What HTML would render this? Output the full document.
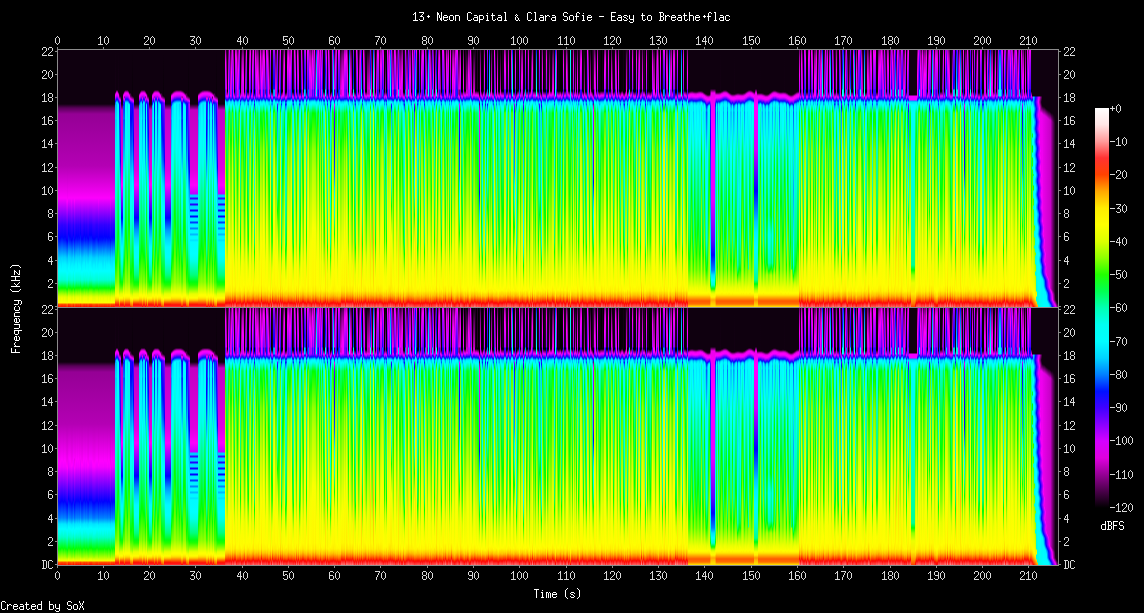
<!DOCTYPE html><html><head><meta charset="utf-8"><style>
html,body{margin:0;padding:0;background:#000;width:1144px;height:613px;overflow:hidden;position:relative}
.t{position:absolute;font-family:"Liberation Mono",monospace;font-size:13px;line-height:13px;white-space:pre;transform:scaleX(.77);transform-origin:0 0;height:13px}
</style></head><body>
<style>.sp{position:absolute;left:58px;width:1000px;height:257px;display:flex}.sp i{width:1px;height:257px;flex:none}.g0{background:linear-gradient(#0f000f,#0f000f 54px,#590059 58px,#950095 64px,#b400b4 116px,#fd00fd 148px,#3000ff 175px,#0100ff 187px,#0012ff 190px,#008cff 200px,#00d5ff 208px,#00ffff 221px,#00ffd1 230px,#00ff79 234px,#00ff04 238px,#d4ff00 246px,#f1ff00 248px,#ffff00 253px,#ff5700 254px,#ff1300 257px)}.g1{background:linear-gradient(#0f000f,#0f000f 54px,#590059 58px,#950095 64px,#b400b4 116px,#fd00fd 148px,#3700ff 175px,#0001ff 189px,#00cfff 208px,#00f7ff 216px,#00ffff 222px,#00ffd7 230px,#00ff9b 233px,#00ff0f 238px,#10ff00 239px,#a1ff00 244px,#dfff00 247px,#feff00 253px,#ff6100 254px,#ff1d00 257px)}.g2{background:linear-gradient(#0f000f,#0f000f 54px,#590059 58px,#950095 64px,#b400b4 116px,#fd00fd 148px,#3300ff 175px,#0001ff 188px,#00cbff 207px,#00f5ff 215px,#00ffff 221px,#00ffd4 230px,#00ff7d 234px,#00ff09 238px,#a5ff00 244px,#e2ff00 247px,#feff00 253px,#ff5b00 254px,#ff1700 257px)}.g3{background:linear-gradient(#0f000f,#0f000f 54px,#590059 58px,#950095 64px,#b400b4 116px,#fd00fd 148px,#2e00ff 175px,#0003ff 187px,#00d7ff 208px,#00ffff 221px,#00ffcf 230px,#00ff8f 233px,#00ff01 238px,#92ff00 243px,#d6ff00 246px,#f2ff00 248px,#ffff00 253px,#ff5400 254px,#ff0f00 257px)}.g4{background:linear-gradient(#0f000f,#0f000f 54px,#590059 58px,#950095 64px,#b400b4 116px,#fd00fd 148px,#2d00ff 175px,#0003ff 187px,#00d0ff 207px,#00f4ff 214px,#00ffff 221px,#00ffcf 230px,#00ff8f 233px,#00ff00 238px,#78ff00 242px,#d6ff00 246px,#f2ff00 248px,#ffff00 253px,#ff5300 254px,#ff0f00 257px)}.g5{background:linear-gradient(#0f000f,#0f000f 54px,#590059 58px,#950095 64px,#b400b4 116px,#fd00fd 148px,#3200ff 175px,#0003ff 188px,#00ccff 207px,#00f2ff 214px,#00ffff 221px,#00ffd3 230px,#00ff7b 234px,#00ff07 238px,#a7ff00 244px,#e3ff00 247px,#feff00 253px,#ff5a00 254px,#ff1500 257px)}.g6{background:linear-gradient(#0f000f,#0f000f 54px,#590059 58px,#950095 64px,#b400b4 116px,#fd00fd 148px,#2f00ff 175px,#0002ff 187px,#0014ff 190px,#00cfff 207px,#00f4ff 214px,#00ffff 221px,#00ffd0 230px,#00ff90 233px,#00ff02 238px,#d5ff00 246px,#f2ff00 248px,#ffff00 253px,#ff5500 254px,#ff1000 257px)}.g7{background:linear-gradient(#0f000f,#0f000f 54px,#590059 58px,#950095 64px,#b400b4 116px,#fd00fd 148px,#3100ff 175px,#0100ff 187px,#0011ff 190px,#00cdff 207px,#00f3ff 214px,#00ffff 221px,#00ffd2 230px,#00ff93 233px,#00ff05 238px,#a8ff00 244px,#e4ff00 247px,#feff00 253px,#ff5800 254px,#ff1300 257px)}.g8{background:linear-gradient(#0f000f,#0f000f 54px,#590059 58px,#950095 64px,#b400b4 116px,#fd00fd 148px,#ef00ff 152px,#3c00ff 175px,#0100ff 190px,#00caff 208px,#00f1ff 215px,#00ffff 222px,#00ffdc 230px,#00ff89 234px,#08ff00 239px,#9aff00 244px,#dbff00 247px,#fdff00 253px,#ff6900 254px,#ff2500 257px)}.g9{background:linear-gradient(#0f000f,#0f000f 54px,#590059 58px,#950095 64px,#b400b4 116px,#fe00ff 151px,#4400ff 175px,#0100ff 191px,#00c2ff 208px,#00ecff 215px,#00ffff 223px,#00ffe2 230px,#00ff94 234px,#00ff05 239px,#d4ff00 247px,#fbff00 253px,#ff7400 254px,#ff3200 257px)}.ga{background:linear-gradient(#0f000f,#0f000f 54px,#590059 58px,#950095 64px,#b400b4 116px,#fd00fd 148px,#2300ff 175px,#0001ff 184px,#0026ff 190px,#00d2ff 206px,#00ffff 218px,#00fff8 223px,#00ffc5 230px,#00ff0f 237px,#10ff00 238px,#86ff00 242px,#deff00 246px,#f7ff00 248px,#ffff00 253px,#ff4400 254px,#ff0202 257px)}.gb{background:linear-gradient(#0f000f,#0f000f 54px,#590059 58px,#950095 64px,#b400b4 116px,#fd00fd 148px,#2c00ff 175px,#0000ff 186px,#0018ff 190px,#009cff 201px,#00d1ff 207px,#00f5ff 214px,#00ffff 221px,#00ffce 230px,#00ff8d 233px,#02ff00 238px,#7aff00 242px,#d7ff00 246px,#f3ff00 248px,#ffff00 253px,#ff5100 254px,#ff0c00 257px)}.gc{background:linear-gradient(#0f000f,#0f000f 54px,#590059 58px,#950095 64px,#b400b4 116px,#fd00fd 148px,#3100ff 175px,#0200ff 187px,#0010ff 190px,#0095ff 201px,#00d4ff 208px,#00ffff 221px,#00ffd2 230px,#00ff94 233px,#00ff06 238px,#d3ff00 246px,#f0ff00 248px,#feff00 253px,#ff5900 254px,#ff1500 257px)}.gd{background:linear-gradient(#0f000f,#0f000f 54px,#590059 58px,#950095 64px,#b400b4 116px,#fd00fd 148px,#ee00ff 152px,#3b00ff 175px,#0000ff 190px,#007dff 200px,#00cbff 208px,#00f5ff 216px,#00ffff 222px,#00ffdb 230px,#00ff88 234px,#00ff16 238px,#09ff00 239px,#9bff00 244px,#dcff00 247px,#fdff00 253px,#ff6700 254px,#ff2400 257px)}.ge{background:linear-gradient(#0f000f,#0f000f 54px,#590059 58px,#950095 64px,#b400b4 116px,#fd00fd 148px,#3800ff 175px,#0100ff 189px,#00cdff 208px,#00efff 214px,#00ffff 222px,#00ffd9 230px,#00ff9d 233px,#00ff11 238px,#0eff00 239px,#84ff00 243px,#deff00 247px,#fdff00 253px,#ff6300 254px,#ff2000 257px)}.gf{background:linear-gradient(#0f000f,#0f000f 54px,#590059 58px,#950095 64px,#b400b4 116px,#fd00fd 148px,#2900ff 175px,#0100ff 185px,#001dff 190px,#0095ff 200px,#00d4ff 207px,#00ffff 220px,#00ffcb 230px,#07ff00 238px,#7eff00 242px,#daff00 246px,#f4ff00 248px,#ffff00 253px,#ff4c00 254px,#ff0700 257px)}.g10{background:linear-gradient(#0f000f,#0f000f 54px,#590059 58px,#950095 64px,#b400b4 116px,#fd00fd 148px,#fb00ff 151px,#4100ff 175px,#0600ff 190px,#00ccff 209px,#00f2ff 216px,#00ffff 223px,#00ffe0 230px,#00ff90 234px,#00ff00 239px,#93ff00 244px,#d7ff00 247px,#fbff00 253px,#ff7000 254px,#ff2e00 257px)}.g11{background:linear-gradient(#0f000f,#0f000f 54px,#590059 58px,#950095 64px,#b400b4 116px,#fd00fd 148px,#3300ff 175px,#0001ff 188px,#00cbff 207px,#00f2ff 214px,#00ffff 221px,#00ffd4 230px,#00ff96 233px,#00ff09 238px,#a5ff00 244px,#e2ff00 247px,#feff00 253px,#ff5b00 254px,#ff1700 257px)}.g12{background:linear-gradient(#0f000f,#0f000f 54px,#590059 58px,#950095 64px,#b400b4 116px,#fd00fd 148px,#2c00ff 175px,#0000ff 186px,#0019ff 190px,#00caff 206px,#00f5ff 214px,#00ffff 221px,#00ffcd 230px,#03ff00 238px,#7aff00 242px,#d7ff00 246px,#f3ff00 248px,#ffff00 253px,#ff5100 254px,#ff0c00 257px)}.g13{background:linear-gradient(#0f000f,#0f000f 54px,#590059 58px,#950095 64px,#b400b4 116px,#fd00fd 148px,#3000ff 175px,#0000ff 187px,#0012ff 190px,#008cff 200px,#00d5ff 208px,#00ffff 221px,#00ffd1 230px,#00ff92 233px,#00ff04 238px,#d4ff00 246px,#f1ff00 248px,#ffff00 253px,#ff5700 254px,#ff1300 257px)}.g14{background:linear-gradient(#0f000f,#0f000f 54px,#590059 58px,#950095 64px,#b400b4 116px,#fd00fd 148px,#2c00ff 175px,#0100ff 186px,#0018ff 190px,#0086ff 199px,#00d1ff 207px,#00f5ff 214px,#00ffff 221px,#00ffce 230px,#00ff8d 233px,#01ff00 238px,#79ff00 242px,#d7ff00 246px,#f3ff00 248px,#ffff00 253px,#ff5200 254px,#ff0d00 257px)}.g15{background:linear-gradient(#0f000f,#0f000f 54px,#590059 58px,#950095 64px,#b400b4 116px,#fd00fd 148px,#3200ff 175px,#0003ff 188px,#00ccff 207px,#00f6ff 215px,#00ffff 221px,#00ffd3 230px,#00ff7b 234px,#00ff07 238px,#a7ff00 244px,#e3ff00 247px,#feff00 253px,#ff5900 254px,#ff1500 257px)}.g16{background:linear-gradient(#0f000f,#0f000f 54px,#590059 58px,#950095 64px,#b400b4 116px,#fd00fd 148px,#2300ff 175px,#0002ff 184px,#0027ff 190px,#00d2ff 206px,#00ffff 218px,#00fff8 223px,#00ffc5 230px,#00ff0e 237px,#11ff00 238px,#a0ff00 243px,#dfff00 246px,#f7ff00 248px,#ffff00 253px,#ff4300 254px,#ff0202 257px)}.g17{background:linear-gradient(#0f000f,#0f000f 54px,#590059 58px,#950095 64px,#b400b4 116px,#fd00fd 148px,#3700ff 175px,#0001ff 189px,#00cfff 208px,#00ffff 222px,#00ffd7 230px,#00ff9b 233px,#00ff0f 238px,#10ff00 239px,#a0ff00 244px,#dfff00 247px,#feff00 253px,#ff6100 254px,#ff1e00 257px)}.g18{background:linear-gradient(#0f000f,#0f000f 54px,#590059 58px,#950095 64px,#b400b4 116px,#fd00fd 148px,#3900ff 175px,#0100ff 189px,#00cdff 208px,#00f6ff 216px,#00ffff 222px,#00ffd9 230px,#00ff85 234px,#00ff12 238px,#0dff00 239px,#9eff00 244px,#ddff00 247px,#fdff00 253px,#ff6400 254px,#ff2100 257px)}.g19{background:linear-gradient(#0f000f,#0f000f 54px,#590059 58px,#950095 64px,#b400b4 116px,#fd00fd 148px,#2f00ff 175px,#0001ff 187px,#0013ff 190px,#00ceff 207px,#00f0ff 213px,#00ffff 221px,#00ffd1 230px,#00ff91 233px,#00ff03 238px,#d4ff00 246px,#f1ff00 248px,#ffff00 253px,#ff5600 254px,#ff1100 257px)}.g1a{background:linear-gradient(#0f000f,#0f000f 54px,#590059 58px,#950095 64px,#b400b4 116px,#fd00fd 148px,#2800ff 175px,#0100ff 185px,#001eff 190px,#00cdff 206px,#00f3ff 213px,#00ffff 220px,#00fff1 225px,#00ffca 230px,#00ff17 237px,#08ff00 238px,#7fff00 242px,#daff00 246px,#f5ff00 248px,#ffff00 253px,#ff4c00 254px,#ff0700 257px)}.g1b{background:linear-gradient(#0f000f,#0f000f 54px,#590059 58px,#950095 64px,#b400b4 116px,#fd00fd 148px,#2b00ff 175px,#0002ff 186px,#001aff 190px,#00cbff 206px,#00f2ff 213px,#00ffff 220px,#00fff2 225px,#00ffcc 230px,#04ff00 238px,#96ff00 243px,#d8ff00 246px,#f3ff00 248px,#ffff00 253px,#ff4f00 254px,#ff0a00 257px)}.g1c{background:linear-gradient(#0f000f,#0f000f 54px,#590059 58px,#950095 64px,#b400b4 116px,#fd00fd 148px,#3400ff 175px,#0000ff 188px,#00caff 207px,#00f5ff 215px,#00ffff 221px,#00ffd5 230px,#00ff7e 234px,#00ff0b 238px,#a4ff00 244px,#e1ff00 247px,#feff00 253px,#ff5d00 254px,#ff1900 257px)}.g1d{background:linear-gradient(#0f000f,#0f000f 54px,#590059 58px,#950095 64px,#b400b4 116px,#fd00fd 148px,#3800ff 175px,#0000ff 189px,#00ceff 208px,#00f3ff 215px,#00ffff 222px,#00ffd8 230px,#00ff9c 233px,#00ff11 238px,#0fff00 239px,#9fff00 244px,#deff00 247px,#fdff00 253px,#ff6300 254px,#ff1f00 257px)}.g1e{background:linear-gradient(#0f000f,#0f000f 54px,#590059 58px,#950095 64px,#b400b4 116px,#fd00fd 148px,#2900ff 175px,#0100ff 185px,#001eff 190px,#00cdff 206px,#00f3ff 213px,#00ffff 220px,#00fff1 225px,#00ffca 230px,#00ff18 237px,#08ff00 238px,#7eff00 242px,#daff00 246px,#f4ff00 248px,#ffff00 253px,#ff4c00 254px,#ff0700 257px)}.g1f{background:linear-gradient(#0f000f,#0f000f 54px,#590059 58px,#950095 64px,#b400b4 116px,#fd00fd 148px,#2800ff 175px,#0000ff 185px,#001fff 190px,#00ceff 206px,#00f0ff 212px,#00ffff 220px,#00ffca 230px,#00ff16 237px,#09ff00 238px,#80ff00 242px,#dbff00 246px,#f5ff00 248px,#ffff00 253px,#ff4a00 254px,#ff0500 257px)}.g20{background:linear-gradient(#0f000f,#0f000f 54px,#590059 58px,#950095 64px,#b400b4 116px,#fd00fd 148px,#2800ff 175px,#0000ff 185px,#001fff 190px,#008cff 199px,#00d5ff 207px,#00ffff 220px,#00fff1 225px,#00ffca 230px,#00ff16 237px,#09ff00 238px,#7fff00 242px,#dbff00 246px,#f5ff00 248px,#ffff00 253px,#ff4b00 254px,#ff0600 257px)}.g21{background:linear-gradient(#0f000f,#0f000f 54px,#590059 58px,#950095 64px,#b400b4 116px,#fd00fd 148px,#3300ff 175px,#0000ff 188px,#00d2ff 208px,#00ffff 221px,#00ffd4 230px,#00ff7d 234px,#00ff0a 238px,#a5ff00 244px,#e2ff00 247px,#feff00 253px,#ff5c00 254px,#ff1800 257px)}.g22{background:linear-gradient(#0f000f,#0f000f 54px,#590059 58px,#950095 64px,#b400b4 116px,#fd00fd 148px,#3800ff 175px,#0000ff 189px,#00ceff 208px,#00f3ff 215px,#00ffff 222px,#00ffd8 230px,#00ff9c 233px,#00ff10 238px,#0fff00 239px,#9fff00 244px,#deff00 247px,#feff00 253px,#ff6200 254px,#ff1f00 257px)}.g23{background:linear-gradient(#0f000f,#0f000f 54px,#590059 58px,#950095 64px,#b400b4 116px,#fd00fd 148px,#3200ff 175px,#0002ff 188px,#00d3ff 208px,#00ffff 221px,#00ffd3 230px,#00ff7c 234px,#00ff08 238px,#a6ff00 244px,#e3ff00 247px,#feff00 253px,#ff5a00 254px,#ff1600 257px)}.g24{background:linear-gradient(#0f000f,#0f000f 54px,#590059 58px,#950095 64px,#b400b4 116px,#fd00fd 148px,#2d00ff 175px,#0003ff 187px,#00d0ff 207px,#00f1ff 213px,#00ffff 221px,#00ffcf 230px,#00ff8f 233px,#00ff00 238px,#78ff00 242px,#d6ff00 246px,#f2ff00 248px,#ffff00 253px,#ff5300 254px,#ff0f00 257px)}.g25{background:linear-gradient(#0f000f,#0f000f 54px,#590059 58px,#950095 64px,#b400b4 116px,#fd00fd 148px,#2e00ff 175px,#0003ff 187px,#0015ff 190px,#008fff 200px,#00d7ff 208px,#00ffff 221px,#00ffcf 230px,#00ff8f 233px,#00ff01 238px,#92ff00 243px,#d6ff00 246px,#f2ff00 248px,#ffff00 253px,#ff5400 254px,#ff0f00 257px)}.g26{background:linear-gradient(#0f000f,#0f000f 54px,#590059 58px,#950095 64px,#b400b4 116px,#fd00fd 148px,#ec00ff 152px,#3900ff 175px,#0003ff 190px,#0074ff 199px,#00ccff 208px,#00f2ff 215px,#00ffff 222px,#00ffd9 230px,#00ff9e 233px,#00ff13 238px,#0cff00 239px,#9dff00 244px,#ddff00 247px,#fdff00 253px,#ff6500 254px,#ff2100 257px)}.g27{background:linear-gradient(#0f000f,#0f000f 54px,#590059 58px,#950095 64px,#b400b4 116px,#fd00fd 148px,#3000ff 175px,#0000ff 187px,#0012ff 190px,#00ceff 207px,#00f3ff 214px,#00ffff 221px,#00ffd1 230px,#00ff92 233px,#00ff04 238px,#d4ff00 246px,#f1ff00 248px,#ffff00 253px,#ff5700 254px,#ff1200 257px)}.g28{background:linear-gradient(#0f000f,#0f000f 54px,#590059 58px,#950095 64px,#b400b4 116px,#fd00fd 148px,#3100ff 175px,#0100ff 187px,#0011ff 190px,#00cdff 207px,#00f3ff 214px,#00ffff 221px,#00ffd2 230px,#00ff7a 234px,#00ff05 238px,#a8ff00 244px,#e4ff00 247px,#feff00 253px,#ff5800 254px,#ff1400 257px)}.g29{background:linear-gradient(#0f000f,#0f000f 54px,#590059 58px,#950095 64px,#b400b4 116px,#fd00fd 148px,#3000ff 175px,#0100ff 187px,#0012ff 190px,#00cdff 207px,#00f3ff 214px,#00ffff 221px,#00ffd2 230px,#00ff79 234px,#00ff05 238px,#d3ff00 246px,#f1ff00 248px,#ffff00 253px,#ff5700 254px,#ff1300 257px)}.g2a{background:linear-gradient(#0f000f,#0f000f 54px,#590059 58px,#950095 64px,#b400b4 116px,#fd00fd 148px,#3100ff 175px,#0100ff 187px,#0010ff 190px,#0095ff 201px,#00d4ff 208px,#00ffff 221px,#00ffd2 230px,#00ff7a 234px,#00ff06 238px,#d3ff00 246px,#f0ff00 248px,#feff00 253px,#ff5800 254px,#ff1400 257px)}.g2b{background:linear-gradient(#0f000f,#0f000f 54px,#590059 58px,#950095 64px,#b400b4 116px,#fd00fd 148px,#3200ff 175px,#0002ff 188px,#00d3ff 208px,#00ffff 221px,#00ffd3 230px,#00ff95 233px,#00ff07 238px,#a6ff00 244px,#e3ff00 247px,#feff00 253px,#ff5a00 254px,#ff1600 257px)}.g2c{background:linear-gradient(#0f000f,#0f000f 54px,#590059 58px,#950095 64px,#b400b4 116px,#fd00fd 148px,#2d00ff 175px,#0200ff 186px,#0016ff 190px,#00d0ff 207px,#00f1ff 213px,#00ffff 221px,#00ffcf 230px,#00ff8f 233px,#00ff00 238px,#78ff00 242px,#d6ff00 246px,#f2ff00 248px,#ffff00 253px,#ff5300 254px,#ff0e00 257px)}.g2d{background:linear-gradient(#0f000f,#0f000f 54px,#590059 58px,#950095 64px,#b400b4 116px,#fd00fd 148px,#3000ff 175px,#0000ff 187px,#00ceff 207px,#00f3ff 214px,#00ffff 221px,#00ffd1 230px,#00ff78 234px,#00ff03 238px,#d4ff00 246px,#f1ff00 248px,#ffff00 253px,#ff5600 254px,#ff1200 257px)}.g2e{background:linear-gradient(#0f000f,#0f000f 54px,#590059 58px,#950095 64px,#b400b4 116px,#fd00fd 148px,#3500ff 175px,#0100ff 188px,#00c9ff 207px,#00f4ff 215px,#00ffff 221px,#00ffd6 230px,#00ff7f 234px,#00ff0c 238px,#a3ff00 244px,#e1ff00 247px,#feff00 253px,#ff5e00 254px,#ff1a00 257px)}.g2f{background:linear-gradient(#0f000f,#0f000f 54px,#590059 58px,#950095 64px,#b400b4 116px,#fd00fd 148px,#e900ff 153px,#3d00ff 175px,#0200ff 190px,#00c8ff 208px,#00f4ff 216px,#00ffff 222px,#00ffdd 230px,#00ff8b 234px,#06ff00 239px,#98ff00 244px,#daff00 247px,#fcff00 253px,#ff6b00 254px,#ff2800 257px)}.g30{background:linear-gradient(#0f000f,#0f000f 54px,#590059 58px,#950095 64px,#b400b4 116px,#fd00fd 148px,#2e00ff 175px,#0003ff 187px,#0015ff 190px,#0099ff 201px,#00d7ff 208px,#00ffff 221px,#00ffd0 230px,#00ff76 234px,#00ff01 238px,#77ff00 242px,#d5ff00 246px,#f2ff00 248px,#ffff00 253px,#ff5400 254px,#ff0f00 257px)}.g31{background:linear-gradient(#0f000f,#0f000f 54px,#590059 58px,#950095 64px,#b400b4 116px,#fd00fd 148px,#3200ff 175px,#0002ff 188px,#00d3ff 208px,#00ffff 221px,#00ffd4 230px,#00ff7c 234px,#00ff08 238px,#d2ff00 246px,#f0ff00 248px,#feff00 253px,#ff5b00 254px,#ff1600 257px)}.g32{background:linear-gradient(#0f000f,#0f000f 54px,#590059 58px,#950095 64px,#b400b4 116px,#fd00fd 148px,#2b00ff 175px,#0000ff 186px,#0019ff 190px,#0092ff 200px,#00d2ff 207px,#00f2ff 213px,#00ffff 221px,#00ffcd 230px,#03ff00 238px,#95ff00 243px,#d8ff00 246px,#f3ff00 248px,#ffff00 253px,#ff5000 254px,#ff0b00 257px)}.g33{background:linear-gradient(#0f000f,#0f000f 54px,#590059 58px,#950095 64px,#b400b4 116px,#fd00fd 148px,#3200ff 175px,#0003ff 188px,#00ccff 207px,#00f2ff 214px,#00ffff 221px,#00ffd3 230px,#00ff7b 234px,#00ff07 238px,#a6ff00 244px,#e3ff00 247px,#feff00 253px,#ff5a00 254px,#ff1600 257px)}.g34{background:linear-gradient(#0f000f,#140014 42px,#c700c7 44px,#f600f6 45px,#f900ff 46px,#c400ff 48px,#1e00ff 51px,#002dff 52px,#0084ff 53px,#006fff 54px,#00b6ff 55px,#00ddff 69px,#00cdff 70px,#00f0ff 91px,#00fffd 120px,#00ffc2 159px,#00ff7c 192px,#00ff02 213px,#79ff00 232px,#cfff00 239px,#fffd00 246px,#ffd600 249px,#ff0909 255px,#ff3232 257px)}.g35{background:linear-gradient(#0f000f,#0f000f 40px,#ba00ba 42px,#f400f4 43px,#fb00ff 44px,#cc00ff 46px,#2700ff 49px,#0020ff 50px,#00c1ff 52px,#00f0ff 53px,#00beff 54px,#00e2ff 69px,#00d2ff 70px,#00fdff 103px,#00fff1 129px,#00ff75 192px,#00ff03 212px,#7bff00 232px,#cfff00 239px,#fffd00 246px,#ffd600 249px,#ff0909 255px,#ff3232 257px)}.g36{background:linear-gradient(#0f000f,#0f000f 40px,#ba00ba 42px,#f400f4 43px,#fb00ff 44px,#cc00ff 46px,#2700ff 49px,#0020ff 50px,#00c1ff 52px,#00f0ff 53px,#00feff 69px,#00ffee 110px,#00ff00 200px,#8cff00 232px,#ffff00 245px,#fff700 247px,#ffd600 249px,#ff0909 255px,#ff3232 257px)}.g37{background:linear-gradient(#0f000f,#140014 42px,#c700c7 44px,#f600f6 45px,#f900ff 46px,#c400ff 48px,#1e00ff 51px,#002dff 52px,#00deff 54px,#00fbff 55px,#00ffff 61px,#00fffc 84px,#00ffe1 106px,#00ff70 140px,#01ff00 183px,#94ff00 232px,#ffff00 245px,#fff700 247px,#ffd600 249px,#ff0909 255px,#ff3232 257px)}.g38{background:linear-gradient(#0f000f,#0f000f 44px,#370037 45px,#400040 46px,#e400e4 49px,#db00ff 50px,#1d00ff 53px,#0400ff 54px,#00ebff 124px,#00ffff 141px,#00fff0 156px,#00ffbc 176px,#00ff5e 200px,#00ff00 217px,#36ff00 232px,#abff00 242px,#e9ff00 245px,#ffff00 248px,#ffdb00 251px,#ff3400 257px)}.g39{background:linear-gradient(#0f000f,#0f000f 46px,#320032 47px,#de00de 50px,#e100ff 51px,#6200ff 53px,#8c00ff 54px,#0300ff 111px,#00c8ff 142px,#00f9ff 162px,#00fffa 181px,#00ffc7 200px,#00ff05 231px,#01ff00 232px,#4fff00 237px,#e8ff00 244px,#fffd00 248px,#ffcf00 250px,#ff2000 254px,#ff0909 255px,#ff3232 257px)}.g3a{background:linear-gradient(#0f000f,#0f000f 54px,#c100c1 60px,#df00df 120px,#fd00fd 135px,#0000ff 168px,#0093ff 180px,#00d2ff 188px,#00faff 197px,#00fff8 207px,#00ffd9 214px,#00ff9a 222px,#00ff7d 225px,#00ff10 232px,#21ff00 235px,#e8ff00 244px,#fffd00 248px,#ffcf00 250px,#ff2000 254px,#ff0909 255px,#ff3232 257px)}.g3b{background:linear-gradient(#0f000f,#0f000f 42px,#260026 43px,#d800d8 45px,#f900f9 46px,#f600ff 47px,#e700ff 48px,#ba00ff 49px,#1300ff 52px,#003fff 53px,#4300ff 54px,#0800ff 55px,#003aff 56px,#0076ff 69px,#005bff 70px,#00f5ff 128px,#00fffd 159px,#00ffe1 192px,#00ffa0 204px,#00ff09 221px,#5fff00 232px,#b0ff00 237px,#f4ff00 243px,#fffd00 246px,#ffd600 249px,#ff0909 255px,#ff3232 257px)}.g3c{background:linear-gradient(#0f000f,#0f000f 40px,#160016 41px,#c800c8 43px,#f700f7 44px,#f900ff 45px,#ea00ff 46px,#880088 47px,#f600f6 49px,#d000ff 50px,#1d00ff 53px,#002cff 54px,#006bff 69px,#004fff 70px,#00eaff 117px,#00ffff 131px,#00ffea 153px,#00ffba 172px,#00ff4f 200px,#00ff00 213px,#5dff00 232px,#f8ff00 245px,#ffff00 247px,#ffdb00 250px,#ff0600 257px)}.g3d{background:linear-gradient(#0f000f,#0f000f 40px,#b600b6 42px,#f400f4 43px,#fc00ff 44px,#cf00ff 46px,#2900ff 49px,#001cff 50px,#00bfff 52px,#00efff 53px,#00ffff 58px,#00ffe4 103px,#00ff69 140px,#01ff00 180px,#95ff00 232px,#ffff00 245px,#fff700 247px,#ffd600 249px,#ff0909 255px,#ff3232 257px)}.g3e{background:linear-gradient(#0f000f,#0f000f 40px,#c100c1 42px,#f500f5 43px,#fa00ff 44px,#c800ff 46px,#2200ff 49px,#0028ff 50px,#00c6ff 52px,#00f3ff 53px,#00ffff 65px,#00fff9 94px,#00ffdd 112px,#00ff81 140px,#01ff00 190px,#91ff00 232px,#ffff00 245px,#fff700 247px,#ffd600 249px,#ff0909 255px,#ff3232 257px)}.g3f{background:linear-gradient(#0f000f,#0f000f 40px,#b600b6 42px,#f400f4 43px,#fc00ff 44px,#cf00ff 46px,#2900ff 49px,#001cff 50px,#00bfff 52px,#00efff 53px,#00d6ff 54px,#00f1ff 69px,#00ffff 99px,#00ffed 123px,#00ff8e 167px,#00ff51 192px,#00ff03 208px,#82ff00 232px,#ffff00 245px,#fff700 247px,#ffd600 249px,#ff0909 255px,#ff3232 257px)}.g40{background:linear-gradient(#0f000f,#0f000f 40px,#160016 41px,#c800c8 43px,#f700f7 44px,#f900ff 45px,#c400ff 47px,#1d00ff 50px,#002fff 51px,#0086ff 52px,#00ffff 54px,#00ffde 100px,#00ff50 140px,#00ff00 170px,#99ff00 232px,#ffff00 245px,#fff700 247px,#ffd600 249px,#ff0909 255px,#ff3232 257px)}.g41{background:linear-gradient(#0f000f,#0f000f 42px,#260026 43px,#d800d8 45px,#f900f9 46px,#e700ff 48px,#1300ff 52px,#003fff 53px,#00c1ff 54px,#00f0ff 55px,#00ffff 57px,#00ffe1 101px,#00ff5a 140px,#00ff00 174px,#98ff00 232px,#ffff00 245px,#fff700 247px,#ffd600 249px,#ff0909 255px,#ff3232 257px)}.g42{background:linear-gradient(#0f000f,#0f000f 43px,#480048 44px,#5c005c 46px,#fe00ff 49px,#0100ff 53px,#1f00ff 54px,#0000ff 68px,#006bff 100px,#00dfff 127px,#00ffff 152px,#00fff0 168px,#00ffb3 192px,#02ff00 223px,#32ff00 232px,#b5ff00 242px,#eeff00 245px,#ffff00 248px,#ffd400 251px,#ff2700 257px)}.g43{background:linear-gradient(#0f000f,#0f000f 44px,#330033 46px,#d600d6 49px,#e900ff 50px,#2b00ff 53px,#2100ff 54px,#0000ff 69px,#0065ff 99px,#00e1ff 127px,#00ffff 149px,#00fff1 163px,#00ffc0 182px,#00ff79 200px,#02ff00 222px,#2bff00 232px,#a6ff00 242px,#e6ff00 245px,#ffff00 248px,#ffde00 251px,#ff3b00 257px)}.g44{background:linear-gradient(#0f000f,#090009 46px,#ec00ec 50px,#d300ff 51px,#1100ff 54px,#0e00ff 55px,#0005ff 63px,#0080ff 100px,#00efff 127px,#00ffff 141px,#00ffcd 168px,#03ff00 215px,#27ff00 231px,#97ff00 242px,#ecff00 246px,#fffe00 249px,#ffd000 252px,#ff4e00 257px)}.g45{background:linear-gradient(#0f000f,#0f000f 46px,#160016 47px,#fd00ff 51px,#7e00ff 53px,#5200ff 54px,#0000ff 91px,#0048ff 109px,#00c3ff 128px,#00f2ff 140px,#00fffe 158px,#00ffe3 174px,#00ff7f 200px,#00ff25 215px,#00ff01 227px,#1bff00 233px,#43ff00 236px,#e8ff00 244px,#fffd00 248px,#ffcf00 250px,#ff2000 254px,#ff0909 255px,#ff3232 257px)}.g46{background:linear-gradient(#0f000f,#0f000f 42px,#190019 43px,#cb00cb 45px,#f700f7 46px,#f800ff 47px,#c200ff 49px,#1b00ff 52px,#0032ff 53px,#003cff 54px,#0091ff 55px,#00ccff 56px,#00ecff 69px,#00e0ff 70px,#00ffff 102px,#00ffeb 127px,#00ff79 181px,#00ff49 197px,#00ff00 210px,#7fff00 232px,#c7ff00 238px,#ffff00 245px,#fff700 247px,#ffd600 249px,#ff0909 255px,#ff3232 257px)}.g47{background:linear-gradient(#0f000f,#0f000f 41px,#f300f3 44px,#fc00ff 45px,#d200ff 47px,#2c00ff 50px,#0017ff 51px,#00bbff 53px,#00d7ff 55px,#00f1ff 69px,#00ffff 98px,#00fff0 121px,#00ff8d 167px,#00ff4c 193px,#00ff02 208px,#82ff00 232px,#ffff00 245px,#fff700 247px,#ffd600 249px,#ff0909 255px,#ff3232 257px)}.g48{background:linear-gradient(#0f000f,#0f000f 40px,#f100f1 43px,#fe00ff 44px,#d700ff 46px,#000eff 50px,#00b5ff 52px,#00e9ff 53px,#00fdff 69px,#00ffed 112px,#00ff01 201px,#8bff00 232px,#ffff00 245px,#fff700 247px,#ffd600 249px,#ff0909 255px,#ff3232 257px)}.g49{background:linear-gradient(#0f000f,#0f000f 40px,#c000c0 42px,#f500f5 43px,#fa00ff 44px,#c800ff 46px,#ba00ba 47px,#f200f2 48px,#d500ff 49px,#2300ff 52px,#0027ff 53px,#0081ff 54px,#00a0ff 63px,#00b2ff 69px,#009bff 70px,#00ffff 118px,#00fff0 133px,#00ffb7 154px,#00ff02 201px,#50ff00 220px,#6dff00 232px,#cbff00 242px,#f8ff00 245px,#ffff00 247px,#ffdb00 250px,#ff0600 257px)}.g4a{background:linear-gradient(#0f000f,#0f000f 40px,#c000c0 42px,#f500f5 43px,#fa00ff 44px,#c800ff 46px,#2300ff 49px,#0027ff 50px,#00c6ff 52px,#00f2ff 53px,#00e4ff 54px,#00ffff 91px,#00ffdf 124px,#00ff36 192px,#01ff00 205px,#87ff00 232px,#ffff00 245px,#fff700 247px,#ffd600 249px,#ff0909 255px,#ff3232 257px)}.g4b{background:linear-gradient(#0f000f,#0f000f 40px,#f100f1 43px,#fe00ff 44px,#d700ff 46px,#000eff 50px,#00b5ff 52px,#00e9ff 53px,#00daff 54px,#00f4ff 69px,#00ffff 96px,#00ffef 120px,#00ff92 162px,#00ff48 192px,#00ff02 207px,#83ff00 232px,#ffff00 245px,#fff700 247px,#ffd600 249px,#ff0909 255px,#ff3232 257px)}.g4c{background:linear-gradient(#0f000f,#0f000f 41px,#f300f3 44px,#fc00ff 45px,#ee00ff 46px,#7a007a 47px,#e800e8 49px,#df00ff 50px,#2d00ff 53px,#0500ff 56px,#0031ff 69px,#0013ff 70px,#0077ff 100px,#00daff 121px,#00ffff 140px,#00fff1 162px,#00ffb1 188px,#00ff7d 200px,#02ff00 218px,#51ff00 232px,#edff00 244px,#ffff00 247px,#ffdb00 250px,#ff0600 257px)}.g4d{background:linear-gradient(#0f000f,#0f000f 42px,#190019 43px,#cb00cb 45px,#f700f7 46px,#f800ff 47px,#c200ff 49px,#1b00ff 52px,#0032ff 53px,#00b7ff 54px,#00eaff 55px,#00ffff 57px,#00fff9 82px,#00ffdd 103px,#00ff5c 140px,#01ff00 175px,#97ff00 232px,#ffff00 245px,#fff700 247px,#ffd600 249px,#ff0909 255px,#ff3232 257px)}.g4e{background:linear-gradient(#0f000f,#0f000f 44px,#370037 45px,#400040 46px,#e400e4 49px,#db00ff 50px,#1d00ff 53px,#0100ff 54px,#00edff 124px,#00ffff 140px,#00ffc6 172px,#00ff5a 200px,#02ff00 217px,#37ff00 232px,#abff00 242px,#e9ff00 245px,#ffff00 248px,#ffdb00 251px,#ff3400 257px)}.g4f{background:linear-gradient(#0f000f,#0f000f 46px,#320032 47px,#de00de 50px,#e100ff 51px,#6200ff 53px,#4300ff 54px,#0000ff 84px,#005fff 109px,#00d3ff 129px,#00f8ff 141px,#00fffa 161px,#00ffd1 179px,#00ff7e 200px,#00ff22 215px,#00ff00 225px,#18ff00 232px,#5aff00 237px,#e8ff00 244px,#fffd00 248px,#ffcf00 250px,#ff2000 254px,#ff0909 255px,#ff3232 257px)}.g50{background:linear-gradient(#0f000f,#0f000f 43px,#c100c1 45px,#f500f5 46px,#fa00ff 47px,#c800ff 49px,#2200ff 52px,#0027ff 53px,#0012ff 54px,#00b8ff 56px,#00bcff 57px,#00dfff 69px,#00cfff 70px,#00ffff 109px,#00fff1 130px,#00ff7c 191px,#01ff00 213px,#7aff00 232px,#c5ff00 238px,#ffff00 245px,#fff700 247px,#ffd600 249px,#ff0909 255px,#ff3232 257px)}.g51{background:linear-gradient(#0f000f,#0f000f 41px,#430043 42px,#ef00ef 44px,#fe00fe 45px,#df00ff 47px,#0001ff 51px,#00f9ff 54px,#00ffff 55px,#00ffdf 101px,#00ff57 140px,#01ff00 173px,#98ff00 232px,#ffff00 245px,#fff700 247px,#ffd600 249px,#ff0909 255px,#ff3232 257px)}.g52{background:linear-gradient(#0f000f,#0f000f 40px,#400040 41px,#ef00ef 43px,#fe00fe 44px,#e100ff 46px,#a200a2 47px,#d900d9 48px,#ee00ff 49px,#0100ff 53px,#0100ff 58px,#002dff 69px,#0010ff 70px,#0070ff 99px,#00dfff 123px,#00ffff 141px,#00ffef 164px,#00ffb7 187px,#00ff80 200px,#00ff00 218px,#51ff00 232px,#edff00 244px,#ffff00 247px,#ffdb00 250px,#ff0600 257px)}.g53{background:linear-gradient(#0f000f,#0f000f 40px,#bc00bc 42px,#f500f5 43px,#fb00ff 44px,#cb00ff 46px,#2500ff 49px,#0022ff 50px,#00c3ff 52px,#00f1ff 53px,#00fdff 69px,#00ffec 113px,#00ff02 201px,#8aff00 232px,#ffff00 245px,#fff700 247px,#ffd600 249px,#ff0909 255px,#ff3232 257px)}.g54{background:linear-gradient(#0f000f,#0f000f 40px,#c100c1 42px,#f500f5 43px,#fa00ff 44px,#c800ff 46px,#2200ff 49px,#0028ff 50px,#00c6ff 52px,#00f3ff 53px,#00ffff 58px,#00fffc 82px,#00ffe0 105px,#00ff67 141px,#00ff00 180px,#95ff00 232px,#ffff00 245px,#fff700 247px,#ffd600 249px,#ff0909 255px,#ff3232 257px)}.g55{background:linear-gradient(#0f000f,#0f000f 40px,#bc00bc 42px,#f500f5 43px,#fb00ff 44px,#cb00ff 46px,#b800b8 47px,#ef00ef 48px,#d800ff 49px,#2600ff 52px,#0022ff 53px,#0069ff 69px,#004dff 70px,#00ecff 118px,#00ffff 131px,#00ffee 151px,#00ffb8 173px,#00ff50 200px,#00ff01 213px,#5cff00 232px,#f8ff00 245px,#ffff00 247px,#ffdb00 250px,#ff0600 257px)}.g56{background:linear-gradient(#0f000f,#0f000f 40px,#400040 41px,#ef00ef 43px,#fe00fe 44px,#e100ff 46px,#0100ff 50px,#00a9ff 52px,#00e2ff 53px,#00cfff 54px,#00ecff 68px,#00e1ff 70px,#00ffff 102px,#00ffec 126px,#00ff7e 178px,#00ff5b 192px,#00ff04 209px,#80ff00 232px,#c7ff00 238px,#ffff00 245px,#fff700 247px,#ffd600 249px,#ff0909 255px,#ff3232 257px)}.g57{background:linear-gradient(#0f000f,#0f000f 41px,#430043 42px,#ef00ef 44px,#fe00fe 45px,#df00ff 47px,#0001ff 51px,#005dff 52px,#00f0ff 54px,#00ffff 63px,#00fffa 89px,#00ffde 109px,#00ff74 141px,#00ff01 185px,#93ff00 232px,#ffff00 245px,#fff700 247px,#ffd600 249px,#ff0909 255px,#ff3232 257px)}.g58{background:linear-gradient(#0f000f,#0f000f 43px,#c100c1 45px,#f500f5 46px,#fa00ff 47px,#c800ff 49px,#2200ff 52px,#0027ff 53px,#00adff 54px,#00e5ff 55px,#00feff 56px,#00ffff 58px,#00ffe3 101px,#00ff5e 140px,#01ff00 176px,#97ff00 232px,#ffff00 245px,#fff700 247px,#ffd600 249px,#ff0909 255px,#ff3232 257px)}.g59{background:linear-gradient(#0f000f,#0f000f 43px,#480048 44px,#5c005c 46px,#fe00ff 49px,#0100ff 53px,#1800ff 54px,#0004ff 66px,#00eaff 129px,#00ffff 149px,#00ffef 166px,#00ffae 191px,#01ff00 222px,#34ff00 232px,#b5ff00 242px,#eeff00 245px,#ffff00 248px,#ffd400 251px,#ff2700 257px)}.g5a{background:linear-gradient(#0f000f,#0f000f 44px,#330033 46px,#d600d6 49px,#e900ff 50px,#2b00ff 53px,#4000ff 54px,#0001ff 83px,#0063ff 109px,#00e2ff 134px,#00ffff 158px,#00ffee 174px,#00ffc1 191px,#00ff9b 200px,#00ff02 225px,#22ff00 232px,#a6ff00 242px,#e6ff00 245px,#ffff00 248px,#ffde00 251px,#ff3b00 257px)}.g5b{background:linear-gradient(#0f000f,#090009 46px,#ec00ec 50px,#d300ff 51px,#5500ff 53px,#0600ff 90px,#0042ff 109px,#00a9ff 125px,#00e1ff 137px,#00ffff 161px,#00ffe8 178px,#00ffc1 191px,#02ff00 228px,#14ff00 232px,#97ff00 242px,#ecff00 246px,#fffe00 249px,#ffd000 252px,#ff4e00 257px)}.g5c{background:linear-gradient(#0f000f,#0f000f 46px,#160016 47px,#fd00ff 51px,#7e00ff 53px,#0003ff 111px,#0084ff 128px,#00d2ff 142px,#00faff 159px,#00fff9 177px,#00ffbf 198px,#00ff51 215px,#00ff02 232px,#39ff00 236px,#e8ff00 244px,#fffd00 248px,#ffcf00 250px,#ff2000 254px,#ff0909 255px,#ff3232 257px)}.g5d{background:linear-gradient(#0f000f,#0f000f 43px,#450045 44px,#f000f0 46px,#ff00ff 47px,#dd00ff 49px,#0004ff 53px,#3b00ff 54px,#0001ff 55px,#005cff 56px,#0080ff 57px,#0084ff 58px,#00b1ff 69px,#009bff 70px,#00f6ff 113px,#00fffb 138px,#00ffd0 177px,#00ffb5 192px,#00ff98 198px,#00ff02 218px,#6dff00 232px,#ccff00 239px,#fffd00 246px,#ffd600 249px,#ff0909 255px,#ff3232 257px)}.g5e{background:linear-gradient(#0f000f,#0f000f 42px,#4e004e 43px,#f100f1 45px,#fe00ff 46px,#d800ff 48px,#000cff 52px,#0067ff 53px,#007fff 54px,#00c6ff 55px,#00d8ff 56px,#00f2ff 69px,#00ffff 98px,#00ffef 121px,#00ff8b 167px,#00ff4d 192px,#00ff00 208px,#82ff00 232px,#ffff00 245px,#fff700 247px,#ffd600 249px,#ff0909 255px,#ff3232 257px)}.g5f{background:linear-gradient(#0f000f,#0f000f 41px,#430043 42px,#ef00ef 44px,#fe00fe 45px,#df00ff 47px,#0001ff 51px,#00acff 53px,#00e8ff 55px,#00ffff 88px,#00ffe3 120px,#00ff2c 192px,#00ff02 203px,#88ff00 232px,#ffff00 245px,#fff700 247px,#ffd600 249px,#ff0909 255px,#ff3232 257px)}.g60{background:linear-gradient(#0f000f,#0f000f 40px,#240024 41px,#d700d7 43px,#f900f9 44px,#e700ff 46px,#1400ff 50px,#003eff 51px,#00d3ff 53px,#00ffff 54px,#00fff8 75px,#00ffd5 100px,#00ff40 140px,#00ff00 164px,#9cff00 232px,#ffff00 245px,#fff700 247px,#ffd600 249px,#ff0909 255px,#ff3232 257px)}.g61{background:linear-gradient(#0f000f,#0f000f 40px,#4a004a 41px,#f000f0 43px,#ff00ff 44px,#da00ff 46px,#0009ff 50px,#00b1ff 52px,#00e7ff 53px,#00ffff 54px,#00ffe0 101px,#00ff59 140px,#00ff01 173px,#98ff00 232px,#ffff00 245px,#fff700 247px,#ffd600 249px,#ff0909 255px,#ff3232 257px)}.g62{background:linear-gradient(#0f000f,#0f000f 40px,#b800b8 42px,#f400f4 43px,#fb00ff 44px,#cd00ff 46px,#2800ff 49px,#001eff 50px,#00c0ff 52px,#00efff 53px,#00e3ff 54px,#00ffff 92px,#00ffde 125px,#00ff3e 190px,#00ff01 205px,#86ff00 232px,#ffff00 245px,#fff700 247px,#ffd600 249px,#ff0909 255px,#ff3232 257px)}.g63{background:linear-gradient(#0f000f,#0f000f 40px,#c000c0 42px,#f500f5 43px,#fa00ff 44px,#c800ff 46px,#2300ff 49px,#0027ff 50px,#00c5ff 52px,#00f2ff 53px,#00ffff 63px,#00fffa 91px,#00ffdf 110px,#00ff7a 141px,#01ff00 188px,#92ff00 232px,#ffff00 245px,#fff700 247px,#ffd600 249px,#ff0909 255px,#ff3232 257px)}.g64{background:linear-gradient(#0f000f,#0f000f 40px,#c100c1 42px,#f500f5 43px,#fa00ff 44px,#c800ff 46px,#2200ff 49px,#0028ff 50px,#00c6ff 52px,#00f3ff 53px,#00ffff 67px,#00ffe7 109px,#01ff00 193px,#8fff00 232px,#ffff00 245px,#fff700 247px,#ffd600 249px,#ff0909 255px,#ff3232 257px)}.g65{background:linear-gradient(#0f000f,#0f000f 40px,#c000c0 42px,#f500f5 43px,#fa00ff 44px,#c800ff 46px,#2300ff 49px,#0027ff 50px,#00c5ff 52px,#00f2ff 53px,#00d2ff 54px,#00efff 69px,#00e2ff 70px,#00ffff 101px,#00ffee 124px,#00ff74 181px,#00ff44 197px,#00ff02 209px,#80ff00 232px,#c7ff00 238px,#ffff00 245px,#fff700 247px,#ffd600 249px,#ff0909 255px,#ff3232 257px)}.g66{background:linear-gradient(#0f000f,#0f000f 40px,#b800b8 42px,#f400f4 43px,#fb00ff 44px,#cd00ff 46px,#2800ff 49px,#001eff 50px,#00c0ff 52px,#00efff 53px,#00ffff 63px,#00fff9 92px,#00ffde 110px,#00ff7b 140px,#00ff01 187px,#92ff00 232px,#ffff00 245px,#fff700 247px,#ffd600 249px,#ff0909 255px,#ff3232 257px)}.g67{background:linear-gradient(#0f000f,#0f000f 40px,#4a004a 41px,#f000f0 43px,#ff00ff 44px,#da00ff 46px,#a900a9 47px,#e000e0 48px,#e700ff 49px,#0009ff 53px,#0035ff 54px,#006dff 68px,#0070ff 69px,#0055ff 70px,#00eaff 116px,#00ffff 130px,#00ffeb 151px,#00ffbc 170px,#00ff4a 200px,#00ff02 212px,#5eff00 232px,#f8ff00 245px,#ffff00 247px,#ffdb00 250px,#ff0600 257px)}.g68{background:linear-gradient(#0f000f,#0f000f 40px,#240024 41px,#d700d7 43px,#f900f9 44px,#e700ff 46px,#910091 47px,#ff00ff 49px,#1400ff 53px,#0001ff 54px,#0041ff 69px,#0023ff 70px,#0085ff 100px,#00dfff 120px,#00ffff 138px,#00ffed 161px,#00ffb6 183px,#00ff71 200px,#00ff05 216px,#54ff00 232px,#edff00 244px,#ffff00 247px,#ffdb00 250px,#ff0600 257px)}.g69{background:linear-gradient(#0f000f,#0f000f 41px,#430043 42px,#ef00ef 44px,#fe00fe 45px,#df00ff 47px,#0001ff 51px,#00f4ff 54px,#00ffff 59px,#00ffe4 103px,#00ff69 140px,#01ff00 180px,#95ff00 232px,#ffff00 245px,#fff700 247px,#ffd600 249px,#ff0909 255px,#ff3232 257px)}.g6a{background:linear-gradient(#0f000f,#0f000f 42px,#4e004e 43px,#f100f1 45px,#fe00ff 46px,#d800ff 48px,#000cff 52px,#00d3ff 54px,#00f8ff 55px,#00ffff 59px,#00ffe4 102px,#00ff65 140px,#00ff00 178px,#96ff00 232px,#ffff00 245px,#fff700 247px,#ffd600 249px,#ff0909 255px,#ff3232 257px)}.g6b{background:linear-gradient(#0f000f,#0f000f 43px,#450045 44px,#f000f0 46px,#ff00ff 47px,#dd00ff 49px,#0004ff 53px,#006dff 54px,#00ebff 56px,#00ffff 66px,#00ffe5 109px,#01ff00 191px,#90ff00 232px,#ffff00 245px,#fff700 247px,#ffd600 249px,#ff0909 255px,#ff3232 257px)}.g6c{background:linear-gradient(#0f000f,#0f000f 43px,#480048 44px,#5c005c 46px,#fe00ff 49px,#0100ff 53px,#2200ff 54px,#0002ff 70px,#0064ff 99px,#00ddff 127px,#00fbff 140px,#00ffff 153px,#00ffee 170px,#00ffb6 192px,#00ff00 223px,#31ff00 232px,#b5ff00 242px,#eeff00 245px,#ffff00 248px,#ffd400 251px,#ff2700 257px)}.g6d{background:linear-gradient(#0f000f,#0f000f 44px,#330033 46px,#d600d6 49px,#e900ff 50px,#2b00ff 53px,#0500ff 54px,#00ebff 124px,#00ffff 140px,#00fff0 155px,#00ffbe 174px,#00ff57 200px,#00ff00 216px,#34ff00 232px,#a6ff00 242px,#f3ff00 246px,#ffff00 248px,#ffde00 251px,#ff3b00 257px)}.g6e{background:linear-gradient(#0f000f,#090009 46px,#ec00ec 50px,#d300ff 51px,#5500ff 53px,#8100ff 54px,#0100ff 109px,#00c8ff 140px,#00f4ff 157px,#00ffff 173px,#00ffed 188px,#00ffc9 199px,#01ff00 231px,#97ff00 242px,#ecff00 246px,#fff700 250px,#ffb500 253px,#ff4e00 257px)}.g6f{background:linear-gradient(#0f000f,#0f000f 46px,#160016 47px,#fd00ff 51px,#7e00ff 53px,#c300ff 54px,#5d00ff 100px,#0200ff 122px,#0085ff 140px,#00b9ff 151px,#00efff 168px,#00ffff 185px,#00ffd5 203px,#00ff04 233px,#2eff00 236px,#d7ff00 243px,#f4ff00 245px,#fffd00 248px,#ffcf00 250px,#ff2000 254px,#ff0909 255px,#ff3232 257px)}.g70{background:linear-gradient(#0f000f,#0f000f 54px,#c100c1 60px,#df00df 120px,#fd00fd 135px,#be00ff 144px,#00c6ff 145px,#00c9ff 147px,#3700ff 148px,#3400ff 149px,#00ceff 150px,#00d3ff 153px,#2500ff 154px,#2200ff 155px,#00d7ff 156px,#00dbff 159px,#1300ff 160px,#1000ff 161px,#00dfff 162px,#00e3ff 165px,#0100ff 166px,#0003ff 167px,#00e7ff 168px,#00eaff 171px,#0034ff 172px,#0041ff 173px,#00edff 174px,#00f0ff 177px,#007dff 178px,#0088ff 179px,#00f3ff 180px,#00f5ff 183px,#00b5ff 184px,#00bdff 185px,#00f7ff 186px,#00f9ff 189px,#00deff 190px,#00faff 192px,#00fffe 204px,#00ffe9 211px,#00ff7d 225px,#00ff10 232px,#21ff00 235px,#e8ff00 244px,#fffd00 248px,#ffcf00 250px,#ff2000 254px,#ff0909 255px,#ff3232 257px)}.g71{background:linear-gradient(#0f000f,#0f000f 43px,#420042 44px,#ef00ef 46px,#fe00fe 47px,#f100ff 48px,#df00ff 49px,#0000ff 53px,#3400ff 54px,#000bff 55px,#0066ff 56px,#008bff 57px,#00bbff 69px,#00a6ff 70px,#00feff 119px,#00ffc6 178px,#00ffa7 193px,#00ff04 217px,#6fff00 232px,#cdff00 239px,#fffd00 246px,#ffd600 249px,#ff0909 255px,#ff3232 257px)}.g72{background:linear-gradient(#0f000f,#0f000f 42px,#450045 43px,#f000f0 45px,#fe00fe 46px,#dd00ff 48px,#0003ff 52px,#005fff 53px,#0074ff 54px,#00bdff 55px,#00d5ff 56px,#00f1ff 69px,#00ffff 99px,#00ffed 123px,#00ff85 171px,#00ff51 192px,#00ff03 208px,#82ff00 232px,#ffff00 245px,#fff700 247px,#ffd600 249px,#ff0909 255px,#ff3232 257px)}.g73{background:linear-gradient(#0f000f,#0f000f 41px,#380038 42px,#eb00eb 44px,#fc00fc 45px,#e400ff 47px,#0600ff 51px,#0052ff 52px,#00a3ff 53px,#00e4ff 55px,#00ffff 90px,#00ffdc 125px,#00ff3a 190px,#00ff03 204px,#87ff00 232px,#ffff00 245px,#fff700 247px,#ffd600 249px,#ff0909 255px,#ff3232 257px)}.g74{background:linear-gradient(#0f000f,#0f000f 40px,#190019 41px,#cc00cc 43px,#f700f7 44px,#f800ff 45px,#e900ff 46px,#c100ff 47px,#1b00ff 50px,#0033ff 51px,#00cdff 53px,#00f3ff 54px,#00ffff 69px,#00fffa 97px,#00ffe0 114px,#01ff00 196px,#8eff00 232px,#ffff00 245px,#fff700 247px,#ffd600 249px,#ff0909 255px,#ff3232 257px)}.g75{background:linear-gradient(#0f000f,#0f000f 40px,#420042 41px,#ef00ef 43px,#fe00fe 44px,#e000ff 46px,#0000ff 50px,#00aaff 52px,#00e3ff 53px,#00fcff 69px,#00ffed 114px,#01ff00 203px,#89ff00 232px,#ffff00 245px,#fff700 247px,#ffd600 249px,#ff0909 255px,#ff3232 257px)}.g76{background:linear-gradient(#0f000f,#0f000f 40px,#f300f3 43px,#fc00ff 44px,#d100ff 46px,#2b00ff 49px,#0019ff 50px,#00bcff 52px,#00edff 53px,#00e0ff 54px,#00ffff 93px,#00ffe1 125px,#00ff44 190px,#00ff01 206px,#85ff00 232px,#ffff00 245px,#fff700 247px,#ffd600 249px,#ff0909 255px,#ff3232 257px)}.g77{background:linear-gradient(#0f000f,#0f000f 40px,#be00be 42px,#f500f5 43px,#fa00ff 44px,#ca00ff 46px,#2400ff 49px,#0025ff 50px,#00c4ff 52px,#00f1ff 53px,#00ffff 59px,#00fffb 85px,#00ffe0 106px,#00ff6e 140px,#00ff00 182px,#94ff00 232px,#ffff00 245px,#fff700 247px,#ffd600 249px,#ff0909 255px,#ff3232 257px)}.g78{background:linear-gradient(#0f000f,#0f000f 40px,#c100c1 42px,#f500f5 43px,#fa00ff 44px,#c800ff 46px,#2200ff 49px,#0028ff 50px,#00c6ff 52px,#00f2ff 53px,#00ffff 65px,#00fff9 94px,#00ffdf 111px,#00ff81 140px,#01ff00 190px,#91ff00 232px,#ffff00 245px,#fff700 247px,#ffd600 249px,#ff0909 255px,#ff3232 257px)}.g79{background:linear-gradient(#0f000f,#0f000f 40px,#c100c1 42px,#f500f5 43px,#fa00ff 44px,#c800ff 46px,#bb00bb 47px,#f200f2 48px,#d500ff 49px,#2200ff 52px,#0028ff 53px,#3400ff 54px,#0d00ff 69px,#2000ff 70px,#0002ff 85px,#0035ff 100px,#00d4ff 130px,#00f1ff 140px,#00ffff 156px,#00fff9 171px,#00ffd2 192px,#00ffad 200px,#00ff00 222px,#44ff00 232px,#edff00 244px,#ffff00 247px,#ffdb00 250px,#ff0600 257px)}.g7a{background:linear-gradient(#0f000f,#0f000f 40px,#be00be 42px,#f500f5 43px,#fa00ff 44px,#ca00ff 46px,#b900b9 47px,#f000f0 48px,#d600ff 49px,#2400ff 52px,#0025ff 53px,#005bff 69px,#003fff 70px,#00e3ff 117px,#00ffff 134px,#00ffed 155px,#00ffb9 176px,#00ff5c 200px,#00ff03 214px,#5aff00 232px,#edff00 244px,#ffff00 247px,#ffdb00 250px,#ff0600 257px)}.g7b{background:linear-gradient(#0f000f,#0f000f 40px,#f300f3 43px,#fc00ff 44px,#d100ff 46px,#2b00ff 49px,#0019ff 50px,#00bcff 52px,#00edff 53px,#00ffff 55px,#00fff9 82px,#00ffdd 103px,#00ff5c 140px,#00ff01 174px,#97ff00 232px,#ffff00 245px,#fff700 247px,#ffd600 249px,#ff0909 255px,#ff3232 257px)}.g7c{background:linear-gradient(#0f000f,#0f000f 40px,#420042 41px,#ef00ef 43px,#fe00fe 44px,#e000ff 46px,#a300a3 47px,#da00da 48px,#ec00ff 49px,#0000ff 53px,#0047ff 54px,#007eff 68px,#0081ff 69px,#0066ff 70px,#00e7ff 112px,#00ffff 127px,#00ffe9 148px,#00ffb5 168px,#00ff3a 200px,#00ff02 210px,#62ff00 232px,#f8ff00 245px,#ffff00 247px,#ffdb00 250px,#ff0600 257px)}.g7d{background:linear-gradient(#0f000f,#0f000f 40px,#190019 41px,#cc00cc 43px,#f700f7 44px,#f800ff 45px,#e900ff 46px,#c100ff 47px,#1b00ff 50px,#0033ff 51px,#00cdff 53px,#00edff 54px,#00fdff 69px,#00ffeb 113px,#00ff00 201px,#8bff00 232px,#ffff00 245px,#fff700 247px,#ffd600 249px,#ff0909 255px,#ff3232 257px)}.g7e{background:linear-gradient(#0f000f,#0f000f 41px,#380038 42px,#eb00eb 44px,#fc00fc 45px,#e400ff 47px,#0600ff 51px,#00e3ff 54px,#00f6ff 55px,#00ffff 67px,#00ffe5 110px,#01ff00 193px,#8fff00 232px,#ffff00 245px,#fff700 247px,#ffd600 249px,#ff0909 255px,#ff3232 257px)}.g7f{background:linear-gradient(#0f000f,#0f000f 42px,#450045 43px,#f000f0 45px,#fe00fe 46px,#5b005b 47px,#6e006e 48px,#dd00dd 50px,#ea00ff 51px,#0200ff 55px,#0024ff 56px,#0060ff 69px,#0044ff 70px,#00e8ff 118px,#00ffff 133px,#00fff0 152px,#00ffb2 177px,#00ff58 200px,#00ff00 214px,#5bff00 232px,#f8ff00 245px,#ffff00 247px,#ffdb00 250px,#ff0600 257px)}.g80{background:linear-gradient(#0f000f,#0f000f 43px,#420042 44px,#ef00ef 46px,#fe00fe 47px,#df00ff 49px,#0000ff 53px,#007cff 54px,#00c3ff 55px,#00f1ff 56px,#00ffff 63px,#00ffe2 106px,#00ff72 140px,#00ff01 183px,#93ff00 232px,#ffff00 245px,#fff700 247px,#ffd600 249px,#ff0909 255px,#ff3232 257px)}.g81{background:linear-gradient(#0f000f,#0f000f 43px,#480048 44px,#5c005c 46px,#fe00ff 49px,#0100ff 53px,#0023ff 54px,#0073ff 78px,#00efff 120px,#00ffff 136px,#00ffeb 153px,#00ffba 172px,#00ff50 200px,#00ff01 214px,#42ff00 232px,#b5ff00 242px,#eeff00 245px,#ffff00 248px,#ffd400 251px,#ff2700 257px)}.g82{background:linear-gradient(#0f000f,#0f000f 44px,#330033 46px,#d600d6 49px,#e900ff 50px,#2b00ff 53px,#003dff 54px,#00edff 115px,#00ffff 130px,#00ffc0 160px,#00ff00 207px,#22ff00 215px,#41ff00 232px,#a6ff00 242px,#e6ff00 245px,#ffff00 248px,#ffde00 251px,#ff3b00 257px)}.g83{background:linear-gradient(#0f000f,#090009 46px,#ec00ec 50px,#d300ff 51px,#5500ff 53px,#2a00ff 54px,#0000ff 73px,#0064ff 102px,#00e5ff 129px,#00ffff 148px,#00fff0 162px,#00ffc7 177px,#00ff00 221px,#22ff00 232px,#97ff00 242px,#ecff00 246px,#fffe00 249px,#ffd000 252px,#ff4e00 257px)}.g84{background:linear-gradient(#0f000f,#0f000f 46px,#160016 47px,#fd00ff 51px,#7e00ff 53px,#a800ff 54px,#4200ff 100px,#0100ff 117px,#008eff 136px,#00c1ff 146px,#00f8ff 166px,#00fffa 185px,#00ffd2 200px,#00ff0c 232px,#33ff00 236px,#e8ff00 244px,#fffd00 248px,#ffcf00 250px,#ff2000 254px,#ff0909 255px,#ff3232 257px)}.g85{background:linear-gradient(#a400a4,#d300d3 5px,#fe00ff 13px,#9800ff 39px,#6100ff 40px,#6200ff 47px,#2600ff 48px,#0021ff 49px,#00d5ff 51px,#00fcff 52px,#00fffe 53px,#00ffe7 55px,#00ff13 63px,#02ff00 68px,#81ff00 100px,#a7ff00 119px,#f6ff00 179px,#fffd00 235px,#fff400 241px,#ffce00 245px,#ff8000 249px,#ff0c00 253px,#ff1313 254px,#ff5050 257px)}.g86{background:linear-gradient(#2a002a,#7c007c 11px,#ec00ec 38px,#ec00ec 39px,#c300c3 40px,#c300c3 44px,#cf00cf 45px,#fe00ff 46px,#0600ff 50px,#00baff 52px,#00ddff 53px,#00ffff 57px,#00ffec 60px,#00ffbb 63px,#00ff36 100px,#00ff00 123px,#a6ff00 192px,#e6ff00 211px,#fffe00 236px,#fff200 241px,#ffb900 246px,#ff5c00 250px,#ff0100 253px,#ff5b5b 257px)}.g87{background:linear-gradient(#190019,#190019 39px,#000000 40px,#000000 41px,#180018 42px,#5b005b 43px,#f000f0 46px,#d300ff 47px,#1600ff 50px,#0049ff 51px,#00a8ff 52px,#00cfff 53px,#00c1ff 54px,#00f7ff 56px,#00ffff 58px,#00ffd6 63px,#00ff61 100px,#01ff00 144px,#82ff00 192px,#e6ff00 215px,#fffe00 236px,#fff100 241px,#ffc400 245px,#ff8a00 248px,#ff0404 253px,#ff5f5f 257px)}.g88{background:linear-gradient(#500050,#9c009c 10px,#ff00ff 33px,#e600ff 45px,#ce00ff 46px,#1b00ff 49px,#0041ff 50px,#00a2ff 51px,#00e5ff 52px,#00ffff 54px,#00ffc3 58px,#00ff45 63px,#01ff00 80px,#56ff00 101px,#ccff00 163px,#f7ff00 197px,#fffc00 235px,#ffef00 241px,#ffc300 245px,#ff0606 253px,#ff6161 257px)}.g89{background:linear-gradient(#e700ff,#b800ff 5px,#8200ff 15px,#2600ff 39px,#0046ff 40px,#0046ff 46px,#4600ff 47px,#0b00ff 48px,#00aaff 50px,#00e9ff 51px,#00ffff 52px,#00ffea 54px,#00ff1e 61px,#01ff00 62px,#1fff00 63px,#90ff00 92px,#caff00 119px,#fcff00 171px,#fffa00 235px,#fff000 241px,#ffc700 245px,#ff7500 249px,#ff0000 253px,#ff5b5b 257px)}.g8a{background:linear-gradient(#1d001d,#4c004c 5px,#900090 18px,#de00de 38px,#d300d3 44px,#ec00ec 45px,#e000ff 46px,#2e00ff 49px,#0025ff 50px,#008bff 51px,#00d7ff 52px,#00fffe 55px,#00ffc9 59px,#00ff6b 63px,#03ff00 90px,#5aff00 119px,#d6ff00 183px,#faff00 210px,#fffd00 234px,#ffee00 241px,#ffce00 244px,#ffb100 246px,#ff1500 252px,#ff0a0a 253px,#ff6565 257px)}.g8b{background:linear-gradient(#7c007c,#bd00bd 8px,#fe00ff 22px,#c100ff 38px,#c200ff 46px,#9b00ff 47px,#2400ff 49px,#0035ff 50px,#0097ff 51px,#00dfff 52px,#00fffe 55px,#00ffca 59px,#00ff6c 63px,#02ff00 90px,#2cff00 100px,#5bff00 120px,#d7ff00 184px,#f6ff00 208px,#fffb00 239px,#fff100 242px,#ffc600 246px,#ff6f00 250px,#ff1500 253px,#ff0a0a 254px,#ff4848 257px)}.g8c{background:linear-gradient(#f700f7,#9900ff 17px,#4600ff 39px,#0017ff 40px,#0017ff 46px,#4400ff 47px,#0900ff 48px,#00acff 50px,#00eaff 51px,#00fff7 53px,#00ff1e 60px,#01ff00 61px,#3dff00 63px,#65ff00 73px,#bdff00 99px,#daff00 118px,#feff00 165px,#fff300 235px,#ffe600 241px,#ffc300 244px,#ff8d00 247px,#ff0400 252px,#ff7474 257px)}.g8d{background:linear-gradient(#5d005d,#a900a9 10px,#fd00ff 30px,#e000ff 38px,#ea00ff 45px,#df00ff 46px,#2c00ff 49px,#0027ff 50px,#008cff 51px,#00d8ff 52px,#00ffff 55px,#00ffce 59px,#00ff72 63px,#03ff00 92px,#50ff00 118px,#d5ff00 185px,#f8ff00 210px,#fffe00 235px,#fff200 241px,#ffc800 245px,#ff7700 249px,#ff0200 253px,#ff5959 257px)}.g8e{background:linear-gradient(#140014,#140014 39px,#000000 40px,#000000 42px,#d500d5 46px,#ed00ff 47px,#3100ff 50px,#0021ff 51px,#0087ff 52px,#00b4ff 53px,#009eff 54px,#00e6ff 56px,#00ffff 60px,#00ff8b 100px,#01ff00 162px,#57ff00 192px,#b6ff00 206px,#ebff00 218px,#fffb00 236px,#ffe600 241px,#ffb000 245px,#ff0202 252px,#ff7a7a 257px)}.g8f{background:linear-gradient(#ce00ce,#fd00fd 5px,#6f00ff 39px,#4a00ff 40px,#4a00ff 46px,#7500ff 47px,#0004ff 49px,#00c3ff 51px,#00f6ff 52px,#00ffff 53px,#00ffdd 55px,#03ff00 63px,#94ff00 100px,#bcff00 122px,#fbff00 179px,#fff300 235px,#ffe200 241px,#ffbd00 244px,#ff9d00 246px,#ff0505 252px,#ff7d7d 257px)}.g90{background:linear-gradient(#b700b7,#fe00fe 9px,#7d00ff 40px,#7d00ff 46px,#9100ff 47px,#1a00ff 49px,#0044ff 50px,#00a3ff 51px,#00e6ff 52px,#00fffe 55px,#00ffc5 59px,#00ff64 63px,#02ff00 88px,#34ff00 100px,#5aff00 116px,#daff00 183px,#faff00 213px,#fffb00 240px,#ffcb00 246px,#ff7600 250px,#ff0202 254px,#ff4040 257px)}.g91{background:linear-gradient(#460046,#820082 7px,#d300d3 24px,#fd00ff 36px,#f600ff 39px,#de00de 40px,#de00de 45px,#ff00ff 46px,#0700ff 50px,#00b9ff 52px,#00dcff 53px,#00d5ff 54px,#00ffff 57px,#00fff0 60px,#00ffc2 63px,#00ff40 100px,#00ff00 128px,#9cff00 191px,#e7ff00 213px,#fffc00 238px,#fff500 241px,#ffbe00 246px,#ff6400 250px,#ff0900 253px,#ff5353 257px)}.g92{background:linear-gradient(#830083,#b800b8 6px,#fe00fe 20px,#ba00ff 38px,#bc00ff 46px,#9b00ff 47px,#2400ff 49px,#0034ff 50px,#0097ff 51px,#00deff 52px,#00fffd 55px,#00ffc3 59px,#00ff61 63px,#01ff00 87px,#41ff00 104px,#c4ff00 169px,#f6ff00 204px,#fffd00 236px,#fff300 241px,#ffbd00 246px,#ff7c00 249px,#ff0800 253px,#ff5454 257px)}.g93{background:linear-gradient(#e700ff,#8b00ff 13px,#2500ff 39px,#005dff 40px,#005dff 46px,#3700ff 47px,#0007ff 48px,#00bbff 50px,#00f2ff 51px,#00ffdd 54px,#00ff8d 56px,#00ff1e 60px,#01ff00 61px,#3dff00 63px,#69ff00 74px,#c0ff00 100px,#d9ff00 117px,#feff00 165px,#fff800 235px,#ffed00 241px,#ffcf00 244px,#ff9d00 247px,#ff0909 253px,#ff6363 257px)}.g94{background:linear-gradient(#090009,#000000 42px,#fd00fd 47px,#0001ff 51px,#006aff 52px,#009cff 53px,#005aff 54px,#00baff 56px,#00ebff 59px,#00ffff 62px,#00ffe9 84px,#00ff7d 142px,#00ff01 188px,#0bff00 192px,#87ff00 206px,#d0ff00 217px,#f7ff00 227px,#fffd00 237px,#ffee00 241px,#ffbc00 245px,#ff7f00 248px,#ff0f00 252px,#ff1010 253px,#ff6a6a 257px)}.g95{background:linear-gradient(#160016,#6d006d 12px,#d800d8 38px,#d700d7 44px,#f700f7 45px,#d500ff 46px,#2200ff 49px,#0037ff 50px,#0099ff 51px,#00e0ff 52px,#00ffff 55px,#00ffd1 59px,#00ff76 63px,#03ff00 93px,#51ff00 120px,#d3ff00 185px,#f6ff00 212px,#fffc00 240px,#ffcf00 246px,#ff7c00 250px,#ff0500 254px,#ff3939 257px)}.g96{background:linear-gradient(#6f006f,#b600b6 9px,#ff00ff 25px,#c000ff 40px,#c000ff 46px,#1500ff 49px,#00aaff 51px,#00e9ff 52px,#00ffff 54px,#00ffc9 58px,#00ff4f 63px,#00ff00 82px,#4dff00 101px,#caff00 165px,#f6ff00 199px,#fffb00 238px,#ffee00 242px,#ffc100 246px,#ff6800 250px,#ff0e00 253px,#ff1111 254px,#ff4f4f 257px)}.g97{background:linear-gradient(#600060,#9c009c 7px,#fd00fd 28px,#dc00ff 38px,#f000ff 40px,#f000ff 45px,#e800ff 46px,#3600ff 49px,#0019ff 50px,#00d0ff 52px,#00ecff 53px,#00ffff 55px,#00ffdc 59px,#00ff88 63px,#00ff00 97px,#e7ff00 201px,#fffe00 235px,#fff100 241px,#ffc600 245px,#ff7400 249px,#ff0101 253px,#ff5c5c 257px)}.g98{background:linear-gradient(#100010,#040004 42px,#470047 43px,#dc00dc 46px,#e700ff 47px,#2a00ff 50px,#002aff 51px,#008fff 52px,#00bbff 53px,#00b1ff 54px,#00f0ff 56px,#00ffff 59px,#00ffe2 63px,#00ff75 100px,#01ff00 152px,#6fff00 192px,#e5ff00 214px,#fffc00 235px,#ffe300 241px,#ffbb00 244px,#ff0909 252px,#ff7f7f 257px)}.g99{background:linear-gradient(#190019,#550055 7px,#ba00ba 29px,#db00db 38px,#c800c8 40px,#c800c8 44px,#e500e5 45px,#e700ff 46px,#3500ff 49px,#001aff 50px,#00d1ff 52px,#00ecff 53px,#00ffff 56px,#00ffdc 60px,#00ffa0 63px,#00ff00 107px,#e8ff00 209px,#fffc00 240px,#ffe400 244px,#ffbb00 247px,#ff7800 250px,#ff0100 254px,#ff3d3d 257px)}.g9a{background:linear-gradient(#e200e2,#fc00ff 3px,#a500ff 19px,#5b00ff 39px,#0f00ff 40px,#0f00ff 46px,#4c00ff 47px,#1100ff 48px,#00e5ff 51px,#00ffff 52px,#00fff3 54px,#06ff00 63px,#91ff00 98px,#beff00 121px,#fcff00 179px,#fffd00 235px,#fff500 241px,#ffc300 246px,#ff6b00 250px,#ff1100 253px,#ff0f0f 254px,#ff4c4c 257px)}.g9b{background:linear-gradient(#120012,#120012 39px,#000000 41px,#060006 42px,#490049 43px,#de00de 46px,#e400ff 47px,#2800ff 50px,#002eff 51px,#0092ff 52px,#00bdff 53px,#00a7ff 54px,#00ebff 56px,#00ffff 59px,#00ff80 100px,#01ff00 157px,#64ff00 192px,#b0ff00 204px,#e8ff00 217px,#fffe00 235px,#ffeb00 241px,#ffb900 245px,#ff7c00 248px,#ff0b00 252px,#ff1414 253px,#ff6e6e 257px)}.g9c{background:linear-gradient(#000000,#000000 42px,#fb00ff 47px,#000bff 51px,#0074ff 52px,#00a4ff 53px,#005fff 54px,#00beff 56px,#00edff 59px,#00ffff 62px,#00ffea 82px,#00ff7c 140px,#00ff02 186px,#11ff00 192px,#96ff00 208px,#dcff00 220px,#fbff00 230px,#fffa00 239px,#ffb700 246px,#ff0202 253px,#ff5d5d 257px)}.g9d{background:linear-gradient(#780078,#bf00bf 9px,#fe00ff 23px,#b500ff 40px,#b500ff 46px,#1200ff 49px,#00acff 51px,#00ebff 52px,#00ffff 54px,#00ffaa 59px,#00ff40 63px,#03ff00 79px,#5fff00 102px,#ccff00 160px,#f6ff00 193px,#fffd00 234px,#fff100 241px,#ffc700 245px,#ff7600 249px,#ff0100 253px,#ff5a5a 257px)}.g9e{background:linear-gradient(#d800d8,#fe00ff 4px,#af00ff 19px,#6500ff 39px,#1600ff 40px,#1600ff 46px,#4a00ff 47px,#0e00ff 48px,#00e7ff 51px,#00ffff 52px,#00fff2 54px,#09ff00 63px,#94ff00 98px,#bfff00 120px,#fbff00 176px,#fffd00 235px,#fff500 241px,#ffd100 245px,#ff8400 249px,#ff1100 253px,#ff0e0e 254px,#ff4b4b 257px)}.g9f{background:linear-gradient(#280028,#280028 39px,#000000 40px,#000000 41px,#120012 42px,#550055 43px,#ea00ea 46px,#d900ff 47px,#1c00ff 50px,#0040ff 51px,#00a1ff 52px,#00c9ff 53px,#00acff 54px,#00edff 56px,#00ffff 59px,#00ffe5 63px,#00ff78 101px,#00ff00 154px,#6aff00 192px,#e0ff00 216px,#fffd00 238px,#fff500 241px,#ffbe00 246px,#ff6400 250px,#ff0900 253px,#ff5353 257px)}.ga0{background:linear-gradient(#7f007f,#b500b5 6px,#ff00ff 21px,#bd00ff 38px,#bd00ff 39px,#e300ff 40px,#e300ff 46px,#bf00ff 47px,#0200ff 50px,#00beff 52px,#00e0ff 53px,#00ffff 56px,#00ffe1 60px,#00ffa8 63px,#00ff00 111px,#e3ff00 205px,#fffd00 235px,#ffed00 241px,#ffcb00 244px,#ff8100 248px,#ff1100 252px,#ff0e0e 253px,#ff6868 257px)}.ga1{background:linear-gradient(#ef00ef,#fe00fe 1px,#9c00ff 18px,#4e00ff 39px,#1900ff 40px,#1900ff 46px,#6500ff 47px,#2900ff 48px,#001dff 49px,#00d2ff 51px,#00fbff 52px,#00ffff 53px,#00ff06 62px,#19ff00 63px,#9dff00 97px,#c9ff00 120px,#fdff00 175px,#fff200 235px,#ffe200 241px,#ffcb00 243px,#ff9d00 246px,#ff0505 252px,#ff7c7c 257px)}.ga2{background:linear-gradient(#290029,#290029 39px,#000000 40px,#000000 42px,#080008 43px,#d800d8 47px,#ea00ff 48px,#2400ff 51px,#0034ff 52px,#006bff 53px,#1800ff 54px,#0015ff 55px,#004eff 56px,#0084ff 58px,#00e8ff 63px,#00feff 83px,#00ffda 141px,#00ffa0 174px,#00ff71 192px,#00ff02 202px,#81ff00 214px,#d3ff00 224px,#f8ff00 232px,#fff900 240px,#ffbb00 246px,#ff6000 250px,#ff0500 253px,#ff5757 257px)}.ga3{background:linear-gradient(#bc00bc,#fb00ff 9px,#8000ff 39px,#3500ff 40px,#3500ff 46px,#4e00ff 47px,#1200ff 48px,#0040ff 49px,#00a1ff 50px,#00e4ff 51px,#00ffff 52px,#00fff0 54px,#00ff0f 62px,#0fff00 63px,#99ff00 98px,#c3ff00 120px,#faff00 172px,#fffb00 235px,#fff200 241px,#ffca00 245px,#ff7a00 249px,#ff0600 253px,#ff5656 257px)}.ga4{background:linear-gradient(#6d006d,#b400b4 9px,#fd00ff 26px,#d000ff 38px,#e200ff 40px,#e200ff 46px,#3500ff 49px,#001aff 50px,#00d1ff 52px,#00edff 53px,#00ffff 55px,#00ffd7 59px,#00ff81 63px,#01ff00 95px,#47ff00 120px,#e9ff00 200px,#fffd00 235px,#ffef00 241px,#ffd000 244px,#ff8800 248px,#ff0606 253px,#ff6161 257px)}.ga5{background:linear-gradient(#7c007c,#b800b8 7px,#fe00ff 22px,#c000ff 39px,#af00ff 40px,#af00ff 46px,#8800ff 47px,#1100ff 49px,#00aeff 51px,#00ecff 52px,#00ffff 54px,#00ffaa 59px,#00ff3f 63px,#04ff00 79px,#5bff00 100px,#cbff00 159px,#f7ff00 194px,#fffd00 235px,#fff200 241px,#ffc800 245px,#ff7800 249px,#ff0300 253px,#ff5858 257px)}.ga6{background:linear-gradient(#450045,#810081 7px,#e200e2 28px,#fe00ff 36px,#f700ff 39px,#e700e7 40px,#e700e7 45px,#f400ff 46px,#0006ff 50px,#00c4ff 52px,#00e4ff 53px,#00fffd 56px,#00ffe3 59px,#00ff95 63px,#00ff00 101px,#eaff00 204px,#fffd00 233px,#ffea00 241px,#ffd400 243px,#ff9300 247px,#ff0b00 252px,#ff1414 253px,#ff6e6e 257px)}.ga7{background:linear-gradient(#0f000f,#120012 5px,#a400a4 38px,#a400a4 39px,#7c007c 40px,#7c007c 43px,#fd00ff 46px,#0500ff 50px,#00bbff 52px,#00deff 53px,#00d7ff 54px,#00ffff 57px,#00ffef 60px,#00ffc0 63px,#00ff3c 100px,#00ff00 125px,#a3ff00 192px,#e6ff00 212px,#fffc00 238px,#fff500 241px,#ffbf00 246px,#ff6600 250px,#ff0b00 253px,#ff1414 254px,#ff5151 257px)}.ga8{background:linear-gradient(#c400c4,#ff00ff 7px,#7800ff 39px,#3e00ff 40px,#3e00ff 46px,#5f00ff 47px,#2400ff 48px,#0025ff 49px,#008bff 50px,#00d7ff 51px,#00fcff 52px,#00fffe 53px,#00ffea 55px,#00ff1b 63px,#02ff00 70px,#79ff00 99px,#a7ff00 121px,#f8ff00 183px,#fffe00 235px,#fff700 241px,#ffc700 246px,#ff0707 254px,#ff4545 257px)}.ga9{background:linear-gradient(#580058,#a400a4 10px,#ff00ff 31px,#e500ff 38px,#eb00ff 45px,#da00ff 46px,#2800ff 49px,#002eff 50px,#0092ff 51px,#00dcff 52px,#00fffd 54px,#00ff99 59px,#00ff2a 63px,#00ff00 73px,#6fff00 100px,#caff00 150px,#fcff00 194px,#ffee00 235px,#ffd600 241px,#ffbb00 243px,#ff8900 246px,#ff0200 251px,#ff9191 257px)}.gaa{background:linear-gradient(#770077,#b800b8 8px,#ff00ff 23px,#b600ff 40px,#b600ff 46px,#1200ff 49px,#00adff 51px,#00ebff 52px,#00ffff 54px,#00ffb0 59px,#00ff47 63px,#00ff00 80px,#56ff00 101px,#c8ff00 160px,#f5ff00 194px,#fffe00 234px,#fff400 241px,#ffcc00 245px,#ff7d00 249px,#ff0a00 253px,#ff1515 254px,#ff5252 257px)}.gab{background:linear-gradient(#cf00cf,#fa00ff 6px,#6e00ff 39px,#1d00ff 40px,#1d00ff 46px,#4800ff 47px,#0c00ff 48px,#00a8ff 50px,#00e8ff 51px,#00ffff 52px,#00ffec 54px,#00ff04 62px,#1aff00 63px,#a2ff00 98px,#ccff00 121px,#fdff00 174px,#fffa00 235px,#fff100 241px,#ffc800 245px,#ff7700 249px,#ff0300 253px,#ff5959 257px)}.gac{background:linear-gradient(#af00af,#fe00ff 11px,#8e00ff 39px,#7100ff 40px,#7c00ff 47px,#0500ff 49px,#00bbff 51px,#00f2ff 52px,#00fffd 54px,#00ff98 59px,#00ff29 63px,#02ff00 73px,#73ff00 101px,#cbff00 150px,#faff00 190px,#fffb00 235px,#ffef00 241px,#ffc400 245px,#ff7200 249px,#ff0303 253px,#ff5e5e 257px)}.gad{background:linear-gradient(#0f000f,#0f000f 4px,#a600a6 38px,#a600a6 39px,#780078 40px,#780078 43px,#fc00fc 46px,#0a00ff 50px,#00b6ff 52px,#00daff 53px,#00ffff 57px,#00ffec 60px,#00ffbb 63px,#00ff34 100px,#00ff00 121px,#a9ff00 192px,#ecff00 212px,#fffc00 236px,#ffee00 241px,#ffbf00 245px,#ff8300 248px,#ff1400 252px,#ff0c0c 253px,#ff6666 257px)}.gae{background:linear-gradient(#fe00ff,#cf00ff 5px,#9400ff 16px,#3d00ff 39px,#000fff 40px,#000fff 46px,#5300ff 47px,#1700ff 48px,#0038ff 49px,#009aff 50px,#00e1ff 51px,#00feff 52px,#00fffc 53px,#00ffde 55px,#00ff00 63px,#94ff00 100px,#baff00 120px,#faff00 177px,#fffc00 235px,#fff400 241px,#ffce00 245px,#ff6800 250px,#ff0d00 253px,#ff1212 254px,#ff4f4f 257px)}.gaf{background:linear-gradient(#ba00ba,#fd00ff 9px,#8200ff 39px,#6d00ff 40px,#6d00ff 46px,#8300ff 47px,#0c00ff 49px,#00b3ff 51px,#00eeff 52px,#00fffd 54px,#00ff9a 59px,#00ff2b 63px,#03ff00 74px,#6eff00 100px,#d0ff00 154px,#faff00 191px,#fffa00 235px,#ffec00 241px,#ffbf00 245px,#ff6b00 249px,#ff1400 252px,#ff0b0b 253px,#ff6666 257px)}.gb0{background:linear-gradient(#550055,#a100a1 10px,#f900f9 30px,#e800ff 38px,#f800f8 45px,#f300ff 46px,#0008ff 50px,#00c5ff 52px,#00e5ff 53px,#00dcff 54px,#00f4ff 55px,#00ffff 57px,#00ffeb 60px,#00ffb9 63px,#00ff31 100px,#01ff00 120px,#ddff00 208px,#fffd00 239px,#ffcb00 246px,#ff7700 250px,#ff0000 254px,#ff3e3e 257px)}.gb1{background:linear-gradient(#0f000f,#120012 6px,#9e009e 38px,#9e009e 39px,#6e006e 40px,#6e006e 43px,#fa00fa 46px,#0d00ff 50px,#00b3ff 52px,#00d8ff 53px,#00c2ff 54px,#00f7ff 56px,#00ffff 58px,#00ffd5 63px,#00ff5c 100px,#00ff00 141px,#88ff00 192px,#e3ff00 215px,#fffe00 238px,#fff800 241px,#ffc700 246px,#ff0808 254px,#ff4646 257px)}.gb2{background:linear-gradient(#f800ff,#c900ff 5px,#8e00ff 16px,#3600ff 39px,#0052ff 40px,#0052ff 46px,#2d00ff 47px,#0016ff 48px,#00c5ff 50px,#00f6ff 51px,#00fffc 52px,#00ffcd 54px,#00ff75 56px,#00ff02 60px,#58ff00 63px,#d7ff00 103px,#feff00 153px,#fff200 235px,#ffe700 241px,#ffd300 243px,#ff9100 247px,#ff0800 252px,#ff7070 257px)}.gb3{background:linear-gradient(#0c000c,#000000 41px,#110011 42px,#540054 43px,#e900e9 46px,#da00ff 47px,#1d00ff 50px,#003eff 51px,#009fff 52px,#00c8ff 53px,#0089ff 54px,#00daff 56px,#00ffff 61px,#01ff00 170px,#43ff00 192px,#d6ff00 219px,#fffd00 241px,#ffc600 247px,#ff8800 250px,#ff1200 254px,#ff0d0d 255px,#ff2c2c 257px)}.gb4{background:linear-gradient(#1a001a,#1a001a 39px,#000000 40px,#000000 42px,#fb00fb 47px,#8c00ff 49px,#0100ff 51px,#0068ff 52px,#009aff 53px,#0076ff 54px,#00ceff 56px,#00ffff 61px,#00ff60 141px,#02ff00 178px,#2dff00 192px,#a4ff00 206px,#e3ff00 217px,#fbff00 225px,#fff500 237px,#ffde00 241px,#ffa200 245px,#ff0b00 251px,#ff1414 252px,#ff8989 257px)}.gb5{background:linear-gradient(#b200ff,#6600ff 10px,#0001ff 34px,#0018ff 39px,#008dff 40px,#008dff 46px,#4900ff 47px,#0e00ff 48px,#00e7ff 51px,#00ffff 52px,#00ffea 54px,#02ff00 62px,#20ff00 63px,#9dff00 95px,#d0ff00 121px,#fcff00 169px,#fff900 235px,#ffee00 241px,#ffc300 245px,#ff8900 248px,#ff0505 253px,#ff6060 257px)}.gb6{background:linear-gradient(#b600ff,#8000ff 6px,#4700ff 17px,#0300ff 34px,#0012ff 39px,#00aeff 40px,#00aeff 46px,#2b00ff 47px,#0019ff 48px,#00c7ff 50px,#00f7ff 51px,#00fffb 52px,#00ffd6 54px,#00ff83 56px,#0dff00 61px,#49ff00 63px,#6dff00 72px,#c4ff00 98px,#e1ff00 117px,#feff00 159px,#fff500 237px,#ffe700 242px,#ffb500 246px,#ff0404 253px,#ff5f5f 257px)}.gb7{background:linear-gradient(#230023,#590059 6px,#920092 17px,#e500e5 38px,#d800d8 44px,#eb00eb 45px,#e200ff 46px,#2f00ff 49px,#0023ff 50px,#00d5ff 52px,#00f0ff 53px,#00fffe 55px,#00ffc7 59px,#00ff68 63px,#04ff00 89px,#50ff00 112px,#c0ff00 168px,#f9ff00 206px,#fffb00 234px,#ffea00 241px,#ffc900 244px,#ff7e00 248px,#ff0e00 252px,#ff1111 253px,#ff6b6b 257px)}.gb8{background:linear-gradient(#1e001e,#4d004d 5px,#910091 18px,#df00df 38px,#d500d5 44px,#ed00ed 45px,#df00ff 46px,#2c00ff 49px,#0027ff 50px,#008cff 51px,#00d8ff 52px,#00fffe 55px,#00ffc7 59px,#00ff68 63px,#00ff00 88px,#55ff00 114px,#c2ff00 169px,#faff00 208px,#fffc00 235px,#ffed00 241px,#ffc000 245px,#ff0909 253px,#ff6464 257px)}.gb9{background:linear-gradient(#e400ff,#9d00ff 9px,#1b00ff 40px,#1b00ff 46px,#9200ff 47px,#1b00ff 49px,#0043ff 50px,#00a3ff 51px,#00e5ff 52px,#00f9ff 53px,#7b00ff 54px,#3100ff 56px,#0b00ff 58px,#000dff 59px,#0080ff 63px,#0088ff 65px,#00e9ff 100px,#00fffc 129px,#00ffc1 142px,#00ff02 161px,#b0ff00 178px,#faff00 191px,#fff500 241px,#ffc300 246px,#ff6b00 250px,#ff1100 253px,#ff0e0e 254px,#ff4b4b 257px)}.gba{background:linear-gradient(#170017,#170017 39px,#000000 41px,#090009 42px,#4c004c 43px,#e100e1 46px,#e200ff 47px,#2500ff 50px,#0032ff 51px,#0095ff 52px,#00c0ff 53px,#00afff 54px,#00efff 56px,#00ffff 59px,#00ffe3 63px,#00ff75 100px,#02ff00 152px,#70ff00 192px,#dfff00 213px,#f9ff00 223px,#fffc00 236px,#ffea00 241px,#ffa800 246px,#ff0900 252px,#ff1616 253px,#ff6f6f 257px)}.gbb{background:linear-gradient(#3a003a,#8c008c 11px,#fc00fc 38px,#fc00fc 39px,#d300d3 40px,#d300d3 45px,#fd00ff 46px,#0600ff 50px,#00bbff 52px,#00ddff 53px,#00ccff 54px,#00fbff 56px,#00ffff 58px,#00ffcc 63px,#00ff4d 100px,#01ff00 134px,#93ff00 191px,#e6ff00 215px,#fffd00 239px,#ffca00 246px,#ff7500 250px,#ff0303 254px,#ff4040 257px)}.gbc{background:linear-gradient(#fa00ff,#9e00ff 13px,#3800ff 39px,#0014ff 40px,#0014ff 46px,#5400ff 47px,#1800ff 48px,#0037ff 49px,#0099ff 50px,#00e0ff 51px,#00feff 52px,#00fffc 53px,#00ff8d 56px,#00ff1e 60px,#01ff00 61px,#3dff00 63px,#6eff00 75px,#c2ff00 100px,#deff00 119px,#feff00 163px,#ffec00 235px,#ffd000 242px,#ff9200 246px,#ff0d00 251px,#ff1212 252px,#ff8787 257px)}.gbd{background:linear-gradient(#0e000e,#0e000e 39px,#000000 42px,#150015 43px,#e600e6 47px,#dd00ff 48px,#1600ff 51px,#0049ff 52px,#007eff 53px,#0009ff 54px,#0079ff 56px,#00d2ff 60px,#00f7ff 63px,#00ffff 74px,#00ffe2 111px,#00ff98 159px,#00ff42 192px,#00ff02 198px,#9cff00 214px,#e9ff00 226px,#fff200 241px,#ffb600 246px,#ff0202 253px,#ff5d5d 257px)}.gbe{background:linear-gradient(#240024,#240024 39px,#000000 40px,#000000 41px,#1b001b 42px,#5e005e 43px,#f300f3 46px,#d000ff 47px,#1300ff 50px,#00abff 52px,#00d2ff 53px,#00ffff 57px,#00ffed 60px,#00ffbc 63px,#00ff35 100px,#00ff00 121px,#a9ff00 192px,#f0ff00 212px,#fffa00 235px,#ffe300 241px,#ffbc00 244px,#ff9c00 246px,#ff0606 252px,#ff7d7d 257px)}.gbf{background:linear-gradient(#4b004b,#920092 9px,#f300f3 31px,#f200ff 39px,#f200f2 45px,#ef00ff 46px,#000eff 50px,#00c9ff 52px,#00e7ff 53px,#00ffff 56px,#00ffec 59px,#00ffa5 63px,#02ff00 109px,#ecff00 210px,#fffc00 238px,#ffee00 242px,#ffc100 246px,#ff6900 250px,#ff0f00 253px,#ff1010 254px,#ff4d4d 257px)}.gc0{background:linear-gradient(#9a009a,#c900c9 5px,#ff00ff 15px,#9800ff 40px,#9800ff 46px,#8e00ff 47px,#1700ff 49px,#0048ff 50px,#00a7ff 51px,#00e8ff 52px,#00ffff 54px,#00ffc3 58px,#00ff45 63px,#03ff00 80px,#5cff00 102px,#ceff00 162px,#f7ff00 195px,#fffc00 235px,#fff000 241px,#ffc600 245px,#ff7500 249px,#ff0000 253px,#ff5b5b 257px)}.gc1{background:linear-gradient(#0d000d,#0d000d 39px,#000000 42px,#0b000b 43px,#db00db 47px,#e700ff 48px,#2100ff 51px,#0039ff 52px,#0070ff 53px,#1400ff 54px,#001aff 55px,#0053ff 56px,#006fff 57px,#00dcff 62px,#00f6ff 71px,#00fff2 111px,#00ffb5 160px,#00ff68 192px,#00ff06 201px,#c8ff00 222px,#f3ff00 230px,#fff900 240px,#ffbd00 246px,#ff6300 250px,#ff0800 253px,#ff5454 257px)}.gc2{background:linear-gradient(#000000,#000000 42px,#fa00fa 47px,#c800ff 48px,#0200ff 51px,#0067ff 52px,#0099ff 53px,#0034ff 54px,#009dff 56px,#00b3ff 57px,#00f2ff 61px,#00ffff 64px,#00fff2 87px,#00ff9e 140px,#00ff4e 174px,#00ff05 194px,#83ff00 209px,#ceff00 220px,#f7ff00 230px,#fffd00 239px,#ffc200 246px,#ff6a00 250px,#ff1000 253px,#ff0f0f 254px,#ff4c4c 257px)}.gc3{background:linear-gradient(#940094,#c300c3 5px,#fc00ff 17px,#9a00ff 40px,#9a00ff 46px,#8b00ff 47px,#1400ff 49px,#00abff 51px,#00eaff 52px,#00ffff 54px,#00ffc4 58px,#00ff47 63px,#01ff00 80px,#56ff00 100px,#caff00 160px,#f6ff00 194px,#fffd00 235px,#fff200 241px,#ffc900 245px,#ff7a00 249px,#ff0600 253px,#ff5656 257px)}.gc4{background:linear-gradient(#be00be,#ff00ff 8px,#7e00ff 39px,#5b00ff 40px,#5b00ff 46px,#7600ff 47px,#0002ff 49px,#00c2ff 51px,#00f5ff 52px,#00ffff 53px,#00ffe4 55px,#00ff0d 63px,#00ff00 66px,#87ff00 99px,#b4ff00 121px,#fbff00 182px,#fff600 235px,#ffe700 241px,#ffc500 244px,#ff9100 247px,#ff0800 252px,#ff7070 257px)}.gc5{background:linear-gradient(#810081,#c200c2 8px,#fd00ff 21px,#bc00ff 39px,#9c00ff 40px,#9c00ff 46px,#7900ff 47px,#0200ff 49px,#00beff 51px,#00f3ff 52px,#00fffe 54px,#00ff9b 59px,#00ff2d 63px,#02ff00 74px,#6eff00 100px,#cdff00 152px,#faff00 191px,#fffc00 235px,#fff200 241px,#ffc900 245px,#ff7900 249px,#ff0500 253px,#ff5757 257px)}.gc6{background:linear-gradient(#8c008c,#c200c2 6px,#ff00ff 18px,#b000ff 39px,#8800ff 40px,#8800ff 46px,#7100ff 47px,#3600ff 48px,#0009ff 49px,#00c6ff 51px,#00f7ff 52px,#00ffff 53px,#00ffeb 55px,#00ff1c 63px,#02ff00 70px,#7dff00 100px,#a7ff00 120px,#f7ff00 181px,#fffb00 235px,#fff000 241px,#ffc500 245px,#ff7400 249px,#ff0101 253px,#ff5c5c 257px)}.gc7{background:linear-gradient(#fc00fc,#9800ff 16px,#4100ff 39px,#003aff 40px,#003aff 46px,#3300ff 47px,#000dff 48px,#00bfff 50px,#00f4ff 51px,#00fffd 52px,#00ffde 54px,#00ff90 56px,#00ff02 61px,#3bff00 63px,#7bff00 79px,#c1ff00 100px,#ddff00 119px,#feff00 164px,#fff600 237px,#ffef00 241px,#ffb700 246px,#ff0101 253px,#ff5c5c 257px)}.gc8{background:linear-gradient(#0b000b,#000000 41px,#060006 42px,#490049 43px,#dd00dd 46px,#e500ff 47px,#2900ff 50px,#002dff 51px,#0091ff 52px,#00bdff 53px,#0090ff 54px,#00deff 56px,#00ffff 60px,#02ff00 166px,#4dff00 192px,#aaff00 206px,#e1ff00 218px,#fffe00 237px,#fff400 241px,#ffbb00 246px,#ff6100 250px,#ff0600 253px,#ff5555 257px)}.gc9{background:linear-gradient(#2b002b,#2b002b 39px,#000000 40px,#000000 42px,#200020 43px,#f000f0 47px,#d300ff 48px,#0c00ff 51px,#0058ff 52px,#008cff 53px,#0013ff 54px,#0081ff 56px,#00e6ff 61px,#00f9ff 63px,#00ffff 72px,#00ffb6 140px,#00ff37 192px,#00ff05 197px,#cbff00 221px,#f7ff00 231px,#fff800 241px,#ffb100 247px,#ff1300 253px,#ff0c0c 254px,#ff4949 257px)}.gca{background:linear-gradient(#ec00ec,#fa00ff 2px,#ad00ff 15px,#5100ff 39px,#0600ff 40px,#0600ff 46px,#4e00ff 47px,#1200ff 48px,#0040ff 49px,#00a0ff 50px,#00e4ff 51px,#00ffff 52px,#00ffee 54px,#00ff0a 62px,#15ff00 63px,#9cff00 97px,#c9ff00 120px,#fdff00 175px,#fff900 235px,#ffef00 241px,#ffd300 244px,#ff7500 249px,#ff0000 253px,#ff5b5b 257px)}.gcb{background:linear-gradient(#6e006e,#aa00aa 7px,#ff00ff 25px,#ce00ff 38px,#cc00ff 46px,#2000ff 49px,#003bff 50px,#009cff 51px,#00e2ff 52px,#00fffe 55px,#00ffca 59px,#00ff6d 63px,#00ff00 89px,#2fff00 100px,#5eff00 119px,#d5ff00 181px,#f6ff00 207px,#fffc00 239px,#ffcb00 246px,#ff7700 250px,#ff0101 254px,#ff3f3f 257px)}.gcc{background:linear-gradient(#0e000e,#020002 42px,#450045 43px,#da00da 46px,#e800ff 47px,#2c00ff 50px,#0028ff 51px,#008dff 52px,#00b9ff 53px,#00aeff 54px,#00eeff 56px,#00ffff 59px,#00ffe4 63px,#00ff75 100px,#02ff00 152px,#71ff00 192px,#eaff00 215px,#fffb00 235px,#ffe200 241px,#ffb900 244px,#ff0a0a 252px,#ff8080 257px)}.gcd{background:linear-gradient(#cd00cd,#fc00ff 6px,#6f00ff 39px,#2d00ff 40px,#2d00ff 46px,#5600ff 47px,#1b00ff 48px,#0033ff 49px,#0096ff 50px,#00deff 51px,#00feff 52px,#00fffc 53px,#00ffe3 55px,#00ff09 63px,#00ff00 65px,#8bff00 99px,#b6ff00 120px,#f9ff00 177px,#fffd00 235px,#fff500 241px,#ffc300 246px,#ff6c00 250px,#ff1200 253px,#ff0d0d 254px,#ff4b4b 257px)}.gce{background:linear-gradient(#680068,#af00af 9px,#fe00ff 27px,#d500ff 39px,#9600ff 40px,#9600ff 46px,#1f00ff 48px,#002dff 49px,#0091ff 50px,#00dbff 51px,#00fdff 52px,#00fffd 53px,#03ff00 62px,#22ff00 63px,#87ff00 88px,#b0ff00 100px,#d0ff00 119px,#fbff00 165px,#fff200 235px,#ffe300 241px,#ffc000 244px,#ff8a00 247px,#ff0100 252px,#ff7777 257px)}.gcf{background:linear-gradient(#080008,#000000 42px,#230023 43px,#f400f4 47px,#cf00ff 48px,#0800ff 51px,#005dff 52px,#0091ff 53px,#0009ff 54px,#0079ff 56px,#00eeff 62px,#00ffff 74px,#00ffdf 113px,#00ff99 158px,#00ff40 192px,#00ff06 198px,#c1ff00 221px,#ebff00 229px,#fffe00 240px,#ffd100 246px,#ff8000 250px,#ff0900 254px,#ff3535 257px)}.gd0{background:linear-gradient(#130013,#130013 39px,#000000 40px,#010001 42px,#440044 43px,#d800d8 46px,#ea00ff 47px,#2e00ff 50px,#0025ff 51px,#008aff 52px,#00b7ff 53px,#008dff 54px,#00ddff 56px,#00ffff 60px,#01ff00 167px,#4bff00 192px,#abff00 206px,#e7ff00 219px,#fffd00 237px,#fff000 241px,#ffb400 246px,#ff0505 253px,#ff6060 257px)}.gd1{background:linear-gradient(#f700f7,#9900ff 17px,#4600ff 39px,#1200ff 40px,#1200ff 46px,#6500ff 47px,#2900ff 48px,#001dff 49px,#00d2ff 51px,#00fbff 52px,#00ffff 53px,#00ffe5 55px,#00ff0f 63px,#00ff02 66px,#86ff00 99px,#b2ff00 120px,#f9ff00 179px,#fffb00 235px,#fff100 241px,#ffc700 245px,#ff7800 249px,#ff0300 253px,#ff5858 257px)}.gd2{background:linear-gradient(#2d002d,#840084 12px,#ef00ef 38px,#ef00ef 39px,#c200c2 40px,#c200c2 44px,#cb00cb 45px,#fd00fd 46px,#0900ff 50px,#00b7ff 52px,#00daff 53px,#00ffff 56px,#00fff0 59px,#00ffad 63px,#00ff1e 100px,#01ff00 112px,#eaff00 207px,#fffa00 235px,#ffe600 241px,#ffc100 244px,#ff8b00 247px,#ff0200 252px,#ff7676 257px)}.gd3{background:linear-gradient(#110011,#110011 39px,#000000 41px,#0e000e 42px,#510051 43px,#e500e5 46px,#dd00ff 47px,#2100ff 50px,#0039ff 51px,#009bff 52px,#00c5ff 53px,#00bdff 54px,#00f5ff 56px,#00ffff 58px,#00ffd9 63px,#00ff62 100px,#00ff00 143px,#84ff00 192px,#e7ff00 213px,#fffa00 236px,#ffe700 241px,#ffb200 245px,#ff7400 248px,#ff0300 252px,#ff7575 257px)}.gd4{background:linear-gradient(#9a00ff,#4800ff 11px,#0004ff 28px,#003eff 39px,#00cdff 40px,#00cdff 46px,#2900ff 47px,#001dff 48px,#00c9ff 50px,#00f8ff 51px,#00fffa 52px,#00ffd7 54px,#00ff85 56px,#0bff00 61px,#47ff00 63px,#50ff00 65px,#b9ff00 94px,#daff00 111px,#feff00 159px,#fff700 236px,#ffef00 241px,#ffc600 245px,#ff7500 249px,#ff0100 253px,#ff5b5b 257px)}.gd5{background:linear-gradient(#e700ff,#8b00ff 13px,#2500ff 39px,#0078ff 40px,#0078ff 46px,#2400ff 47px,#0025ff 48px,#00ceff 50px,#00faff 51px,#00ffd3 54px,#00ff7e 56px,#00ff0c 60px,#4fff00 63px,#c4ff00 96px,#deff00 111px,#feff00 156px,#fff400 238px,#ffe800 242px,#ffb700 246px,#ff5c00 250px,#ff0000 253px,#ff5b5b 257px)}.gd6{background:linear-gradient(#110011,#110011 39px,#000000 42px,#cf00cf 46px,#f300ff 47px,#3700ff 50px,#0017ff 51px,#007eff 52px,#00adff 53px,#005eff 54px,#00bdff 56px,#00edff 59px,#00ffff 62px,#00ffeb 81px,#00ff77 140px,#01ff00 185px,#17ff00 192px,#78ff00 204px,#cfff00 218px,#f7ff00 229px,#ffff00 237px,#fff800 241px,#ffc600 246px,#ff0909 254px,#ff4646 257px)}.gd7{background:linear-gradient(#e700e7,#fe00ff 2px,#ad00ff 16px,#5500ff 39px,#2200ff 40px,#2200ff 46px,#6600ff 47px,#2b00ff 48px,#001bff 49px,#00d1ff 51px,#00fbff 52px,#00ffff 53px,#00ffde 55px,#00ff00 63px,#93ff00 99px,#bdff00 120px,#fbff00 177px,#fff700 235px,#ffea00 241px,#ffca00 244px,#ff9800 247px,#ff1200 252px,#ff0e0e 253px,#ff6868 257px)}.gd8{background:linear-gradient(#e800ff,#c000ff 4px,#8300ff 15px,#2700ff 39px,#0071ff 40px,#0071ff 46px,#2800ff 47px,#001fff 48px,#00caff 50px,#00f8ff 51px,#00ffe8 53px,#00ff70 56px,#00ff19 59px,#05ff00 60px,#5eff00 63px,#c6ff00 93px,#e1ff00 107px,#feff00 149px,#fff200 235px,#ffe700 241px,#ffc600 244px,#ff9200 247px,#ff0a00 252px,#ff1515 253px,#ff6f6f 257px)}.gd9{background:linear-gradient(#840084,#b900b9 6px,#ff00ff 20px,#b900ff 38px,#bb00ff 46px,#9b00ff 47px,#2400ff 49px,#0034ff 50px,#0097ff 51px,#00dfff 52px,#00fffd 55px,#00ffc2 59px,#00ff60 63px,#02ff00 86px,#57ff00 110px,#c5ff00 166px,#f5ff00 200px,#fffd00 235px,#fff200 241px,#ffca00 245px,#ff7b00 249px,#ff0700 253px,#ff5555 257px)}.gda{background:linear-gradient(#800080,#b500b5 6px,#ff00ff 21px,#bd00ff 39px,#ab00ff 40px,#ab00ff 46px,#8700ff 47px,#1000ff 49px,#00afff 51px,#00ecff 52px,#00ffff 54px,#00ffc2 58px,#00ff44 63px,#01ff00 79px,#5aff00 100px,#caff00 158px,#f6ff00 192px,#fffd00 235px,#fff300 241px,#ffcb00 245px,#ff6400 250px,#ff0900 253px,#ff5353 257px)}.gdb{background:linear-gradient(#5a005a,#a600a6 10px,#fe00fe 30px,#e300ff 39px,#bb00ff 40px,#bb00ff 45px,#ad00ff 46px,#3600ff 48px,#0009ff 49px,#00c6ff 51px,#00f7ff 52px,#00ffff 53px,#00fff6 55px,#00ffbd 58px,#00ff3c 63px,#00ff00 77px,#64ff00 101px,#caff00 155px,#f8ff00 192px,#fff900 241px,#ffba00 247px,#ff7800 250px,#ff0100 254px,#ff3d3d 257px)}.gdc{background:linear-gradient(#ba00ba,#fd00ff 9px,#8200ff 39px,#4f00ff 40px,#4f00ff 46px,#6500ff 47px,#2a00ff 48px,#001cff 49px,#00d2ff 51px,#00fbff 52px,#00ffff 53px,#00ffe0 55px,#00ff03 63px,#02ff00 64px,#94ff00 100px,#beff00 122px,#fbff00 178px,#fff800 235px,#ffec00 241px,#ffcd00 244px,#ff9b00 247px,#ff0909 253px,#ff6464 257px)}.gdd{background:linear-gradient(#770077,#be00be 9px,#ff00ff 23px,#c600ff 39px,#9700ff 40px,#9700ff 46px,#2f00ff 48px,#0013ff 49px,#00cdff 51px,#00f9ff 52px,#00ffff 53px,#00ffdf 55px,#00ff01 63px,#03ff00 64px,#95ff00 100px,#bfff00 122px,#faff00 176px,#fff600 235px,#ffe800 241px,#ffc700 244px,#ff7d00 248px,#ff0d00 252px,#ff1212 253px,#ff6c6c 257px)}.gde{background:linear-gradient(#f800ff,#9c00ff 13px,#3600ff 39px,#0014ff 40px,#0014ff 46px,#5600ff 47px,#1b00ff 48px,#0033ff 49px,#0096ff 50px,#00deff 51px,#00feff 52px,#00fffc 53px,#00ffe2 55px,#00ff06 63px,#00ff02 64px,#91ff00 100px,#bdff00 123px,#fbff00 179px,#fffc00 235px,#fff400 241px,#ffcf00 245px,#ff8200 249px,#ff1000 253px,#ff1010 254px,#ff4d4d 257px)}.gdf{background:linear-gradient(#0f000f,#6c006c 15px,#c800c8 39px,#de00de 40px,#de00de 44px,#f100ff 45px,#0d00ff 49px,#00b3ff 51px,#00eeff 52px,#00fffa 54px,#00ff88 59px,#00ff15 63px,#01ff00 68px,#85ff00 100px,#b0ff00 121px,#f8ff00 179px,#fff300 235px,#ffe200 241px,#ffbd00 244px,#ff8700 247px,#ff0303 252px,#ff7a7a 257px)}.ge0{background:linear-gradient(#0011ff,#0062ff 6px,#00a2ff 15px,#00d4ff 26px,#00f3ff 39px,#00eaff 46px,#a800ff 47px,#3100ff 49px,#0020ff 50px,#00d4ff 52px,#00ffff 55px,#00ffd5 59px,#00ff7c 63px,#01ff00 93px,#52ff00 120px,#d0ff00 183px,#fbff00 213px,#fffd00 235px,#fff000 241px,#ffb600 246px,#ff0101 253px,#ff5c5c 257px)}.ge1{background:linear-gradient(#be00be,#ff00ff 8px,#7f00ff 39px,#5900ff 40px,#5900ff 46px,#7300ff 47px,#3700ff 48px,#0007ff 49px,#00c5ff 51px,#00f6ff 52px,#00ffff 53px,#00fff0 55px,#00ffb1 58px,#00ff2b 63px,#00ff00 73px,#71ff00 100px,#a1ff00 122px,#f7ff00 185px,#fffd00 235px,#fff300 241px,#ffcd00 245px,#ff6700 250px,#ff0c00 253px,#ff1313 254px,#ff5050 257px)}.ge2{background:linear-gradient(#e900e9,#fc00ff 2px,#a600ff 17px,#5300ff 39px,#0003ff 40px,#0003ff 46px,#4400ff 47px,#0800ff 48px,#00adff 50px,#00ebff 51px,#00ffff 52px,#00ffed 54px,#00ff07 62px,#17ff00 63px,#a6ff00 99px,#cbff00 119px,#fdff00 173px,#fffb00 235px,#fff300 241px,#ffbf00 246px,#ff6600 250px,#ff0c00 253px,#ff1313 254px,#ff5050 257px)}.ge3{background:linear-gradient(#7b007b,#aa00aa 5px,#ff00ff 22px,#c100ff 38px,#c100ff 39px,#e000ff 40px,#e000ff 46px,#b800ff 47px,#4100ff 49px,#0008ff 50px,#00c5ff 52px,#00e5ff 53px,#00d9ff 54px,#00f2ff 55px,#00ffff 57px,#00ffed 60px,#00ffbd 63px,#00ff33 100px,#01ff00 120px,#e6ff00 212px,#fffc00 240px,#ffce00 246px,#ff7c00 250px,#ff0500 254px,#ff3939 257px)}.ge4{background:linear-gradient(#f500f5,#9600ff 18px,#4800ff 39px,#3300ff 40px,#3300ff 46px,#8400ff 47px,#0d00ff 49px,#00b2ff 51px,#00eeff 52px,#00fffd 54px,#00ffad 58px,#00ff26 63px,#00ff03 71px,#77ff00 100px,#a4ff00 121px,#f7ff00 183px,#fff800 234px,#ffe900 241px,#ffc700 244px,#ff7d00 248px,#ff0d00 252px,#ff1212 253px,#ff6c6c 257px)}.ge5{background:linear-gradient(#730073,#b400b4 8px,#ff00ff 24px,#ca00ff 38px,#ca00ff 39px,#f100ff 40px,#f100ff 46px,#0400ff 50px,#00bdff 52px,#00dfff 53px,#00d1ff 54px,#00edff 55px,#00ffff 57px,#00fff2 60px,#00ffc6 63px,#00ff41 100px,#01ff00 127px,#9eff00 191px,#e4ff00 212px,#fffc00 239px,#ffc700 246px,#ff7300 250px,#ff0606 254px,#ff4343 257px)}.ge6{background:linear-gradient(#d600ff,#a700ff 5px,#6c00ff 16px,#1500ff 39px,#0059ff 40px,#0059ff 46px,#4b00ff 47px,#0f00ff 48px,#00e6ff 51px,#00ffff 52px,#00ffde 55px,#00ff00 63px,#97ff00 100px,#beff00 120px,#faff00 175px,#fffd00 235px,#fff700 241px,#ffc700 246px,#ff7300 250px,#ff0606 254px,#ff4343 257px)}.ge7{background:linear-gradient(#000000,#000000 41px,#1a001a 42px,#5d005d 43px,#f200f2 46px,#d100ff 47px,#1500ff 50px,#004cff 51px,#00aaff 52px,#00d1ff 53px,#00beff 54px,#00f6ff 56px,#00ffff 58px,#00ffd8 63px,#00ff5e 100px,#02ff00 142px,#88ff00 192px,#e5ff00 214px,#fffd00 237px,#fff300 241px,#ffbb00 246px,#ff6100 250px,#ff0600 253px,#ff5656 257px)}.ge8{background:linear-gradient(#1d001d,#1d001d 39px,#000000 40px,#000000 42px,#cf00cf 46px,#f300ff 47px,#3700ff 50px,#0017ff 51px,#007eff 52px,#00adff 53px,#006fff 54px,#00c9ff 56px,#00f3ff 59px,#00ffff 62px,#00ff62 141px,#00ff00 178px,#2bff00 192px,#91ff00 205px,#d6ff00 217px,#fbff00 229px,#fffc00 238px,#fff300 241px,#ffb900 246px,#ff5f00 250px,#ff0300 253px,#ff5858 257px)}.ge9{background:linear-gradient(#8200ff,#5300ff 5px,#0200ff 21px,#0061ff 39px,#00efff 40px,#00efff 46px,#1200ff 47px,#0040ff 48px,#00ddff 50px,#00feff 51px,#00fff1 52px,#00ffd8 53px,#00ff49 56px,#10ff00 59px,#83ff00 63px,#eaff00 99px,#fffd00 156px,#ffda00 192px,#ffea00 236px,#ffe100 241px,#ffbe00 244px,#ff8800 247px,#ff0202 252px,#ff7979 257px)}.gea{background:linear-gradient(#c000c0,#fd00ff 8px,#7100ff 40px,#7100ff 46px,#8e00ff 47px,#1700ff 49px,#0048ff 50px,#00a7ff 51px,#00e8ff 52px,#00fffe 55px,#00ffc5 59px,#00ff65 63px,#01ff00 87px,#39ff00 100px,#6bff00 120px,#d8ff00 179px,#f8ff00 207px,#fffb00 240px,#ffcd00 246px,#ff7a00 250px,#ff0300 254px,#ff3b3b 257px)}.geb{background:linear-gradient(#210021,#210021 39px,#000000 40px,#000000 42px,#150015 43px,#e600e6 47px,#dd00ff 48px,#1700ff 51px,#0048ff 52px,#007eff 53px,#0012ff 54px,#0080ff 56px,#00c5ff 59px,#00f1ff 62px,#00ffff 72px,#00fff5 92px,#00ff9a 153px,#00ff35 192px,#01ff00 197px,#96ff00 212px,#e6ff00 224px,#ffee00 241px,#ffaf00 246px,#ff1400 252px,#ff0b0b 253px,#ff6666 257px)}.gec{background:linear-gradient(#e900e9,#fc00ff 2px,#a200ff 18px,#5400ff 39px,#0c00ff 40px,#0c00ff 46px,#5100ff 47px,#1500ff 48px,#003bff 49px,#009dff 50px,#00e2ff 51px,#00ffff 52px,#00ffe6 55px,#00ff11 63px,#01ff00 67px,#89ff00 100px,#b7ff00 123px,#fbff00 182px,#fff900 241px,#ffbb00 247px,#ff7a00 250px,#ff0300 254px,#ff3b3b 257px)}.ged{background:linear-gradient(#5e005e,#9a009a 7px,#fe00fe 29px,#de00ff 39px,#ca00ff 40px,#c100ff 46px,#0e00ff 49px,#00b1ff 51px,#00edff 52px,#00ffff 54px,#00ffca 58px,#00ff50 63px,#02ff00 82px,#52ff00 101px,#caff00 162px,#f5ff00 195px,#fffa00 239px,#fff000 242px,#ffc600 246px,#ff0707 254px,#ff4444 257px)}.gee{background:linear-gradient(#030003,#000000 43px,#840084 46px,#fb00fb 48px,#c800ff 49px,#000dff 52px,#0047ff 53px,#4c00ff 54px,#0100ff 56px,#00bbff 63px,#00eeff 85px,#00fff5 143px,#00ffb8 187px,#00ffa3 193px,#00ff07 206px,#b3ff00 222px,#edff00 230px,#fffd00 239px,#ffe300 243px,#ffab00 247px,#ff0b00 253px,#ff1414 254px,#ff5151 257px)}.gef{background:linear-gradient(#190019,#190019 39px,#000000 40px,#000000 41px,#1c001c 42px,#5f005f 43px,#f400f4 46px,#ce00ff 47px,#1200ff 50px,#00adff 52px,#00d3ff 53px,#00c4ff 54px,#00f8ff 56px,#00ffff 58px,#00ffd3 63px,#00ff55 100px,#01ff00 137px,#90ff00 192px,#e8ff00 214px,#fffe00 236px,#fff200 241px,#ffb900 246px,#ff5f00 250px,#ff0400 253px,#ff5858 257px)}.gf0{background:linear-gradient(#f900f9,#9b00ff 16px,#4400ff 39px,#0016ff 40px,#0016ff 46px,#4700ff 47px,#0c00ff 48px,#00a8ff 50px,#00e9ff 51px,#00ffff 52px,#00ffec 54px,#00ff04 62px,#1aff00 63px,#89ff00 90px,#cdff00 119px,#fcff00 169px,#fffa00 235px,#fff000 241px,#ffc800 245px,#ff7800 249px,#ff0400 253px,#ff5757 257px)}.gf1{background:linear-gradient(#0011ff,#0062ff 6px,#00adff 17px,#00e6ff 32px,#00faff 46px,#8700ff 47px,#1000ff 49px,#00afff 51px,#00ecff 52px,#00fffe 54px,#00ff9e 59px,#00ff30 63px,#00ff00 74px,#6eff00 100px,#ccff00 151px,#fbff00 192px,#fff900 235px,#ffeb00 241px,#ffcc00 244px,#ff9a00 247px,#ff1400 252px,#ff0b0b 253px,#ff6666 257px)}.gf2{background:linear-gradient(#190019,#600060 9px,#da00da 38px,#da00da 39px,#500050 40px,#500050 44px,#6d006d 45px,#da00da 47px,#e800ff 48px,#2200ff 51px,#0037ff 52px,#006fff 53px,#d400d4 54px,#f900f9 55px,#5900ff 63px,#0000ff 95px,#0049ff 120px,#00d8ff 137px,#00f7ff 144px,#00fffe 152px,#00ffbe 166px,#00ff04 184px,#bbff00 200px,#c7ff00 203px,#f8ff00 222px,#fff300 241px,#ffbc00 246px,#ff6200 250px,#ff0800 253px,#ff5454 257px)}.gf3{background:linear-gradient(#950095,#c400c4 5px,#fe00fe 16px,#a800ff 39px,#7800ff 40px,#7800ff 46px,#6900ff 47px,#2e00ff 48px,#0016ff 49px,#00ceff 51px,#00faff 52px,#00ffff 53px,#00ffea 55px,#00ff19 63px,#01ff00 69px,#82ff00 100px,#acff00 120px,#f8ff00 180px,#fffc00 234px,#fff200 241px,#ffca00 245px,#ff7b00 249px,#ff0800 253px,#ff5454 257px)}.gf4{background:linear-gradient(#f200ff,#c300ff 5px,#8800ff 16px,#3100ff 39px,#0017ff 40px,#0017ff 46px,#5a00ff 47px,#1e00ff 48px,#002dff 49px,#0091ff 50px,#00dbff 51px,#00fdff 52px,#00fffa 54px,#00ff87 59px,#00ff15 63px,#00ff03 67px,#82ff00 99px,#afff00 120px,#f8ff00 179px,#fffd00 236px,#fff700 241px,#ffc700 246px,#ff0606 254px,#ff4444 257px)}.gf5{background:linear-gradient(#180018,#180018 39px,#000000 41px,#070007 42px,#4a004a 43px,#df00df 46px,#e400ff 47px,#2700ff 50px,#002fff 51px,#0093ff 52px,#00beff 53px,#0092ff 54px,#00e0ff 56px,#00ffff 60px,#02ff00 164px,#52ff00 192px,#adff00 206px,#e6ff00 219px,#fffe00 237px,#fff400 241px,#ffbc00 246px,#ff6300 250px,#ff0800 253px,#ff5454 257px)}.gf6{background:linear-gradient(#ec00ec,#fa00ff 2px,#ad00ff 15px,#5100ff 39px,#1600ff 40px,#1600ff 46px,#5e00ff 47px,#2200ff 48px,#0027ff 49px,#008cff 50px,#00d8ff 51px,#00fdff 52px,#00fffe 53px,#00ffed 55px,#00ff20 63px,#02ff00 71px,#7bff00 100px,#d9ff00 154px,#fcff00 189px,#fffa00 240px,#ffcb00 246px,#ff7800 250px,#ff0000 254px,#ff3e3e 257px)}.gf7{background:linear-gradient(#de00ff,#af00ff 5px,#7400ff 16px,#1d00ff 39px,#0047ff 40px,#0047ff 46px,#4e00ff 47px,#1300ff 48px,#003fff 49px,#00a0ff 50px,#00e4ff 51px,#00ffff 52px,#00ffe1 55px,#00ff05 63px,#04ff00 65px,#8fff00 99px,#baff00 120px,#faff00 177px,#fffd00 236px,#fff700 241px,#ffc700 246px,#ff7300 250px,#ff0606 254px,#ff4343 257px)}.gf8{background:linear-gradient(#0f000f,#4f004f 9px,#880088 21px,#c900c9 38px,#c000c0 44px,#ef00ef 45px,#dd00ff 46px,#2b00ff 49px,#0029ff 50px,#008eff 51px,#00d9ff 52px,#00f2ff 53px,#00ffff 55px,#00ffd8 59px,#00ff82 63px,#03ff00 95px,#49ff00 119px,#d5ff00 188px,#f8ff00 213px,#fffb00 239px,#fff100 242px,#ffc700 246px,#ff0707 254px,#ff4444 257px)}.gf9{background:linear-gradient(#310031,#600060 5px,#920092 14px,#f300f3 39px,#db00db 40px,#db00db 44px,#e000e0 45px,#ec00ff 46px,#3a00ff 49px,#0012ff 50px,#00ccff 52px,#00fbff 54px,#00ffff 55px,#00ffce 59px,#00ff72 63px,#03ff00 91px,#5cff00 120px,#d6ff00 183px,#fbff00 208px,#fff600 235px,#ffe100 241px,#ffc900 243px,#ff9b00 246px,#ff1900 251px,#ff0707 252px,#ff7d7d 257px)}.gfa{background:linear-gradient(#4f004f,#9b009b 10px,#f700f7 31px,#f500ff 45px,#dc00ff 46px,#2a00ff 49px,#002bff 50px,#0090ff 51px,#00daff 52px,#00ffff 54px,#00ffc8 58px,#00ff4c 63px,#01ff00 81px,#52ff00 100px,#c8ff00 160px,#f9ff00 198px,#fff600 235px,#ffe400 241px,#ffbf00 244px,#ff8a00 247px,#ff0100 252px,#ff7777 257px)}.gfb{background:linear-gradient(#470047,#760076 5px,#c700c7 21px,#fd00fd 35px,#fe00fe 45px,#df00ff 46px,#2c00ff 49px,#0028ff 50px,#00d8ff 52px,#00fffc 55px,#00ffbe 59px,#00ff5a 63px,#03ff00 85px,#5aff00 109px,#c7ff00 165px,#faff00 203px,#fff900 234px,#ffe700 241px,#ffc400 244px,#ff9000 247px,#ff0800 252px,#ff7171 257px)}.gfc{background:linear-gradient(#ac00ac,#d400d4 4px,#fc00ff 12px,#9100ff 39px,#7d00ff 40px,#8500ff 47px,#0e00ff 49px,#00b1ff 51px,#00edff 52px,#00fffa 54px,#00ff87 59px,#00ff14 63px,#01ff00 68px,#85ff00 100px,#b0ff00 121px,#faff00 182px,#fff300 235px,#ffe100 241px,#ffc900 243px,#ff9b00 246px,#ff0606 252px,#ff7d7d 257px)}.gfd{background:linear-gradient(#b500b5,#fd00ff 10px,#8800ff 39px,#7300ff 40px,#7300ff 46px,#8400ff 47px,#0d00ff 49px,#00b2ff 51px,#00eeff 52px,#00ffff 54px,#00ffc7 58px,#00ff4c 63px,#01ff00 81px,#52ff00 100px,#c8ff00 160px,#f5ff00 194px,#fffa00 239px,#fff000 242px,#ffc500 246px,#ff6f00 250px,#ff1500 253px,#ff0a0a 254px,#ff4747 257px)}.gfe{background:linear-gradient(#cd00cd,#fc00ff 6px,#7000ff 39px,#3f00ff 40px,#3f00ff 46px,#6800ff 47px,#2d00ff 48px,#0017ff 49px,#00cfff 51px,#00faff 52px,#00ffff 53px,#00ff03 62px,#1cff00 63px,#a5ff00 98px,#ceff00 120px,#fdff00 172px,#ffee00 235px,#ffdd00 241px,#ffc500 243px,#ff9500 246px,#ff1200 251px,#ff0d0d 252px,#ff8383 257px)}.gff{background:linear-gradient(#6d006d,#b400b4 9px,#fd00ff 26px,#d000ff 38px,#de00ff 46px,#3000ff 49px,#0022ff 50px,#00d5ff 52px,#00feff 54px,#00fffc 55px,#00ffbd 59px,#00ff59 63px,#00ff00 84px,#58ff00 108px,#c2ff00 162px,#f9ff00 201px,#fff600 235px,#ffe200 241px,#ffbc00 244px,#ff8600 247px,#ff0404 252px,#ff7c7c 257px)}.g100{background:linear-gradient(#010001,#000000 41px,#060006 42px,#490049 43px,#de00de 46px,#e500ff 47px,#2800ff 50px,#002eff 51px,#0092ff 52px,#00bdff 53px,#00a8ff 54px,#00ecff 56px,#00ffff 59px,#00ff79 101px,#01ff00 154px,#6aff00 192px,#b0ff00 203px,#e8ff00 216px,#fffc00 236px,#ffea00 241px,#ffb700 245px,#ff7a00 248px,#ff0900 252px,#ff1616 253px,#ff6f6f 257px)}.g101{background:linear-gradient(#0011ff,#0062ff 6px,#00a2ff 15px,#00fffd 40px,#00fffd 46px,#5100ff 47px,#1600ff 48px,#003bff 49px,#009cff 50px,#00e2ff 51px,#00ffff 52px,#00ffe9 54px,#04ff00 62px,#23ff00 63px,#8fff00 90px,#d2ff00 120px,#fcff00 167px,#fff500 235px,#ffe800 241px,#ffc800 244px,#ff7d00 248px,#ff0d00 252px,#ff1212 253px,#ff6c6c 257px)}.g102{background:linear-gradient(#5a005a,#a600a6 10px,#fe00fe 30px,#e300ff 38px,#f200ff 45px,#e400ff 46px,#3200ff 49px,#001fff 50px,#00d3ff 52px,#00feff 54px,#00fffd 55px,#00ffc0 59px,#00ff5d 63px,#00ff00 85px,#4fff00 106px,#c6ff00 166px,#faff00 203px,#fff600 235px,#ffe200 241px,#ffbc00 244px,#ff9c00 246px,#ff0505 252px,#ff7c7c 257px)}.g103{background:linear-gradient(#230023,#6f006f 10px,#e400e4 38px,#e400e4 39px,#b100b1 40px,#b100b1 44px,#c500c5 45px,#f600f6 46px,#cc00ff 47px,#1000ff 50px,#00afff 52px,#00d5ff 53px,#00ffff 57px,#00ffef 60px,#00ffc0 63px,#00ff3a 100px,#01ff00 124px,#a5ff00 192px,#eaff00 211px,#fffc00 235px,#ffea00 241px,#ffb800 245px,#ff7b00 248px,#ff0b00 252px,#ff1414 253px,#ff6e6e 257px)}.g104{background:linear-gradient(#070007,#040004 42px,#470047 43px,#dc00dc 46px,#e700ff 47px,#2a00ff 50px,#002bff 51px,#008fff 52px,#00bbff 53px,#00b6ff 54px,#00f2ff 56px,#00ffff 59px,#00ffde 63px,#00ff6a 100px,#01ff00 147px,#7bff00 192px,#c8ff00 205px,#f0ff00 216px,#fff900 235px,#ffde00 241px,#ffc300 243px,#ff9300 246px,#ff0f00 251px,#ff1111 252px,#ff8686 257px)}.g105{background:linear-gradient(#9200ff,#4b00ff 9px,#0200ff 25px,#0049ff 39px,#00e7ff 40px,#00e7ff 46px,#1100ff 47px,#00deff 50px,#00feff 51px,#00fff0 52px,#00ffbb 54px,#00ff5b 56px,#00ff03 59px,#1bff00 60px,#73ff00 63px,#e6ff00 103px,#fffe00 161px,#ffe500 192px,#fff300 235px,#ffea00 241px,#ffcc00 244px,#ff8200 248px,#ff1300 252px,#ff0c0c 253px,#ff6666 257px)}.g106{background:linear-gradient(#020002,#000000 41px,#0d000d 42px,#500050 43px,#e500e5 46px,#de00ff 47px,#2100ff 50px,#0038ff 51px,#009aff 52px,#00c5ff 53px,#0095ff 54px,#00e1ff 56px,#00ffff 60px,#00ff01 163px,#52ff00 192px,#deff00 218px,#ffff00 237px,#fff800 241px,#ffc700 246px,#ff0707 254px,#ff4545 257px)}.g107{background:linear-gradient(#120012,#120012 39px,#000000 40px,#000000 42px,#120012 43px,#e200e2 47px,#e000ff 48px,#1a00ff 51px,#0044ff 52px,#007aff 53px,#0009ff 54px,#0079ff 56px,#00d2ff 60px,#00f7ff 63px,#00ffff 74px,#00fff8 92px,#00ffa0 155px,#00ff41 192px,#00ff00 198px,#a0ff00 214px,#e8ff00 225px,#ffef00 241px,#ffae00 246px,#ff1300 252px,#ff0c0c 253px,#ff6666 257px)}.g108{background:linear-gradient(#fe00ff,#d600ff 4px,#9900ff 15px,#3d00ff 39px,#0d00ff 40px,#0d00ff 46px,#6900ff 47px,#2e00ff 48px,#0016ff 49px,#00ceff 51px,#00faff 52px,#00fffd 54px,#00ffae 58px,#00ff27 63px,#00ff01 72px,#70ff00 99px,#a5ff00 124px,#f4ff00 181px,#fffe00 235px,#fff600 241px,#ffd300 245px,#ff9e00 248px,#ff0909 254px,#ff4747 257px)}.g109{background:linear-gradient(#780078,#bf00bf 9px,#fe00ff 23px,#c500ff 38px,#cc00ff 46px,#2900ff 49px,#002cff 50px,#0090ff 51px,#00daff 52px,#00ffff 54px,#00ffc9 58px,#00ff4e 63px,#02ff00 82px,#58ff00 104px,#caff00 163px,#fbff00 202px,#fff800 235px,#ffe600 241px,#ffc200 244px,#ff8d00 247px,#ff0400 252px,#ff7474 257px)}.g10a{background:linear-gradient(#140014,#140014 39px,#000000 41px,#170017 42px,#5a005a 43px,#ef00ef 46px,#d300ff 47px,#1700ff 50px,#0048ff 51px,#00a7ff 52px,#00ceff 53px,#00acff 54px,#00edff 56px,#00ffff 59px,#00ffe5 63px,#00ff76 101px,#01ff00 153px,#6dff00 192px,#dbff00 215px,#ffff00 237px,#fff800 241px,#ffc700 246px,#ff0606 254px,#ff4444 257px)}.g10b{background:linear-gradient(#500050,#9c009c 10px,#f400f4 30px,#ff00ff 33px,#ed00ff 39px,#e400e4 40px,#e400e4 45px,#fc00fc 46px,#0a00ff 50px,#00b6ff 52px,#00daff 53px,#00ffff 56px,#00fff4 59px,#00ffb6 63px,#00ff2c 100px,#01ff00 118px,#adff00 191px,#edff00 211px,#fffd00 235px,#ffeb00 241px,#ffc900 244px,#ff7e00 248px,#ff0e00 252px,#ff1111 253px,#ff6b6b 257px)}.g10c{background:linear-gradient(#b700b7,#ed00ed 6px,#fb00ff 10px,#8500ff 39px,#3500ff 40px,#3500ff 46px,#4900ff 47px,#0d00ff 48px,#0047ff 49px,#00a7ff 50px,#00e8ff 51px,#00ffff 52px,#00fff1 54px,#0dff00 63px,#9cff00 99px,#c5ff00 121px,#f9ff00 170px,#fffc00 235px,#fff400 241px,#ffcf00 245px,#ff8100 249px,#ff0f00 253px,#ff1111 254px,#ff4e4e 257px)}.g10d{background:linear-gradient(#4800ff,#0006ff 10px,#006eff 25px,#00adff 39px,#00fffd 40px,#00fffd 46px,#0004ff 47px,#00aeff 49px,#00ebff 50px,#00ffff 51px,#00ffc5 53px,#00ff2e 56px,#0eff00 58px,#9aff00 63px,#f4ff00 100px,#fffa00 154px,#ffcd00 192px,#ffe600 239px,#ffda00 242px,#ffa000 246px,#ff0000 252px,#ff7878 257px)}.g10e{background:linear-gradient(#000000,#000000 42px,#fa00fa 47px,#c800ff 48px,#0200ff 51px,#0067ff 52px,#0099ff 53px,#0031ff 54px,#009bff 56px,#00c6ff 58px,#00f2ff 61px,#00ffff 65px,#00fff4 86px,#00ffa2 139px,#00ff51 174px,#00ff08 194px,#ccff00 220px,#f6ff00 230px,#fffb00 240px,#ffc300 246px,#ff6c00 250px,#ff1200 253px,#ff0d0d 254px,#ff4a4a 257px)}.g10f{background:linear-gradient(#db00db,#fb00ff 4px,#b000ff 18px,#6200ff 39px,#0f00ff 40px,#0f00ff 46px,#4700ff 47px,#0b00ff 48px,#00a9ff 50px,#00e9ff 51px,#00ffff 52px,#00ffe6 54px,#00ff9d 56px,#0cff00 62px,#2bff00 63px,#83ff00 85px,#b5ff00 100px,#d1ff00 117px,#fcff00 165px,#fff700 235px,#ffeb00 241px,#ffcc00 244px,#ff8300 248px,#ff1300 252px,#ff0c0c 253px,#ff6666 257px)}.g110{background:linear-gradient(#5e005e,#a500a5 9px,#fe00fe 29px,#de00ff 38px,#eb00ff 40px,#e100ff 46px,#2e00ff 49px,#0024ff 50px,#008aff 51px,#00d6ff 52px,#00f0ff 53px,#00fffe 55px,#00ffc6 59px,#00ff66 63px,#02ff00 88px,#44ff00 106px,#c0ff00 167px,#faff00 207px,#fffb00 234px,#ffea00 241px,#ffc900 244px,#ff7e00 248px,#ff0e00 252px,#ff1111 253px,#ff6b6b 257px)}.g111{background:linear-gradient(#190019,#190019 39px,#000000 40px,#000000 41px,#1b001b 42px,#5e005e 43px,#f200f2 46px,#d000ff 47px,#1400ff 50px,#00abff 52px,#00d1ff 53px,#00ffff 57px,#00ffeb 60px,#00ffb9 63px,#00ff31 100px,#01ff00 120px,#acff00 192px,#edff00 210px,#fff900 235px,#ffe000 241px,#ffb800 244px,#ff8000 247px,#ff1300 251px,#ff0c0c 252px,#ff8282 257px)}.g112{background:linear-gradient(#0e000e,#0e000e 39px,#000000 41px,#080008 42px,#4a004a 43px,#df00df 46px,#e300ff 47px,#2700ff 50px,#0030ff 51px,#0093ff 52px,#00bfff 53px,#00a1ff 54px,#00e8ff 56px,#00ffff 60px,#00ff86 100px,#01ff00 159px,#5fff00 192px,#b1ff00 205px,#e5ff00 217px,#fffe00 236px,#ffef00 241px,#ffc000 245px,#ff0808 253px,#ff6363 257px)}.g113{background:linear-gradient(#0f000f,#580058 11px,#a300a3 28px,#c800c8 38px,#bd00bd 44px,#ed00ed 45px,#e000ff 46px,#2d00ff 49px,#0026ff 50px,#008bff 51px,#00d7ff 52px,#00f1ff 53px,#00ffff 55px,#00ffd5 59px,#00ff7d 63px,#01ff00 94px,#4cff00 120px,#d0ff00 185px,#f7ff00 211px,#fffb00 238px,#fff500 241px,#ffc000 246px,#ff6700 250px,#ff0d00 253px,#ff1313 254px,#ff5050 257px)}.g114{background:linear-gradient(#0f000f,#720072 16px,#ca00ca 38px,#ca00ca 39px,#af00af 40px,#af00af 44px,#dd00dd 45px,#ef00ff 46px,#000eff 50px,#00c9ff 52px,#00ffff 55px,#00ffd9 59px,#00ff83 63px,#03ff00 96px,#46ff00 120px,#ecff00 201px,#fffa00 235px,#ffe700 241px,#ffc200 244px,#ff8d00 247px,#ff0300 252px,#ff7575 257px)}.g115{background:linear-gradient(#240024,#700070 10px,#d300d3 33px,#e500e5 39px,#c700c7 40px,#c700c7 44px,#f300ff 46px,#0008ff 50px,#00c6ff 52px,#00e5ff 53px,#00ffff 56px,#00ffe1 60px,#00ffa8 63px,#00ff1a 100px,#02ff00 111px,#dfff00 204px,#fffd00 237px,#fff400 241px,#ffbd00 246px,#ff6300 250px,#ff0800 253px,#ff5353 257px)}.g116{background:linear-gradient(#7100ff,#3b00ff 6px,#0200ff 17px,#007aff 39px,#00feff 40px,#00feff 46px,#0006ff 47px,#00afff 49px,#00ecff 50px,#00ffff 51px,#00ffa4 54px,#00ff3d 56px,#00ff02 58px,#1cff00 59px,#8eff00 63px,#edff00 99px,#fffd00 154px,#ffd700 192px,#fff200 235px,#ffea00 241px,#ffcb00 244px,#ff8100 248px,#ff1200 252px,#ff0d0d 253px,#ff6868 257px)}.g117{background:linear-gradient(#2d002d,#790079 10px,#ee00ee 38px,#ee00ee 39px,#c300c3 40px,#c300c3 44px,#cd00cd 45px,#fe00fe 46px,#0800ff 50px,#00b8ff 52px,#00dbff 53px,#00ffff 56px,#00fff1 59px,#00ffaf 63px,#00ff24 100px,#02ff00 115px,#ebff00 209px,#fffc00 235px,#ffea00 241px,#ffb800 245px,#ff7b00 248px,#ff0a00 252px,#ff1515 253px,#ff6f6f 257px)}.g118{background:linear-gradient(#0f000f,#0f000f 39px,#000000 41px,#1c001c 42px,#5f005f 43px,#f300f3 46px,#cf00ff 47px,#1300ff 50px,#00acff 52px,#00d2ff 53px,#00c9ff 54px,#00faff 56px,#00ffff 58px,#00ffce 63px,#00ff52 100px,#00ff00 136px,#8eff00 191px,#e6ff00 213px,#fffd00 236px,#ffef00 241px,#ffc200 245px,#ff0707 253px,#ff6262 257px)}.g119{background:linear-gradient(#0032ff,#006eff 4px,#00b0ff 13px,#00e5ff 26px,#00fbff 39px,#00ff82 40px,#00ff82 46px,#0045ff 47px,#00d7ff 49px,#00fdff 50px,#00fff4 51px,#04ff00 56px,#bfff00 63px,#f2ff00 87px,#fff400 145px,#ffae00 192px,#ffe900 239px,#ffdf00 242px,#ffa800 246px,#ff0900 252px,#ff1616 253px,#ff7070 257px)}.g11a{background:linear-gradient(#770077,#be00be 9px,#ff00ff 23px,#c600ff 38px,#c100ff 46px,#1e00ff 49px,#003eff 50px,#009fff 51px,#00e3ff 52px,#00ffff 54px,#00ffcd 58px,#00ff55 63px,#03ff00 84px,#46ff00 100px,#c2ff00 162px,#f7ff00 201px,#fffe00 234px,#fff300 241px,#ffcb00 245px,#ff7b00 249px,#ff0700 253px,#ff5454 257px)}.g11b{background:linear-gradient(#030003,#000000 42px,#f900f9 47px,#c900ff 48px,#0300ff 51px,#0065ff 52px,#0098ff 53px,#0044ff 54px,#00aaff 56px,#00bfff 57px,#00eeff 60px,#00ffff 63px,#00fff1 84px,#00ff93 140px,#00ff41 174px,#00ff00 193px,#6fff00 205px,#ccff00 218px,#f6ff00 228px,#fffc00 238px,#fff200 241px,#ffb500 246px,#ff0404 253px,#ff5f5f 257px)}.g11c{background:linear-gradient(#2b002b,#820082 12px,#ed00ed 38px,#d700d7 40px,#d700d7 44px,#ea00ff 46px,#3700ff 49px,#0016ff 50px,#00ceff 52px,#00ebff 53px,#00ffff 55px,#00ffcd 59px,#00ff71 63px,#01ff00 91px,#58ff00 120px,#d0ff00 181px,#fcff00 211px,#fff800 235px,#ffe500 241px,#ffc000 244px,#ff8a00 247px,#ff0101 252px,#ff7878 257px)}.g11d{background:linear-gradient(#da00da,#fc00ff 4px,#b500ff 17px,#6200ff 39px,#2200ff 40px,#2200ff 46px,#5900ff 47px,#1d00ff 48px,#002fff 49px,#0093ff 50px,#00dcff 51px,#00feff 52px,#00fffd 53px,#00ffd7 55px,#00ff0f 62px,#0fff00 63px,#9cff00 99px,#c3ff00 120px,#faff00 172px,#fff900 235px,#ffed00 241px,#ffce00 244px,#ff9c00 247px,#ff1600 252px,#ff0a0a 253px,#ff6464 257px)}.g11e{background:linear-gradient(#d000d0,#ff00ff 5px,#b200ff 20px,#6c00ff 39px,#4a00ff 40px,#4a00ff 46px,#7700ff 47px,#0000ff 49px,#00c0ff 51px,#00f5ff 52px,#00ffff 53px,#00ffec 55px,#00ff1f 63px,#03ff00 71px,#79ff00 100px,#a4ff00 121px,#f7ff00 183px,#fffb00 234px,#ffdc00 243px,#ff9e00 247px,#ff0707 253px,#ff6262 257px)}.g11f{background:linear-gradient(#360036,#360036 39px,#000000 40px,#000000 41px,#1d001d 42px,#5f005f 43px,#f400f4 46px,#ce00ff 47px,#1200ff 50px,#00adff 52px,#00d3ff 53px,#00ffff 57px,#00fff0 60px,#00ffc3 63px,#00ff41 100px,#00ff00 128px,#9cff00 191px,#eaff00 212px,#fffd00 235px,#ffea00 241px,#ffc600 244px,#ff9100 247px,#ff0900 252px,#ff7070 257px)}.g120{background:linear-gradient(#9a009a,#c200c2 4px,#fe00fe 15px,#a300ff 38px,#a300ff 46px,#9900ff 47px,#2200ff 49px,#0037ff 50px,#009aff 51px,#00e0ff 52px,#00ffff 54px,#00ffa8 59px,#00ff3d 63px,#01ff00 78px,#5fff00 101px,#c7ff00 156px,#f9ff00 196px,#fff900 234px,#ffe800 241px,#ffd300 243px,#ff9100 247px,#ff0800 252px,#ff7171 257px)}.g121{background:linear-gradient(#960096,#be00be 4px,#ff00ff 16px,#a700ff 39px,#7300ff 40px,#7300ff 46px,#6500ff 47px,#2a00ff 48px,#001cff 49px,#00d2ff 51px,#00fbff 52px,#00ffff 53px,#00ffde 55px,#01ff00 63px,#90ff00 99px,#bcff00 122px,#fbff00 179px,#fff900 234px,#ffec00 241px,#ffcc00 244px,#ff8200 248px,#ff1200 252px,#ff0d0d 253px,#ff6868 257px)}.g122{background:linear-gradient(#d300ff,#ab00ff 4px,#6e00ff 15px,#1200ff 39px,#0067ff 40px,#0067ff 46px,#4400ff 47px,#0800ff 48px,#00adff 50px,#00ebff 51px,#00ffff 52px,#00ffe9 54px,#04ff00 62px,#22ff00 63px,#9aff00 94px,#ceff00 120px,#fdff00 172px,#fffa00 235px,#fff100 241px,#ffc700 245px,#ff7600 249px,#ff0100 253px,#ff5a5a 257px)}.g123{background:linear-gradient(#ca00ca,#ff00ff 6px,#7300ff 39px,#3600ff 40px,#3600ff 46px,#5c00ff 47px,#2000ff 48px,#002aff 49px,#008fff 50px,#00daff 51px,#00fdff 52px,#00fffe 53px,#00ffe9 55px,#00ff18 63px,#01ff00 69px,#7eff00 100px,#a8ff00 121px,#f6ff00 180px,#fffd00 237px,#fff800 241px,#ffc800 246px,#ff0606 254px,#ff4444 257px)}.g124{background:linear-gradient(#000000,#000000 42px,#d100d1 46px,#f200ff 47px,#3500ff 50px,#001aff 51px,#0080ff 52px,#00afff 53px,#0077ff 54px,#00cfff 56px,#00ffff 61px,#00ff64 140px,#00ff00 178px,#2cff00 192px,#97ff00 206px,#d5ff00 217px,#f7ff00 227px,#fffc00 238px,#fff200 241px,#ffb700 246px,#ff0101 253px,#ff5d5d 257px)}.g125{background:linear-gradient(#0f000f,#100010 4px,#a900a9 38px,#a900a9 39px,#8b008b 40px,#8b008b 43px,#f300ff 46px,#0008ff 50px,#00c6ff 52px,#00e5ff 53px,#00ffff 56px,#00ffef 59px,#00ffac 63px,#00ff21 100px,#02ff00 114px,#e0ff00 206px,#fffc00 238px,#ffee00 242px,#ffc000 246px,#ff6700 250px,#ff0c00 253px,#ff1313 254px,#ff5050 257px)}.g126{background:linear-gradient(#000000,#000000 42px,#fd00fd 47px,#c600ff 48px,#0001ff 51px,#006aff 52px,#009cff 53px,#0052ff 54px,#00b5ff 56px,#00c9ff 57px,#00f3ff 60px,#00ffff 63px,#00ffec 84px,#00ff88 140px,#00ff00 191px,#88ff00 207px,#d6ff00 219px,#f5ff00 227px,#fff900 239px,#ffb200 246px,#ff0909 253px,#ff6363 257px)}.g127{background:linear-gradient(#f000f0,#ff00ff 1px,#a900ff 15px,#4d00ff 39px,#000cff 40px,#000cff 46px,#4500ff 47px,#0900ff 48px,#00abff 50px,#00eaff 51px,#00ffff 52px,#00fff1 54px,#00ff11 62px,#0dff00 63px,#96ff00 98px,#c2ff00 121px,#f8ff00 170px,#fffc00 237px,#fff100 242px,#ffc600 246px,#ff6e00 250px,#ff1500 253px,#ff0a0a 254px,#ff4848 257px)}.g128{background:linear-gradient(#720072,#b300b3 8px,#fc00ff 25px,#cb00ff 39px,#b500ff 40px,#b500ff 46px,#0c00ff 49px,#00b3ff 51px,#00eeff 52px,#00fffd 54px,#00ffad 58px,#00ff26 63px,#00ff00 72px,#71ff00 100px,#ceff00 152px,#fbff00 192px,#fffa00 234px,#ffeb00 241px,#ffca00 244px,#ff7f00 248px,#ff0f00 252px,#ff1111 253px,#ff6b6b 257px)}.g129{background:linear-gradient(#c900c9,#fe00fe 6px,#7400ff 39px,#4900ff 40px,#4900ff 46px,#6e00ff 47px,#3300ff 48px,#000eff 49px,#00c9ff 51px,#00f8ff 52px,#00ffff 53px,#00ffe5 55px,#00ff0e 63px,#03ff00 67px,#83ff00 99px,#acff00 119px,#f9ff00 181px,#fffa00 234px,#ffda00 243px,#ffb000 246px,#ff1400 252px,#ff0b0b 253px,#ff6666 257px)}.g12a{background:linear-gradient(#0011ff,#0062ff 6px,#00adff 17px,#00ffff 40px,#00ffff 46px,#6500ff 47px,#2900ff 48px,#001dff 49px,#00d2ff 51px,#00fbff 52px,#00ffff 53px,#00ff02 62px,#1cff00 63px,#a2ff00 98px,#caff00 120px,#fcff00 172px,#fff100 235px,#ffe100 241px,#ffc900 243px,#ff9a00 246px,#ff1600 251px,#ff0909 252px,#ff7f7f 257px)}.g12b{background:linear-gradient(#d600ff,#8a00ff 10px,#1500ff 39px,#0007ff 40px,#0007ff 46px,#8000ff 47px,#0900ff 49px,#00b7ff 51px,#00f0ff 52px,#00fdff 53px,#5900ff 54px,#0e00ff 56px,#0008ff 57px,#00acff 63px,#00f1ff 93px,#00fffd 124px,#00ffbe 138px,#00ff09 156px,#b2ff00 174px,#f8ff00 186px,#ffec00 241px,#ffaf00 246px,#ff1300 252px,#ff0d0d 253px,#ff6767 257px)}.g12c{background:linear-gradient(#3a003a,#690069 5px,#a400a4 16px,#fb00fb 39px,#e600e6 40px,#e600e6 45px,#ea00ff 46px,#3800ff 49px,#0016ff 50px,#00ceff 52px,#00ebff 53px,#00ffff 55px,#00ffd5 59px,#00ff7d 63px,#03ff00 95px,#48ff00 120px,#eaff00 200px,#fffd00 233px,#ffef00 240px,#ffd600 243px,#ff9500 247px,#ff0c00 252px,#ff1313 253px,#ff6d6d 257px)}.g12d{background:linear-gradient(#1a001a,#710071 12px,#dc00dc 38px,#dc00dc 39px,#a800a8 40px,#a800a8 44px,#f600f6 46px,#cc00ff 47px,#1000ff 50px,#00afff 52px,#00d5ff 53px,#00ccff 54px,#00fbff 56px,#00ffff 58px,#00ffcc 63px,#00ff50 100px,#00ff00 136px,#8cff00 190px,#eaff00 215px,#fffe00 236px,#fff100 241px,#ffc500 245px,#ff7200 249px,#ff0303 253px,#ff5e5e 257px)}.g12e{background:linear-gradient(#f300f3,#fc00ff 1px,#a100ff 16px,#4a00ff 39px,#0002ff 40px,#0002ff 46px,#4e00ff 47px,#1200ff 48px,#0040ff 49px,#00a0ff 50px,#00e4ff 51px,#00ffff 52px,#00ffeb 54px,#00ff01 62px,#1eff00 63px,#7dff00 87px,#a9ff00 100px,#c9ff00 119px,#fdff00 174px,#fff900 235px,#ffed00 241px,#ffc100 245px,#ff0909 253px,#ff6464 257px)}.g12f{background:linear-gradient(#c400c4,#ff00ff 7px,#7900ff 39px,#1b00ff 40px,#1b00ff 46px,#3b00ff 47px,#0001ff 48px,#00b6ff 50px,#00f0ff 51px,#00fffe 52px,#00fff0 54px,#00ff10 62px,#0fff00 63px,#9aff00 99px,#c2ff00 121px,#fcff00 177px,#fffc00 239px,#fff400 242px,#ffcd00 246px,#ff7900 250px,#ff0100 254px,#ff3c3c 257px)}.g130{background:linear-gradient(#190019,#650065 10px,#d300d3 36px,#da00da 39px,#b500b5 40px,#b500b5 44px,#f900ff 46px,#0100ff 50px,#00bfff 52px,#00e0ff 53px,#00ffff 56px,#00fff3 59px,#00ffb4 63px,#00ff2d 100px,#01ff00 119px,#e6ff00 210px,#fffd00 237px,#fff300 241px,#ffbb00 246px,#ff5f00 250px,#ff0400 253px,#ff5858 257px)}.g131{background:linear-gradient(#460046,#750075 5px,#ca00ca 22px,#fe00ff 36px,#ff00ff 45px,#dd00ff 46px,#2b00ff 49px,#002aff 50px,#008fff 51px,#00d9ff 52px,#00f2ff 53px,#00ffff 55px,#00ffcc 59px,#00ff6f 63px,#02ff00 91px,#4bff00 115px,#d6ff00 185px,#f8ff00 210px,#fffd00 236px,#fff300 241px,#ffbb00 246px,#ff5f00 250px,#ff0400 253px,#ff5858 257px)}.g132{background:linear-gradient(#b700ff,#8f00ff 4px,#5700ff 14px,#0100ff 35px,#0010ff 39px,#00c4ff 40px,#00c4ff 46px,#1500ff 47px,#003dff 48px,#00dbff 50px,#00fdff 51px,#00fff2 52px,#00ffda 53px,#00ff47 56px,#12ff00 59px,#84ff00 63px,#e9ff00 100px,#fffd00 160px,#ffdf00 192px,#ffed00 235px,#ffe100 241px,#ffcb00 243px,#ff9c00 246px,#ff0606 252px,#ff7d7d 257px)}.g133{background:linear-gradient(#510051,#980098 9px,#fd00fd 32px,#ec00ff 38px,#f300ff 46px,#0008ff 50px,#00c5ff 52px,#00e5ff 53px,#00dfff 54px,#00ffff 56px,#00ffe9 60px,#00ffb6 63px,#00ff30 100px,#00ff00 120px,#dfff00 209px,#fffd00 239px,#fff300 242px,#ffc900 246px,#ff0505 254px,#ff4343 257px)}.g134{background:linear-gradient(#340034,#8b008b 12px,#f600f6 38px,#f600f6 39px,#c800c8 40px,#cb00cb 45px,#fc00fc 46px,#0a00ff 50px,#00b6ff 52px,#00daff 53px,#00ffff 57px,#00ffeb 60px,#00ffb9 63px,#00ff35 100px,#01ff00 123px,#a7ff00 192px,#e6ff00 210px,#fffe00 235px,#ffee00 241px,#ffcc00 244px,#ff8200 248px,#ff1200 252px,#ff0d0d 253px,#ff6868 257px)}.g135{background:linear-gradient(#570057,#a900a9 11px,#ff00ff 31px,#e500ff 39px,#d400ff 40px,#d400ff 45px,#c300ff 46px,#1100ff 49px,#00aeff 51px,#00ecff 52px,#00fffd 55px,#00ffc2 59px,#00ff60 63px,#01ff00 87px,#37ff00 100px,#5aff00 115px,#dbff00 183px,#fffb00 241px,#ffbe00 247px,#ff7d00 250px,#ff0600 254px,#ff3838 257px)}.g136{background:linear-gradient(#7b007b,#aa00aa 5px,#ff00ff 22px,#c200ff 38px,#d600ff 40px,#d600ff 46px,#ae00ff 47px,#3700ff 49px,#0017ff 50px,#00cfff 52px,#00ebff 53px,#00e5ff 54px,#00ffff 56px,#00ffef 59px,#00ffab 63px,#00ff22 100px,#00ff00 114px,#d9ff00 205px,#fffd00 240px,#fff000 243px,#ffc000 247px,#ff7f00 250px,#ff0800 254px,#ff3636 257px)}.g137{background:linear-gradient(#0a000a,#000000 42px,#ff00ff 47px,#0004ff 51px,#006eff 52px,#009fff 53px,#0072ff 54px,#00cbff 56px,#00ffff 61px,#00ff6d 140px,#00ff00 181px,#22ff00 192px,#91ff00 205px,#dfff00 218px,#fbff00 227px,#fff600 238px,#ffe600 241px,#ff9e00 246px,#ff0505 252px,#ff7c7c 257px)}.g138{background:linear-gradient(#1f001f,#1f001f 39px,#000000 40px,#000000 42px,#0f000f 43px,#df00df 47px,#e300ff 48px,#1d00ff 51px,#003fff 52px,#0076ff 53px,#1f00ff 54px,#000aff 55px,#0044ff 56px,#0060ff 57px,#00e3ff 63px,#00ffff 89px,#00ffdf 143px,#00ffa7 176px,#00ff7e 192px,#01ff00 204px,#baff00 223px,#ebff00 231px,#fffe00 240px,#ffd000 246px,#ff7d00 250px,#ff0600 254px,#ff3838 257px)}.g139{background:linear-gradient(#e100ff,#b200ff 5px,#7700ff 16px,#2000ff 39px,#007aff 40px,#007aff 46px,#2900ff 47px,#001eff 48px,#00c9ff 50px,#00f8ff 51px,#00fffa 52px,#00ffe2 54px,#00ff96 56px,#00ff0a 61px,#15ff00 62px,#33ff00 63px,#92ff00 88px,#d3ff00 118px,#fdff00 167px,#fffb00 238px,#fff100 242px,#ffc700 246px,#ff0909 254px,#ff4646 257px)}.g13a{background:linear-gradient(#2c002c,#7e007e 11px,#ee00ee 38px,#dc00dc 44px,#e700ff 46px,#3400ff 49px,#001bff 50px,#00d1ff 52px,#00edff 53px,#00ffff 55px,#00ffd7 59px,#00ff81 63px,#02ff00 96px,#e3ff00 198px,#fffe00 234px,#fff000 241px,#ffc400 245px,#ff8900 248px,#ff0505 253px,#ff6060 257px)}.g13b{background:linear-gradient(#120012,#640064 11px,#d400d4 38px,#d400d4 39px,#a900a9 40px,#a900a9 44px,#ff00ff 46px,#0800ff 50px,#00b8ff 52px,#00dcff 53px,#00ffff 56px,#00fff2 59px,#00ffb2 63px,#00ff2b 100px,#00ff00 118px,#aeff00 192px,#e9ff00 210px,#fffc00 236px,#ffec00 241px,#ffbc00 245px,#ff7e00 248px,#ff0e00 252px,#ff1111 253px,#ff6b6b 257px)}.g13c{background:linear-gradient(#9700ff,#5600ff 8px,#0300ff 26px,#0042ff 39px,#00d9ff 40px,#00d9ff 46px,#1e00ff 47px,#002fff 48px,#00d4ff 50px,#00fcff 51px,#00fff6 52px,#00ffe1 53px,#00ff55 56px,#04ff00 59px,#78ff00 63px,#e2ff00 100px,#ffff00 147px,#ffe600 192px,#ffef00 235px,#ffe200 241px,#ffcc00 243px,#ff9e00 246px,#ff0505 252px,#ff7c7c 257px)}.g13d{background:linear-gradient(#630063,#aa00aa 9px,#ff00ff 28px,#da00ff 39px,#c200ff 40px,#bd00ff 46px,#0b00ff 49px,#00b5ff 51px,#00efff 52px,#00fffd 54px,#00ff97 59px,#00ff28 63px,#01ff00 73px,#6dff00 100px,#ccff00 153px,#faff00 192px,#fffb00 235px,#ffed00 241px,#ffcd00 244px,#ff8300 248px,#ff1300 252px,#ff0c0c 253px,#ff6767 257px)}.g13e{background:linear-gradient(#670067,#ae00ae 9px,#ff00ff 27px,#d500ff 38px,#d500ff 39px,#fd00fd 40px,#fe00fe 46px,#0800ff 50px,#00b8ff 52px,#00dbff 53px,#00ffff 57px,#00ffeb 60px,#00ffba 63px,#00ff37 100px,#01ff00 124px,#a3ff00 191px,#e9ff00 212px,#fffd00 236px,#fff000 241px,#ffc200 245px,#ff0909 253px,#ff6363 257px)}.g13f{background:linear-gradient(#210021,#210021 39px,#000000 40px,#000000 42px,#fc00fc 47px,#8b00ff 49px,#0000ff 51px,#006aff 52px,#009cff 53px,#0059ff 54px,#00baff 56px,#00ebff 59px,#00ffff 62px,#00ffea 84px,#00ff8b 137px,#00ff00 190px,#a8ff00 211px,#e9ff00 223px,#ffee00 241px,#ffad00 246px,#ff0f00 252px,#ff1010 253px,#ff6a6a 257px)}.g140{background:linear-gradient(#db00db,#fb00ff 4px,#a300ff 21px,#6200ff 39px,#3f00ff 40px,#3f00ff 46px,#7600ff 47px,#0001ff 49px,#00c1ff 51px,#00f5ff 52px,#00ffff 53px,#00ffeb 55px,#00ff1c 63px,#00ff00 70px,#74ff00 99px,#a9ff00 126px,#f6ff00 183px,#fffb00 235px,#ffef00 241px,#ffd000 244px,#ff9e00 247px,#ff0808 253px,#ff6363 257px)}.g141{background:linear-gradient(#540054,#a600a6 11px,#fc00fc 31px,#e800ff 38px,#fa00fa 40px,#fa00fa 45px,#f000ff 46px,#000cff 50px,#00c8ff 52px,#00e7ff 53px,#00fffe 56px,#00ffe7 59px,#00ff9b 63px,#00ff00 106px,#ecff00 209px,#fffc00 237px,#fff200 241px,#ffb800 246px,#ff0101 253px,#ff5c5c 257px)}.g142{background:linear-gradient(#ce00ff,#8200ff 10px,#0d00ff 38px,#2000ff 40px,#2000ff 46px,#ac00ff 47px,#3500ff 49px,#001aff 50px,#00d0ff 52px,#00ecff 53px,#9500ff 54px,#4b00ff 56px,#1100ff 59px,#0003ff 60px,#005cff 63px,#008cff 76px,#00d0ff 99px,#00fffd 133px,#00ffbc 147px,#00ff05 165px,#afff00 182px,#f6ff00 194px,#fff700 241px,#ffc600 246px,#ff6d00 250px,#ff1400 253px,#ff0b0b 254px,#ff4949 257px)}.g143{background:linear-gradient(#2300ff,#0008ff 4px,#007fff 19px,#00d3ff 39px,#00ffe6 40px,#00ffe6 46px,#001aff 47px,#00bdff 49px,#00f3ff 50px,#00fffd 51px,#00ffb6 53px,#00ffab 54px,#00ff46 56px,#00ff0b 58px,#13ff00 59px,#86ff00 63px,#e9ff00 100px,#fffc00 163px,#ffe000 192px,#fff700 239px,#ffef00 242px,#ffc100 246px,#ff6800 250px,#ff0d00 253px,#ff1212 254px,#ff4f4f 257px)}.g144{background:linear-gradient(#f100f1,#fe00ff 1px,#ad00ff 14px,#4c00ff 39px,#0a00ff 40px,#0a00ff 46px,#5700ff 47px,#1c00ff 48px,#0031ff 49px,#0095ff 50px,#00ddff 51px,#00feff 52px,#00fffd 53px,#00ffe0 55px,#00ff04 63px,#00ff00 64px,#8cff00 100px,#b7ff00 124px,#faff00 181px,#fffd00 235px,#fff500 241px,#ffce00 245px,#ff7f00 249px,#ff0b00 253px,#ff1414 254px,#ff5151 257px)}.g145{background:linear-gradient(#190019,#190019 39px,#000000 40px,#000000 42px,#180018 43px,#e800e8 47px,#da00ff 48px,#1400ff 51px,#004dff 52px,#0082ff 53px,#000eff 54px,#007dff 56px,#00e4ff 61px,#00f8ff 63px,#00feff 71px,#00fffa 90px,#00ffba 144px,#00ff47 192px,#00ff09 198px,#c9ff00 221px,#f1ff00 229px,#fffc00 239px,#ffb900 246px,#ff5c00 250px,#ff0100 253px,#ff5a5a 257px)}.g146{background:linear-gradient(#0c000c,#030003 42px,#460046 43px,#db00db 46px,#e800ff 47px,#2b00ff 50px,#0029ff 51px,#008eff 52px,#00baff 53px,#0090ff 54px,#00deff 56px,#00ffff 60px,#00ff00 170px,#41ff00 192px,#96ff00 204px,#ddff00 218px,#fffe00 237px,#fff300 241px,#ffb800 246px,#ff5b00 250px,#ff0000 253px,#ff5c5c 257px)}.g147{background:linear-gradient(#e500ff,#b600ff 5px,#8000ff 15px,#2400ff 39px,#0035ff 40px,#0035ff 46px,#5300ff 47px,#1800ff 48px,#0038ff 49px,#009aff 50px,#00e0ff 51px,#00feff 52px,#00fffc 53px,#00ffdb 55px,#06ff00 63px,#91ff00 99px,#bbff00 122px,#fcff00 181px,#fffc00 235px,#fff300 241px,#ffcc00 245px,#ff7b00 249px,#ff0700 253px,#ff5555 257px)}.g148{background:linear-gradient(#180018,#180018 39px,#000000 41px,#140014 42px,#570057 43px,#ec00ec 46px,#d600ff 47px,#1a00ff 50px,#0043ff 51px,#00a3ff 52px,#00ccff 53px,#00a3ff 54px,#00e9ff 56px,#00ffff 60px,#00ffea 63px,#00ff88 100px,#00ff00 161px,#59ff00 192px,#dcff00 218px,#ffff00 238px,#fffa00 241px,#ffca00 246px,#ff7400 250px,#ff0505 254px,#ff4242 257px)}.g149{background:linear-gradient(#780078,#bf00bf 9px,#fe00ff 23px,#c400ff 39px,#9500ff 40px,#9500ff 46px,#2e00ff 48px,#0015ff 49px,#00cdff 51px,#00faff 52px,#00ffff 53px,#00ffe6 55px,#00ff11 63px,#03ff00 68px,#7dff00 99px,#a7ff00 120px,#f7ff00 181px,#fffc00 235px,#fff100 241px,#ffd400 244px,#ff8c00 248px,#ff0202 253px,#ff5d5d 257px)}.g14a{background:linear-gradient(#ce00ce,#fb00ff 6px,#6f00ff 39px,#3400ff 40px,#3400ff 46px,#5e00ff 47px,#2200ff 48px,#0027ff 49px,#008cff 50px,#00d8ff 51px,#00fdff 52px,#00fffe 53px,#00ffe9 55px,#00ff17 63px,#01ff00 69px,#7bff00 100px,#a4ff00 121px,#f7ff00 183px,#fffe00 236px,#fff700 241px,#ffd400 245px,#ff9e00 248px,#ff1500 253px,#ff0a0a 254px,#ff4848 257px)}.g14b{background:linear-gradient(#d200d2,#fe00ff 5px,#6b00ff 38px,#7900ff 46px,#a700ff 47px,#3000ff 49px,#0021ff 50px,#0087ff 51px,#00d4ff 52px,#00efff 53px,#00ffff 55px,#00ffd8 59px,#00ff83 63px,#02ff00 97px,#e7ff00 202px,#fffd00 237px,#fff500 241px,#ffbe00 246px,#ff6300 250px,#ff0800 253px,#ff5454 257px)}.g14c{background:linear-gradient(#000000,#000000 42px,#0c000c 43px,#dd00dd 47px,#e600ff 48px,#2000ff 51px,#003bff 52px,#0072ff 53px,#1200ff 54px,#001fff 55px,#0057ff 56px,#00ceff 61px,#00ecff 63px,#00f3ff 68px,#00fff3 112px,#00ffbc 159px,#00ff6f 192px,#00ff02 202px,#87ff00 215px,#cfff00 224px,#f9ff00 233px,#fff700 241px,#ffbe00 246px,#ff6300 250px,#ff0800 253px,#ff5454 257px)}.g14d{background:linear-gradient(#c300ff,#9b00ff 4px,#5e00ff 15px,#0200ff 39px,#0073ff 40px,#0073ff 46px,#4b00ff 47px,#0f00ff 48px,#00e6ff 51px,#00ffff 52px,#00ffe6 54px,#00ff9e 56px,#0aff00 62px,#28ff00 63px,#76ff00 83px,#aeff00 100px,#c8ff00 116px,#fdff00 172px,#fff800 235px,#ffec00 241px,#ffcc00 244px,#ff9800 247px,#ff0f00 252px,#ff1010 253px,#ff6a6a 257px)}.g14e{background:linear-gradient(#560056,#9d009d 9px,#fe00fe 31px,#e500ff 45px,#d300ff 46px,#2100ff 49px,#0039ff 50px,#009bff 51px,#00e1ff 52px,#00ffff 54px,#00ffc8 58px,#00ff4d 63px,#03ff00 83px,#48ff00 100px,#cdff00 169px,#f6ff00 200px,#fffd00 235px,#fff000 241px,#ffd200 244px,#ffa000 247px,#ff0606 253px,#ff6161 257px)}.g14f{background:linear-gradient(#0f000f,#0f000f 5px,#9f009f 38px,#9f009f 39px,#710071 40px,#710071 43px,#fb00fb 46px,#0b00ff 50px,#00b4ff 52px,#00d9ff 53px,#00cfff 54px,#00ffff 57px,#00fff3 60px,#00ffc9 63px,#00ff50 100px,#00ff00 137px,#8dff00 191px,#e4ff00 214px,#fffe00 237px,#fff500 241px,#ffbd00 246px,#ff6200 250px,#ff0700 253px,#ff5555 257px)}.g150{background:linear-gradient(#0011ff,#0062ff 6px,#00a2ff 15px,#00fdff 40px,#00fdff 46px,#7800ff 47px,#0100ff 49px,#00c0ff 51px,#00f4ff 52px,#00fffc 54px,#00ff8f 59px,#00ff1f 63px,#02ff00 71px,#76ff00 101px,#cbff00 150px,#faff00 190px,#fffc00 234px,#ffef00 241px,#ffd000 244px,#ff9e00 247px,#ff0808 253px,#ff6363 257px)}.g151{background:linear-gradient(#d500d5,#fb00ff 5px,#b200ff 19px,#6800ff 39px,#3000ff 40px,#3000ff 46px,#6100ff 47px,#2600ff 48px,#0022ff 49px,#0088ff 50px,#00d5ff 51px,#00fcff 52px,#00fffe 53px,#00ffef 55px,#00ff28 63px,#01ff00 73px,#6bff00 100px,#ccff00 154px,#f9ff00 192px,#fffc00 240px,#ffce00 246px,#ff7a00 250px,#ff0200 254px,#ff3c3c 257px)}.g152{background:linear-gradient(#6f006f,#b000b0 8px,#ff00ff 25px,#ce00ff 38px,#e300ff 40px,#e300ff 46px,#3700ff 49px,#0016ff 50px,#00ceff 52px,#00ebff 53px,#00ffff 55px,#00ffda 59px,#00ff86 63px,#02ff00 98px,#ecff00 205px,#fffe00 235px,#fff000 241px,#ffd000 244px,#ff9e00 247px,#ff0909 253px,#ff6363 257px)}.g153{background:linear-gradient(#0f000f,#6c006c 15px,#c800c8 38px,#c800c8 39px,#9c009c 40px,#9c009c 44px,#fe00fe 46px,#0800ff 50px,#00b8ff 52px,#00dbff 53px,#00c8ff 54px,#00f9ff 56px,#00ffff 58px,#00ffd0 63px,#00ff5b 100px,#02ff00 143px,#86ff00 192px,#e4ff00 217px,#fffe00 239px,#ffcb00 246px,#ff7500 250px,#ff0303 254px,#ff4141 257px)}.g154{background:linear-gradient(#9d00ff,#6100ff 7px,#0100ff 28px,#0039ff 39px,#00c1ff 40px,#00c1ff 46px,#3200ff 47px,#000fff 48px,#00c0ff 50px,#00f4ff 51px,#00fffd 52px,#00ffe1 54px,#00ff95 56px,#00ff08 61px,#16ff00 62px,#34ff00 63px,#8eff00 87px,#d0ff00 117px,#fdff00 168px,#fffc00 235px,#fff400 241px,#ffcc00 245px,#ff7c00 249px,#ff0700 253px,#ff5555 257px)}.g155{background:linear-gradient(#700070,#ac00ac 7px,#fd00ff 25px,#cc00ff 39px,#a400ff 40px,#a400ff 46px,#3500ff 48px,#000aff 49px,#00c7ff 51px,#00f7ff 52px,#00ffff 53px,#00ffee 55px,#00ff24 63px,#00ff00 72px,#6fff00 100px,#d1ff00 156px,#faff00 192px,#fffe00 234px,#fff400 241px,#ffcc00 245px,#ff7b00 249px,#ff0700 253px,#ff5555 257px)}.g156{background:linear-gradient(#0b000b,#000000 42px,#fa00ff 47px,#000cff 51px,#0074ff 52px,#00a5ff 53px,#005fff 54px,#00beff 56px,#00edff 59px,#00ffff 62px,#00ff86 139px,#01ff00 190px,#d2ff00 219px,#f7ff00 229px,#fffb00 239px,#ffb900 246px,#ff0000 253px,#ff5b5b 257px)}.g157{background:linear-gradient(#390039,#6f006f 6px,#9a009a 14px,#fb00fb 39px,#f000f0 45px,#e000ff 46px,#2d00ff 49px,#0026ff 50px,#008bff 51px,#00d7ff 52px,#00f1ff 53px,#00ffff 55px,#00ffcd 59px,#00ff72 63px,#00ff00 92px,#45ff00 116px,#d1ff00 185px,#f9ff00 213px,#fffe00 235px,#fff200 241px,#ffc700 245px,#ff7400 249px,#ff0101 253px,#ff5d5d 257px)}.g158{background:linear-gradient(#7200ff,#3d00ff 6px,#0000ff 18px,#0077ff 39px,#00fcff 40px,#00fcff 46px,#0000ff 47px,#00abff 49px,#00eaff 50px,#00ffff 51px,#00ffc7 53px,#00ff26 56px,#16ff00 58px,#a0ff00 63px,#f1ff00 98px,#fffc00 152px,#ffd100 192px,#ffec00 235px,#ffd700 242px,#ff9900 246px,#ff1400 251px,#ff0b0b 252px,#ff8282 257px)}.g159{background:linear-gradient(#110011,#110011 39px,#000000 41px,#1a001a 42px,#5d005d 43px,#f200f2 46px,#d100ff 47px,#1400ff 50px,#00aaff 52px,#00d1ff 53px,#00c6ff 54px,#00f9ff 56px,#00ffff 58px,#00ffd2 63px,#00ff5e 100px,#01ff00 144px,#83ff00 192px,#e2ff00 214px,#fffd00 237px,#fff200 241px,#ffb500 246px,#ff0606 253px,#ff6161 257px)}.g15a{background:linear-gradient(#790079,#c000c0 9px,#fd00ff 23px,#c400ff 39px,#ab00ff 40px,#ab00ff 46px,#0900ff 49px,#00b7ff 51px,#00f0ff 52px,#00ffff 54px,#00ffb0 59px,#00ff48 63px,#00ff00 81px,#4cff00 100px,#ccff00 167px,#f2ff00 195px,#fffd00 238px,#fff200 242px,#ffc800 246px,#ff0909 254px,#ff4646 257px)}.g15b{background:linear-gradient(#be00be,#ff00ff 8px,#7e00ff 39px,#2700ff 40px,#2700ff 46px,#4200ff 47px,#0600ff 48px,#00afff 50px,#00ecff 51px,#00ffff 52px,#00ffe0 54px,#00ff94 56px,#00ff07 61px,#17ff00 62px,#35ff00 63px,#8bff00 86px,#b4ff00 99px,#d0ff00 117px,#fdff00 168px,#fff800 235px,#ffec00 241px,#ffcc00 244px,#ff9800 247px,#ff0f00 252px,#ff1010 253px,#ff6a6a 257px)}.g15c{background:linear-gradient(#0f000f,#b700b7 37px,#ba00ba 39px,#980098 40px,#980098 43px,#a400a4 44px,#f700ff 46px,#0002ff 50px,#00c2ff 52px,#00e2ff 53px,#00ffff 56px,#00ffee 59px,#00ffab 63px,#00ff25 100px,#00ff00 116px,#e7ff00 210px,#fffd00 237px,#fff300 241px,#ffb800 246px,#ff0101 253px,#ff5c5c 257px)}.g15d{background:linear-gradient(#000000,#000000 42px,#fb00fb 47px,#c700ff 48px,#0100ff 51px,#0068ff 52px,#009aff 53px,#0043ff 54px,#00a9ff 56px,#00beff 57px,#00edff 60px,#00ffff 63px,#00fff3 84px,#00ff9f 139px,#00ff4b 175px,#00ff04 194px,#c8ff00 219px,#f4ff00 229px,#fffc00 239px,#ffbc00 246px,#ff5f00 250px,#ff0400 253px,#ff5858 257px)}.g15e{background:linear-gradient(#fa00ff,#c400ff 6px,#9900ff 14px,#3800ff 39px,#0e00ff 40px,#0e00ff 46px,#6f00ff 47px,#3400ff 48px,#000cff 49px,#00c8ff 51px,#00f8ff 52px,#00fffe 54px,#00ffa3 59px,#00ff37 63px,#00ff03 76px,#5cff00 100px,#ceff00 162px,#f6ff00 194px,#fffa00 241px,#ffba00 247px,#ff0202 254px,#ff4040 257px)}.g15f{background:linear-gradient(#ed00ed,#f800ff 2px,#a700ff 16px,#5000ff 39px,#1300ff 40px,#1300ff 46px,#5d00ff 47px,#2100ff 48px,#0029ff 49px,#008eff 50px,#00d9ff 51px,#00fdff 52px,#00fffe 53px,#00ff06 62px,#19ff00 63px,#9bff00 98px,#c6ff00 123px,#f9ff00 171px,#fff700 235px,#ffe900 241px,#ffc600 244px,#ff9000 247px,#ff0600 252px,#ff7373 257px)}.g160{background:linear-gradient(#2f002f,#5e005e 5px,#af00af 21px,#f000f0 38px,#d800d8 40px,#d800d8 44px,#ed00ff 46px,#3a00ff 49px,#0011ff 50px,#00cbff 52px,#00e9ff 53px,#00fffc 56px,#00ffdf 59px,#00ff8d 63px,#00ff00 100px,#ecff00 207px,#fffe00 235px,#fff000 241px,#ffd000 244px,#ff9d00 247px,#ff0909 253px,#ff6464 257px)}.g161{background:linear-gradient(#1f001f,#1f001f 39px,#000000 40px,#000000 42px,#d300d3 46px,#f000ff 47px,#3300ff 50px,#001cff 51px,#0083ff 52px,#00b1ff 53px,#00a5ff 54px,#00eaff 56px,#00ffff 59px,#00ff89 100px,#01ff00 162px,#57ff00 192px,#b2ff00 205px,#e6ff00 216px,#fffc00 235px,#ffe000 241px,#ffb500 244px,#ff7a00 247px,#ff0a00 251px,#ff1515 252px,#ff8a8a 257px)}.g162{background:linear-gradient(#a100a1,#d000d0 5px,#fd00ff 14px,#9b00ff 39px,#7a00ff 40px,#7700ff 47px,#0000ff 49px,#00c0ff 51px,#00f4ff 52px,#00ffff 53px,#00fff0 55px,#00ffb1 58px,#00ff2c 63px,#00ff00 74px,#6aff00 102px,#d1ff00 160px,#f8ff00 193px,#fffe00 235px,#fff400 241px,#ffcc00 245px,#ff7b00 249px,#ff0600 253px,#ff5555 257px)}.g163{background:linear-gradient(#5a005a,#a100a1 9px,#fe00fe 30px,#e300ff 38px,#fa00ff 40px,#fa00ff 45px,#ec00ff 46px,#3900ff 49px,#0013ff 50px,#00cdff 52px,#00eaff 53px,#00fffe 56px,#00ffe8 59px,#00ff9f 63px,#00ff00 110px,#e8ff00 210px,#fffc00 239px,#fff100 242px,#ffc400 246px,#ff6a00 250px,#ff1000 253px,#ff0f0f 254px,#ff4c4c 257px)}.g164{background:linear-gradient(#b500b5,#fe00ff 10px,#8800ff 39px,#6900ff 40px,#6900ff 46px,#7a00ff 47px,#0300ff 49px,#00beff 51px,#00f3ff 52px,#00fff9 54px,#00ff13 63px,#01ff00 68px,#7cff00 100px,#d0ff00 150px,#fbff00 189px,#fffa00 234px,#ffeb00 241px,#ffd600 243px,#ff9300 247px,#ff0900 252px,#ff1616 253px,#ff7070 257px)}.g165{background:linear-gradient(#060006,#000000 42px,#d500d5 46px,#ed00ff 47px,#3100ff 50px,#0020ff 51px,#0086ff 52px,#00b4ff 53px,#0084ff 54px,#00d7ff 56px,#00ffff 61px,#00ff61 140px,#00ff00 177px,#2fff00 192px,#d3ff00 217px,#f3ff00 226px,#fffa00 239px,#fff300 241px,#ffb700 246px,#ff0303 253px,#ff5f5f 257px)}.g166{background:linear-gradient(#ce00ce,#fa00ff 6px,#6e00ff 39px,#3400ff 40px,#3400ff 46px,#5f00ff 47px,#2300ff 48px,#0026ff 49px,#008bff 50px,#00d7ff 51px,#00fdff 52px,#00fffe 53px,#00ffde 55px,#01ff00 63px,#8dff00 100px,#b8ff00 125px,#faff00 181px,#fffc00 235px,#fff100 241px,#ffd300 244px,#ffa100 247px,#ff0505 253px,#ff6060 257px)}.g167{background:linear-gradient(#1e001e,#1e001e 39px,#000000 40px,#000000 42px,#f800ff 47px,#0010ff 51px,#0078ff 52px,#00a8ff 53px,#00a5ff 54px,#00eaff 56px,#00ffff 59px,#00ff8a 100px,#02ff00 163px,#55ff00 192px,#b5ff00 205px,#e6ff00 215px,#fff800 235px,#ffd500 241px,#ff7f00 246px,#ff1300 250px,#ff0c0c 251px,#ff9c9c 257px)}.g168{background:linear-gradient(#5e005e,#a500a5 9px,#fe00fe 29px,#de00ff 39px,#c700ff 40px,#bd00ff 46px,#0b00ff 49px,#00b5ff 51px,#00efff 52px,#00fffe 54px,#00ffa3 59px,#00ff37 63px,#00ff00 77px,#5bff00 100px,#cdff00 162px,#f5ff00 193px,#fffe00 235px,#fff300 241px,#ffca00 245px,#ff7800 249px,#ff0200 253px,#ff5959 257px)}.g169{background:linear-gradient(#840084,#b300b3 5px,#ff00ff 20px,#b900ff 39px,#9300ff 40px,#9300ff 46px,#7400ff 47px,#3800ff 48px,#0005ff 49px,#00c4ff 51px,#00f6ff 52px,#00ffff 53px,#00fff3 55px,#00ffa0 59px,#00ff34 63px,#00ff00 76px,#5eff00 100px,#ccff00 160px,#f7ff00 195px,#fffb00 239px,#fff200 242px,#ffc600 246px,#ff6d00 250px,#ff1300 253px,#ff0c0c 254px,#ff4a4a 257px)}.g16a{background:linear-gradient(#500050,#970097 9px,#fc00fc 32px,#ec00ff 38px,#f800ff 45px,#e100ff 46px,#2e00ff 49px,#0025ff 50px,#008aff 51px,#00d6ff 52px,#00f0ff 53px,#00fffe 56px,#00ffe7 59px,#00ff9c 63px,#00ff01 108px,#ddff00 206px,#fffd00 241px,#ffc500 247px,#ff8400 250px,#ff0e00 254px,#ff1111 255px,#ff3030 257px)}.g16b{background:linear-gradient(#ba00ba,#fd00ff 9px,#8200ff 39px,#5b00ff 40px,#5b00ff 46px,#7200ff 47px,#3700ff 48px,#0008ff 49px,#00c5ff 51px,#00f7ff 52px,#00ffff 53px,#00fff3 55px,#00ffa0 59px,#00ff34 63px,#00ff00 76px,#5eff00 100px,#cfff00 162px,#f5ff00 192px,#fffd00 238px,#fff200 242px,#ffc700 246px,#ff6e00 250px,#ff1500 253px,#ff0a0a 254px,#ff4848 257px)}.g16c{background:linear-gradient(#f300ff,#c400ff 5px,#8900ff 16px,#3200ff 39px,#002bff 40px,#002bff 46px,#4c00ff 47px,#1100ff 48px,#00e5ff 51px,#00ffff 52px,#00fff0 54px,#00ff0e 62px,#10ff00 63px,#96ff00 99px,#bcff00 121px,#fcff00 180px,#fffd00 235px,#fff400 241px,#ffcc00 245px,#ff7b00 249px,#ff0600 253px,#ff5555 257px)}.g16d{background:linear-gradient(#ee00ee,#fd00fd 1px,#ab00ff 15px,#4f00ff 39px,#2400ff 40px,#2400ff 46px,#6e00ff 47px,#3200ff 48px,#000fff 49px,#00caff 51px,#00f8ff 52px,#00ffff 53px,#00ffe2 55px,#00ff08 63px,#00ff00 65px,#85ff00 100px,#a9ff00 120px,#f7ff00 180px,#fffb00 234px,#ffed00 241px,#ffcc00 244px,#ff9800 247px,#ff0e00 252px,#ff1111 253px,#ff6b6b 257px)}.g16e{background:linear-gradient(#0f000f,#530053 9px,#ca00ca 37px,#cd00cd 39px,#9f009f 40px,#9f009f 44px,#fb00fb 46px,#0b00ff 50px,#00b5ff 52px,#00d9ff 53px,#00d2ff 54px,#00eeff 55px,#00ffff 57px,#00fff1 60px,#00ffc6 63px,#00ff4d 100px,#01ff00 137px,#90ff00 192px,#e1ff00 213px,#fffe00 237px,#fff400 241px,#ffbb00 246px,#ff5e00 250px,#ff0200 253px,#ff5959 257px)}.g16f{background:linear-gradient(#290029,#7b007b 11px,#eb00eb 38px,#eb00eb 39px,#770077 40px,#770077 44px,#840084 45px,#f100f1 47px,#d200ff 48px,#0b00ff 51px,#0059ff 52px,#008dff 53px,#ee00ee 54px,#eb00ff 55px,#c600ff 56px,#3f00ff 63px,#0000ff 88px,#0030ff 100px,#005bff 120px,#00caff 133px,#00ffff 147px,#00fff3 155px,#00ffc8 163px,#03ff00 183px,#c0ff00 200px,#efff00 220px,#fffb00 241px,#ffbd00 247px,#ff7a00 250px,#ff0200 254px,#ff3c3c 257px)}.g170{background:linear-gradient(#830083,#c400c4 8px,#fc00ff 21px,#ba00ff 39px,#6000ff 40px,#6000ff 46px,#3f00ff 47px,#0400ff 48px,#00b1ff 50px,#00edff 51px,#00ffff 52px,#00fff5 53px,#00ff7e 56px,#00ff0c 60px,#12ff00 61px,#4eff00 63px,#b9ff00 95px,#d6ff00 112px,#fdff00 160px,#fff300 235px,#ffe300 241px,#ffcd00 243px,#ff9d00 246px,#ff0707 252px,#ff7e7e 257px)}.g171{background:linear-gradient(#000000,#000000 41px,#190019 42px,#5c005c 43px,#f100f1 46px,#d200ff 47px,#1500ff 50px,#00a9ff 52px,#00d0ff 53px,#00ffff 57px,#00fff2 60px,#00ffc8 63px,#00ff53 100px,#00ff00 140px,#8bff00 192px,#e7ff00 214px,#fff800 238px,#ffec00 241px,#ffa700 246px,#ff0500 252px,#ff7373 257px)}.g172{background:linear-gradient(#000000,#000000 42px,#430043 43px,#d800d8 46px,#ea00ff 47px,#2e00ff 50px,#0025ff 51px,#008aff 52px,#00b7ff 53px,#0091ff 54px,#00dfff 56px,#00ffff 60px,#00ff59 141px,#00ff00 175px,#35ff00 192px,#d4ff00 217px,#fffe00 237px,#fff200 241px,#ffc400 245px,#ff8700 248px,#ff1500 252px,#ff0a0a 253px,#ff6464 257px)}.g173{background:linear-gradient(#530053,#9f009f 10px,#fe00fe 32px,#ea00ff 39px,#ac00ff 40px,#ac00ff 45px,#9700ff 46px,#2000ff 48px,#002bff 49px,#008fff 50px,#00daff 51px,#00fdff 52px,#00fffd 53px,#00ffe5 55px,#00ff0f 63px,#01ff00 67px,#79ff00 100px,#d2ff00 154px,#faff00 190px,#ffff00 235px,#fff800 241px,#ffd300 245px,#ff8300 249px,#ff0f00 253px,#ff1010 254px,#ff4d4d 257px)}.g174{background:linear-gradient(#000000,#060006 41px,#8c008c 43px,#ef00ef 45px,#de00ff 46px,#2b00ff 49px,#0029ff 50px,#008eff 51px,#00d9ff 52px,#00f2ff 53px,#00fffc 56px,#00ffde 59px,#00ff8c 63px,#00ff00 105px,#deff00 206px,#fffe00 240px,#ffd100 246px,#ff7b00 250px,#ff0300 254px,#ff3a3a 257px)}.g175{background:linear-gradient(#210021,#210021 39px,#000000 40px,#000000 41px,#7d007d 43px,#e000e0 45px,#ec00ff 46px,#3a00ff 49px,#0013ff 50px,#00ccff 52px,#00eaff 53px,#00fffc 56px,#00ffdf 59px,#00ff8e 63px,#01ff00 108px,#e7ff00 209px,#fffc00 238px,#fff400 241px,#ffb800 246px,#ff0606 253px,#ff6161 257px)}.g176{background:linear-gradient(#0f000f,#750075 21px,#b600b6 39px,#d200d2 40px,#d200d2 43px,#eb00ff 45px,#0600ff 49px,#00baff 51px,#00f1ff 52px,#00ffff 54px,#00ffbe 58px,#00ff40 63px,#01ff00 81px,#45ff00 100px,#daff00 181px,#fffd00 239px,#fff300 242px,#ffc700 246px,#ff1000 253px,#ff0f0f 254px,#ff4c4c 257px)}.g177{background:linear-gradient(#0f000f,#0f000f 3px,#580058 16px,#af00af 39px,#c400c4 40px,#c400c4 43px,#f100ff 45px,#0d00ff 49px,#00b2ff 51px,#00eeff 52px,#00fffb 54px,#00ff8d 59px,#00ff1d 63px,#03ff00 72px,#64ff00 100px,#ceff00 162px,#f4ff00 191px,#fffc00 235px,#ffed00 241px,#ffc900 244px,#ff9100 247px,#ff0200 252px,#ff7676 257px)}.g178{background:linear-gradient(#6f006f,#b600b6 9px,#fe00ff 25px,#cd00ff 39px,#b400ff 40px,#b400ff 46px,#0800ff 49px,#00b8ff 51px,#00f0ff 52px,#00fffd 54px,#00ff98 59px,#00ff2b 63px,#02ff00 76px,#55ff00 100px,#d2ff00 171px,#f4ff00 198px,#ffff00 235px,#fff400 241px,#ffd600 244px,#ffa200 247px,#ff0808 253px,#ff6363 257px)}.g179{background:linear-gradient(#510051,#980098 9px,#fe00ff 33px,#eb00ff 39px,#ca00ff 40px,#ca00ff 45px,#b300ff 46px,#0100ff 49px,#00c0ff 51px,#00f4ff 52px,#00fffc 55px,#00ffbe 59px,#00ff5d 63px,#01ff00 91px,#d3ff00 190px,#ffff00 241px,#ffcd00 247px,#ff0808 255px,#ff2727 257px)}.g17a{background:linear-gradient(#e700e7,#fe00ff 2px,#a800ff 17px,#5500ff 39px,#0051ff 40px,#0051ff 46px,#0f00ff 47px,#00dfff 50px,#00feff 51px,#00fff0 52px,#00ffd5 53px,#00ffd5 54px,#00ff82 56px,#0eff00 61px,#48ff00 63px,#b5ff00 101px,#faff00 168px,#fffe00 240px,#ffd300 246px,#ff7a00 250px,#ff0200 254px,#ff3c3c 257px)}.g17b{background:linear-gradient(#220022,#7e007e 13px,#e400e4 39px,#f900f9 40px,#f900f9 44px,#f100ff 45px,#0c00ff 49px,#00b3ff 51px,#00eeff 52px,#00fffd 54px,#00ffac 58px,#00ff27 63px,#01ff00 75px,#53ff00 100px,#dbff00 179px,#ffff00 234px,#fff300 241px,#ffd200 244px,#ff9b00 247px,#ff0d00 252px,#ff1212 253px,#ff6c6c 257px)}.g17c{background:linear-gradient(#050005,#000000 41px,#0f000f 42px,#520052 43px,#e700e7 46px,#dc00ff 47px,#1f00ff 50px,#003cff 51px,#009dff 52px,#00c7ff 53px,#00b4ff 54px,#00f1ff 56px,#00ffff 59px,#00ffe1 63px,#00ff52 140px,#00ff00 171px,#3fff00 192px,#d9ff00 220px,#fffe00 238px,#fff600 241px,#ffb800 246px,#ff1400 252px,#ff0b0b 253px,#ff6565 257px)}.g17d{background:linear-gradient(#0f000f,#b300b3 39px,#c700c7 40px,#c700c7 43px,#f200ff 45px,#0e00ff 49px,#00b1ff 51px,#00edff 52px,#00fffe 54px,#00ffa1 59px,#00ff37 63px,#02ff00 81px,#3fff00 100px,#d9ff00 185px,#ffff00 236px,#fff700 241px,#ffcc00 245px,#ff8e00 248px,#ff0505 253px,#ff6060 257px)}.g17e{background:linear-gradient(#0f000f,#620062 14px,#c300c3 39px,#da00da 40px,#dd00dd 44px,#ef00ff 45px,#0b00ff 49px,#00b4ff 51px,#00efff 52px,#00fff8 54px,#00ff11 63px,#02ff00 69px,#62ff00 100px,#ceff00 166px,#f6ff00 198px,#fffc00 236px,#ffed00 241px,#ffc700 244px,#ff8b00 247px,#ff1700 251px,#ff0808 252px,#ff7f7f 257px)}.g17f{background:linear-gradient(#1e001e,#1e001e 39px,#050005 40px,#050005 41px,#8b008b 43px,#ee00ee 45px,#de00ff 46px,#2c00ff 49px,#0028ff 50px,#008dff 51px,#00d8ff 52px,#00fffc 55px,#00ffbe 59px,#00ff5f 63px,#03ff00 95px,#e2ff00 204px,#ffff00 236px,#fff400 241px,#ffc300 245px,#ff8000 248px,#ff0900 252px,#ff1616 253px,#ff6f6f 257px)}.g180{background:linear-gradient(#040004,#040004 39px,#0f000f 41px,#950095 43px,#f800f8 45px,#d500ff 46px,#2200ff 49px,#0037ff 50px,#0099ff 51px,#00e0ff 52px,#00fffc 55px,#00ffbe 59px,#00ff5e 63px,#01ff00 95px,#d0ff00 196px,#fffd00 240px,#ffc600 246px,#ff0700 253px,#ff5555 257px)}.g181{background:linear-gradient(#260026,#260026 39px,#000000 40px,#000000 41px,#840084 43px,#e700e7 45px,#e500ff 46px,#3300ff 49px,#001dff 50px,#0084ff 51px,#00d2ff 52px,#00eeff 53px,#00ffff 55px,#00ffcd 59px,#00ff74 63px,#00ff00 108px,#3aff00 141px,#e5ff00 212px,#ffff00 236px,#fff600 241px,#ffc600 245px,#ff8300 248px,#ff0d00 252px,#ff1212 253px,#ff6c6c 257px)}.g182{background:linear-gradient(#010001,#000000 41px,#da00da 45px,#f200ff 46px,#0009ff 50px,#00c6ff 52px,#00e6ff 53px,#00fffe 56px,#00ffe9 59px,#00ffa2 63px,#00ff42 100px,#00ff00 141px,#88ff00 192px,#d4ff00 214px,#fffe00 239px,#fff300 242px,#ffc100 246px,#ff0202 253px,#ff5d5d 257px)}.g183{background:linear-gradient(#100010,#100010 39px,#000000 40px,#000000 44px,#4d004d 46px,#fe00ff 49px,#2e00ff 52px,#0900ff 53px,#3b003b 54px,#850085 56px,#f700f7 62px,#b100ff 100px,#a200ff 120px,#0300ff 143px,#007fff 155px,#00d2ff 165px,#00faff 174px,#00fffd 181px,#00ffcd 192px,#00ff4f 200px,#00ff04 207px,#c4ff00 228px,#f7ff00 236px,#fffc00 241px,#ffc500 246px,#ff0400 253px,#ff5858 257px)}.g184{background:linear-gradient(#310031,#600060 5px,#960096 15px,#f200f2 39px,#cc00ff 40px,#c700ff 45px,#1e00ff 48px,#002eff 49px,#0092ff 50px,#00dbff 51px,#00feff 52px,#00fffd 53px,#00ffef 54px,#00ff0e 62px,#0fff00 63px,#73ff00 100px,#ddff00 172px,#f5ff00 192px,#ffff00 236px,#fff700 241px,#ffd900 244px,#ffa200 247px,#ff1000 252px,#ff0f0f 253px,#ff6969 257px)}.g185{background:linear-gradient(#0b000b,#000000 41px,#ff00ff 46px,#0700ff 50px,#00b9ff 52px,#00dcff 53px,#00c5ff 54px,#00f8ff 56px,#00ffff 58px,#00ffd5 63px,#00ff8c 100px,#00ff66 131px,#00ff01 172px,#3cff00 192px,#b8ff00 218px,#ffff00 241px,#ffef00 244px,#ffc500 247px,#ff0400 254px,#ff3939 257px)}.g186{background:linear-gradient(#050005,#000000 42px,#0c000c 43px,#dc00dc 47px,#e600ff 48px,#2000ff 51px,#003aff 52px,#0071ff 53px,#0d00ff 54px,#005eff 56px,#0079ff 57px,#00edff 63px,#00fff9 134px,#00ffcd 175px,#00ffa9 192px,#00ff04 208px,#c9ff00 229px,#f7ff00 236px,#fffc00 241px,#ffc200 246px,#ff0101 253px,#ff5c5c 257px)}.g187{background:linear-gradient(#1a001a,#1f001f 41px,#a500a5 43px,#f600ff 45px,#1200ff 49px,#00adff 51px,#00ebff 52px,#00ffff 54px,#00ffc3 58px,#00ff49 63px,#02ff00 90px,#cfff00 193px,#ffff00 239px,#fff600 242px,#ffc800 246px,#ff0700 253px,#ff5454 257px)}.g188{background:linear-gradient(#820082,#b100b1 5px,#fe00fe 20px,#ba00ff 39px,#8100ff 40px,#8100ff 46px,#6000ff 47px,#2400ff 48px,#0025ff 49px,#008aff 50px,#00d6ff 51px,#00fcff 52px,#00fffe 53px,#00ffe8 55px,#00ff19 63px,#01ff00 72px,#4eff00 100px,#62ff00 120px,#ddff00 185px,#ffff00 239px,#fff900 242px,#ffcd00 246px,#ff1000 253px,#ff0f0f 254px,#ff4c4c 257px)}.g189{background:linear-gradient(#000000,#000000 42px,#0f000f 43px,#e000e0 47px,#e300ff 48px,#1d00ff 51px,#003fff 52px,#0076ff 53px,#1800ff 54px,#0015ff 55px,#004eff 56px,#0085ff 58px,#00e6ff 63px,#00feff 94px,#00fffa 140px,#00ffd8 174px,#00ffb5 192px,#00ff03 210px,#daff00 233px,#fffb00 242px,#ffbf00 247px,#ff0505 254px,#ff4343 257px)}.g18a{background:linear-gradient(#000000,#000000 39px,#100010 41px,#960096 43px,#f900f9 45px,#d400ff 46px,#2100ff 49px,#0038ff 50px,#009aff 51px,#00e1ff 52px,#00ffff 54px,#00ffcd 58px,#00ff59 63px,#02ff00 96px,#4dff00 141px,#cfff00 198px,#fffd00 240px,#ffed00 243px,#ffc400 246px,#ff0200 253px,#ff5959 257px)}.g18b{background:linear-gradient(#bd00ff,#8e00ff 5px,#5800ff 15px,#0007ff 39px,#0090ff 40px,#0090ff 46px,#3c00ff 47px,#0000ff 48px,#00b5ff 50px,#00efff 51px,#00fffe 52px,#00fff3 53px,#2300ff 54px,#0004ff 55px,#003dff 56px,#005aff 57px,#00deff 63px,#00fdff 97px,#00fffe 123px,#00ffeb 130px,#00ffad 140px,#04ff00 157px,#abff00 173px,#fbff00 187px,#fff900 241px,#ffc200 246px,#ff0101 253px,#ff5c5c 257px)}.g18c{background:linear-gradient(#000000,#000000 41px,#090009 42px,#4c004c 43px,#e000e0 46px,#e200ff 47px,#2600ff 50px,#0032ff 51px,#0095ff 52px,#00c0ff 53px,#00c5ff 54px,#00f8ff 56px,#00ffff 58px,#00ffd5 63px,#00ff8b 100px,#00ff61 133px,#01ff00 172px,#3dff00 192px,#9bff00 206px,#daff00 219px,#fff700 239px,#ffdf00 242px,#ff9a00 246px,#ff0600 251px,#ff8d8d 257px)}.g18d{background:linear-gradient(#0011ff,#0062ff 6px,#00a2ff 15px,#00feff 40px,#00feff 46px,#7600ff 47px,#0002ff 49px,#00c1ff 51px,#00f5ff 52px,#00ffff 53px,#00ffef 55px,#00ff2d 63px,#00ff00 79px,#3bff00 100px,#4fff00 120px,#d9ff00 189px,#ffff00 238px,#fff600 242px,#ffc600 246px,#ff0500 253px,#ff5757 257px)}.g18e{background:linear-gradient(#000000,#010001 41px,#870087 43px,#ea00ea 45px,#e300ff 46px,#3000ff 49px,#0021ff 50px,#00d5ff 52px,#00fffe 55px,#00ffca 59px,#00ff70 63px,#00ff0b 100px,#00ff00 111px,#35ff00 141px,#cfff00 203px,#fffe00 238px,#ffef00 242px,#ffb800 246px,#ff0f00 252px,#ff1010 253px,#ff6b6b 257px)}.g18f{background:linear-gradient(#2b002b,#5a005a 5px,#900090 15px,#ec00ec 39px,#f700ff 40px,#f700ff 44px,#eb00ff 45px,#0700ff 49px,#00b9ff 51px,#00f1ff 52px,#00fffa 54px,#00ff19 63px,#01ff00 72px,#4eff00 100px,#62ff00 120px,#ddff00 185px,#ffff00 236px,#fff400 241px,#ffd200 244px,#ff9800 247px,#ff0400 252px,#ff7474 257px)}.g190{background:linear-gradient(#1b001b,#1b001b 39px,#000000 40px,#000000 41px,#140014 42px,#570057 43px,#ec00ec 46px,#d700ff 47px,#1a00ff 50px,#0043ff 51px,#00a3ff 52px,#00cbff 53px,#00cbff 54px,#00faff 56px,#00ffff 58px,#00ffd0 63px,#00ff84 100px,#00ff5d 131px,#01ff00 169px,#45ff00 192px,#d1ff00 218px,#fffc00 239px,#ffea00 242px,#ffae00 246px,#ff0000 252px,#ff7878 257px)}.g191{background:linear-gradient(#0a000a,#000000 42px,#f800f8 47px,#8f00ff 49px,#0400ff 51px,#0064ff 52px,#0097ff 53px,#0036ff 54px,#009fff 56px,#00daff 59px,#00faff 62px,#00ffff 66px,#00ffe9 122px,#00ffba 158px,#00ff6a 192px,#00ff04 203px,#b0ff00 224px,#f7ff00 236px,#fffd00 241px,#ffc800 246px,#ff0900 253px,#ff5353 257px)}.g192{background:linear-gradient(#e100e1,#fc00ff 3px,#a100ff 20px,#5b00ff 39px,#0049ff 40px,#0049ff 46px,#0f00ff 47px,#00e0ff 50px,#00feff 51px,#00ffef 52px,#00ffc2 54px,#00ff64 56px,#00ff0d 59px,#11ff00 60px,#65ff00 63px,#baff00 100px,#f9ff00 167px,#ffff00 237px,#fff500 242px,#ffd400 245px,#ff9500 248px,#ff0200 253px,#ff5a5a 257px)}.g193{background:linear-gradient(#0f000f,#720072 17px,#c500c5 39px,#db00db 40px,#dc00dc 44px,#f000ff 45px,#0c00ff 49px,#00b4ff 51px,#00efff 52px,#00fffe 54px,#00ffb7 58px,#00ff39 63px,#02ff00 84px,#2fff00 100px,#44ff00 120px,#d4ff00 190px,#ffff00 238px,#fff400 242px,#ffc200 246px,#ff0202 253px,#ff5d5d 257px)}.g194{background:linear-gradient(#000000,#000000 42px,#fc00fc 47px,#c700ff 48px,#0000ff 51px,#0069ff 52px,#009bff 53px,#004bff 54px,#00afff 56px,#00c4ff 57px,#00f0ff 60px,#00ffff 63px,#00ffe1 120px,#00ffb8 151px,#00ff56 192px,#00ff03 201px,#b4ff00 223px,#f2ff00 234px,#fffe00 240px,#ffc100 246px,#ff0303 253px,#ff5e5e 257px)}.g195{background:linear-gradient(#510051,#a300a3 11px,#fd00ff 33px,#eb00ff 39px,#d500ff 40px,#d500ff 45px,#bf00ff 46px,#0c00ff 49px,#00b4ff 51px,#00eeff 52px,#00ffff 54px,#00ffc3 58px,#00ff49 63px,#02ff00 90px,#cfff00 193px,#fffd00 241px,#ffcd00 246px,#ff1000 253px,#ff0f0f 254px,#ff4c4c 257px)}.g196{background:linear-gradient(#0e000e,#0e000e 39px,#000000 41px,#fd00ff 46px,#0500ff 50px,#00bbff 52px,#00deff 53px,#00cdff 54px,#00fbff 56px,#00ffff 57px,#00fff4 60px,#00ffce 63px,#00ff81 100px,#00ff4a 139px,#00ff00 167px,#49ff00 192px,#c9ff00 221px,#ffff00 241px,#ffed00 244px,#ffc100 247px,#ff0202 254px,#ff4040 257px)}.g197{background:linear-gradient(#060006,#030003 42px,#460046 43px,#da00da 46px,#e800ff 47px,#2c00ff 50px,#0028ff 51px,#008dff 52px,#00baff 53px,#0091ff 54px,#00dfff 56px,#00ffff 60px,#00ff93 140px,#00ff02 193px,#b4ff00 219px,#f6ff00 234px,#fffb00 241px,#ffc100 246px,#ff0303 253px,#ff5f5f 257px)}.g198{background:linear-gradient(#0f000f,#b600b6 39px,#dc00dc 40px,#ec00ec 44px,#e000ff 45px,#0007ff 49px,#00c5ff 51px,#00f6ff 52px,#00ffff 53px,#00ffe7 55px,#00ff18 63px,#01ff00 72px,#4fff00 100px,#68ff00 123px,#daff00 183px,#ffff00 237px,#fff800 241px,#ffcc00 245px,#ff8a00 248px,#ff1300 252px,#ff0c0c 253px,#ff6666 257px)}.g199{background:linear-gradient(#000000,#000000 41px,#db00db 45px,#f100ff 46px,#000aff 50px,#00c7ff 52px,#00e6ff 53px,#00fffe 56px,#00ffe7 59px,#00ffa0 63px,#00ff44 100px,#02ff00 143px,#d1ff00 214px,#fffd00 240px,#ffc100 246px,#ff0303 253px,#ff5e5e 257px)}.g19a{background:linear-gradient(#1e001e,#1e001e 39px,#000000 40px,#000000 41px,#260026 42px,#690069 43px,#fe00fe 46px,#0900ff 50px,#00b7ff 52px,#00dbff 53px,#00d6ff 54px,#00f0ff 55px,#00ffff 57px,#00ffef 60px,#00ffc4 63px,#00ff73 100px,#00ff54 126px,#00ff00 161px,#58ff00 192px,#d3ff00 220px,#fffe00 240px,#ffc400 246px,#ff0200 253px,#ff5a5a 257px)}.g19b{background:linear-gradient(#150015,#150015 39px,#000000 41px,#210021 42px,#640064 43px,#f900f9 46px,#0d00ff 50px,#00b2ff 52px,#00d7ff 53px,#00ffff 57px,#00ffed 60px,#00ffc0 63px,#02ff00 160px,#5dff00 192px,#d7ff00 219px,#ffff00 238px,#fff800 241px,#ffc900 245px,#ffa000 247px,#ff0e00 252px,#ff1111 253px,#ff6b6b 257px)}.g19c{background:linear-gradient(#a100a1,#d000d0 5px,#fd00ff 14px,#9b00ff 39px,#3100ff 40px,#2e00ff 47px,#0015ff 48px,#00c4ff 50px,#00f6ff 51px,#00fffc 52px,#00ffd5 54px,#00ff81 56px,#0eff00 61px,#48ff00 63px,#a3ff00 100px,#f8ff00 177px,#ffff00 236px,#fff800 241px,#ffdb00 244px,#ffbc00 246px,#ff1400 252px,#ff0b0b 253px,#ff6666 257px)}.g19d{background:linear-gradient(#810081,#bd00bd 7px,#fd00ff 21px,#bb00ff 39px,#4f00ff 40px,#4f00ff 46px,#2d00ff 47px,#0017ff 48px,#00c5ff 50px,#00f6ff 51px,#00fffb 52px,#00ffcd 54px,#00ff75 56px,#00ff02 60px,#1bff00 61px,#54ff00 63px,#adff00 100px,#f7ff00 171px,#ffff00 235px,#fff500 241px,#ffd500 244px,#ff9c00 247px,#ff0900 252px,#ff7070 257px)}.g19e{background:linear-gradient(#1a001a,#1a001a 39px,#000000 40px,#000000 42px,#cf00cf 46px,#f300ff 47px,#3700ff 50px,#0017ff 51px,#007eff 52px,#00adff 53px,#0066ff 54px,#00c3ff 56px,#00f0ff 59px,#00ffff 62px,#00ffb8 140px,#00ff3a 192px,#01ff00 199px,#a3ff00 220px,#ebff00 233px,#fffd00 241px,#ffcb00 246px,#ff0d00 253px,#ff1313 254px,#ff4f4f 257px)}.g19f{background:linear-gradient(#150015,#150015 39px,#000000 41px,#fe00ff 46px,#0600ff 50px,#00baff 52px,#00ddff 53px,#00ffff 56px,#00ffea 59px,#00ffa4 63px,#00ff49 100px,#00ff35 120px,#01ff00 145px,#80ff00 192px,#daff00 215px,#fffd00 238px,#fff300 241px,#ffbe00 245px,#ff0303 252px,#ff7b7b 257px)}.g1a0{background:linear-gradient(#980098,#c700c7 5px,#fc00ff 16px,#a500ff 39px,#4b00ff 40px,#4b00ff 46px,#3f00ff 47px,#0400ff 48px,#00b2ff 50px,#00eeff 51px,#00ffff 52px,#00fff5 53px,#00ff82 56px,#0cff00 61px,#45ff00 63px,#a1ff00 100px,#f8ff00 178px,#fffc00 237px,#fff200 241px,#ffbf00 245px,#ff0202 252px,#ff7979 257px)}.g1a1{background:linear-gradient(#0e000e,#0e000e 39px,#000000 41px,#1d001d 42px,#600060 43px,#f500f5 46px,#ce00ff 47px,#1100ff 50px,#00aeff 52px,#00d3ff 53px,#00ffff 57px,#00fff1 60px,#00ffc7 63px,#00ff78 100px,#00ff52 130px,#02ff00 164px,#52ff00 192px,#d1ff00 218px,#ffff00 238px,#ffef00 242px,#ffb700 246px,#ff0d00 252px,#ff1212 253px,#ff6c6c 257px)}.g1a2{background:linear-gradient(#0a000a,#000000 41px,#100010 42px,#530053 43px,#e800e8 46px,#db00ff 47px,#1e00ff 50px,#003dff 51px,#009eff 52px,#00c7ff 53px,#00c1ff 54px,#00f7ff 56px,#00ffff 58px,#00ffd8 63px,#00ff64 135px,#01ff00 175px,#36ff00 192px,#90ff00 206px,#d7ff00 221px,#fff900 240px,#ffb000 246px,#ff0400 252px,#ff7575 257px)}.g1a3{background:linear-gradient(#bb00bb,#fd00ff 9px,#8200ff 39px,#0d00ff 40px,#0d00ff 46px,#2400ff 47px,#0025ff 48px,#00ceff 50px,#00faff 51px,#00fff9 52px,#00ffd2 54px,#00ff7c 56px,#00ff09 60px,#14ff00 61px,#4dff00 63px,#a7ff00 100px,#fbff00 180px,#ffff00 237px,#fffa00 241px,#ffd200 245px,#ff9200 248px,#ff0202 253px,#ff5d5d 257px)}.g1a4{background:linear-gradient(#0011ff,#0062ff 6px,#00a2ff 15px,#00d4ff 26px,#00f3ff 39px,#00ffec 40px,#00ffec 46px,#2700ff 47px,#0021ff 48px,#00cbff 50px,#00f9ff 51px,#00fffa 52px,#00ffcd 54px,#00ff75 56px,#00ff02 60px,#1bff00 61px,#54ff00 63px,#adff00 100px,#f9ff00 174px,#fffe00 237px,#fff700 241px,#ffcb00 245px,#ff8900 248px,#ff1200 252px,#ff0e0e 253px,#ff6868 257px)}.g1a5{background:linear-gradient(#000000,#000000 41px,#1e001e 42px,#610061 43px,#f500f5 46px,#cd00ff 47px,#1100ff 50px,#00aeff 52px,#00d4ff 53px,#00c1ff 54px,#00f7ff 56px,#00ffff 58px,#00ffd8 63px,#00ff63 135px,#00ff00 174px,#37ff00 192px,#caff00 221px,#ffff00 240px,#ffcb00 246px,#ff0c00 253px,#ff1313 254px,#ff5050 257px)}.g1a6{background:linear-gradient(#140014,#140014 39px,#000000 40px,#000000 42px,#d300d3 46px,#f000ff 47px,#3300ff 50px,#001cff 51px,#0083ff 52px,#00b1ff 53px,#bc00ff 54px,#7200ff 56px,#0100ff 62px,#001cff 63px,#0075ff 96px,#0091ff 120px,#00f1ff 135px,#00fff8 148px,#00ffae 161px,#00ff07 177px,#95ff00 191px,#dcff00 200px,#fff800 241px,#ffba00 246px,#ff1100 252px,#ff0e0e 253px,#ff6868 257px)}.g1a7{background:linear-gradient(#960096,#c500c5 5px,#fe00ff 16px,#a700ff 39px,#4b00ff 40px,#4b00ff 46px,#3d00ff 47px,#0100ff 48px,#00b4ff 50px,#00efff 51px,#00fffe 52px,#00fff4 53px,#00ff83 56px,#0bff00 61px,#45ff00 63px,#a1ff00 100px,#f8ff00 178px,#ffff00 234px,#fff300 241px,#ffd100 244px,#ff9600 247px,#ff0200 252px,#ff7676 257px)}.g1a8{background:linear-gradient(#0d000d,#000000 43px,#d000d0 47px,#f200ff 48px,#2c00ff 51px,#0028ff 52px,#0060ff 53px,#1700ff 54px,#0016ff 55px,#004fff 56px,#009eff 59px,#00d9ff 62px,#00e8ff 64px,#00feff 94px,#00fffb 137px,#00ffd6 175px,#00ffb4 192px,#00ff09 208px,#cfff00 229px,#faff00 236px,#fff800 241px,#ffb600 246px,#ff0b00 252px,#ff1414 253px,#ff6e6e 257px)}.g1a9{background:linear-gradient(#230023,#230023 39px,#000000 40px,#000000 41px,#fc00ff 46px,#0400ff 50px,#00bcff 52px,#00deff 53px,#00ffff 56px,#00fff0 59px,#00ffb2 63px,#00ff5a 100px,#00ff46 120px,#02ff00 152px,#70ff00 192px,#d2ff00 216px,#fffe00 239px,#fff100 242px,#ffbb00 246px,#ff1400 252px,#ff0c0c 253px,#ff6666 257px)}.g1aa{background:linear-gradient(#000000,#000000 39px,#120012 41px,#980098 43px,#fb00fb 45px,#d100ff 46px,#1f00ff 49px,#003cff 50px,#009eff 51px,#00e3ff 52px,#00ffff 54px,#00ffc6 58px,#00ff4e 63px,#02ff00 92px,#53ff00 139px,#d0ff00 195px,#ffff00 238px,#fffa00 241px,#ffd000 245px,#ff0505 253px,#ff6060 257px)}.g1ab{background:linear-gradient(#ed00ed,#f900ff 2px,#a300ff 17px,#5000ff 39px,#005dff 40px,#005dff 46px,#0c00ff 47px,#00e2ff 50px,#00ffff 51px,#00ffd3 53px,#00ffd6 54px,#00ff83 56px,#0bff00 61px,#45ff00 63px,#a1ff00 100px,#f8ff00 178px,#ffff00 241px,#fff100 244px,#ffc800 247px,#ff0900 254px,#ff3535 257px)}.g1ac{background:linear-gradient(#260026,#260026 39px,#000000 40px,#000000 41px,#de00de 45px,#ef00ff 46px,#000fff 50px,#00caff 52px,#00e8ff 53px,#00fffe 56px,#00ffe5 59px,#00ff9c 63px,#00ff3f 100px,#01ff00 141px,#d2ff00 214px,#fffd00 240px,#ffc300 246px,#ff0000 253px,#ff5b5b 257px)}.g1ad{background:linear-gradient(#530053,#9f009f 10px,#fe00fe 32px,#ea00ff 39px,#c800ff 40px,#c800ff 45px,#b300ff 46px,#0100ff 49px,#00c0ff 51px,#00f4ff 52px,#00fffc 54px,#00ff23 63px,#02ff00 76px,#44ff00 100px,#5cff00 122px,#deff00 189px,#ffff00 237px,#fff900 241px,#ffcf00 245px,#ff0707 253px,#ff6262 257px)}.g1ae{background:linear-gradient(#6d006d,#b400b4 9px,#fd00ff 26px,#d000ff 39px,#a500ff 40px,#a500ff 46px,#3300ff 48px,#000eff 49px,#00c9ff 51px,#00f8ff 52px,#00ffff 53px,#00ffdd 55px,#00ff01 63px,#02ff00 64px,#64ff00 100px,#e5ff00 183px,#ffff00 235px,#fff400 241px,#ffd200 244px,#ff9700 247px,#ff0300 252px,#ff7575 257px)}.g1af{background:linear-gradient(#0e000e,#0e000e 39px,#000000 43px,#060006 44px,#e000e0 48px,#e200ff 49px,#1200ff 52px,#001eff 53px,#7b00ff 54px,#3100ff 56px,#000eff 59px,#007dff 63px,#00c1ff 94px,#00f9ff 157px,#00fffb 192px,#00ffb2 203px,#00ff09 216px,#beff00 231px,#f6ff00 237px,#fffd00 241px,#ffc700 246px,#ff0600 253px,#ff5656 257px)}.g1b0{background:linear-gradient(#0c000c,#0c000c 39px,#1b001b 41px,#a100a1 43px,#fa00ff 45px,#1600ff 49px,#0049ff 50px,#00a8ff 51px,#00e8ff 52px,#00ffff 54px,#00ffc7 58px,#00ff50 63px,#01ff00 92px,#2cff00 120px,#cdff00 194px,#fffe00 240px,#ffc800 246px,#ff0800 253px,#ff5454 257px)}.g1b1{background:linear-gradient(#fb00ff,#d300ff 4px,#9b00ff 14px,#3a00ff 39px,#0092ff 40px,#0092ff 46px,#0006ff 47px,#00afff 49px,#00ecff 50px,#00ffff 51px,#00ffc3 53px,#00ffbf 54px,#00ff61 56px,#00ff09 59px,#69ff00 63px,#bdff00 100px,#fdff00 174px,#ffff00 239px,#fff400 243px,#ffd100 246px,#ff0707 254px,#ff4545 257px)}.g1b2{background:linear-gradient(#000000,#000000 41px,#240024 42px,#670067 43px,#fc00fc 46px,#c600ff 47px,#0a00ff 50px,#00b6ff 52px,#00daff 53px,#00d6ff 54px,#00f0ff 55px,#00ffff 57px,#00ffef 60px,#00ffc3 63px,#00ff72 100px,#00ff59 123px,#00ff00 161px,#59ff00 192px,#cbff00 217px,#fffd00 240px,#ffc100 246px,#ff0303 253px,#ff5e5e 257px)}.g1b3{background:linear-gradient(#280028,#280028 39px,#000000 40px,#000000 41px,#df00df 45px,#ee00ff 46px,#0010ff 50px,#00caff 52px,#00e8ff 53px,#00ffff 55px,#00ffd6 59px,#00ff83 63px,#00ff21 100px,#00ff00 126px,#ddff00 212px,#fffd00 238px,#fff400 241px,#ffc200 245px,#ff0300 252px,#ff7575 257px)}.g1b4{background:linear-gradient(#b300b3,#ff00ff 10px,#8a00ff 39px,#3e00ff 40px,#3e00ff 46px,#4d00ff 47px,#1100ff 48px,#00e5ff 51px,#00ffff 52px,#00fff2 54px,#05ff00 63px,#6aff00 100px,#e5ff00 181px,#ffff00 239px,#fff100 243px,#ffcb00 246px,#ff0d00 253px,#ff1212 254px,#ff4f4f 257px)}.g1b5{background:linear-gradient(#110011,#110011 39px,#000000 41px,#fd00ff 46px,#0500ff 50px,#00bbff 52px,#00ddff 53px,#00b9ff 54px,#00f4ff 56px,#00ffff 59px,#00ffde 63px,#00ff6e 135px,#00ff00 178px,#2bff00 192px,#99ff00 214px,#ffff00 242px,#ffd300 247px,#ff0404 255px,#ff2323 257px)}.g1b6{background:linear-gradient(#060006,#080008 41px,#8e008e 43px,#f100f1 45px,#db00ff 46px,#2800ff 49px,#002dff 50px,#0091ff 51px,#00dbff 52px,#00ffff 54px,#00ffcd 58px,#00ff59 63px,#02ff00 96px,#4aff00 140px,#d8ff00 202px,#ffff00 237px,#fff700 241px,#ffc800 245px,#ff8500 248px,#ff0d00 252px,#ff1212 253px,#ff6c6c 257px)}.g1b7{background:linear-gradient(#130013,#690069 12px,#d400d4 39px,#ef00ff 40px,#ef00ff 44px,#9a00ff 46px,#2300ff 48px,#0027ff 49px,#008cff 50px,#00d8ff 51px,#00fdff 52px,#00fffe 53px,#00ffeb 55px,#00ff21 63px,#01ff00 75px,#46ff00 100px,#5aff00 120px,#dfff00 189px,#fffe00 241px,#ffd300 246px,#ff0505 254px,#ff4242 257px)}.g1b8{background:linear-gradient(#880088,#bd00bd 6px,#ff00ff 19px,#b500ff 39px,#6500ff 40px,#6500ff 46px,#4900ff 47px,#0e00ff 48px,#00e7ff 51px,#00ffff 52px,#00fff9 53px,#00ff74 56px,#00ff00 60px,#56ff00 63px,#aeff00 100px,#f8ff00 172px,#fffa00 235px,#ffe600 241px,#ffcc00 243px,#ff9400 246px,#ff0202 251px,#ff9494 257px)}.g1b9{background:linear-gradient(#250025,#250025 39px,#000000 40px,#000000 41px,#810081 43px,#e400e4 45px,#e800ff 46px,#3600ff 49px,#0019ff 50px,#00d0ff 52px,#00ecff 53px,#00ffff 56px,#00ffea 59px,#00ffa5 63px,#00ff4d 99px,#00ff36 120px,#00ff00 145px,#c3ff00 213px,#ffff00 241px,#ffee00 244px,#ffc300 247px,#ff0000 254px,#ff3d3d 257px)}.g1ba{background:linear-gradient(#000000,#000000 41px,#860086 43px,#e900e9 45px,#e400ff 46px,#3100ff 49px,#0020ff 50px,#00d4ff 52px,#00efff 53px,#00ffff 55px,#00ffd1 59px,#00ff7a 63px,#00ff17 100px,#01ff00 121px,#d4ff00 208px,#fffe00 239px,#ffe900 243px,#ffbe00 246px,#ff0808 253px,#ff6262 257px)}.g1bb{background:linear-gradient(#1f001f,#1f001f 39px,#000000 40px,#000000 41px,#fd00ff 46px,#0500ff 50px,#00bbff 52px,#00ddff 53px,#00c9ff 54px,#00faff 56px,#00ffff 58px,#00ffd1 63px,#00ff86 100px,#00ff63 129px,#01ff00 170px,#43ff00 192px,#bbff00 218px,#ffff00 241px,#ffee00 244px,#ffc400 247px,#ff0200 254px,#ff3b3b 257px)}.g1bc{background:linear-gradient(#0011ff,#0062ff 6px,#00a2ff 15px,#00ffff 40px,#00ffff 46px,#6f00ff 47px,#000dff 49px,#00c9ff 51px,#00f8ff 52px,#00ffff 53px,#00ffe8 55px,#00ff19 63px,#00ff00 72px,#4eff00 100px,#62ff00 120px,#dbff00 184px,#ffff00 237px,#fff900 241px,#ffd000 245px,#ff9000 248px,#ff0505 253px,#ff6060 257px)}.g1bd{background:linear-gradient(#0d000d,#0a000a 41px,#900090 43px,#f400f4 45px,#d900ff 46px,#2600ff 49px,#0030ff 50px,#0094ff 51px,#00ddff 52px,#00ffff 54px,#00ffca 58px,#00ff55 63px,#01ff00 94px,#51ff00 141px,#d8ff00 201px,#ffff00 237px,#fff700 241px,#ffc900 245px,#ff8600 248px,#ff0f00 252px,#ff1010 253px,#ff6b6b 257px)}.g1be{background:linear-gradient(#1f001f,#1f001f 39px,#000000 40px,#000000 41px,#070007 42px,#4a004a 43px,#de00de 46px,#e400ff 47px,#2800ff 50px,#002eff 51px,#0092ff 52px,#00beff 53px,#009dff 54px,#00e6ff 56px,#00ffff 60px,#00ffee 63px,#00ff8c 137px,#00ff01 190px,#afff00 217px,#f4ff00 233px,#fffd00 240px,#ffbf00 246px,#ff0606 253px,#ff6161 257px)}.g1bf{background:linear-gradient(#ec00ec,#f900ff 2px,#9f00ff 18px,#5100ff 39px,#3100ff 40px,#3100ff 46px,#7900ff 47px,#0200ff 49px,#00bfff 51px,#00f4ff 52px,#00feff 53px,#6700ff 54px,#1c00ff 56px,#0900ff 57px,#0098ff 63px,#00d9ff 97px,#00fffc 134px,#00ffb8 148px,#00ff0b 165px,#abff00 182px,#eeff00 192px,#feff00 200px,#fffd00 241px,#ffcf00 246px,#ff1300 253px,#ff0c0c 254px,#ff4949 257px)}.g1c0{background:linear-gradient(#000000,#000000 41px,#200020 42px,#630063 43px,#f800f8 46px,#cb00ff 47px,#0e00ff 50px,#00b1ff 52px,#00d6ff 53px,#00ffff 57px,#00ffef 60px,#00ffc3 63px,#00ff71 100px,#00ff45 133px,#01ff00 161px,#59ff00 192px,#d9ff00 220px,#ffff00 238px,#fff800 241px,#ffb800 246px,#ff0f00 252px,#ff1111 253px,#ff6b6b 257px)}.g1c1{background:linear-gradient(#2b002b,#2b002b 39px,#000000 40px,#000000 43px,#1d001d 44px,#f700f7 48px,#cb00ff 49px,#0008ff 52px,#0042ff 53px,#4600ff 54px,#0008ff 56px,#00beff 63px,#00f2ff 100px,#00ffff 153px,#00ffe0 192px,#00ff9c 200px,#00ff0a 212px,#a0ff00 226px,#f6ff00 236px,#fffb00 241px,#ffce00 245px,#ff0909 253px,#ff6363 257px)}.g1c2{background:linear-gradient(#750075,#b600b6 8px,#fd00ff 24px,#c800ff 39px,#9900ff 40px,#9900ff 46px,#2f00ff 48px,#0014ff 49px,#00cdff 51px,#00f9ff 52px,#00ffff 53px,#00ffdb 55px,#02ff00 63px,#67ff00 100px,#e1ff00 179px,#ffff00 235px,#fff400 241px,#ffd300 244px,#ff9900 247px,#ff0500 252px,#ff7373 257px)}.g1c3{background:linear-gradient(#070007,#000000 41px,#dd00dd 45px,#ef00ff 46px,#000eff 50px,#00c9ff 52px,#00e8ff 53px,#00ffff 55px,#00ffdc 59px,#00ff8c 63px,#00ff2c 100px,#00ff00 131px,#d8ff00 212px,#fffe00 238px,#ffee00 242px,#ffb500 246px,#ff0a00 252px,#ff1515 253px,#ff6e6e 257px)}.g1c4{background:linear-gradient(#160016,#160016 39px,#000000 41px,#220022 42px,#650065 43px,#f900f9 46px,#0d00ff 50px,#00b3ff 52px,#00d7ff 53px,#00ffff 57px,#00ffee 60px,#00ffc1 63px,#00ff6f 100px,#00ff52 125px,#01ff00 160px,#5cff00 192px,#d9ff00 220px,#fffe00 239px,#fff000 242px,#ffb900 246px,#ff1100 252px,#ff0e0e 253px,#ff6969 257px)}.g1c5{background:linear-gradient(#250025,#250025 39px,#000000 40px,#000000 41px,#150015 42px,#580058 43px,#ed00ed 46px,#d600ff 47px,#1a00ff 50px,#0044ff 51px,#00a4ff 52px,#00ccff 53px,#00cbff 54px,#00faff 56px,#00ffff 58px,#00ffcf 63px,#00ff83 100px,#00ff54 135px,#00ff00 168px,#47ff00 192px,#d1ff00 218px,#fff900 240px,#ffae00 246px,#ff0100 252px,#ff7777 257px)}.g1c6{background:linear-gradient(#b200b2,#fe00fe 10px,#8a00ff 39px,#1000ff 40px,#1000ff 46px,#1f00ff 47px,#002dff 48px,#00d3ff 50px,#00fbff 51px,#00fff7 52px,#00ffe1 54px,#00ff95 56px,#00ff09 61px,#14ff00 62px,#31ff00 63px,#90ff00 100px,#f9ff00 186px,#fffe00 241px,#ffef00 244px,#ffc400 247px,#ff0300 254px,#ff3b3b 257px)}.g1c7{background:linear-gradient(#1f001f,#1f001f 39px,#000000 40px,#000000 41px,#050005 42px,#480048 43px,#dd00dd 46px,#e600ff 47px,#2900ff 50px,#002cff 51px,#0090ff 52px,#00bcff 53px,#00f9ff 56px,#00ffff 58px,#00ffd3 63px,#00ff89 100px,#00ff5b 135px,#00ff00 171px,#3fff00 192px,#a5ff00 207px,#deff00 219px,#fff800 238px,#ffe700 241px,#ffb700 244px,#ff0707 251px,#ff9898 257px)}.g1c8{background:linear-gradient(#180018,#180018 39px,#000000 41px,#dd00dd 45px,#ef00ff 46px,#000eff 50px,#00c9ff 52px,#00e8ff 53px,#00fffc 56px,#00ffde 59px,#00ff8f 63px,#00ff2f 100px,#01ff00 133px,#d4ff00 211px,#fffd00 239px,#ffef00 242px,#ffb700 246px,#ff0e00 252px,#ff1111 253px,#ff6b6b 257px)}.g1c9{background:linear-gradient(#210021,#570057 6px,#820082 14px,#e300e3 39px,#fc00fc 40px,#fc00fc 44px,#ed00ff 45px,#0900ff 49px,#00b7ff 51px,#00f0ff 52px,#00fffe 54px,#00ffb9 58px,#00ff3b 63px,#00ff00 84px,#2dff00 100px,#47ff00 123px,#d6ff00 192px,#ffff00 238px,#fff600 242px,#ffc600 246px,#ff0500 253px,#ff5757 257px)}.g1ca{background:linear-gradient(#1a001a,#0f000f 41px,#950095 43px,#f800f8 45px,#d400ff 46px,#2200ff 49px,#0038ff 50px,#009aff 51px,#00e0ff 52px,#00ffff 54px,#00ffcc 58px,#00ff58 63px,#00ff00 95px,#4eff00 141px,#d3ff00 200px,#fffd00 240px,#ffc300 246px,#ff0000 253px,#ff5b5b 257px)}.g1cb{background:linear-gradient(#0a000a,#0e000e 41px,#940094 43px,#f700f7 45px,#d500ff 46px,#2200ff 49px,#0037ff 50px,#0099ff 51px,#00e0ff 52px,#00ffff 54px,#00ffc8 58px,#00ff51 63px,#00ff00 92px,#2bff00 120px,#d4ff00 198px,#ffff00 237px,#fff900 241px,#ffce00 245px,#ff0909 253px,#ff6464 257px)}.g1cc{background:linear-gradient(#1f001f,#660066 9px,#e000e0 39px,#fb00fb 40px,#fb00fb 44px,#ec00ff 45px,#0800ff 49px,#00b8ff 51px,#00f1ff 52px,#00fff3 54px,#02ff00 63px,#67ff00 100px,#e5ff00 182px,#fffd00 235px,#ffeb00 241px,#ffd200 243px,#ff9c00 246px,#ff0800 251px,#ff8c8c 257px)}.g1cd{background:linear-gradient(#3e003e,#660066 4px,#9e009e 14px,#ff00ff 39px,#d900ff 40px,#d900ff 45px,#0006ff 49px,#00c5ff 51px,#00f6ff 52px,#00ffff 53px,#00ffde 55px,#00ff05 63px,#01ff00 65px,#61ff00 100px,#e5ff00 184px,#fffd00 237px,#fff300 241px,#ffc000 245px,#ff0000 252px,#ff7878 257px)}.g1ce{background:linear-gradient(#100010,#100010 39px,#000000 42px,#240024 43px,#f400f4 47px,#cf00ff 48px,#0800ff 51px,#005eff 52px,#0091ff 53px,#003cff 54px,#00a4ff 56px,#00baff 57px,#00ebff 60px,#00ffff 63px,#00ffe8 120px,#00ffbd 154px,#00ff64 192px,#00ff05 202px,#c1ff00 225px,#efff00 233px,#fffd00 240px,#ffbc00 246px,#ff1400 252px,#ff0b0b 253px,#ff6666 257px)}.g1cf{background:linear-gradient(#0011ff,#0062ff 6px,#00adff 17px,#00fcff 40px,#00fcff 46px,#7f00ff 47px,#0800ff 49px,#00b8ff 51px,#00f0ff 52px,#00fffe 55px,#00ffca 59px,#00ff70 63px,#00ff0c 100px,#08ff00 119px,#b0ff00 191px,#ffff00 242px,#ffe500 246px,#ffc200 248px,#ff0000 255px,#ff1f1f 257px)}.g1d0{background:linear-gradient(#a800a8,#fe00fe 12px,#9500ff 39px,#2e00ff 40px,#3200ff 47px,#000fff 48px,#00c0ff 50px,#00f4ff 51px,#00fffd 52px,#00ffee 53px,#00ff75 56px,#00ff02 60px,#1bff00 61px,#54ff00 63px,#adff00 100px,#f9ff00 174px,#fffe00 235px,#fff300 241px,#ffd100 244px,#ff9600 247px,#ff0100 252px,#ff7676 257px)}.g1d1{background:linear-gradient(#050005,#060006 41px,#8c008c 43px,#ef00ef 45px,#de00ff 46px,#2b00ff 49px,#0029ff 50px,#008eff 51px,#00d9ff 52px,#00f2ff 53px,#00fffe 55px,#00ffcb 59px,#00ff71 63px,#00ff0d 100px,#00ff00 112px,#31ff00 140px,#daff00 210px,#fffd00 240px,#ffc300 246px,#ff0000 253px,#ff5b5b 257px)}.g1d2{background:linear-gradient(#170017,#170017 39px,#000000 41px,#1d001d 42px,#600060 43px,#f500f5 46px,#ce00ff 47px,#1200ff 50px,#00adff 52px,#00d3ff 53px,#00c7ff 54px,#00f9ff 56px,#00ffff 58px,#00ffd3 63px,#00ff89 100px,#00ff5d 134px,#00ff00 171px,#3fff00 192px,#c9ff00 219px,#fffe00 240px,#ffc400 246px,#ff0100 253px,#ff5a5a 257px)}.g1d3{background:linear-gradient(#0d000d,#0d000d 39px,#000000 41px,#d600d6 45px,#f700ff 46px,#0002ff 50px,#00c2ff 52px,#00e2ff 53px,#00ffff 56px,#00ffea 59px,#00ffa3 64px,#00ff4b 100px,#00ff36 120px,#00ff00 145px,#7fff00 192px,#d4ff00 215px,#ffff00 238px,#fff900 241px,#ffcc00 245px,#ff8a00 248px,#ff1300 252px,#ff0c0c 253px,#ff6767 257px)}.g1d4{background:linear-gradient(#020002,#020002 39px,#0e000e 41px,#940094 43px,#f700f7 45px,#d600ff 46px,#2300ff 49px,#0035ff 50px,#0098ff 51px,#00dfff 52px,#00fffe 54px,#00ffb2 58px,#00ff32 63px,#01ff00 81px,#36ff00 100px,#4cff00 121px,#d8ff00 190px,#fffe00 236px,#ffef00 241px,#ffc900 244px,#ff8b00 247px,#ff1300 251px,#ff0c0c 252px,#ff8282 257px)}.g1d5{background:linear-gradient(#030003,#000000 42px,#f900ff 47px,#000eff 51px,#0076ff 52px,#00a7ff 53px,#0069ff 54px,#00c5ff 56px,#00feff 61px,#00ffb4 140px,#00ff35 192px,#00ff00 198px,#a8ff00 219px,#e9ff00 231px,#fffd00 240px,#ffbe00 246px,#ff0707 253px,#ff6262 257px)}.g1d6{background:linear-gradient(#0c000c,#030003 41px,#890089 43px,#ec00ec 45px,#e000ff 46px,#2e00ff 49px,#0025ff 50px,#00d7ff 52px,#00ffff 55px,#00ffd5 59px,#00ff80 63px,#00ff1b 100px,#01ff00 122px,#d1ff00 208px,#fffe00 240px,#ffc900 246px,#ff0a00 253px,#ff1515 254px,#ff5252 257px)}.g1d7{background:linear-gradient(#9d009d,#d300d3 6px,#fc00ff 15px,#9f00ff 39px,#4e00ff 40px,#4800ff 47px,#0c00ff 48px,#00a8ff 50px,#00e8ff 51px,#00ffff 52px,#00fff8 53px,#00ff87 56px,#08ff00 61px,#41ff00 63px,#a2ff00 100px,#f9ff00 178px,#fffd00 235px,#ffee00 241px,#ffd800 243px,#ffa500 246px,#ff1600 251px,#ff0909 252px,#ff8080 257px)}.g1d8{background:linear-gradient(#190019,#190019 39px,#000000 40px,#000000 41px,#fe00ff 46px,#0600ff 50px,#00baff 52px,#00ddff 53px,#00d9ff 54px,#00f2ff 55px,#00ffff 57px,#00ffed 60px,#00ffc0 63px,#01ff00 155px,#68ff00 192px,#daff00 220px,#fffd00 240px,#ffc400 246px,#ff0400 253px,#ff5757 257px)}.g1d9{background:linear-gradient(#1e001e,#1e001e 39px,#000000 40px,#000000 41px,#7d007d 43px,#e000e0 45px,#ec00ff 46px,#3a00ff 49px,#0012ff 50px,#00ccff 52px,#00e9ff 53px,#00ffff 56px,#00ffee 59px,#00ffab 63px,#00ff49 100px,#01ff00 143px,#caff00 213px,#ffff00 240px,#ffd200 246px,#ff0404 254px,#ff4141 257px)}.g1da{background:linear-gradient(#7c007c,#bd00bd 8px,#fe00ff 22px,#c100ff 39px,#7600ff 40px,#7600ff 46px,#1300ff 48px,#0040ff 49px,#00a0ff 50px,#00e4ff 51px,#00ffff 52px,#00ffe7 54px,#00ff9f 56px,#07ff00 62px,#24ff00 63px,#8fff00 100px,#f7ff00 182px,#ffff00 234px,#fff400 241px,#ffd400 244px,#ff9c00 247px,#ff0c00 252px,#ff1313 253px,#ff6d6d 257px)}.g1db{background:linear-gradient(#2b002b,#530053 4px,#900090 15px,#ec00ec 39px,#d600ff 40px,#ca00ff 45px,#2200ff 48px,#0028ff 49px,#008dff 50px,#00d8ff 51px,#00fdff 52px,#00fffe 53px,#00ff9c 56px,#0bff00 62px,#28ff00 63px,#94ff00 100px,#f8ff00 181px,#fffb00 235px,#ffeb00 241px,#ffd300 243px,#ffa000 246px,#ff1100 251px,#ff0e0e 252px,#ff8484 257px)}.g1dc{background:linear-gradient(#090009,#120012 41px,#970097 43px,#fb00fb 45px,#d200ff 46px,#1f00ff 49px,#003bff 50px,#009dff 51px,#00e2ff 52px,#00fffe 55px,#00ffcc 59px,#00ff71 63px,#01ff00 100px,#49ff00 141px,#ceff00 199px,#fffe00 241px,#ffc100 247px,#ff0100 254px,#ff3c3c 257px)}.g1dd{background:linear-gradient(#000000,#000000 41px,#fc00ff 46px,#0400ff 50px,#0064ff 51px,#00bcff 52px,#00deff 53px,#00ffff 56px,#00fff2 59px,#00ffb4 63px,#00ff4e 100px,#00ff01 143px,#83ff00 192px,#ddff00 216px,#fffd00 239px,#ffef00 242px,#ffbb00 246px,#ff0606 253px,#ff6161 257px)}.g1de{background:linear-gradient(#00f3ff,#00f3ff 39px,#00d4ff 40px,#00d4ff 53px,#00ffff 56px,#00ffdd 60px,#00ffa3 63px,#00ff25 100px,#00ff00 118px,#b5ff00 195px,#ffff00 242px,#fff400 245px,#ffcf00 248px,#ff9000 251px,#ff0303 257px)}.g1df{background:linear-gradient(#220022,#210021 41px,#a700a7 43px,#f400ff 45px,#1000ff 49px,#00afff 51px,#00ecff 52px,#00fffe 54px,#00ffb8 58px,#00ff39 63px,#00ff00 80px,#42ff00 100px,#dcff00 185px,#ffff00 236px,#fff600 241px,#ffcb00 245px,#ff0606 253px,#ff6161 257px)}.g1e0{background:linear-gradient(#220022,#220022 39px,#000000 40px,#000000 41px,#110011 42px,#540054 43px,#e900e9 46px,#d900ff 47px,#1d00ff 50px,#003fff 51px,#00a0ff 52px,#00c9ff 53px,#00b8ff 54px,#00f3ff 56px,#00ffff 59px,#00ffde 63px,#00ff42 141px,#00ff00 166px,#4cff00 192px,#d7ff00 218px,#fffe00 238px,#fff500 241px,#ffb700 246px,#ff1400 252px,#ff0b0b 253px,#ff6666 257px)}.g1e1{background:linear-gradient(#9c009c,#cb00cb 5px,#fd00ff 15px,#a100ff 39px,#4e00ff 40px,#4600ff 47px,#0b00ff 48px,#00aaff 50px,#00e9ff 51px,#00ffff 52px,#00ffeb 54px,#00ff04 62px,#1aff00 63px,#8eff00 99px,#deff00 155px,#fdff00 189px,#ffff00 235px,#fff700 241px,#ffcf00 245px,#ff7a00 249px,#ff0300 253px,#ff5858 257px)}.g1e2{background:linear-gradient(#150015,#150015 39px,#000000 41px,#de00de 45px,#ee00ff 46px,#000fff 50px,#00caff 52px,#00e8ff 53px,#00fffe 56px,#00ffe7 59px,#00ff9d 63px,#00ff27 100px,#00ff00 122px,#dfff00 211px,#fffe00 238px,#fff100 242px,#ffc000 246px,#ff0400 253px,#ff5858 257px)}.g1e3{background:linear-gradient(#0f000f,#6c006c 18px,#ba00ba 39px,#ce00ce 40px,#ce00ce 43px,#da00da 44px,#f200ff 45px,#0e00ff 49px,#00b1ff 51px,#00edff 52px,#00ffff 54px,#00ffaf 59px,#00ff48 63px,#01ff00 84px,#3aff00 100px,#dbff00 186px,#fffd00 239px,#fff300 242px,#ffc600 246px,#ff0e00 253px,#ff1111 254px,#ff4e4e 257px)}.g1e4{background:linear-gradient(#110011,#110011 39px,#000000 41px,#170017 42px,#5a005a 43px,#ef00ef 46px,#d400ff 47px,#1800ff 50px,#0047ff 51px,#00a6ff 52px,#00ceff 53px,#00b3ff 54px,#00f1ff 56px,#00ffff 59px,#00ffe1 63px,#01ff00 165px,#50ff00 192px,#d8ff00 219px,#fffe00 239px,#fff300 242px,#ffc500 246px,#ff6800 250px,#ff0d00 253px,#ff1212 254px,#ff4f4f 257px)}.g1e5{background:linear-gradient(#550055,#9c009c 9px,#fd00ff 32px,#e700ff 39px,#ae00ff 40px,#ae00ff 45px,#9b00ff 46px,#2400ff 48px,#0025ff 49px,#00d7ff 51px,#00fcff 52px,#00fffe 53px,#00ff05 62px,#19ff00 63px,#96ff00 100px,#d7ff00 146px,#fdff00 186px,#fffa00 235px,#ffeb00 241px,#ffc700 244px,#ff8f00 247px,#ff0000 252px,#ff7777 257px)}.g1e6{background:linear-gradient(#110011,#110011 39px,#000000 42px,#f700ff 47px,#3a00ff 50px,#0012ff 51px,#0079ff 52px,#00a9ff 53px,#006fff 54px,#00c9ff 56px,#00f3ff 59px,#00ffff 62px,#00ff88 140px,#00ff00 191px,#c1ff00 217px,#f6ff00 230px,#fffc00 239px,#fff500 241px,#ffb700 246px,#ff0707 253px,#ff6262 257px)}.g1e7{background:linear-gradient(#290029,#290029 39px,#000000 40px,#000000 41px,#df00df 45px,#ee00ff 46px,#0010ff 50px,#00caff 52px,#00e8ff 53px,#00d3ff 54px,#00fdff 56px,#00ffff 57px,#00fff1 60px,#00ffc5 63px,#00ff55 100px,#00ff01 142px,#ccff00 213px,#ffff00 241px,#ffd100 247px,#ff9300 250px,#ff0000 255px,#ff1f1f 257px)}.g1e8{background:linear-gradient(#900090,#c500c5 6px,#fc00ff 18px,#ad00ff 39px,#3900ff 40px,#3900ff 46px,#2500ff 47px,#0023ff 48px,#00cdff 50px,#00f9ff 51px,#00fff9 52px,#00ffd1 54px,#00ff7b 56px,#00ff08 60px,#16ff00 61px,#51ff00 63px,#c6ff00 102px,#fdff00 163px,#fffb00 235px,#fff200 241px,#ffd500 244px,#ffa300 247px,#ff0505 253px,#ff6060 257px)}.g1e9{background:linear-gradient(#b200b2,#fe00fe 10px,#8a00ff 39px,#2900ff 40px,#2900ff 46px,#3800ff 47px,#0006ff 48px,#00baff 50px,#00f1ff 51px,#00fffe 52px,#00ffdc 54px,#00ff8d 56px,#01ff00 61px,#3dff00 63px,#b7ff00 101px,#fbff00 166px,#fffb00 235px,#fff000 241px,#ffd200 244px,#ff9e00 247px,#ff1400 252px,#ff0b0b 253px,#ff6565 257px)}.g1ea{background:linear-gradient(#030003,#000000 41px,#840084 43px,#e700e7 45px,#e500ff 46px,#3200ff 49px,#001eff 50px,#00d3ff 52px,#00feff 54px,#00fffc 55px,#00ffbb 59px,#00ff59 63px,#01ff00 87px,#34ff00 101px,#d6ff00 184px,#f9ff00 208px,#fff900 235px,#ffe400 241px,#ffcb00 243px,#ff9a00 246px,#ff1100 251px,#ff0e0e 252px,#ff8484 257px)}.g1eb{background:linear-gradient(#140014,#140014 39px,#000000 40px,#000000 42px,#f700ff 47px,#3b00ff 50px,#0011ff 51px,#0079ff 52px,#00a9ff 53px,#0066ff 54px,#00c3ff 56px,#00f0ff 59px,#00ffff 62px,#00ff8d 139px,#00ff00 192px,#84ff00 208px,#caff00 219px,#f5ff00 230px,#fffd00 239px,#ffe400 243px,#ffbc00 246px,#ff0200 253px,#ff5a5a 257px)}.g1ec{background:linear-gradient(#0f000f,#0f000f 4px,#620062 20px,#a800a8 39px,#be00be 40px,#be00be 43px,#ef00ff 45px,#0b00ff 49px,#00b4ff 51px,#00efff 52px,#00ffff 54px,#00ffa7 59px,#00ff3d 63px,#03ff00 80px,#4dff00 100px,#cdff00 169px,#f4ff00 199px,#ffff00 235px,#fff600 241px,#ffcf00 245px,#ff9500 248px,#ff0700 253px,#ff5555 257px)}.g1ed{background:linear-gradient(#090009,#000000 41px,#1f001f 42px,#620062 43px,#f700f7 46px,#cc00ff 47px,#0f00ff 50px,#00b0ff 52px,#00d5ff 53px,#00d1ff 54px,#00edff 55px,#00ffff 57px,#00fff2 60px,#00ffc7 63px,#00ff57 100px,#01ff00 143px,#85ff00 192px,#e3ff00 215px,#ffff00 236px,#fff300 241px,#ffc500 245px,#ff0909 253px,#ff6464 257px)}.g1ee{background:linear-gradient(#130013,#130013 39px,#000000 40px,#000000 42px,#fa00fa 47px,#8d00ff 49px,#0200ff 51px,#0067ff 52px,#009aff 53px,#0036ff 54px,#009eff 56px,#00b5ff 57px,#00f3ff 61px,#00ffff 64px,#00fff7 85px,#00ffb3 140px,#00ff33 192px,#00ff04 197px,#c8ff00 222px,#f7ff00 233px,#fffa00 241px,#ffc500 246px,#ff0f00 253px,#ff1010 254px,#ff4d4d 257px)}.g1ef{background:linear-gradient(#f300f3,#fc00ff 1px,#a100ff 16px,#4900ff 39px,#003eff 40px,#003eff 46px,#2700ff 47px,#001fff 48px,#00caff 50px,#00f9ff 51px,#00ffe1 54px,#00ff95 56px,#00ff08 61px,#33ff00 63px,#b6ff00 105px,#f9ff00 166px,#fffd00 238px,#fff400 242px,#ffc900 246px,#ff0909 254px,#ff4646 257px)}.g1f0{background:linear-gradient(#450045,#8c008c 9px,#ff00ff 36px,#f800ff 39px,#cf00ff 40px,#cf00ff 45px,#ac00ff 46px,#000aff 49px,#00c7ff 51px,#00f7ff 52px,#00ffff 53px,#00ffe9 55px,#00ff18 63px,#02ff00 70px,#70ff00 100px,#caff00 153px,#f9ff00 192px,#fffe00 234px,#fff200 241px,#ffd500 244px,#ffa200 247px,#ff0606 253px,#ff6161 257px)}.g1f1{background:linear-gradient(#090009,#000000 41px,#0f000f 42px,#520052 43px,#e700e7 46px,#dc00ff 47px,#1f00ff 50px,#003bff 51px,#009dff 52px,#00c6ff 53px,#00afff 54px,#00efff 56px,#00ffff 59px,#00ffe3 63px,#00ff86 100px,#00ff00 162px,#56ff00 192px,#dbff00 217px,#fffd00 238px,#fff400 241px,#ffb800 246px,#ff0505 253px,#ff6060 257px)}.g1f2{background:linear-gradient(#0f000f,#6e006e 15px,#ca00ca 39px,#e700e7 40px,#e700e7 44px,#ea00ff 45px,#0500ff 49px,#00bbff 51px,#00f2ff 52px,#00fffa 54px,#00ff8a 59px,#00ff19 63px,#01ff00 70px,#6fff00 100px,#cbff00 154px,#f9ff00 192px,#fffc00 235px,#ffed00 241px,#ffcc00 244px,#ff9600 247px,#ff0a00 252px,#ff1515 253px,#ff6f6f 257px)}.g1f3{background:linear-gradient(#000000,#000000 39px,#1a001a 40px,#1a001a 41px,#a000a0 43px,#fb00ff 45px,#1600ff 49px,#0049ff 50px,#00a8ff 51px,#00e8ff 52px,#00faff 53px,#00fff8 55px,#00ffc3 58px,#00ff47 63px,#00ff00 82px,#43ff00 100px,#c0ff00 165px,#f4ff00 202px,#ffff00 235px,#fff500 241px,#ffcb00 245px,#ff7700 249px,#ff0200 253px,#ff5a5a 257px)}.g1f4{background:linear-gradient(#1a001a,#1a001a 39px,#000000 40px,#000000 42px,#420042 43px,#d600d6 46px,#ec00ff 47px,#3000ff 50px,#0022ff 51px,#0088ff 52px,#00b5ff 53px,#0088ff 54px,#00d9ff 56px,#00ffff 61px,#00ff67 141px,#01ff00 180px,#26ff00 192px,#88ff00 205px,#d6ff00 219px,#f9ff00 230px,#fffb00 239px,#fff500 241px,#ffb800 246px,#ff0404 253px,#ff5f5f 257px)}.g1f5{background:linear-gradient(#380038,#380038 39px,#000000 40px,#000000 43px,#0b000b 44px,#e500e5 48px,#dd00ff 49px,#0d00ff 52px,#0025ff 53px,#690069 54px,#b400b4 56px,#fe00ff 60px,#c500ff 63px,#6b00ff 100px,#5100ff 120px,#0002ff 132px,#00beff 151px,#00eeff 159px,#00ffff 166px,#00fff4 174px,#00ffc8 182px,#00ff6b 192px,#0eff00 199px,#5cff00 207px,#c0ff00 221px,#f2ff00 232px,#fffc00 241px,#ffbb00 247px,#ff0202 254px,#ff4040 257px)}.g1f6{background:linear-gradient(#640064,#a500a5 8px,#fe00ff 28px,#d900ff 39px,#8500ff 40px,#8100ff 46px,#0a00ff 48px,#00abff 50px,#00eaff 51px,#00ffff 52px,#00fff7 53px,#00ff88 56px,#07ff00 61px,#42ff00 63px,#4aff00 65px,#acff00 95px,#c7ff00 110px,#fcff00 166px,#fff600 235px,#ffe700 241px,#ffc300 244px,#ff8a00 247px,#ff0404 252px,#ff7b7b 257px)}.g1f7{background:linear-gradient(#2d002d,#840084 12px,#ef00ef 38px,#dd00ff 45px,#3400ff 48px,#000bff 49px,#00c8ff 51px,#00f7ff 52px,#00ffff 53px,#00ffdd 55px,#02ff00 63px,#87ff00 100px,#d6ff00 151px,#fdff00 191px,#fff900 235px,#ffea00 241px,#ffc600 244px,#ff8e00 247px,#ff0100 252px,#ff7777 257px)}.g1f8{background:linear-gradient(#010001,#000000 41px,#d600d6 45px,#f700ff 46px,#0002ff 50px,#00c2ff 52px,#00e2ff 53px,#00ffff 56px,#00ffef 59px,#00ffad 63px,#00ff32 100px,#01ff00 125px,#e1ff00 211px,#fffd00 238px,#ffed00 242px,#ffbc00 246px,#ff0100 253px,#ff5a5a 257px)}.g1f9{background:linear-gradient(#940094,#c900c9 6px,#fc00ff 17px,#a900ff 39px,#6300ff 40px,#6300ff 46px,#5300ff 47px,#1700ff 48px,#0038ff 49px,#009aff 50px,#00e1ff 51px,#00feff 52px,#00fffc 53px,#00ffdb 55px,#05ff00 63px,#8aff00 100px,#d8ff00 151px,#feff00 192px,#fffe00 235px,#fff600 241px,#ffce00 245px,#ff9500 248px,#ff0700 253px,#ff5555 257px)}.g1fa{background:linear-gradient(#160016,#160016 39px,#010001 41px,#870087 43px,#ea00ea 45px,#e200ff 46px,#3000ff 49px,#0022ff 50px,#0088ff 51px,#00d5ff 52px,#00ffff 55px,#00ffd4 59px,#00ff7c 63px,#00ff00 97px,#e1ff00 201px,#fffc00 238px,#fff500 241px,#ffbc00 246px,#ff0100 253px,#ff5a5a 257px)}.g1fb{background:linear-gradient(#130013,#130013 39px,#000000 41px,#0b000b 42px,#4e004e 43px,#e300e3 46px,#e000ff 47px,#2400ff 50px,#0035ff 51px,#0097ff 52px,#00c2ff 53px,#0093ff 54px,#00e0ff 56px,#00ffff 60px,#00ff5d 140px,#01ff00 176px,#33ff00 192px,#caff00 217px,#ffff00 238px,#fffa00 241px,#ffc700 246px,#ff8600 249px,#ff1300 253px,#ff0d0d 254px,#ff4a4a 257px)}.g1fc{background:linear-gradient(#0d000d,#0d000d 39px,#000000 41px,#a400a4 44px,#f700ff 46px,#0001ff 50px,#00c1ff 52px,#00e2ff 53px,#00daff 54px,#00f3ff 55px,#00ffff 57px,#00ffec 60px,#00ffbc 63px,#00ff47 100px,#00ff00 135px,#90ff00 191px,#deff00 214px,#fffe00 239px,#fff400 242px,#ffc900 246px,#ff0909 254px,#ff4747 257px)}.g1fd{background:linear-gradient(#000000,#000000 41px,#860086 43px,#e900e9 45px,#e300ff 46px,#3100ff 49px,#0020ff 50px,#00d4ff 52px,#00ffff 54px,#00ffcc 58px,#00ff55 63px,#00ff00 86px,#35ff00 100px,#d1ff00 180px,#fbff00 210px,#fff900 235px,#ffe500 241px,#ffcc00 243px,#ff9a00 246px,#ff1200 251px,#ff0d0d 252px,#ff8383 257px)}.g1fe{background:linear-gradient(#160016,#160016 39px,#000000 41px,#850085 43px,#e800e8 45px,#e500ff 46px,#3200ff 49px,#001eff 50px,#0085ff 51px,#00d3ff 52px,#00eeff 53px,#00fffe 55px,#00ffc8 59px,#00ff6a 63px,#00ff00 92px,#27ff00 104px,#e3ff00 197px,#fffd00 235px,#ffed00 241px,#ffc900 244px,#ff9300 247px,#ff0600 252px,#ff7272 257px)}.g1ff{background:linear-gradient(#010001,#050005 41px,#8a008a 43px,#ee00ee 45px,#df00ff 46px,#2c00ff 49px,#0027ff 50px,#008cff 51px,#00d8ff 52px,#00fffe 55px,#00ffcb 59px,#00ff6f 63px,#03ff00 94px,#deff00 196px,#ffff00 235px,#fff400 241px,#ffc900 245px,#ff8d00 248px,#ff0303 253px,#ff5e5e 257px)}.g200{background:linear-gradient(#750075,#b600b6 8px,#fd00ff 24px,#c800ff 39px,#7800ff 40px,#7800ff 46px,#0d00ff 48px,#0047ff 49px,#00a7ff 50px,#00e8ff 51px,#00ffff 52px,#00ffe5 54px,#00ff9c 56px,#0dff00 62px,#2bff00 63px,#8dff00 91px,#c2ff00 118px,#fbff00 173px,#fffb00 235px,#ffef00 241px,#ffcf00 244px,#ff9a00 247px,#ff0f00 252px,#ff1010 253px,#ff6a6a 257px)}.g201{background:linear-gradient(#a200a2,#d700d7 6px,#fc00ff 14px,#9b00ff 39px,#2500ff 40px,#2300ff 47px,#0026ff 48px,#00cfff 50px,#00faff 51px,#00fff8 52px,#00ffe3 54px,#00ff98 56px,#00ff0c 61px,#12ff00 62px,#30ff00 63px,#74ff00 82px,#acff00 100px,#c0ff00 114px,#fbff00 171px,#fffe00 238px,#fff700 242px,#ffcf00 246px,#ff7800 250px,#ff0100 254px,#ff3d3d 257px)}.g202{background:linear-gradient(#1e001e,#1e001e 39px,#000000 40px,#000000 41px,#260026 42px,#690069 43px,#fd00fd 46px,#0900ff 50px,#00b7ff 52px,#00dbff 53px,#00ffff 56px,#00fff2 59px,#00ffb2 63px,#00ff39 100px,#00ff00 128px,#9eff00 192px,#e3ff00 211px,#fffd00 236px,#ffef00 241px,#ffbd00 245px,#ff7d00 248px,#ff0a00 252px,#ff1515 253px,#ff6f6f 257px)}.g203{background:linear-gradient(#150015,#150015 39px,#000000 41px,#230023 42px,#660066 43px,#fa00fa 46px,#0c00ff 50px,#00b4ff 52px,#00d8ff 53px,#00c7ff 54px,#00f9ff 56px,#00ffff 58px,#00ffd1 63px,#00ff66 100px,#01ff00 149px,#76ff00 192px,#e1ff00 218px,#fffc00 240px,#ffc700 246px,#ff6c00 250px,#ff1200 253px,#ff0d0d 254px,#ff4b4b 257px)}.g204{background:linear-gradient(#b500b5,#fd00ff 10px,#8800ff 39px,#0c00ff 40px,#0c00ff 46px,#1d00ff 47px,#002fff 48px,#00d4ff 50px,#00fcff 51px,#00fff6 52px,#00ffcf 54px,#00ff78 56px,#00ff05 60px,#19ff00 61px,#54ff00 63px,#c7ff00 101px,#fbff00 157px,#fffc00 235px,#fff400 241px,#ffcc00 245px,#ff7900 249px,#ff0300 253px,#ff5959 257px)}.g205{background:linear-gradient(#130013,#130013 39px,#000000 41px,#850085 43px,#e800e8 45px,#e500ff 46px,#3200ff 49px,#001eff 50px,#00d3ff 52px,#00eeff 53px,#00ffff 55px,#00ffd3 59px,#00ff7b 63px,#00ff00 97px,#e0ff00 200px,#ffff00 235px,#fff300 241px,#ffd400 244px,#ffa100 247px,#ff0707 253px,#ff6262 257px)}.g206{background:linear-gradient(#000000,#000000 41px,#230023 42px,#660066 43px,#fa00fa 46px,#c800ff 47px,#0c00ff 50px,#00b4ff 52px,#00d8ff 53px,#00ffff 56px,#00ffee 59px,#00ffac 63px,#00ff30 100px,#01ff00 124px,#a3ff00 191px,#edff00 213px,#fffd00 235px,#ffe800 241px,#ffcf00 243px,#ff9f00 246px,#ff0808 252px,#ff7f7f 257px)}.g207{background:linear-gradient(#4b004b,#9d009d 11px,#fe00fe 34px,#f100ff 39px,#8c00ff 40px,#8c00ff 45px,#6f00ff 46px,#3400ff 47px,#000cff 48px,#00beff 50px,#00f4ff 51px,#00fffd 52px,#00ffde 54px,#00ff90 56px,#00ff02 61px,#1cff00 62px,#39ff00 63px,#80ff00 83px,#c5ff00 113px,#fdff00 172px,#fffc00 235px,#fff300 241px,#ffd700 244px,#ff8e00 248px,#ff0101 253px,#ff5d5d 257px)}.g208{background:linear-gradient(#0f000f,#0f000f 5px,#a100a1 39px,#c100c1 40px,#c100c1 43px,#e600e6 44px,#e600ff 45px,#0200ff 49px,#00bfff 51px,#00f4ff 52px,#00fffb 54px,#00ff8a 59px,#00ff1a 63px,#01ff00 70px,#6fff00 100px,#d1ff00 158px,#f8ff00 191px,#fffd00 234px,#ffef00 241px,#ffcf00 244px,#ff9a00 247px,#ff1000 252px,#ff1010 253px,#ff6a6a 257px)}.g209{background:linear-gradient(#100010,#100010 39px,#000000 42px,#d300d3 46px,#f000ff 47px,#3400ff 50px,#001cff 51px,#0083ff 52px,#00b1ff 53px,#006cff 54px,#00c7ff 56px,#00f2ff 59px,#00ffff 62px,#00ff89 138px,#00ff00 190px,#c7ff00 219px,#f5ff00 231px,#fffa00 241px,#ffc600 246px,#ff1000 253px,#ff0f0f 254px,#ff4c4c 257px)}.g20a{background:linear-gradient(#160016,#160016 39px,#000000 41px,#dc00dc 45px,#f000ff 46px,#000cff 50px,#00c8ff 52px,#00e7ff 53px,#00ffff 55px,#00ffd9 59px,#00ff85 63px,#01ff00 100px,#eaff00 206px,#fffd00 235px,#ffeb00 241px,#ffc700 244px,#ff8f00 247px,#ff0200 252px,#ff7676 257px)}.g20b{background:linear-gradient(#aa00aa,#d900d9 5px,#fd00ff 12px,#9200ff 39px,#2f00ff 40px,#3600ff 47px,#0009ff 48px,#00bcff 50px,#00f3ff 51px,#00fffd 52px,#00ffd4 54px,#00ff7f 56px,#00ff0d 60px,#11ff00 61px,#4cff00 63px,#50ff00 64px,#aeff00 93px,#ccff00 109px,#fdff00 165px,#fff900 234px,#ffec00 241px,#ffd800 243px,#ff9400 247px,#ff0800 252px,#ff7171 257px)}.g20c{background:linear-gradient(#370037,#660066 5px,#a100a1 16px,#f900f9 39px,#f000ff 45px,#0c00ff 49px,#00b3ff 51px,#00eeff 52px,#00ffff 54px,#00ffc1 58px,#00ff43 63px,#00ff00 81px,#47ff00 100px,#cbff00 170px,#f3ff00 200px,#fffe00 237px,#fff100 242px,#ffc300 246px,#ff8100 249px,#ff0c00 253px,#ff1313 254px,#ff5050 257px)}.g20d{background:linear-gradient(#070007,#000000 41px,#1b001b 42px,#5e005e 43px,#f300f3 46px,#d000ff 47px,#1300ff 50px,#00abff 52px,#00d2ff 53px,#00ceff 54px,#00fbff 56px,#00ffff 57px,#00fff4 60px,#00ffcb 63px,#00ff5c 100px,#00ff00 145px,#80ff00 192px,#e8ff00 217px,#fffd00 237px,#fff100 241px,#ffc100 245px,#ff8200 248px,#ff1000 252px,#ff0f0f 253px,#ff6a6a 257px)}.g20e{background:linear-gradient(#7d007d,#b900b9 7px,#fd00ff 22px,#bf00ff 39px,#7c00ff 40px,#7c00ff 46px,#1a00ff 48px,#0034ff 49px,#0096ff 50px,#00deff 51px,#00feff 52px,#00fffc 53px,#08ff00 62px,#26ff00 63px,#72ff00 84px,#b8ff00 113px,#f9ff00 171px,#fff800 235px,#ffe900 241px,#ffc600 244px,#ff8e00 247px,#ff0100 252px,#ff7777 257px)}.g20f{background:linear-gradient(#120012,#120012 39px,#000000 41px,#fe00fe 46px,#0800ff 50px,#00b8ff 52px,#00dbff 53px,#00ffff 57px,#00ffea 60px,#00ffb9 63px,#00ff42 100px,#00ff00 133px,#91ff00 190px,#e3ff00 213px,#fffd00 237px,#fff300 241px,#ffc500 245px,#ff0909 253px,#ff6363 257px)}.g210{background:linear-gradient(#0b000b,#000000 42px,#fb00fb 47px,#8c00ff 49px,#0200ff 51px,#0068ff 52px,#009aff 53px,#0040ff 54px,#00a7ff 56px,#00ecff 60px,#00ffff 63px,#00fff1 88px,#00ffab 140px,#00ff59 176px,#00ff29 192px,#00ff03 196px,#c3ff00 220px,#eeff00 229px,#fffb00 240px,#ffbf00 246px,#ff0500 253px,#ff5757 257px)}.g211{background:linear-gradient(#080008,#070007 41px,#8c008c 43px,#f000f0 45px,#dd00ff 46px,#2a00ff 49px,#002aff 50px,#008fff 51px,#00daff 52px,#00ffff 54px,#00ffcc 58px,#00ff55 63px,#00ff00 86px,#35ff00 100px,#d6ff00 183px,#f8ff00 208px,#fffd00 234px,#ffed00 241px,#ffd700 243px,#ff9300 247px,#ff0600 252px,#ff7272 257px)}.g212{background:linear-gradient(#080008,#080008 39px,#1e001e 41px,#a400a4 43px,#f700ff 45px,#1300ff 49px,#00acff 51px,#00eaff 52px,#00ffff 54px,#00ffc2 58px,#00ff45 63px,#02ff00 82px,#45ff00 100px,#cdff00 172px,#f5ff00 203px,#ffff00 235px,#fff600 241px,#ffcd00 245px,#ff9300 248px,#ff0500 253px,#ff5757 257px)}.g213{background:linear-gradient(#110011,#110011 39px,#000000 42px,#cf00cf 46px,#f300ff 47px,#3700ff 50px,#0017ff 51px,#007eff 52px,#00adff 53px,#006bff 54px,#00c6ff 56px,#00f1ff 59px,#00ffff 62px,#00ff87 140px,#01ff00 191px,#c9ff00 219px,#f4ff00 230px,#fffb00 240px,#ffc100 246px,#ff0800 253px,#ff5454 257px)}.g214{background:linear-gradient(#0c000c,#000000 42px,#160016 43px,#e600e6 47px,#dc00ff 48px,#1600ff 51px,#0049ff 52px,#007fff 53px,#1900ff 54px,#0014ff 55px,#004dff 56px,#0084ff 58px,#00e7ff 63px,#00ffff 89px,#00ffe9 139px,#00ffae 177px,#00ff89 192px,#00ff05 205px,#bfff00 226px,#f6ff00 236px,#fffe00 241px,#ffc700 247px,#ff8600 250px,#ff1000 254px,#ff0f0f 255px,#ff2e2e 257px)}.g215{background:linear-gradient(#150015,#150015 39px,#080008 41px,#8e008e 43px,#f100f1 45px,#db00ff 46px,#2900ff 49px,#002dff 50px,#0091ff 51px,#00dbff 52px,#00fffe 55px,#00ffc9 59px,#00ff6b 63px,#03ff00 93px,#1eff00 100px,#e3ff00 198px,#fffc00 238px,#fff600 241px,#ffbd00 246px,#ff0300 253px,#ff5858 257px)}.g216{background:linear-gradient(#290029,#580058 5px,#930093 16px,#eb00eb 39px,#f800ff 40px,#f800ff 44px,#ea00ff 45px,#0600ff 49px,#00baff 51px,#00f2ff 52px,#00ffff 54px,#00ffcc 58px,#00ff55 63px,#00ff00 86px,#35ff00 100px,#dbff00 186px,#fffd00 241px,#ffc200 247px,#ff7f00 250px,#ff0800 254px,#ff3636 257px)}.g217{background:linear-gradient(#330033,#330033 39px,#000000 40px,#000000 42px,#1d001d 43px,#ed00ed 47px,#d500ff 48px,#0f00ff 51px,#0054ff 52px,#0088ff 53px,#0025ff 54px,#0091ff 56px,#00d1ff 59px,#00f7ff 62px,#00feff 66px,#00fffb 85px,#00ffbb 142px,#00ff43 192px,#00ff06 198px,#c6ff00 221px,#f6ff00 231px,#fffc00 239px,#ffb600 246px,#ff0808 253px,#ff6363 257px)}.g218{background:linear-gradient(#120012,#150015 41px,#9b009b 43px,#fe00fe 45px,#1c00ff 49px,#0041ff 50px,#00a1ff 51px,#00e5ff 52px,#00fffe 55px,#00ffcb 59px,#00ff6f 63px,#02ff00 94px,#d6ff00 192px,#fffe00 240px,#ffd200 246px,#ff7d00 250px,#ff0600 254px,#ff3838 257px)}.g219{background:linear-gradient(#d000ff,#a100ff 5px,#6b00ff 15px,#0f00ff 39px,#00c8ff 40px,#00c8ff 46px,#000cff 47px,#00b4ff 49px,#00eeff 50px,#00fffe 51px,#00ffad 54px,#00ff48 56px,#11ff00 59px,#83ff00 63px,#e2ff00 100px,#feff00 145px,#ffea00 192px,#fff600 240px,#ffbd00 246px,#ff0300 253px,#ff5959 257px)}.g21a{background:linear-gradient(#140014,#140014 39px,#000000 41px,#a500a5 44px,#f600ff 46px,#0002ff 50px,#00c2ff 52px,#00f3ff 54px,#00fffc 56px,#00ffdf 59px,#00ff8f 63px,#00ff00 106px,#edff00 209px,#fffc00 235px,#ffe900 241px,#ffc300 244px,#ff8a00 247px,#ff0505 252px,#ff7c7c 257px)}.g21b{background:linear-gradient(#0c000c,#0c000c 39px,#200020 41px,#a600a6 43px,#f500ff 45px,#1100ff 49px,#00aeff 51px,#00ecff 52px,#00ffff 54px,#00ffc6 58px,#00ff4c 63px,#03ff00 84px,#3fff00 100px,#ddff00 184px,#fffc00 239px,#fff200 242px,#ffc500 246px,#ff0f00 253px,#ff1010 254px,#ff4d4d 257px)}.g21c{background:linear-gradient(#a900a9,#ff00ff 12px,#9300ff 39px,#4f00ff 40px,#5500ff 47px,#1900ff 48px,#0035ff 49px,#0098ff 50px,#00dfff 51px,#00feff 52px,#00fffc 53px,#00ffd8 55px,#0cff00 63px,#8fff00 100px,#b4ff00 123px,#f9ff00 180px,#fffd00 235px,#fff300 241px,#ffc900 245px,#ff8d00 248px,#ff0202 253px,#ff5e5e 257px)}.g21d{background:linear-gradient(#330033,#330033 39px,#000000 40px,#000000 41px,#a400a4 44px,#f700ff 46px,#0002ff 50px,#00c1ff 52px,#00e2ff 53px,#00ffff 56px,#00ffeb 59px,#00ffa5 63px,#00ff27 100px,#00ff00 119px,#e4ff00 210px,#fffd00 237px,#fff200 241px,#ffc400 245px,#ff8600 248px,#ff1500 252px,#ff0a0a 253px,#ff6565 257px)}.g21e{background:linear-gradient(#0e000e,#020002 42px,#450045 43px,#d900d9 46px,#e900ff 47px,#2d00ff 50px,#0027ff 51px,#008cff 52px,#00b9ff 53px,#0097ff 54px,#00e2ff 56px,#00ffff 60px,#00ffa0 100px,#00ff57 141px,#00ff00 174px,#37ff00 192px,#d0ff00 216px,#f3ff00 226px,#fffe00 237px,#fff200 241px,#ffc200 245px,#ff8400 248px,#ff1200 252px,#ff0d0d 253px,#ff6767 257px)}.g21f{background:linear-gradient(#0b000b,#000000 41px,#1f001f 42px,#620062 43px,#f700f7 46px,#cb00ff 47px,#0f00ff 50px,#00b0ff 52px,#00d6ff 53px,#00d3ff 54px,#00fdff 56px,#00ffff 57px,#00fff1 60px,#00ffc5 63px,#00ff53 100px,#02ff00 142px,#88ff00 192px,#e7ff00 216px,#fffd00 237px,#fff200 241px,#ffc300 245px,#ff8500 248px,#ff1300 252px,#ff0c0c 253px,#ff6666 257px)}.g220{background:linear-gradient(#ba00ba,#fd00ff 9px,#8200ff 39px,#1800ff 40px,#1800ff 46px,#2f00ff 47px,#0014ff 48px,#00c4ff 50px,#00f6ff 51px,#00fffc 52px,#00ffdb 54px,#00ff8a 56px,#04ff00 61px,#40ff00 63px,#bcff00 103px,#faff00 163px,#fffc00 235px,#fff300 241px,#ffca00 245px,#ff8f00 248px,#ff0101 253px,#ff5c5c 257px)}.g221{background:linear-gradient(#160016,#160016 39px,#000000 40px,#000000 42px,#fd00ff 47px,#0007ff 51px,#0070ff 52px,#00a1ff 53px,#0065ff 54px,#00c2ff 56px,#00efff 59px,#00ffff 62px,#00ff8e 139px,#00ff02 192px,#88ff00 208px,#cfff00 219px,#f6ff00 229px,#fffa00 239px,#fff200 241px,#ffb000 246px,#ff1000 252px,#ff1010 253px,#ff6a6a 257px)}.g222{background:linear-gradient(#400040,#6f006f 5px,#a500a5 15px,#fd00ff 39px,#e100ff 40px,#e100ff 45px,#b900ff 46px,#0600ff 49px,#00baff 51px,#00f2ff 52px,#00fffc 54px,#00ff92 59px,#00ff23 63px,#03ff00 73px,#66ff00 100px,#caff00 157px,#f5ff00 190px,#fffd00 235px,#fff000 241px,#ffd100 244px,#ff9d00 247px,#ff1300 252px,#ff0c0c 253px,#ff6767 257px)}.g223{background:linear-gradient(#ae00ae,#ff00ff 11px,#8f00ff 39px,#3400ff 40px,#3e00ff 47px,#0300ff 48px,#00b3ff 50px,#00eeff 51px,#00ffff 52px,#00ffe5 54px,#00ff9c 56px,#0cff00 62px,#2aff00 63px,#4fff00 73px,#b5ff00 109px,#f8ff00 168px,#fffd00 235px,#fff400 241px,#ffca00 245px,#ff7600 249px,#ff0000 253px,#ff5c5c 257px)}.g224{background:linear-gradient(#200020,#200020 39px,#000000 40px,#000000 42px,#f900ff 47px,#000eff 51px,#0076ff 52px,#00a6ff 53px,#003cff 54px,#00a4ff 56px,#00baff 57px,#00ebff 60px,#00ffff 63px,#00fff1 89px,#00ffae 140px,#00ff33 190px,#00ff00 197px,#c6ff00 223px,#ffff00 240px,#ffd400 246px,#ff7f00 250px,#ff0900 254px,#ff3535 257px)}.g225{background:linear-gradient(#160016,#160016 39px,#000000 41px,#7e007e 43px,#e100e1 45px,#ec00ff 46px,#3900ff 49px,#0013ff 50px,#00ccff 52px,#00ffff 54px,#00ffc6 58px,#00ff4b 63px,#00ff00 83px,#40ff00 100px,#c6ff00 170px,#fcff00 207px,#fff700 231px,#ffd300 241px,#ff7d00 246px,#ff0d00 250px,#ff1212 251px,#ffa0a0 257px)}.g226{background:linear-gradient(#590059,#ab00ab 11px,#fd00ff 31px,#e300ff 39px,#7c00ff 40px,#7c00ff 45px,#6d00ff 46px,#3200ff 47px,#000fff 48px,#00c0ff 50px,#00f4ff 51px,#00fffd 52px,#00ffed 54px,#00ff06 62px,#18ff00 63px,#99ff00 100px,#e1ff00 151px,#feff00 186px,#fffc00 241px,#ffbf00 247px,#ff7b00 250px,#ff0400 254px,#ff3a3a 257px)}.g227{background:linear-gradient(#160016,#1e001e 41px,#a300a3 43px,#f700ff 45px,#1300ff 49px,#00abff 51px,#00eaff 52px,#00fffa 54px,#00ff16 63px,#00ff00 69px,#72ff00 100px,#cbff00 153px,#faff00 193px,#fff800 235px,#ffe400 241px,#ffcc00 243px,#ff9b00 246px,#ff1300 251px,#ff0c0c 252px,#ff8383 257px)}.g228{background:linear-gradient(#260026,#260026 39px,#180018 41px,#9e009e 43px,#fd00ff 45px,#1900ff 49px,#0045ff 50px,#00a5ff 51px,#00e7ff 52px,#00fffb 55px,#00ffbb 59px,#00ff58 63px,#02ff00 87px,#32ff00 100px,#ddff00 188px,#fffc00 239px,#fff200 242px,#ffc600 246px,#ff1000 253px,#ff0f0f 254px,#ff4c4c 257px)}.g229{background:linear-gradient(#000000,#000000 42px,#0c000c 43px,#dd00dd 47px,#e600ff 48px,#2000ff 51px,#003bff 52px,#0072ff 53px,#1f00ff 54px,#000aff 55px,#0044ff 56px,#0060ff 57px,#00e2ff 63px,#00f3ff 74px,#00fff3 130px,#00ffbd 173px,#00ff91 192px,#00ff08 205px,#c5ff00 226px,#faff00 236px,#fffc00 241px,#ffbb00 247px,#ff0303 254px,#ff4040 257px)}.g22a{background:linear-gradient(#9c009c,#d800d8 7px,#fd00ff 15px,#a000ff 39px,#5300ff 40px,#4b00ff 47px,#1000ff 48px,#00e6ff 51px,#00ffff 52px,#00ffeb 54px,#00ff02 62px,#1cff00 63px,#9cff00 100px,#c3ff00 126px,#fbff00 178px,#fffd00 235px,#fff200 241px,#ffd500 244px,#ff8b00 248px,#ff0505 253px,#ff6060 257px)}.g22b{background:linear-gradient(#140014,#140014 39px,#000000 40px,#000000 42px,#d100d1 46px,#f100ff 47px,#3500ff 50px,#001aff 51px,#0081ff 52px,#00afff 53px,#0083ff 54px,#00d7ff 56px,#00ffff 61px,#00ff6c 141px,#01ff00 182px,#20ff00 192px,#9bff00 208px,#d3ff00 218px,#f6ff00 228px,#fffa00 239px,#fff200 241px,#ffb100 246px,#ff1100 252px,#ff0e0e 253px,#ff6969 257px)}.g22c{background:linear-gradient(#180018,#180018 39px,#000000 41px,#fb00ff 46px,#0300ff 50px,#00bdff 52px,#00dfff 53px,#00ffff 56px,#00fff1 59px,#00ffb1 63px,#00ff37 100px,#00ff00 127px,#a0ff00 192px,#e6ff00 213px,#fffd00 237px,#fff300 241px,#ffc600 245px,#ff0707 253px,#ff6262 257px)}.g22d{background:linear-gradient(#000000,#000000 41px,#0b000b 42px,#4d004d 43px,#e200e2 46px,#e000ff 47px,#2400ff 50px,#0034ff 51px,#0097ff 52px,#00c2ff 53px,#00bdff 54px,#00f5ff 56px,#00ffff 58px,#00ffda 63px,#00ff74 100px,#01ff00 155px,#68ff00 192px,#e1ff00 215px,#fffa00 237px,#ffe900 241px,#ffb100 245px,#ff0707 252px,#ff7e7e 257px)}.g22e{background:linear-gradient(#000000,#000000 42px,#f800ff 47px,#000fff 51px,#0077ff 52px,#00a7ff 53px,#0082ff 54px,#00d5ff 56px,#00feff 60px,#00ff6e 141px,#00ff01 182px,#1eff00 192px,#82ff00 204px,#d8ff00 218px,#fbff00 229px,#fff900 238px,#ffeb00 241px,#ffa300 246px,#ff0202 252px,#ff7a7a 257px)}.g22f{background:linear-gradient(#070007,#000000 41px,#d800d8 45px,#f500ff 46px,#0005ff 50px,#00c4ff 52px,#00e4ff 53px,#00ffff 56px,#00ffed 59px,#00ffa8 63px,#00ff2a 100px,#00ff00 121px,#e1ff00 210px,#fffe00 237px,#fff500 241px,#ffbb00 246px,#ff0000 253px,#ff5b5b 257px)}.g230{background:linear-gradient(#920092,#c100c1 5px,#fe00ff 17px,#ab00ff 39px,#4400ff 40px,#4400ff 46px,#3200ff 47px,#000fff 48px,#00c0ff 50px,#00f4ff 51px,#00fffd 52px,#00ffdb 54px,#00ff8b 56px,#03ff00 61px,#3eff00 63px,#bbff00 103px,#f9ff00 162px,#fffc00 235px,#fff300 241px,#ffd600 244px,#ff8c00 248px,#ff0404 253px,#ff5f5f 257px)}.g231{background:linear-gradient(#1f001f,#6b006b 10px,#e000e0 39px,#fd00ff 40px,#fd00ff 44px,#e500ff 45px,#b300ff 46px,#0100ff 49px,#00c0ff 51px,#00f4ff 52px,#00fff8 54px,#00ff10 63px,#03ff00 68px,#78ff00 100px,#ccff00 151px,#fbff00 192px,#fffb00 235px,#ffec00 241px,#ffca00 244px,#ff9300 247px,#ff0700 252px,#ff7171 257px)}.g232{background:linear-gradient(#190019,#650065 10px,#da00da 39px,#ff00ff 40px,#ff00ff 44px,#af00ff 46px,#0005ff 49px,#00c4ff 51px,#00f6ff 52px,#00ffff 53px,#00ffec 55px,#00ff21 63px,#01ff00 72px,#68ff00 100px,#cbff00 157px,#f7ff00 192px,#fffe00 235px,#fff400 241px,#ffca00 245px,#ff8f00 248px,#ff0101 253px,#ff5c5c 257px)}.g233{background:linear-gradient(#050005,#000000 41px,#1a001a 42px,#5d005d 43px,#f200f2 46px,#d100ff 47px,#1400ff 50px,#004cff 51px,#00aaff 52px,#00d1ff 53px,#00cbff 54px,#00faff 56px,#00ffff 58px,#00ffcd 63px,#00ff60 100px,#02ff00 147px,#7cff00 192px,#e7ff00 217px,#fffd00 237px,#fff100 241px,#ffc100 245px,#ff8300 248px,#ff1100 252px,#ff0e0e 253px,#ff6969 257px)}.g234{background:linear-gradient(#3e003e,#9a009a 13px,#fe00ff 39px,#e800ff 40px,#e800ff 45px,#bf00ff 46px,#0c00ff 49px,#00b4ff 51px,#00eeff 52px,#00ffff 54px,#00ffba 58px,#00ff3a 63px,#02ff00 79px,#51ff00 100px,#ccff00 167px,#f5ff00 199px,#fffe00 236px,#fff500 241px,#ffcc00 245px,#ff7800 249px,#ff0200 253px,#ff5959 257px)}.g235{background:linear-gradient(#b800b8,#ff00ff 9px,#8500ff 39px,#3800ff 40px,#3800ff 46px,#4d00ff 47px,#1100ff 48px,#00e5ff 51px,#00ffff 52px,#00fff3 54px,#05ff00 63px,#8aff00 100px,#d5ff00 149px,#feff00 192px,#ffff00 235px,#fff800 241px,#ffc600 246px,#ff1000 253px,#ff0f0f 254px,#ff4d4d 257px)}.g236{background:linear-gradient(#2d002d,#630063 6px,#a500a5 19px,#ef00ef 38px,#f100ff 44px,#e800ff 45px,#0300ff 49px,#00bdff 51px,#00f3ff 52px,#00fffd 55px,#00ffc0 59px,#00ff5f 63px,#02ff00 89px,#2bff00 100px,#d9ff00 188px,#fffe00 241px,#ffcb00 247px,#ff8b00 250px,#ff1600 254px,#ff0909 255px,#ff2828 257px)}.g237{background:linear-gradient(#000000,#020002 42px,#450045 43px,#d900d9 46px,#e900ff 47px,#2d00ff 50px,#0027ff 51px,#008cff 52px,#00b9ff 53px,#0097ff 54px,#00e2ff 56px,#00ffff 60px,#00ff59 140px,#00ff00 174px,#37ff00 192px,#d0ff00 216px,#f3ff00 226px,#fffe00 237px,#fff200 241px,#ffc200 245px,#ff8400 248px,#ff1200 252px,#ff0d0d 253px,#ff6767 257px)}.g238{background:linear-gradient(#bd00bd,#fe00fe 8px,#8000ff 39px,#1e00ff 40px,#1e00ff 46px,#3700ff 47px,#0007ff 48px,#00bbff 50px,#00f2ff 51px,#00fffe 52px,#00ffda 54px,#00ff89 56px,#05ff00 61px,#41ff00 63px,#beff00 104px,#fcff00 167px,#fffb00 235px,#ffef00 241px,#ffd000 244px,#ff9c00 247px,#ff1200 252px,#ff0d0d 253px,#ff6868 257px)}.g239{background:linear-gradient(#000000,#000000 39px,#0c000c 41px,#920092 43px,#f500f5 45px,#d800ff 46px,#2500ff 49px,#0032ff 50px,#0095ff 51px,#00deff 52px,#00ffff 54px,#00ffc6 58px,#00ff4b 63px,#03ff00 84px,#3fff00 100px,#d5ff00 179px,#f7ff00 205px,#fffd00 235px,#ffee00 241px,#ffcc00 244px,#ff9700 247px,#ff0b00 252px,#ff1414 253px,#ff6e6e 257px)}.g23a{background:linear-gradient(#210021,#210021 39px,#000000 40px,#000000 42px,#0e000e 43px,#de00de 47px,#e400ff 48px,#1e00ff 51px,#003dff 52px,#0074ff 53px,#1100ff 54px,#0073ff 57px,#00ebff 63px,#00ffff 86px,#00ffe5 138px,#00ffaa 175px,#00ff7f 192px,#01ff00 204px,#bbff00 223px,#ecff00 231px,#fffd00 240px,#ffc300 246px,#ff6700 250px,#ff0c00 253px,#ff1313 254px,#ff5050 257px)}.g23b{background:linear-gradient(#e800ff,#b900ff 5px,#8300ff 15px,#2700ff 39px,#0096ff 40px,#0096ff 46px,#0d00ff 47px,#00e1ff 50px,#00ffff 51px,#00ffb9 54px,#00ff58 56px,#00ff00 59px,#74ff00 63px,#daff00 100px,#feff00 152px,#fff000 192px,#fffa00 235px,#fff100 241px,#ffd300 244px,#ffa000 247px,#ff1600 252px,#ff0909 253px,#ff6363 257px)}.g23c{background:linear-gradient(#f900f9,#9b00ff 16px,#4400ff 39px,#006cff 40px,#006cff 46px,#0e00ff 47px,#00e0ff 50px,#00feff 51px,#00ffd4 53px,#00ff3e 56px,#00ff02 58px,#8cff00 63px,#e7ff00 100px,#fffe00 161px,#ffe500 192px,#fff200 235px,#ffe500 241px,#ffcf00 243px,#ff9f00 246px,#ff0707 252px,#ff7e7e 257px)}.g23d{background:linear-gradient(#030003,#000000 42px,#1e001e 43px,#ee00ee 47px,#d400ff 48px,#0e00ff 51px,#0056ff 52px,#008aff 53px,#0023ff 54px,#008fff 56px,#00cfff 59px,#00f6ff 62px,#00feff 66px,#00fffa 87px,#00ffb9 144px,#00ff46 192px,#01ff00 199px,#c3ff00 221px,#f1ff00 230px,#fffd00 239px,#fff600 241px,#ffba00 246px,#ff0202 253px,#ff5d5d 257px)}.g23e{background:linear-gradient(#8d008d,#c300c3 6px,#fe00ff 18px,#af00ff 39px,#4b00ff 40px,#4b00ff 46px,#3500ff 47px,#000aff 48px,#00bdff 50px,#00f3ff 51px,#00fffd 52px,#00ffd8 54px,#00ff86 56px,#09ff00 61px,#44ff00 63px,#4cff00 65px,#a8ff00 93px,#c7ff00 109px,#fdff00 168px,#fff900 236px,#ffef00 241px,#ffd000 244px,#ff9b00 247px,#ff1100 252px,#ff0e0e 253px,#ff6969 257px)}.g23f{background:linear-gradient(#690069,#b500b5 10px,#fd00ff 27px,#d400ff 39px,#9100ff 40px,#9100ff 46px,#1a00ff 48px,#0033ff 49px,#0096ff 50px,#00deff 51px,#00feff 52px,#00fffc 53px,#00ffd4 55px,#00ff0b 62px,#13ff00 63px,#95ff00 100px,#bdff00 126px,#fbff00 181px,#fffc00 235px,#fff100 241px,#ffd200 244px,#ff9e00 247px,#ff1400 252px,#ff0b0b 253px,#ff6565 257px)}.g240{background:linear-gradient(#0a000a,#000000 41px,#250025 42px,#680068 43px,#fd00fd 46px,#0900ff 50px,#00b7ff 52px,#00daff 53px,#00aeff 54px,#00eeff 56px,#00ffff 59px,#00ffe4 63px,#00ff87 100px,#00ff00 163px,#54ff00 192px,#d1ff00 220px,#ffff00 241px,#ffea00 245px,#ffbe00 248px,#ff0100 255px,#ff1e1e 257px)}.g241{background:linear-gradient(#0011ff,#0062ff 6px,#00a2ff 15px,#00feff 40px,#00feff 46px,#7300ff 47px,#0006ff 49px,#00c5ff 51px,#00f6ff 52px,#00ffff 53px,#00fff2 55px,#00ff31 63px,#00ff00 76px,#59ff00 100px,#cbff00 163px,#f3ff00 193px,#ffff00 236px,#fff800 241px,#ffc600 246px,#ff1000 253px,#ff0f0f 254px,#ff4c4c 257px)}.g242{background:linear-gradient(#490049,#9b009b 11px,#fe00ff 35px,#f300ff 39px,#ac00ff 40px,#ac00ff 45px,#8d00ff 46px,#1600ff 48px,#003aff 49px,#009cff 50px,#00e2ff 51px,#00ffff 52px,#00ffe5 54px,#00ff9c 56px,#0dff00 62px,#2bff00 63px,#73ff00 83px,#a8ff00 100px,#beff00 115px,#faff00 171px,#fff700 236px,#ffea00 241px,#ffb800 245px,#ff0200 252px,#ff7676 257px)}.g243{background:linear-gradient(#810081,#c800c8 9px,#fd00ff 21px,#bc00ff 39px,#9900ff 40px,#9900ff 46px,#7700ff 47px,#0000ff 49px,#00c1ff 51px,#00f5ff 52px,#00ffff 53px,#00fff2 55px,#00ffb5 58px,#00ff33 63px,#02ff00 77px,#58ff00 100px,#d2ff00 168px,#f4ff00 195px,#fffe00 237px,#fff100 242px,#ffc300 246px,#ff6700 250px,#ff0c00 253px,#ff1313 254px,#ff5050 257px)}.g244{background:linear-gradient(#130013,#130013 39px,#210021 41px,#a600a6 43px,#f400ff 45px,#1000ff 49px,#00afff 51px,#00ecff 52px,#00ffff 54px,#00ffce 58px,#00ff57 63px,#02ff00 87px,#33ff00 100px,#ddff00 188px,#fffb00 241px,#ffba00 247px,#ff0404 254px,#ff4141 257px)}.g245{background:linear-gradient(#b100b1,#e700e7 6px,#fb00ff 11px,#8b00ff 39px,#3100ff 40px,#3f00ff 47px,#0400ff 48px,#00b2ff 50px,#00eeff 51px,#00ffff 52px,#00ffea 54px,#00ff00 62px,#1eff00 63px,#4bff00 75px,#9eff00 100px,#aeff00 110px,#f9ff00 174px,#fffe00 235px,#fff700 241px,#ffd000 245px,#ff7f00 249px,#ff0a00 253px,#ff1515 254px,#ff5252 257px)}.g246{background:linear-gradient(#ac00ac,#db00db 5px,#fb00ff 12px,#9000ff 39px,#2500ff 40px,#2d00ff 47px,#0016ff 48px,#00c5ff 50px,#00f6ff 51px,#00fffc 52px,#00ffdf 54px,#00ff92 56px,#00ff05 61px,#19ff00 62px,#36ff00 63px,#84ff00 85px,#b1ff00 100px,#c7ff00 116px,#fdff00 173px,#fffe00 235px,#fff700 241px,#ffd100 245px,#ff9800 248px,#ff0b00 253px,#ff1515 254px,#ff5151 257px)}.g247{background:linear-gradient(#230023,#230023 39px,#000000 40px,#000000 42px,#170017 43px,#e800e8 47px,#db00ff 48px,#1500ff 51px,#004cff 52px,#0081ff 53px,#0058ff 54px,#00b9ff 56px,#00ccff 57px,#00ffff 62px,#00ff98 140px,#00ff47 174px,#05ff00 194px,#99ff00 209px,#d8ff00 218px,#f8ff00 226px,#fff900 236px,#ffd800 241px,#ff7f00 246px,#ff1100 250px,#ff0f0f 251px,#ff9e9e 257px)}.g248{background:linear-gradient(#1c001c,#1c001c 39px,#000000 40px,#000000 42px,#1b001b 43px,#ec00ec 47px,#d700ff 48px,#1100ff 51px,#0051ff 52px,#0086ff 53px,#0035ff 54px,#009eff 56px,#00b5ff 57px,#00f3ff 61px,#00ffff 64px,#00fff7 85px,#00ffb3 140px,#00ff37 191px,#00ff00 197px,#c5ff00 219px,#f8ff00 230px,#fff800 239px,#ffed00 241px,#ffa600 246px,#ff0200 252px,#ff7676 257px)}.g249{background:linear-gradient(#dc00dc,#fa00ff 4px,#ab00ff 19px,#6100ff 39px,#002fff 40px,#002fff 46px,#1a00ff 47px,#0035ff 48px,#00d7ff 50px,#00fcff 51px,#00ffde 53px,#00ff3d 56px,#00ff01 58px,#8dff00 63px,#e7ff00 100px,#ffff00 146px,#ffe500 192px,#ffed00 235px,#ffdd00 241px,#ffc500 243px,#ff9100 246px,#ff0700 251px,#ff8d8d 257px)}.g24a{background:linear-gradient(#0a000a,#000000 41px,#1f001f 42px,#620062 43px,#f700f7 46px,#cc00ff 47px,#0f00ff 50px,#00b0ff 52px,#00d5ff 53px,#00d3ff 54px,#00fdff 56px,#00ffff 57px,#00fff1 60px,#00ffc5 63px,#00ff53 100px,#00ff00 141px,#88ff00 192px,#e2ff00 214px,#fffd00 237px,#fff100 241px,#ffc200 245px,#ff8400 248px,#ff1200 252px,#ff0e0e 253px,#ff6868 257px)}.g24b{background:linear-gradient(#0e000e,#0e000e 39px,#000000 41px,#190019 42px,#5c005c 43px,#f100f1 46px,#d200ff 47px,#1500ff 50px,#004bff 51px,#00a9ff 52px,#00d0ff 53px,#00ccff 54px,#00fbff 56px,#00ffff 58px,#00ffcd 63px,#00ff5f 100px,#00ff00 146px,#7dff00 192px,#e8ff00 217px,#fffd00 237px,#fff000 241px,#ffbf00 245px,#ff8000 248px,#ff0d00 252px,#ff1212 253px,#ff6c6c 257px)}.g24c{background:linear-gradient(#0f000f,#0f000f 39px,#000000 41px,#dc00dc 45px,#f000ff 46px,#000cff 50px,#00c8ff 52px,#00e7ff 53px,#00fffc 56px,#00ffdf 59px,#00ff8f 63px,#01ff00 106px,#e9ff00 208px,#fffe00 235px,#ffef00 241px,#ffbf00 245px,#ff8000 248px,#ff0d00 252px,#ff1212 253px,#ff6c6c 257px)}.g24d{background:linear-gradient(#0011ff,#0062ff 6px,#00adff 17px,#00feff 40px,#00feff 46px,#7300ff 47px,#3700ff 48px,#0007ff 49px,#00c5ff 51px,#00f6ff 52px,#00ffff 53px,#00ffdc 55px,#04ff00 63px,#88ff00 100px,#b4ff00 127px,#f7ff00 180px,#fff800 235px,#ffe700 241px,#ffc200 244px,#ffa100 246px,#ff0505 252px,#ff7c7c 257px)}.g24e{background:linear-gradient(#000000,#000000 42px,#150015 43px,#e500e5 47px,#de00ff 48px,#1700ff 51px,#0047ff 52px,#007dff 53px,#0400ff 54px,#006bff 56px,#009eff 58px,#00e8ff 62px,#00f4ff 64px,#00ffee 117px,#00ffbc 158px,#00ff6d 192px,#00ff05 202px,#ceff00 225px,#f2ff00 232px,#fff900 241px,#ffc300 246px,#ff6600 250px,#ff0b00 253px,#ff1414 254px,#ff5151 257px)}.g24f{background:linear-gradient(#ad00ad,#dc00dc 5px,#fb00ff 12px,#9000ff 39px,#4800ff 40px,#5200ff 47px,#1600ff 48px,#003aff 49px,#009cff 50px,#00e2ff 51px,#00ffff 52px,#00ffe5 54px,#00ff9b 56px,#0dff00 62px,#2bff00 63px,#70ff00 82px,#a8ff00 100px,#bdff00 114px,#f9ff00 169px,#fff800 235px,#ffea00 241px,#ffc700 244px,#ff8f00 247px,#ff0200 252px,#ff7676 257px)}.g250{background:linear-gradient(#000000,#000000 39px,#190019 40px,#190019 41px,#9f009f 43px,#fc00ff 45px,#1800ff 49px,#0046ff 50px,#00a6ff 51px,#00e7ff 52px,#00faff 53px,#00fff6 55px,#00ffbe 58px,#00ff40 63px,#00ff00 80px,#4aff00 100px,#c8ff00 167px,#f3ff00 198px,#fffe00 235px,#fff200 241px,#ffc600 245px,#ff0808 253px,#ff6363 257px)}.g251{background:linear-gradient(#000000,#000000 41px,#7f007f 43px,#e300e3 45px,#ea00ff 46px,#3700ff 49px,#0016ff 50px,#00ceff 52px,#00ebff 53px,#00ffff 56px,#00ffeb 59px,#00ffa5 63px,#00ff24 101px,#00ff00 119px,#d7ff00 207px,#fffd00 240px,#ffcd00 246px,#ff7500 250px,#ff0303 254px,#ff4141 257px)}.g252{background:linear-gradient(#160016,#160016 39px,#000000 41px,#0c000c 42px,#4f004f 43px,#e400e4 46px,#df00ff 47px,#2300ff 50px,#0036ff 51px,#0099ff 52px,#00c3ff 53px,#00bbff 54px,#00f5ff 56px,#00ffff 58px,#00ffdb 63px,#00ff77 100px,#01ff00 156px,#66ff00 192px,#dfff00 215px,#fffb00 237px,#ffeb00 241px,#ffb500 245px,#ff7400 248px,#ff0101 252px,#ff7878 257px)}.g253{background:linear-gradient(#760076,#b200b2 7px,#fe00fe 23px,#c600ff 39px,#5600ff 40px,#5600ff 46px,#2900ff 47px,#001dff 48px,#00c9ff 50px,#00f8ff 51px,#00fffa 52px,#00ffdc 54px,#00ff8c 56px,#02ff00 61px,#3eff00 63px,#bcff00 104px,#f9ff00 162px,#fffd00 236px,#fff600 241px,#ffd000 245px,#ff9700 248px,#ff0900 253px,#ff5353 257px)}.g254{background:linear-gradient(#0f000f,#0f000f 42px,#f000f0 45px,#fa00ff 47px,#e400ff 48px,#3500ff 51px,#0018ff 52px,#007dff 53px,#00c2ff 54px,#00f3ff 57px,#00e7ff 62px,#00ffff 90px,#00ffcb 126px,#00ff4f 186px,#00ff02 203px,#59ff00 220px,#c4ff00 232px,#fffe00 243px,#ffe800 245px,#ff5800 251px,#ff6e00 254px,#ffec00 257px)}.g255{background:linear-gradient(#0f000f,#0f000f 41px,#2a002a 42px,#dc00dc 44px,#fe00ff 46px,#f400ff 47px,#0e00ff 51px,#004eff 52px,#00a6ff 53px,#00e7ff 56px,#00e6ff 61px,#00d2ff 62px,#00ffff 98px,#00ffd3 136px,#00ff6e 190px,#00ff04 208px,#48ff00 220px,#e7ff00 237px,#fffe00 243px,#ffe800 245px,#ff5800 251px,#ff6e00 254px,#ffec00 257px)}.g256{background:linear-gradient(#0f000f,#0f000f 41px,#490049 42px,#ef00ef 44px,#fb00ff 46px,#e900ff 47px,#3500ff 50px,#001eff 51px,#0088ff 52px,#00d2ff 53px,#00f6ff 55px,#00ffff 81px,#00ffea 98px,#00ff03 194px,#6eff00 220px,#f1ff00 238px,#fffe00 243px,#ffe800 245px,#ff5800 251px,#ff6e00 254px,#ffec00 257px)}.g257{background:linear-gradient(#0f000f,#0f000f 41px,#f100f1 44px,#fb00fb 45px,#e200ff 47px,#2b00ff 50px,#003dff 51px,#00aeff 52px,#00ecff 53px,#00fcff 54px,#00ffe7 60px,#00fff4 62px,#00ffd9 80px,#00ff5d 110px,#01ff00 143px,#76ff00 192px,#a0ff00 220px,#feff00 242px,#ffe800 245px,#ff5800 251px,#ff6e00 254px,#ffec00 257px)}.g258{background:linear-gradient(#0f000f,#0f000f 41px,#f000f0 44px,#fa00ff 46px,#e600ff 47px,#3000ff 50px,#0029ff 51px,#0093ff 52px,#00d8ff 53px,#00faff 55px,#00ffff 76px,#00ffe7 95px,#00ff01 188px,#77ff00 220px,#f1ff00 238px,#fffe00 243px,#ffe800 245px,#ff5800 251px,#ff6e00 254px,#ffec00 257px)}.g259{background:linear-gradient(#0f000f,#0f000f 41px,#400040 42px,#ee00ee 44px,#fc00ff 46px,#ef00ff 47px,#0004ff 51px,#00b3ff 53px,#00e4ff 56px,#00dcff 61px,#00c6ff 62px,#00f6ff 87px,#00ffff 102px,#00ffdb 138px,#00ff80 190px,#00ff04 210px,#3fff00 220px,#eeff00 238px,#fffe00 243px,#ffe800 245px,#ff5800 251px,#ff6e00 254px,#ffec00 257px)}.g25a{background:linear-gradient(#0f000f,#0f000f 41px,#310031 42px,#e300e3 44px,#fd00ff 46px,#f300ff 47px,#000cff 51px,#0084ff 52px,#00dcff 53px,#00ffff 55px,#00ffdd 84px,#00ff78 110px,#01ff00 154px,#96ff00 220px,#feff00 242px,#ffe800 245px,#ff5800 251px,#ff6e00 254px,#ffec00 257px)}.g25b{background:linear-gradient(#0f000f,#0f000f 41px,#290029 42px,#dc00dc 44px,#fe00ff 46px,#f400ff 47px,#c300ff 48px,#0400ff 51px,#00c6ff 53px,#00f7ff 55px,#00ffff 74px,#00ffe6 94px,#00ff00 185px,#7aff00 220px,#f2ff00 238px,#fffe00 243px,#ffe800 245px,#ff5800 251px,#ff6e00 254px,#ffec00 257px)}.g25c{background:linear-gradient(#0f000f,#0f000f 41px,#2d002d 42px,#df00df 44px,#fe00ff 46px,#f400ff 47px,#0800ff 51px,#005dff 52px,#00b6ff 53px,#00f4ff 56px,#00e9ff 62px,#00ffff 90px,#00ffc3 129px,#00ff49 187px,#01ff00 203px,#5bff00 220px,#e9ff00 237px,#fffe00 243px,#ffe800 245px,#ff5800 251px,#ff6e00 254px,#ffec00 257px)}.g25d{background:linear-gradient(#0f000f,#0f000f 41px,#3b003b 42px,#ee00ee 44px,#fc00ff 46px,#f200ff 47px,#4000ff 50px,#0011ff 51px,#0081ff 52px,#00d5ff 53px,#00faff 55px,#00ffff 72px,#00ffe6 93px,#00ff00 183px,#7cff00 220px,#f2ff00 238px,#fffe00 243px,#ffe800 245px,#ff5800 251px,#ff6e00 254px,#ffec00 257px)}.g25e{background:linear-gradient(#0f000f,#0f000f 41px,#f000f0 44px,#fa00ff 46px,#e500ff 47px,#2f00ff 50px,#002dff 51px,#009aff 52px,#00dfff 53px,#00f3ff 54px,#00ffff 67px,#00ffe7 89px,#00ff9e 111px,#01ff00 175px,#84ff00 220px,#feff00 242px,#ffe800 245px,#ff5800 251px,#ff6e00 254px,#ffec00 257px)}.g25f{background:linear-gradient(#0f000f,#0f000f 41px,#b900b9 43px,#f200f2 44px,#fc00fc 45px,#f800ff 46px,#da00ff 47px,#2100ff 50px,#0036ff 51px,#0096ff 52px,#00cdff 53px,#00f5ff 56px,#00e6ff 62px,#00ffff 91px,#00ffc2 132px,#00ff49 190px,#01ff00 204px,#58ff00 220px,#e8ff00 237px,#fffe00 243px,#ffe800 245px,#ff5800 251px,#ff6e00 254px,#ffec00 257px)}.g260{background:linear-gradient(#0f000f,#0f000f 41px,#bf00bf 43px,#f300f3 44px,#fd00fd 45px,#f800ff 46px,#d600ff 47px,#1d00ff 50px,#0042ff 51px,#00a5ff 52px,#00d9ff 53px,#00f9ff 55px,#00ffff 82px,#00ffec 98px,#01ff00 196px,#6cff00 220px,#f1ff00 238px,#fffe00 243px,#ffe800 245px,#ff5800 251px,#ff6e00 254px,#ffec00 257px)}.g261{background:linear-gradient(#0f000f,#0f000f 41px,#f100f1 44px,#fb00fb 45px,#df00ff 47px,#2800ff 50px,#004fff 51px,#00c3ff 52px,#00f9ff 53px,#00ffff 54px,#00ffb0 58px,#00ffa8 61px,#00ffc4 62px,#00ff92 80px,#02ff00 109px,#90ff00 162px,#c5ff00 192px,#c1ff00 220px,#fffe00 243px,#ffe800 245px,#ff5800 251px,#ff6e00 254px,#ffec00 257px)}.g262{background:linear-gradient(#0f000f,#0f000f 41px,#350035 42px,#e700e7 44px,#fd00ff 46px,#f300ff 47px,#0003ff 51px,#00c6ff 53px,#00fbff 56px,#00ffff 83px,#00ffab 128px,#00ff03 196px,#6aff00 220px,#eaff00 237px,#fffe00 243px,#ffe800 245px,#ff5800 251px,#ff6e00 254px,#ffec00 257px)}.g263{background:linear-gradient(#0f000f,#0f000f 42px,#f100f1 45px,#fb00fb 46px,#df00ff 48px,#2f00ff 51px,#001fff 52px,#0082ff 53px,#00c1ff 54px,#00efff 57px,#00f1ff 61px,#00e2ff 62px,#00ffff 93px,#00ffcb 130px,#00ff58 187px,#00ff00 205px,#55ff00 220px,#efff00 238px,#fffe00 243px,#ffe800 245px,#ff5800 251px,#ff6e00 254px,#ffec00 257px)}.g264{background:linear-gradient(#0f000f,#0f000f 42px,#160016 43px,#c900c9 45px,#f400f4 46px,#fe00fe 47px,#f600ff 48px,#d000ff 49px,#0100ff 52px,#007cff 53px,#00daff 54px,#00faff 55px,#00ffff 56px,#00ffe0 61px,#00fff0 62px,#00ffd1 80px,#00ff4f 110px,#01ff00 138px,#83ff00 192px,#a5ff00 220px,#fffe00 243px,#ffe800 245px,#ff5800 251px,#ff6e00 254px,#ffec00 257px)}.g265{background:linear-gradient(#0f000f,#0f000f 43px,#2d002d 44px,#e000e0 46px,#fe00ff 48px,#f400ff 49px,#1e00ff 53px,#0036ff 54px,#0093ff 55px,#00c9ff 57px,#00e1ff 59px,#00e6ff 61px,#00d4ff 62px,#00ffff 98px,#00ffd6 133px,#00ff6b 190px,#00ff02 208px,#49ff00 220px,#e7ff00 237px,#fffe00 243px,#ffe800 245px,#ff5800 251px,#ff6e00 254px,#ffec00 257px)}.g266{background:linear-gradient(#0f000f,#0f000f 44px,#f000f0 47px,#fa00ff 49px,#9c00ff 52px,#0c00ff 55px,#002fff 56px,#0044ff 58px,#0068ff 59px,#0075ff 61px,#0054ff 62px,#00e5ff 104px,#00ffff 144px,#00ffdd 192px,#00ff97 203px,#02ff00 220px,#d4ff00 236px,#fffe00 243px,#ffe800 245px,#ff5800 251px,#ff6e00 254px,#ffec00 257px)}.g267{background:linear-gradient(#0f000f,#0f000f 44px,#2b002b 45px,#de00de 47px,#fe00ff 49px,#f400ff 50px,#cf00ff 51px,#0005ff 55px,#0062ff 56px,#0084ff 57px,#00bbff 59px,#00cbff 61px,#00b3ff 62px,#00f1ff 89px,#00ffff 107px,#00ffe4 141px,#00ff97 190px,#00ff00 213px,#33ff00 220px,#edff00 238px,#fffe00 243px,#ffe800 245px,#ff5800 251px,#ff6e00 254px,#ffec00 257px)}.g268{background:linear-gradient(#0f000f,#0f000f 44px,#220022 45px,#d400d4 47px,#ff00ff 49px,#f500ff 50px,#c300ff 51px,#0010ff 54px,#0086ff 55px,#00dcff 56px,#00ffff 58px,#00ffdf 85px,#00ff80 110px,#01ff00 158px,#92ff00 220px,#feff00 242px,#ffe800 245px,#ff5800 251px,#ff6e00 254px,#ffec00 257px)}.g269{background:linear-gradient(#0f000f,#0f000f 44px,#320032 45px,#e400e4 47px,#fd00ff 49px,#f300ff 50px,#2500ff 53px,#0049ff 54px,#00baff 55px,#00f8ff 56px,#00ffff 57px,#00ffd7 61px,#00ffe8 62px,#00ffc1 81px,#00ff3c 110px,#01ff00 131px,#94ff00 192px,#acff00 220px,#fffe00 243px,#ffe800 245px,#ff5800 251px,#ff6e00 254px,#ffec00 257px)}.g26a{background:linear-gradient(#0f000f,#0f000f 39px,#7e007e 43px,#7f007f 44px,#f000f0 47px,#fb00fb 49px,#f700ff 50px,#4300ff 56px,#1b00ff 61px,#2500ff 63px,#0001ff 87px,#0046ff 110px,#0087ff 150px,#00cdff 175px,#00ffff 206px,#00ffe6 220px,#00ff9e 226px,#05ff00 235px,#c0ff00 240px,#faff00 243px,#fff100 246px,#ff8f00 250px,#ff8b00 251px,#ffab00 254px,#ffec00 257px)}.g26b{background:linear-gradient(#0f000f,#0f000f 39px,#ee00ee 43px,#ff00ff 84px,#e300ff 150px,#5e00ff 190px,#0400ff 205px,#007fff 220px,#00e0ff 225px,#00ffff 230px,#00ffd2 235px,#00ff2e 238px,#14ff00 239px,#c2ff00 242px,#f2ff00 244px,#fff600 247px,#ffa800 250px,#ffec00 257px)}.g26c{background:linear-gradient(#0f000f,#0f000f 39px,#630063 42px,#ef00ef 45px,#fc00ff 48px,#9c00ff 51px,#1e00ff 54px,#0011ff 56px,#002eff 57px,#003eff 60px,#0031ff 64px,#00a3ff 110px,#00f4ff 170px,#00ffff 192px,#00ffce 220px,#00ff91 225px,#02ff00 234px,#13ff00 235px,#c3ff00 240px,#faff00 243px,#fff100 246px,#ff8f00 250px,#ff8b00 251px,#ffab00 254px,#ffec00 257px)}.g26d{background:linear-gradient(#0f000f,#0f000f 42px,#470047 43px,#ef00ef 45px,#fb00ff 47px,#ea00ff 48px,#3800ff 51px,#0019ff 52px,#0084ff 53px,#00d0ff 54px,#00fdff 57px,#00ffff 81px,#00ffe4 100px,#00ff00 194px,#6fff00 220px,#ebff00 237px,#fffe00 243px,#ffe800 245px,#ff5800 251px,#ff6e00 254px,#ffec00 257px)}.g26e{background:linear-gradient(#0f000f,#0f000f 42px,#430043 43px,#ef00ef 45px,#fb00ff 47px,#ed00ff 48px,#1500ff 52px,#0036ff 53px,#0081ff 54px,#00a7ff 57px,#0093ff 58px,#009eff 61px,#007eff 62px,#00f4ff 103px,#00ffff 128px,#00ffc5 191px,#00ff8f 200px,#00ff04 217px,#ebff00 238px,#fffe00 243px,#ffe800 245px,#ff5800 251px,#ff6e00 254px,#ffec00 257px)}.g26f{background:linear-gradient(#0f000f,#0f000f 42px,#440044 43px,#ef00ef 45px,#fb00ff 47px,#ec00ff 48px,#2e00ff 51px,#003bff 52px,#00afff 53px,#00f2ff 54px,#00feff 55px,#00ffdc 61px,#00ffee 62px,#00ffca 81px,#00ff4a 110px,#01ff00 136px,#88ff00 192px,#a7ff00 220px,#fffe00 243px,#ffe800 245px,#ff5800 251px,#ff6e00 254px,#ffec00 257px)}.g270{background:linear-gradient(#0f000f,#0f000f 42px,#f000f0 45px,#fa00ff 47px,#e400ff 48px,#3600ff 51px,#0012ff 52px,#0075ff 53px,#00b9ff 54px,#00eaff 57px,#00ebff 61px,#00d9ff 62px,#00ffff 96px,#00ffd5 130px,#00ff68 187px,#00ff00 207px,#4dff00 220px,#efff00 238px,#fffe00 243px,#ffe800 245px,#ff5800 251px,#ff6e00 254px,#ffec00 257px)}.g271{background:linear-gradient(#0f000f,#130013 42px,#c600c6 44px,#f300f3 45px,#fd00fd 46px,#f700ff 47px,#d200ff 48px,#1700ff 51px,#004eff 52px,#00b1ff 53px,#00e0ff 54px,#00fdff 56px,#00ffff 75px,#00ffeb 93px,#00ff00 188px,#78ff00 220px,#f1ff00 238px,#fffe00 243px,#ffe800 245px,#ff5800 251px,#ff6e00 254px,#ffec00 257px)}.g272{background:linear-gradient(#0f000f,#0f000f 41px,#3a003a 42px,#ed00ed 44px,#fc00ff 46px,#f200ff 47px,#4100ff 50px,#001bff 51px,#0092ff 52px,#00e5ff 53px,#00ffff 55px,#00ffeb 60px,#00fff7 62px,#00ffde 80px,#00ff66 110px,#00ff00 146px,#6eff00 192px,#9dff00 220px,#feff00 242px,#ffe800 245px,#ff5800 251px,#ff6e00 254px,#ffec00 257px)}.g273{background:linear-gradient(#0f000f,#0f000f 41px,#bf00bf 43px,#f300f3 44px,#fd00fd 45px,#f700ff 46px,#d600ff 47px,#1d00ff 50px,#004aff 51px,#00b0ff 52px,#00e3ff 53px,#00f5ff 54px,#00ffff 68px,#00ffe4 91px,#00ffa4 110px,#00ff00 176px,#82ff00 220px,#feff00 242px,#ffe800 245px,#ff5800 251px,#ff6e00 254px,#ffec00 257px)}.g274{background:linear-gradient(#0f000f,#0f000f 40px,#330033 41px,#e500e5 43px,#fd00ff 45px,#f300ff 46px,#0005ff 50px,#00aeff 52px,#00deff 55px,#00bdff 58px,#00c3ff 61px,#00a7ff 62px,#00f1ff 92px,#00ffff 111px,#00ffec 140px,#00ffa4 190px,#00ff02 214px,#2cff00 220px,#e4ff00 237px,#fffe00 243px,#ffe800 245px,#ff5800 251px,#ff6e00 254px,#ffec00 257px)}.g275{background:linear-gradient(#0f000f,#0f000f 40px,#4a004a 41px,#f000f0 43px,#fb00ff 45px,#e800ff 46px,#3300ff 49px,#0024ff 50px,#0090ff 51px,#00d9ff 52px,#00fbff 54px,#00ffff 73px,#00ffec 91px,#00ff00 184px,#7bff00 220px,#f2ff00 238px,#fffe00 243px,#ffe800 245px,#ff5800 251px,#ff6e00 254px,#ffec00 257px)}.g276{background:linear-gradient(#0f000f,#0f000f 40px,#4b004b 41px,#f000f0 43px,#fa00ff 45px,#e800ff 46px,#3300ff 49px,#0025ff 50px,#0091ff 51px,#00d8ff 52px,#00faff 54px,#00ffff 74px,#00ffec 92px,#01ff00 187px,#79ff00 220px,#ecff00 237px,#fffe00 243px,#ffe800 245px,#ff5800 251px,#ff6e00 254px,#ffec00 257px)}.g277{background:linear-gradient(#0f000f,#0f000f 40px,#320032 41px,#e500e5 43px,#fd00ff 45px,#f300ff 46px,#0004ff 50px,#007cff 51px,#00d6ff 52px,#00fdff 54px,#00ffe8 81px,#00ff7f 110px,#00ff00 157px,#93ff00 220px,#feff00 242px,#ffe800 245px,#ff5800 251px,#ff6e00 254px,#ffec00 257px)}.g278{background:linear-gradient(#0f000f,#0f000f 41px,#b400b4 43px,#f100f1 44px,#fb00fb 45px,#f900ff 46px,#dd00ff 47px,#2600ff 50px,#001aff 51px,#006cff 52px,#00a0ff 53px,#00b6ff 55px,#00b6ff 56px,#008bff 58px,#0095ff 61px,#0072ff 62px,#00eeff 102px,#00ffff 133px,#00ffcd 191px,#00ff7a 204px,#00ff02 218px,#e1ff00 237px,#fffe00 243px,#ffe800 245px,#ff5800 251px,#ff6e00 254px,#ffec00 257px)}.g279{background:linear-gradient(#0f000f,#0f000f 41px,#1b001b 42px,#cd00cd 44px,#f400f4 45px,#fe00fe 46px,#f600ff 47px,#cd00ff 48px,#0b00ff 51px,#00cbff 53px,#00f1ff 54px,#00fdff 55px,#00ffdc 85px,#00ff7b 110px,#00ff00 155px,#95ff00 220px,#feff00 242px,#ffe800 245px,#ff5800 251px,#ff6e00 254px,#ffec00 257px)}.g27a{background:linear-gradient(#0f000f,#0f000f 42px,#2f002f 43px,#e100e1 45px,#fe00ff 47px,#f400ff 48px,#4300ff 51px,#0011ff 52px,#0087ff 53px,#00ddff 54px,#00ffff 56px,#00ffde 85px,#00ff7f 110px,#01ff00 157px,#93ff00 220px,#feff00 242px,#ffe800 245px,#ff5800 251px,#ff6e00 254px,#ffec00 257px)}.g27b{background:linear-gradient(#0f000f,#0f000f 43px,#4a004a 44px,#f000f0 46px,#fb00ff 48px,#e900ff 49px,#0a00ff 53px,#0052ff 54px,#009fff 55px,#00d6ff 58px,#00deff 61px,#00c9ff 62px,#00ffff 101px,#00ffe2 131px,#00ff7b 190px,#00ff00 210px,#41ff00 220px,#eeff00 238px,#fffe00 243px,#ffe800 245px,#ff5800 251px,#ff6e00 254px,#ffec00 257px)}.g27c{background:linear-gradient(#0f000f,#0f000f 43px,#1c001c 44px,#cf00cf 46px,#f400f4 47px,#fe00fe 48px,#f600ff 49px,#cc00ff 50px,#0010ff 54px,#006eff 55px,#009aff 56px,#00cfff 59px,#00d6ff 61px,#00bfff 62px,#00f3ff 87px,#00ffff 104px,#00ffe4 135px,#00ff88 190px,#00ff04 211px,#3bff00 220px,#edff00 238px,#fffe00 243px,#ffe800 245px,#ff5800 251px,#ff6e00 254px,#ffec00 257px)}.g27d{background:linear-gradient(#0f000f,#0f000f 44px,#b700b7 46px,#f200f2 47px,#fc00fc 48px,#f800ff 49px,#db00ff 50px,#0f00ff 53px,#00c9ff 55px,#00f6ff 56px,#00ffff 57px,#00ffdd 82px,#00ff6e 110px,#00ff00 149px,#9aff00 220px,#feff00 242px,#ffe800 245px,#ff5800 251px,#ff6e00 254px,#ffec00 257px)}.g27e{background:linear-gradient(#0f000f,#0f000f 44px,#b500b5 46px,#f200f2 47px,#fc00fc 48px,#f900ff 49px,#dd00ff 50px,#1b00ff 54px,#0032ff 55px,#0070ff 56px,#00aeff 59px,#00b8ff 61px,#009dff 62px,#00f2ff 95px,#00ffff 115px,#00ffe8 148px,#00ffae 190px,#00ff01 215px,#26ff00 220px,#e3ff00 237px,#fffe00 243px,#ffe800 245px,#ff5800 251px,#ff6e00 254px,#ffec00 257px)}.g27f{background:linear-gradient(#0f000f,#120012 44px,#c400c4 46px,#f300f3 47px,#fd00fd 48px,#f700ff 49px,#d300ff 50px,#0003ff 54px,#0063ff 55px,#0098ff 56px,#00d0ff 59px,#00d8ff 61px,#00c1ff 62px,#00f4ff 87px,#00ffff 103px,#00ffe1 136px,#00ff85 190px,#00ff02 211px,#3cff00 220px,#edff00 238px,#fffe00 243px,#ffe800 245px,#ff5800 251px,#ff6e00 254px,#ffec00 257px)}.g280{background:linear-gradient(#0f000f,#0f000f 43px,#290029 44px,#dc00dc 46px,#fe00ff 48px,#f400ff 49px,#c300ff 50px,#0100ff 53px,#00cbff 55px,#00f9ff 57px,#00ffff 71px,#00ffe6 92px,#00ffab 110px,#00ff01 180px,#7fff00 220px,#f2ff00 238px,#fffe00 243px,#ffe800 245px,#ff5800 251px,#ff6e00 254px,#ffec00 257px)}.g281{background:linear-gradient(#0f000f,#0f000f 43px,#400040 44px,#ef00ef 46px,#fc00ff 48px,#ef00ff 49px,#2d00ff 52px,#003aff 53px,#00aaff 54px,#00f0ff 55px,#00fdff 56px,#00ffeb 61px,#00fff7 62px,#00ffdc 81px,#00ff7c 110px,#00ff6d 140px,#01ff00 186px,#40ff00 215px,#d7ff00 233px,#fffe00 243px,#ffe800 245px,#ff5800 251px,#ff6e00 254px,#ffec00 257px)}.g282{background:linear-gradient(#0f000f,#0f000f 43px,#f000f0 46px,#fa00ff 48px,#e500ff 49px,#1e00ff 53px,#0027ff 54px,#006bff 55px,#0098ff 60px,#009cff 61px,#007cff 62px,#00eeff 100px,#00daff 140px,#00ffff 194px,#00ffea 205px,#00ffbb 215px,#00ff73 220px,#00ff02 225px,#caff00 235px,#f2ff00 239px,#fffe00 243px,#ffe800 245px,#ff5800 251px,#ff6e00 254px,#ffec00 257px)}.g283{background:linear-gradient(#0f000f,#0f000f 43px,#f100f1 46px,#fa00ff 48px,#e300ff 49px,#1f00ff 52px,#004eff 53px,#00b8ff 54px,#00f1ff 55px,#00fdff 56px,#00ffe3 80px,#00ff9e 100px,#00ffee 140px,#00ffc1 176px,#00ff7a 215px,#00ff03 222px,#8dff00 229px,#d8ff00 234px,#fffe00 243px,#ffe800 245px,#ff5800 251px,#ff6e00 254px,#ffec00 257px)}.g284{background:linear-gradient(#0f000f,#0f000f 43px,#4b004b 44px,#f000f0 46px,#fa00ff 48px,#e800ff 49px,#2a00ff 52px,#0039ff 53px,#00a7ff 54px,#00e9ff 55px,#00ffff 57px,#00ffef 80px,#00ffb4 100px,#00ffce 142px,#00ff76 190px,#00ff32 215px,#00ff02 219px,#ceff00 233px,#f3ff00 238px,#fffe00 243px,#ffe800 245px,#ff5800 251px,#ff6e00 254px,#ffec00 257px)}.g285{background:linear-gradient(#0f000f,#0f000f 43px,#3f003f 44px,#ee00ee 46px,#fc00ff 48px,#f000ff 49px,#1600ff 53px,#0040ff 54px,#0095ff 55px,#00d0ff 58px,#00d9ff 61px,#00c3ff 62px,#00f5ff 87px,#00ffff 105px,#00fffa 142px,#00ffc7 191px,#00ff4f 213px,#00ff08 220px,#bdff00 233px,#f4ff00 239px,#fffe00 243px,#ffe800 245px,#ff5800 251px,#ff6e00 254px,#ffec00 257px)}.g286{background:linear-gradient(#0f000f,#0f000f 43px,#370037 44px,#e900e9 46px,#fd00ff 48px,#f300ff 49px,#4000ff 52px,#0012ff 53px,#0082ff 54px,#00d7ff 55px,#00efff 56px,#00ffff 58px,#00ffff 69px,#00ffe5 91px,#00ffa6 110px,#00ff01 177px,#81ff00 220px,#feff00 242px,#ffe800 245px,#ff5800 251px,#ff6e00 254px,#ffec00 257px)}.g287{background:linear-gradient(#0f000f,#0f000f 43px,#390039 44px,#ec00ec 46px,#fc00ff 48px,#f200ff 49px,#2900ff 52px,#0046ff 53px,#00b9ff 54px,#00f8ff 55px,#00ffff 56px,#00ffd9 58px,#00ffcf 61px,#00ffe3 62px,#00ffbd 80px,#00ff31 110px,#01ff00 127px,#9dff00 192px,#afff00 220px,#fffe00 243px,#ffe800 245px,#ff5800 251px,#ff6e00 254px,#ffec00 257px)}.g288{background:linear-gradient(#0f000f,#0f000f 43px,#f000f0 46px,#fa00ff 48px,#e600ff 49px,#2c00ff 52px,#0033ff 53px,#009fff 54px,#00e2ff 55px,#00f5ff 56px,#00ffff 66px,#00ffe6 89px,#00ff9c 111px,#00ff01 173px,#85ff00 220px,#feff00 242px,#ffe800 245px,#ff5800 251px,#ff6e00 254px,#ffec00 257px)}.g289{background:linear-gradient(#0f000f,#0f000f 42px,#1d001d 43px,#cf00cf 45px,#f400f4 46px,#fe00fe 47px,#f600ff 48px,#000dff 53px,#0065ff 54px,#008cff 55px,#00abff 57px,#00b1ff 61px,#0093ff 62px,#00f0ff 96px,#00ffff 119px,#00ffb4 191px,#00ff00 216px,#e3ff00 237px,#fffe00 243px,#ffe800 245px,#ff5800 251px,#ff6e00 254px,#ffec00 257px)}.g28a{background:linear-gradient(#0f000f,#0f000f 42px,#f100f1 45px,#fb00fb 46px,#e200ff 48px,#2c00ff 51px,#002fff 52px,#0098ff 53px,#00d9ff 54px,#00faff 56px,#00ffff 76px,#00ffea 94px,#00ff00 189px,#77ff00 220px,#f1ff00 238px,#fffe00 243px,#ffe800 245px,#ff5800 251px,#ff6e00 254px,#ffec00 257px)}.g28b{background:linear-gradient(#0f000f,#0f000f 41px,#3a003a 42px,#ec00ec 44px,#fc00ff 46px,#f200ff 47px,#4100ff 50px,#0012ff 51px,#0084ff 52px,#00d9ff 53px,#00efff 54px,#00ffff 56px,#00ffff 66px,#00ffe3 90px,#00ff9e 110px,#00ff00 173px,#85ff00 220px,#feff00 242px,#ffe800 245px,#ff5800 251px,#ff6e00 254px,#ffec00 257px)}.g28c{background:linear-gradient(#0f000f,#0f000f 40px,#1b001b 41px,#ce00ce 43px,#f400f4 44px,#fe00fe 45px,#f600ff 46px,#cc00ff 47px,#1000ff 50px,#004fff 51px,#00abff 52px,#00d3ff 53px,#00f3ff 55px,#00f4ff 61px,#00e5ff 62px,#00ffff 91px,#00ffc3 132px,#00ff4f 188px,#00ff00 204px,#58ff00 220px,#efff00 238px,#fffe00 243px,#ffe800 245px,#ff5800 251px,#ff6e00 254px,#ffec00 257px)}.g28d{background:linear-gradient(#0f000f,#0f000f 40px,#480048 41px,#ef00ef 43px,#fb00ff 45px,#ea00ff 46px,#3600ff 49px,#0021ff 50px,#008dff 51px,#00d7ff 52px,#00ffff 55px,#00f0ff 79px,#00ffff 145px,#00ffe4 189px,#00ffaa 219px,#88ff00 220px,#edff00 237px,#fffe00 243px,#ffe800 245px,#ff5800 251px,#ff6e00 254px,#ffec00 257px)}.g28e{background:linear-gradient(#0f000f,#0f000f 40px,#b600b6 42px,#f200f2 43px,#fc00fc 44px,#dc00ff 46px,#2400ff 49px,#003cff 50px,#00abff 51px,#00e7ff 52px,#00ffff 54px,#00ffe1 81px,#00ff71 110px,#00ff00 150px,#98ff00 220px,#feff00 242px,#ffe800 245px,#ff5800 251px,#ff6e00 254px,#ffec00 257px)}.g28f{background:linear-gradient(#0f000f,#0f000f 40px,#f100f1 43px,#fb00fb 44px,#e000ff 46px,#2900ff 49px,#0035ff 50px,#00a1ff 51px,#00e0ff 52px,#00f4ff 53px,#00ffff 64px,#00ffe5 88px,#00ff96 111px,#00ff00 170px,#88ff00 220px,#feff00 242px,#ffe800 245px,#ff5800 251px,#ff6e00 254px,#ffec00 257px)}.g290{background:linear-gradient(#0f000f,#0f000f 40px,#390039 41px,#eb00eb 43px,#fc00ff 45px,#f300ff 46px,#000dff 50px,#00c5ff 52px,#00f6ff 55px,#00f3ff 61px,#00e4ff 62px,#00ffff 92px,#00ffc7 131px,#00ff50 189px,#00ff03 204px,#56ff00 220px,#e8ff00 237px,#fffe00 243px,#ffe800 245px,#ff5800 251px,#ff6e00 254px,#ffec00 257px)}.g291{background:linear-gradient(#0f000f,#0f000f 41px,#bb00bb 43px,#f200f2 44px,#fc00fc 45px,#f800ff 46px,#d900ff 47px,#2000ff 50px,#0042ff 51px,#00a9ff 52px,#00dfff 53px,#00fdff 55px,#00ffff 73px,#00ffe7 93px,#01ff00 184px,#7cff00 220px,#f2ff00 238px,#fffe00 243px,#ffe800 245px,#ff5800 251px,#ff6e00 254px,#ffec00 257px)}.g292{background:linear-gradient(#0f000f,#0f000f 41px,#290029 42px,#dc00dc 44px,#fe00ff 46px,#f400ff 47px,#c300ff 48px,#0008ff 51px,#0085ff 52px,#00dfff 53px,#00ffff 55px,#00ffe4 58px,#00ffed 64px,#00ffca 82px,#00ff4f 110px,#00ff01 137px,#85ff00 193px,#a5ff00 220px,#fffe00 243px,#ffe800 245px,#ff5800 251px,#ff6e00 254px,#ffec00 257px)}.g293{background:linear-gradient(#0f000f,#0f000f 42px,#f000f0 45px,#ff00ff 59px,#d500ff 100px,#0001ff 141px,#00caff 172px,#00f1ff 183px,#00ffff 197px,#00ffe0 213px,#00ff90 230px,#00ff0d 234px,#b2ff00 240px,#fcff00 244px,#ffec00 247px,#ff9600 250px,#ffec00 257px)}.g294{background:linear-gradient(#0f000f,#0f000f 39px,#ee00ee 43px,#ff00ff 59px,#d500ff 100px,#0001ff 141px,#00caff 172px,#00f1ff 183px,#00ffff 197px,#00ffe0 213px,#00ff90 230px,#00ff0d 234px,#b2ff00 240px,#fcff00 244px,#ffec00 247px,#ff9600 250px,#ffec00 257px)}.g295{background:linear-gradient(#0f000f,#0f000f 43px,#b700b7 45px,#f100f1 46px,#ff00ff 59px,#d500ff 100px,#0001ff 141px,#00caff 172px,#00f1ff 183px,#00ffff 197px,#00ffe0 213px,#00ff90 230px,#00ff0d 234px,#b2ff00 240px,#fcff00 244px,#ffec00 247px,#ff9600 250px,#ffec00 257px)}.g296{background:linear-gradient(#0f000f,#0f000f 43px,#bb00bb 45px,#f200f2 46px,#fc00fc 47px,#f800ff 48px,#d900ff 49px,#2d00ff 52px,#0023ff 53px,#0087ff 54px,#00c1ff 55px,#00efff 58px,#00ffff 91px,#00ffc8 128px,#00ff50 186px,#00ff03 203px,#59ff00 220px,#e8ff00 237px,#fffe00 243px,#ffe800 245px,#ff5800 251px,#ff6e00 254px,#ffec00 257px)}.g297{background:linear-gradient(#0f000f,#0f000f 43px,#c100c1 45px,#f300f3 46px,#fd00fd 47px,#f700ff 48px,#d500ff 49px,#1900ff 52px,#004dff 53px,#00b2ff 54px,#00e3ff 55px,#00f5ff 56px,#00ffff 71px,#00ffe7 92px,#00ff01 181px,#7eff00 220px,#f2ff00 238px,#fffe00 243px,#ffe800 245px,#ff5800 251px,#ff6e00 254px,#ffec00 257px)}.g298{background:linear-gradient(#0f000f,#100010 43px,#c300c3 45px,#f300f3 46px,#fd00fd 47px,#f700ff 48px,#d400ff 49px,#0007ff 52px,#008cff 53px,#00e7ff 54px,#00ffff 55px,#00fff7 56px,#00ffc1 58px,#00ffb7 61px,#00ffd0 62px,#00ffa2 80px,#00ff00 114px,#99ff00 175px,#b9ff00 192px,#bbff00 220px,#fffe00 243px,#ffe800 245px,#ff5800 251px,#ff6e00 254px,#ffec00 257px)}.g299{background:linear-gradient(#0f000f,#0f000f 43px,#ba00ba 45px,#f200f2 46px,#fc00fc 47px,#f800ff 48px,#da00ff 49px,#2f00ff 52px,#001fff 53px,#0083ff 54px,#00beff 55px,#00edff 58px,#00f2ff 61px,#00e3ff 62px,#00ffff 92px,#00ffcb 129px,#00ff55 187px,#00ff03 204px,#56ff00 220px,#e8ff00 237px,#fffe00 243px,#ffe800 245px,#ff5800 251px,#ff6e00 254px,#ffec00 257px)}.g29a{background:linear-gradient(#0f000f,#0f000f 43px,#4b004b 44px,#f000f0 46px,#fa00ff 48px,#e800ff 49px,#1300ff 53px,#003fff 54px,#008bff 55px,#00c1ff 59px,#00c8ff 61px,#00aeff 62px,#00f4ff 92px,#00ffff 108px,#00ffed 136px,#00ff9d 190px,#00ff04 213px,#30ff00 220px,#edff00 238px,#fffe00 243px,#ffe800 245px,#ff5800 251px,#ff6e00 254px,#ffec00 257px)}.g29b{background:linear-gradient(#0f000f,#0f000f 43px,#2b002b 44px,#de00de 46px,#fe00ff 48px,#f400ff 49px,#c200ff 50px,#3900ff 52px,#0025ff 53px,#009cff 54px,#00ebff 55px,#00fdff 56px,#00ffe4 61px,#00fff2 62px,#00ffcf 82px,#00ff56 110px,#00ff00 140px,#7cff00 192px,#a3ff00 220px,#feff00 242px,#ffe800 245px,#ff5800 251px,#ff6e00 254px,#ffec00 257px)}.g29c{background:linear-gradient(#0f000f,#0f000f 44px,#bc00bc 46px,#f200f2 47px,#fc00fc 48px,#f800ff 49px,#d800ff 50px,#3500ff 53px,#0016ff 54px,#007aff 55px,#00b6ff 56px,#00ecff 59px,#00ffff 92px,#00ff85 165px,#00ff75 190px,#01ff00 212px,#abff00 229px,#efff00 238px,#fffe00 243px,#ffe800 245px,#ff5800 251px,#ff6e00 254px,#ffec00 257px)}.g29d{background:linear-gradient(#0f000f,#0f000f 44px,#480048 45px,#ef00ef 47px,#fb00ff 49px,#ea00ff 50px,#2300ff 54px,#0028ff 55px,#0078ff 56px,#00bfff 59px,#00c9ff 61px,#00b0ff 62px,#00f5ff 92px,#00ffff 108px,#00ffc4 165px,#00ffd8 185px,#00ffcd 192px,#00ff51 213px,#00ff0c 218px,#10ff00 220px,#6eff00 225px,#90ff00 228px,#edff00 238px,#fffe00 243px,#ffe800 245px,#ff5800 251px,#ff6e00 254px,#ffec00 257px)}.g29e{background:linear-gradient(#0f000f,#0f000f 44px,#3e003e 45px,#ee00ee 47px,#fc00ff 49px,#f100ff 50px,#3100ff 53px,#002eff 54px,#009eff 55px,#00e8ff 56px,#00ffff 58px,#00ffe7 84px,#00ff88 111px,#00ff00 163px,#00ff44 185px,#00ff01 209px,#0aff00 213px,#aeff00 225px,#fffe00 243px,#ffe800 245px,#ff5800 251px,#ff6e00 254px,#ffec00 257px)}.g29f{background:linear-gradient(#0f000f,#0f000f 44px,#4b004b 45px,#f000f0 47px,#fa00ff 49px,#e800ff 50px,#2800ff 53px,#003cff 54px,#00a8ff 55px,#00e9ff 56px,#00ffff 58px,#00ffe5 86px,#00ff8d 111px,#00ff01 165px,#00ff6e 185px,#00ff21 213px,#00ff00 215px,#adff00 225px,#fffe00 243px,#ffe800 245px,#ff5800 251px,#ff6e00 254px,#ffec00 257px)}.g2a0{background:linear-gradient(#0f000f,#0f000f 43px,#160016 44px,#c900c9 46px,#f400f4 47px,#fe00fe 48px,#f600ff 49px,#cf00ff 50px,#7600ff 52px,#0400ff 54px,#0055ff 55px,#0085ff 56px,#00c0ff 60px,#00c4ff 61px,#00aaff 62px,#00f7ff 95px,#00fff7 127px,#00ffca 165px,#00ffff 185px,#00fff3 198px,#00ffb9 213px,#00ff08 221px,#6cff00 225px,#e4ff00 237px,#fffe00 243px,#ffe800 245px,#ff5800 251px,#ff6e00 254px,#ffec00 257px)}.g2a1{background:linear-gradient(#0f000f,#0f000f 43px,#f000f0 46px,#fa00ff 48px,#e500ff 49px,#0005ff 53px,#006aff 54px,#00b2ff 55px,#00e7ff 58px,#00eeff 61px,#00ddff 62px,#00ffff 94px,#00ff8e 165px,#00ffea 180px,#00fff4 192px,#00ffb4 213px,#00ff12 220px,#0dff00 221px,#84ff00 225px,#efff00 238px,#fffe00 243px,#ffe800 245px,#ff5800 251px,#ff6e00 254px,#ffec00 257px)}.g2a2{background:linear-gradient(#0f000f,#0f000f 42px,#3b003b 43px,#ee00ee 45px,#fc00ff 47px,#f200ff 48px,#3d00ff 51px,#0019ff 52px,#008bff 53px,#00ddff 54px,#00f2ff 55px,#00ffff 64px,#00ffe5 88px,#00ff96 111px,#00ff0c 165px,#00ffab 180px,#00ffd1 185px,#00ffcc 189px,#00ff95 213px,#00ff00 219px,#aaff00 225px,#fffe00 243px,#ffe800 245px,#ff5800 251px,#ff6e00 254px,#ffec00 257px)}.g2a3{background:linear-gradient(#0f000f,#0f000f 41px,#270027 42px,#d900d9 44px,#fe00ff 46px,#f500ff 47px,#c500ff 48px,#0200ff 51px,#00d2ff 53px,#00fdff 55px,#00ffe6 83px,#00ff84 110px,#01ff00 160px,#0dff00 165px,#00ff06 167px,#00ffa6 185px,#00ff66 213px,#00ff0e 217px,#08ff00 218px,#b0ff00 225px,#fffe00 243px,#ffe800 245px,#ff5800 251px,#ff6e00 254px,#ffec00 257px)}.g2a4{background:linear-gradient(#0f000f,#0f000f 41px,#b900b9 43px,#f200f2 44px,#fc00fc 45px,#f800ff 46px,#da00ff 47px,#2100ff 50px,#0028ff 51px,#007fff 52px,#00b2ff 53px,#00d2ff 56px,#00b9ff 58px,#00c0ff 61px,#00a3ff 62px,#00fcff 101px,#00fff7 130px,#00ffcf 165px,#00fff2 175px,#00ffff 189px,#00ffeb 202px,#00ffbd 213px,#00ff0c 221px,#75ff00 226px,#e4ff00 237px,#fffe00 243px,#ffe800 245px,#ff5800 251px,#ff6e00 254px,#ffec00 257px)}.g2a5{background:linear-gradient(#0f000f,#0f000f 40px,#2c002c 41px,#df00df 43px,#fe00ff 45px,#f400ff 46px,#0200ff 50px,#00c9ff 52px,#00f8ff 54px,#00ffff 72px,#00ffea 91px,#00ff28 165px,#00ff8c 184px,#00ff8d 187px,#00ff37 213px,#00ff05 216px,#a3ff00 225px,#f2ff00 238px,#fffe00 243px,#ffe800 245px,#ff5800 251px,#ff6e00 254px,#ffec00 257px)}.g2a6{background:linear-gradient(#0f000f,#0f000f 40px,#390039 41px,#eb00eb 43px,#fc00ff 45px,#f300ff 46px,#000dff 50px,#008fff 51px,#00e7ff 52px,#00fcff 53px,#00ffc7 58px,#00ffc1 61px,#00ffd9 62px,#00ffae 80px,#00ff1c 110px,#01ff00 120px,#77ff00 165px,#32ff00 185px,#4eff00 213px,#c9ff00 225px,#fffe00 243px,#ffe800 245px,#ff5800 251px,#ff6e00 254px,#ffec00 257px)}.g2a7{background:linear-gradient(#0f000f,#0f000f 40px,#2f002f 41px,#e200e2 43px,#fe00ff 45px,#f400ff 46px,#0000ff 50px,#00aeff 52px,#00e1ff 55px,#00c7ff 58px,#00cdff 61px,#00b3ff 62px,#00f1ff 89px,#00ffff 107px,#00ffc2 165px,#00ffd6 185px,#00ffcb 192px,#00ff4f 213px,#00ff0a 218px,#12ff00 220px,#6fff00 225px,#9bff00 229px,#edff00 238px,#fffe00 243px,#ffe800 245px,#ff5800 251px,#ff6e00 254px,#ffec00 257px)}.g2a8{background:linear-gradient(#0f000f,#0f000f 40px,#150015 41px,#c700c7 43px,#f400f4 44px,#fe00fe 45px,#f700ff 46px,#d100ff 47px,#1600ff 50px,#00c1ff 52px,#00edff 53px,#00fcff 54px,#00ffdf 83px,#00ff77 110px,#00ff00 153px,#1cff00 165px,#23ff00 185px,#65ff00 213px,#bfff00 227px,#feff00 242px,#ffe800 245px,#ff5800 251px,#ff6e00 254px,#ffec00 257px)}.g2a9{background:linear-gradient(#0f000f,#0f000f 41px,#4c004c 42px,#f000f0 44px,#fa00ff 46px,#e700ff 47px,#3200ff 50px,#0039ff 51px,#00b0ff 52px,#00f1ff 53px,#00feff 54px,#00ffd3 58px,#00ffcc 61px,#00ffe2 62px,#00ffbb 80px,#00ff2e 110px,#01ff00 126px,#9fff00 192px,#b0ff00 220px,#fffe00 243px,#ffe800 245px,#ff5800 251px,#ff6e00 254px,#ffec00 257px)}.g2aa{background:linear-gradient(#0f000f,#0f000f 41px,#2d002d 42px,#df00df 44px,#fe00ff 46px,#f400ff 47px,#0600ff 51px,#00bcff 53px,#00f9ff 56px,#00ffff 85px,#00fff2 98px,#00ff46 178px,#00ff00 199px,#65ff00 220px,#eaff00 237px,#fffe00 243px,#ffe800 245px,#ff5800 251px,#ff6e00 254px,#ffec00 257px)}.g2ab{background:linear-gradient(#0f000f,#0f000f 41px,#170017 42px,#c900c9 44px,#f400f4 45px,#fe00fe 46px,#f600ff 47px,#cf00ff 48px,#2900ff 51px,#0015ff 52px,#0067ff 53px,#008dff 54px,#00a4ff 56px,#0085ff 58px,#008fff 61px,#006dff 62px,#00e7ff 100px,#00ffff 135px,#00ffce 192px,#00ff7e 204px,#00ff05 218px,#e1ff00 237px,#fffe00 243px,#ffe800 245px,#ff5800 251px,#ff6e00 254px,#ffec00 257px)}.g2ac{background:linear-gradient(#0f000f,#0f000f 42px,#c000c0 44px,#f300f3 45px,#fd00fd 46px,#f700ff 47px,#d500ff 48px,#1500ff 51px,#00c2ff 53px,#00f0ff 54px,#00fdff 55px,#00ffe0 82px,#00ff74 110px,#01ff00 152px,#97ff00 220px,#feff00 242px,#ffe800 245px,#ff5800 251px,#ff6e00 254px,#ffec00 257px)}.g2ad{background:linear-gradient(#0f000f,#0f000f 42px,#c200c2 44px,#f300f3 45px,#fd00fd 46px,#f700ff 47px,#d400ff 48px,#1400ff 51px,#00c3ff 53px,#00f0ff 54px,#00fdff 55px,#00ffe3 81px,#00ff75 110px,#00ff00 152px,#97ff00 220px,#feff00 242px,#ffe800 245px,#ff5800 251px,#ff6e00 254px,#ffec00 257px)}.g2ae{background:linear-gradient(#0f000f,#0f000f 41px,#160016 42px,#c800c8 44px,#f400f4 45px,#fe00fe 46px,#f600ff 47px,#d000ff 48px,#1600ff 51px,#004eff 52px,#00b0ff 53px,#00ddff 54px,#00fbff 56px,#00ffff 79px,#00ffea 96px,#00ff01 192px,#72ff00 220px,#ebff00 237px,#fffe00 243px,#ffe800 245px,#ff5800 251px,#ff6e00 254px,#ffec00 257px)}.g2af{background:linear-gradient(#0f000f,#0f000f 41px,#190019 42px,#cb00cb 44px,#f400f4 45px,#fe00fe 46px,#f600ff 47px,#ce00ff 48px,#1200ff 51px,#0057ff 52px,#00b8ff 53px,#00e3ff 54px,#00feff 56px,#00ffff 74px,#00ffeb 92px,#01ff00 186px,#7aff00 220px,#ecff00 237px,#fffe00 243px,#ffe800 245px,#ff5800 251px,#ff6e00 254px,#ffec00 257px)}.g2b0{background:linear-gradient(#0f000f,#110011 42px,#c400c4 44px,#f300f3 45px,#fd00fd 46px,#f700ff 47px,#d300ff 48px,#5c00ff 50px,#0d00ff 51px,#00d4ff 53px,#00faff 54px,#00ffff 55px,#00ffd8 58px,#00ffd1 61px,#00ffe4 63px,#00ffbd 81px,#00ff36 110px,#01ff00 129px,#99ff00 192px,#aeff00 220px,#fffe00 243px,#ffe800 245px,#ff5800 251px,#ff6e00 254px,#ffec00 257px)}.g2b1{background:linear-gradient(#0f000f,#0f000f 42px,#f100f1 45px,#fa00ff 47px,#e300ff 48px,#2800ff 51px,#003cff 52px,#00a8ff 53px,#00e7ff 54px,#00ffff 56px,#00ffe7 84px,#00ff8a 110px,#01ff00 163px,#8eff00 220px,#feff00 242px,#ffe800 245px,#ff5800 251px,#ff6e00 254px,#ffec00 257px)}.g2b2{background:linear-gradient(#0f000f,#0f000f 42px,#2a002a 43px,#dc00dc 45px,#fe00ff 47px,#f400ff 48px,#2500ff 52px,#0020ff 53px,#0076ff 54px,#00b3ff 57px,#00b4ff 61px,#0097ff 62px,#00f3ff 97px,#00ffff 118px,#00ffdd 161px,#00ffae 192px,#00ff05 215px,#23ff00 220px,#e3ff00 237px,#fffe00 243px,#ffe800 245px,#ff5800 251px,#ff6e00 254px,#ffec00 257px)}.g2b3{background:linear-gradient(#0f000f,#0f000f 43px,#f000f0 46px,#fa00ff 48px,#e600ff 49px,#1900ff 52px,#005eff 53px,#00c9ff 54px,#00faff 55px,#00ffdb 58px,#00ffd2 61px,#00ffe5 62px,#00ffc0 80px,#00ff35 110px,#00ff01 128px,#99ff00 192px,#aeff00 220px,#fffe00 243px,#ffe800 245px,#ff5800 251px,#ff6e00 254px,#ffec00 257px)}.g2b4{background:linear-gradient(#0f000f,#0f000f 43px,#160016 44px,#c900c9 46px,#f400f4 47px,#fe00fe 48px,#f600ff 49px,#d000ff 50px,#0b00ff 53px,#00c5ff 55px,#00eeff 56px,#00ffff 58px,#00ffff 63px,#00ffe6 87px,#00ff96 110px,#00ff00 169px,#89ff00 220px,#feff00 242px,#ffe800 245px,#ff5800 251px,#ff6e00 254px,#ffec00 257px)}.g2b5{background:linear-gradient(#0f000f,#0f000f 44px,#3f003f 45px,#ee00ee 47px,#fc00ff 49px,#f000ff 50px,#2d00ff 54px,#0017ff 55px,#006eff 56px,#00b9ff 59px,#00c3ff 61px,#00aaff 62px,#00f4ff 93px,#00ffff 109px,#00ffee 137px,#00ffa1 190px,#00ff00 214px,#2eff00 220px,#e4ff00 237px,#fffe00 243px,#ffe800 245px,#ff5800 251px,#ff6e00 254px,#ffec00 257px)}.g2b6{background:linear-gradient(#0f000f,#0f000f 44px,#200020 45px,#d200d2 47px,#f500f5 48px,#ff00ff 49px,#f500ff 50px,#cb00ff 51px,#1400ff 54px,#0052ff 55px,#00b2ff 56px,#00dbff 57px,#00fbff 59px,#00ffff 80px,#00ffe7 98px,#00ff00 193px,#71ff00 220px,#ebff00 237px,#fffe00 243px,#ffe800 245px,#ff5800 251px,#ff6e00 254px,#ffec00 257px)}.g2b7{background:linear-gradient(#0f000f,#0f000f 44px,#1a001a 45px,#cc00cc 47px,#f400f4 48px,#fe00fe 49px,#f600ff 50px,#c200ff 51px,#3400ff 53px,#002bff 54px,#00a4ff 55px,#00f0ff 56px,#00ffff 57px,#00ffdf 61px,#00fff0 62px,#00fff5 71px,#00fff6 114px,#00ff78 192px,#00ff73 219px,#baff00 220px,#fffe00 243px,#ffe800 245px,#ff5800 251px,#ff6e00 254px,#ffec00 257px)}.g2b8{background:linear-gradient(#0f000f,#0f000f 44px,#2f002f 45px,#e100e1 47px,#fe00ff 49px,#f400ff 50px,#000aff 54px,#007cff 55px,#00d3ff 56px,#00eeff 57px,#00ffff 59px,#00ffff 69px,#00fff5 83px,#00ffbe 110px,#00ffca 140px,#00ff6b 190px,#00ff16 215px,#00ff01 217px,#cdff00 233px,#fffe00 243px,#ffe800 245px,#ff5800 251px,#ff6e00 254px,#ffec00 257px)}.g2b9{background:linear-gradient(#0f000f,#0f000f 44px,#b400b4 46px,#f200f2 47px,#fb00fb 48px,#f900ff 49px,#dd00ff 50px,#6700ff 53px,#0004ff 55px,#003dff 56px,#0054ff 58px,#0073ff 59px,#007fff 61px,#005dff 62px,#00dfff 100px,#00dcff 111px,#00a6ff 140px,#00ffff 203px,#00ffd6 216px,#00ff9d 220px,#00ff0a 226px,#c7ff00 235px,#f2ff00 239px,#fffe00 243px,#ffe800 245px,#ff5800 251px,#ff6e00 254px,#ffec00 257px)}.g2ba{background:linear-gradient(#0f000f,#0f000f 43px,#3d003d 44px,#ee00ee 46px,#fc00ff 48px,#f100ff 49px,#3400ff 52px,#002cff 53px,#009eff 54px,#00e9ff 55px,#00ffff 57px,#00ffeb 79px,#00ffa9 100px,#00ffe2 140px,#00ff99 186px,#00ff57 215px,#00ff12 220px,#02ff00 221px,#cdff00 233px,#eeff00 237px,#fffe00 243px,#ffe800 245px,#ff5800 251px,#ff6e00 254px,#ffec00 257px)}.g2bb{background:linear-gradient(#0f000f,#0f000f 42px,#220022 43px,#d500d5 45px,#ff00ff 47px,#f500ff 48px,#c700ff 49px,#0900ff 52px,#00c4ff 54px,#00f8ff 56px,#00ffff 71px,#00ffc5 110px,#00ffce 141px,#00ff73 190px,#00ff1b 215px,#00ff06 217px,#1aff00 220px,#ccff00 233px,#f2ff00 238px,#fffe00 243px,#ffe800 245px,#ff5800 251px,#ff6e00 254px,#ffec00 257px)}.g2bc{background:linear-gradient(#0f000f,#0f000f 42px,#b300b3 44px,#f100f1 45px,#fb00fb 46px,#f900ff 47px,#de00ff 48px,#3200ff 51px,#0014ff 52px,#0073ff 53px,#00b0ff 54px,#00dcff 57px,#00dcff 61px,#00c5ff 62px,#00f6ff 87px,#00ffff 102px,#00ffe1 134px,#00ff80 190px,#00ff05 210px,#3fff00 220px,#eeff00 238px,#fffe00 243px,#ffe800 245px,#ff5800 251px,#ff6e00 254px,#ffec00 257px)}.g2bd{background:linear-gradient(#0f000f,#0f000f 41px,#290029 42px,#db00db 44px,#fe00ff 46px,#f400ff 47px,#c300ff 48px,#0700ff 51px,#00bfff 53px,#00e0ff 54px,#00fcff 56px,#00ffff 81px,#00ffe6 99px,#00ff00 194px,#6fff00 220px,#ebff00 237px,#fffe00 243px,#ffe800 245px,#ff5800 251px,#ff6e00 254px,#ffec00 257px)}.g2be{background:linear-gradient(#0f000f,#0f000f 41px,#3d003d 42px,#ee00ee 44px,#fc00ff 46px,#f100ff 47px,#000eff 51px,#00ccff 53px,#00fcff 56px,#00ffff 83px,#00ffa3 132px,#00ff21 189px,#01ff00 197px,#6aff00 220px,#eaff00 237px,#fffe00 243px,#ffe800 245px,#ff5800 251px,#ff6e00 254px,#ffec00 257px)}.g2bf{background:linear-gradient(#710071,#b200b2 8px,#fd00ff 25px,#cc00ff 38px,#c700ff 46px,#1d00ff 49px,#003eff 50px,#009fff 51px,#00e3ff 52px,#00fffa 54px,#00ff88 59px,#00ff17 63px,#01ff00 69px,#78ff00 100px,#d3ff00 154px,#fbff00 191px,#fff200 235px,#ffdc00 241px,#ffc100 243px,#ff8e00 246px,#ff0500 251px,#ff8e8e 257px)}.g2c0{background:linear-gradient(#180018,#180018 39px,#000000 40px,#000000 42px,#f400ff 47px,#3800ff 50px,#0015ff 51px,#007dff 52px,#00acff 53px,#006bff 54px,#00c6ff 56px,#00f2ff 59px,#00ffff 62px,#00ff78 142px,#01ff00 187px,#11ff00 192px,#7bff00 205px,#d6ff00 220px,#f6ff00 229px,#fffc00 239px,#ffbd00 246px,#ff0400 253px,#ff5757 257px)}.g2c1{background:linear-gradient(#a200a2,#d100d1 5px,#fc00ff 14px,#9b00ff 39px,#7100ff 40px,#6f00ff 47px,#3400ff 48px,#000cff 49px,#00c8ff 51px,#00f8ff 52px,#00ffff 53px,#00ff01 62px,#1dff00 63px,#a3ff00 100px,#c7ff00 123px,#faff00 172px,#fff000 235px,#ffd000 242px,#ff8f00 246px,#ff0600 251px,#ff8e8e 257px)}.g2c2{background:linear-gradient(#2c002c,#5b005b 5px,#ac00ac 21px,#ed00ed 38px,#d500d5 40px,#d500d5 44px,#ed00ff 46px,#3b00ff 49px,#0011ff 50px,#00cbff 52px,#00e9ff 53px,#00ffff 55px,#00ffd2 59px,#00ff79 63px,#01ff00 95px,#e6ff00 199px,#fffb00 235px,#ffe700 241px,#ffc200 244px,#ff8a00 247px,#ff0202 252px,#ff7a7a 257px)}.g2c3{background:linear-gradient(#000000,#000000 42px,#fa00fa 47px,#c900ff 48px,#0200ff 51px,#0066ff 52px,#0099ff 53px,#0039ff 54px,#00a1ff 56px,#00dcff 59px,#00ffff 63px,#00fff4 86px,#00ffa9 139px,#00ff49 180px,#00ff24 192px,#00ff08 195px,#d2ff00 222px,#f6ff00 231px,#fffb00 240px,#ffc000 246px,#ff0a00 253px,#ff1515 254px,#ff5252 257px)}.g2c4{background:linear-gradient(#df00ff,#7f00ff 14px,#1e00ff 39px,#0036ff 40px,#0036ff 46px,#5900ff 47px,#1d00ff 48px,#0030ff 49px,#0093ff 50px,#00dcff 51px,#00feff 52px,#00fffd 53px,#00ffdf 55px,#00ff01 63px,#03ff00 64px,#8aff00 100px,#b4ff00 124px,#f7ff00 178px,#fffd00 235px,#fff400 241px,#ffcc00 245px,#ff7b00 249px,#ff0600 253px,#ff5656 257px)}.g2c5{background:linear-gradient(#bc00bc,#fb00ff 9px,#8100ff 39px,#3400ff 40px,#3400ff 46px,#4c00ff 47px,#1100ff 48px,#00e5ff 51px,#00ffff 52px,#00ffe5 54px,#00ff9c 56px,#0cff00 62px,#2aff00 63px,#6fff00 81px,#adff00 100px,#c3ff00 114px,#fcff00 171px,#fff800 235px,#ffeb00 241px,#ffca00 244px,#ff9500 247px,#ff0b00 252px,#ff1414 253px,#ff6e6e 257px)}.g2c6{background:linear-gradient(#030003,#000000 42px,#d200d2 46px,#f000ff 47px,#3400ff 50px,#001cff 51px,#0082ff 52px,#00b1ff 53px,#0062ff 54px,#00c0ff 56px,#00eeff 59px,#00ffff 62px,#00ff89 138px,#00ff00 190px,#c2ff00 218px,#edff00 228px,#ffff00 238px,#fffb00 241px,#ffcb00 246px,#ff7400 250px,#ff0404 254px,#ff4242 257px)}.g2c7{background:linear-gradient(#060006,#000000 42px,#d500d5 46px,#ed00ff 47px,#3100ff 50px,#0020ff 51px,#0086ff 52px,#00b4ff 53px,#00a6ff 54px,#00ebff 56px,#00ffff 59px,#00ff89 100px,#02ff00 163px,#55ff00 192px,#e0ff00 215px,#fffd00 235px,#ffe400 241px,#ffc900 243px,#ff9800 246px,#ff1100 251px,#ff0e0e 252px,#ff8484 257px)}.g2c8{background:linear-gradient(#bb00bb,#fc00ff 9px,#8200ff 39px,#5b00ff 40px,#5b00ff 46px,#7200ff 47px,#3700ff 48px,#0007ff 49px,#00c5ff 51px,#00f6ff 52px,#00ffff 53px,#00ffe9 55px,#00ff18 63px,#00ff00 69px,#77ff00 100px,#ccff00 150px,#f9ff00 188px,#fffc00 235px,#fff000 241px,#ffd200 244px,#ff9f00 247px,#ff0707 253px,#ff6262 257px)}.g2c9{background:linear-gradient(#e300e3,#fa00ff 3px,#9f00ff 20px,#5900ff 39px,#2300ff 40px,#2300ff 46px,#6300ff 47px,#2700ff 48px,#0020ff 49px,#00d4ff 51px,#00fcff 52px,#00fffe 53px,#00fff1 55px,#00ff9d 59px,#00ff30 63px,#00ff00 75px,#61ff00 100px,#ccff00 159px,#f6ff00 192px,#fffc00 241px,#ffc000 247px,#ff7e00 250px,#ff0800 254px,#ff3636 257px)}.g2ca{background:linear-gradient(#140014,#140014 39px,#000000 41px,#180018 42px,#5b005b 43px,#ef00ef 46px,#d300ff 47px,#1700ff 50px,#0048ff 51px,#00a7ff 52px,#00cfff 53px,#00bdff 54px,#00f5ff 56px,#00ffff 58px,#00ffda 63px,#00ff6e 100px,#02ff00 151px,#72ff00 192px,#e9ff00 219px,#fffe00 237px,#fff400 241px,#ffbb00 246px,#ff5d00 250px,#ff0100 253px,#ff5a5a 257px)}.g2cb{background:linear-gradient(#e200e2,#fc00ff 3px,#a500ff 19px,#5b00ff 39px,#2f00ff 40px,#2f00ff 46px,#6d00ff 47px,#3200ff 48px,#000fff 49px,#00caff 51px,#00f8ff 52px,#00ffff 53px,#00ffdc 55px,#00ff1a 62px,#04ff00 63px,#8fff00 100px,#b9ff00 125px,#f9ff00 179px,#fff800 235px,#ffe800 241px,#ffc500 244px,#ff7600 248px,#ff0300 252px,#ff7575 257px)}.g2cc{background:linear-gradient(#910091,#c600c6 6px,#ff00ff 17px,#ac00ff 39px,#8c00ff 40px,#8c00ff 46px,#7900ff 47px,#0200ff 49px,#00beff 51px,#00f4ff 52px,#00fff6 54px,#00ff06 63px,#02ff00 65px,#86ff00 100px,#b2ff00 125px,#f8ff00 181px,#fff700 235px,#ffe600 241px,#ffc100 244px,#ff8900 247px,#ff0404 252px,#ff7b7b 257px)}.g2cd{background:linear-gradient(#070007,#000000 41px,#0d000d 42px,#4f004f 43px,#e400e4 46px,#de00ff 47px,#2200ff 50px,#0037ff 51px,#009aff 52px,#00c4ff 53px,#00afff 54px,#00efff 56px,#00ffff 59px,#00ffe3 63px,#00ff7f 100px,#00ff00 158px,#60ff00 192px,#dfff00 216px,#fffd00 237px,#fff000 241px,#ffc100 245px,#ff8400 248px,#ff1300 252px,#ff0c0c 253px,#ff6767 257px)}.g2ce{background:linear-gradient(#500050,#970097 9px,#fc00fc 32px,#ec00ff 38px,#f800ff 45px,#e000ff 46px,#2e00ff 49px,#0025ff 50px,#00d7ff 52px,#00feff 54px,#00fffc 55px,#00ffbd 59px,#00ff5a 63px,#03ff00 87px,#37ff00 100px,#d4ff00 180px,#faff00 208px,#fffa00 235px,#ffe900 241px,#ffc400 244px,#ff7500 248px,#ff0200 252px,#ff7676 257px)}.g2cf{background:linear-gradient(#5d005d,#990099 7px,#fa00fa 28px,#df00ff 38px,#df00ff 39px,#fa00fa 40px,#f900ff 46px,#0100ff 50px,#00bfff 52px,#00e1ff 53px,#00d0ff 54px,#00fcff 56px,#00ffff 57px,#00fff2 60px,#00ffc8 63px,#00ff54 99px,#00ff00 138px,#88ff00 190px,#dcff00 214px,#ffff00 238px,#fffc00 241px,#ffd000 246px,#ff7b00 250px,#ff0300 254px,#ff3a3a 257px)}.g2d0{background:linear-gradient(#b500b5,#fd00ff 10px,#8800ff 39px,#3600ff 40px,#3600ff 46px,#4700ff 47px,#0b00ff 48px,#00a9ff 50px,#00e9ff 51px,#00ffff 52px,#00fff1 54px,#0bff00 63px,#94ff00 100px,#b8ff00 121px,#fbff00 180px,#fffd00 237px,#fff200 242px,#ffc600 246px,#ff6d00 250px,#ff1300 253px,#ff0c0c 254px,#ff4949 257px)}.g2d1{background:linear-gradient(#160016,#160016 39px,#000000 40px,#000000 42px,#fa00fa 47px,#8d00ff 49px,#0200ff 51px,#0067ff 52px,#0099ff 53px,#004bff 54px,#00afff 56px,#00c4ff 57px,#00f0ff 60px,#00ffff 63px,#00fff2 83px,#00ff9b 139px,#00ff46 175px,#01ff00 194px,#c6ff00 218px,#f6ff00 229px,#fffd00 238px,#fff300 241px,#ffb500 246px,#ff0707 253px,#ff6262 257px)}.g2d2{background:linear-gradient(#380038,#670067 5px,#b400b4 20px,#fa00fa 38px,#fe00ff 45px,#1c00ff 49px,#0041ff 50px,#00a1ff 51px,#00e5ff 52px,#00fffd 55px,#00ffc3 59px,#00ff62 63px,#03ff00 89px,#31ff00 101px,#d8ff00 185px,#f8ff00 213px,#fffb00 240px,#ffc900 246px,#ff0808 254px,#ff4545 257px)}.g2d3{background:linear-gradient(#e300ff,#b400ff 5px,#7900ff 16px,#2200ff 39px,#0080ff 40px,#0080ff 46px,#2200ff 47px,#0028ff 48px,#00d0ff 50px,#00faff 51px,#00ffe4 53px,#00ff6a 56px,#00ff13 59px,#0bff00 60px,#63ff00 63px,#d6ff00 102px,#feff00 155px,#fff600 235px,#ffeb00 241px,#ffcb00 244px,#ff9600 247px,#ff0c00 252px,#ff1313 253px,#ff6d6d 257px)}.g2d4{background:linear-gradient(#540054,#a600a6 11px,#fc00fc 31px,#e800ff 39px,#e700e7 40px,#e700e7 45px,#fb00fb 46px,#0b00ff 50px,#00b4ff 52px,#00d8ff 53px,#00cdff 54px,#00fbff 56px,#00ffff 58px,#00ffcc 63px,#00ff57 100px,#00ff00 141px,#88ff00 192px,#e2ff00 215px,#fffc00 239px,#ffef00 242px,#ffc000 246px,#ff6500 250px,#ff0a00 253px,#ff1515 254px,#ff5252 257px)}.g2d5{background:linear-gradient(#9a009a,#c900c9 5px,#ff00ff 15px,#a300ff 38px,#b000ff 46px,#a700ff 47px,#3000ff 49px,#0022ff 50px,#0088ff 51px,#00d5ff 52px,#00ffff 55px,#00ffcd 59px,#00ff72 63px,#01ff00 93px,#36ff00 111px,#e4ff00 197px,#fffe00 235px,#fff000 241px,#ffd100 244px,#ff9e00 247px,#ff0909 253px,#ff6464 257px)}.g2d6{background:linear-gradient(#0011ff,#0062ff 6px,#00a2ff 15px,#00feff 40px,#00feff 46px,#7700ff 47px,#0001ff 49px,#00c1ff 51px,#00f5ff 52px,#00ffff 53px,#00ffeb 55px,#00ff1e 63px,#01ff00 71px,#71ff00 100px,#d0ff00 155px,#faff00 192px,#fffd00 234px,#fff000 241px,#ffd200 244px,#ff9f00 247px,#ff0707 253px,#ff6262 257px)}.g2d7{background:linear-gradient(#060006,#000000 42px,#fe00fe 47px,#c500ff 48px,#0002ff 51px,#006cff 52px,#009eff 53px,#007cff 54px,#00d2ff 56px,#00ffff 61px,#00ff6c 140px,#01ff00 181px,#23ff00 192px,#9aff00 206px,#dcff00 217px,#fdff00 228px,#fff800 237px,#ffe200 241px,#ffa600 245px,#ff0c00 251px,#ff1313 252px,#ff8888 257px)}.g2d8{background:linear-gradient(#190019,#650065 10px,#da00da 38px,#da00da 39px,#a900a9 40px,#a900a9 44px,#f900f9 46px,#0d00ff 50px,#00b2ff 52px,#00d7ff 53px,#00c1ff 54px,#00f7ff 56px,#00ffff 58px,#00ffd6 63px,#00ff68 100px,#00ff00 148px,#78ff00 192px,#e3ff00 218px,#fffc00 240px,#ffc800 246px,#ff0808 254px,#ff4646 257px)}.g2d9{background:linear-gradient(#f800ff,#d000ff 4px,#9300ff 15px,#3700ff 39px,#0057ff 40px,#0057ff 46px,#2a00ff 47px,#001cff 48px,#00c8ff 50px,#00f8ff 51px,#00fffb 52px,#00ffdd 54px,#00ff8f 56px,#00ff01 61px,#3bff00 63px,#c1ff00 105px,#fcff00 165px,#fffd00 235px,#fff500 241px,#ffcf00 245px,#ff8000 249px,#ff0c00 253px,#ff1414 254px,#ff5151 257px)}.g2da{background:linear-gradient(#4b004b,#870087 7px,#ec00ec 29px,#fe00fe 34px,#f100ff 38px,#fe00ff 45px,#e100ff 46px,#2e00ff 49px,#0024ff 50px,#00d6ff 52px,#00f0ff 53px,#00fffe 55px,#00ffcb 59px,#00ff6f 63px,#01ff00 92px,#2aff00 104px,#d4ff00 187px,#faff00 214px,#fffe00 235px,#fff000 241px,#ffd100 244px,#ff9e00 247px,#ff0909 253px,#ff6464 257px)}.g2db{background:linear-gradient(#b100b1,#fd00fd 10px,#7e00ff 40px,#8c00ff 47px,#1500ff 49px,#00aaff 51px,#00e9ff 52px,#00ffff 54px,#00ffbb 58px,#00ff3b 63px,#01ff00 78px,#59ff00 101px,#caff00 162px,#f6ff00 196px,#fffd00 235px,#fff000 241px,#ffd100 244px,#ff9f00 247px,#ff0808 253px,#ff6363 257px)}.g2dc{background:linear-gradient(#120012,#120012 39px,#000000 41px,#0b000b 42px,#4e004e 43px,#e300e3 46px,#df00ff 47px,#2300ff 50px,#0036ff 51px,#0098ff 52px,#00c3ff 53px,#00c0ff 54px,#00f7ff 56px,#00ffff 58px,#00ffd7 63px,#00ff69 100px,#01ff00 149px,#77ff00 192px,#c6ff00 206px,#f0ff00 218px,#fffd00 235px,#ffe500 241px,#ffbd00 244px,#ff0a0a 252px,#ff8080 257px)}.g2dd{background:linear-gradient(#900090,#cc00cc 7px,#fe00fe 17px,#ac00ff 39px,#9300ff 40px,#9300ff 46px,#8000ff 47px,#0900ff 49px,#00b7ff 51px,#00f0ff 52px,#00ffff 54px,#00ffab 59px,#00ff42 63px,#01ff00 80px,#50ff00 100px,#d1ff00 169px,#f7ff00 201px,#fffb00 239px,#fff100 242px,#ffc400 246px,#ff6a00 250px,#ff1000 253px,#ff0f0f 254px,#ff4c4c 257px)}.g2de{background:linear-gradient(#0011ff,#0062ff 6px,#00b7ff 19px,#00ebff 34px,#00f4ff 46px,#9500ff 47px,#1e00ff 49px,#003dff 50px,#009eff 51px,#00e3ff 52px,#00fffc 55px,#00ffbd 59px,#00ff5a 63px,#03ff00 87px,#37ff00 100px,#d4ff00 180px,#f7ff00 208px,#fffc00 238px,#ffef00 242px,#ffc100 246px,#ff8000 249px,#ff0c00 253px,#ff1414 254px,#ff5050 257px)}.g2df{background:linear-gradient(#080008,#000000 41px,#1b001b 42px,#5e005e 43px,#f300f3 46px,#d000ff 47px,#1300ff 50px,#00abff 52px,#00d2ff 53px,#00c6ff 54px,#00f9ff 56px,#00ffff 58px,#00ffd2 63px,#00ff61 100px,#00ff00 145px,#7fff00 192px,#e5ff00 216px,#ffff00 236px,#fff300 241px,#ffc700 245px,#ff8c00 248px,#ff0202 253px,#ff5e5e 257px)}.g2e0{background:linear-gradient(#d700ff,#a800ff 5px,#6d00ff 16px,#1500ff 39px,#0067ff 40px,#0067ff 46px,#4000ff 47px,#0400ff 48px,#00b1ff 50px,#00edff 51px,#00ffff 52px,#00ffdb 54px,#00ff8b 56px,#04ff00 61px,#3fff00 63px,#5eff00 71px,#b7ff00 98px,#d4ff00 117px,#fcff00 163px,#fff700 235px,#ffea00 241px,#ffc800 244px,#ff9200 247px,#ff0700 252px,#ff7171 257px)}.g2e1{background:linear-gradient(#490049,#850085 7px,#d600d6 24px,#fe00ff 35px,#fe00ff 45px,#e000ff 46px,#2d00ff 49px,#0026ff 50px,#008bff 51px,#00d7ff 52px,#00ffff 54px,#00ffca 58px,#00ff50 63px,#02ff00 84px,#41ff00 100px,#c6ff00 168px,#f9ff00 204px,#fff900 235px,#ffe500 241px,#ffcd00 243px,#ff9e00 246px,#ff1900 251px,#ff0707 252px,#ff7d7d 257px)}.g2e2{background:linear-gradient(#090009,#000000 42px,#1a001a 43px,#ea00ea 47px,#d800ff 48px,#1200ff 51px,#004fff 52px,#0084ff 53px,#0009ff 54px,#0079ff 56px,#00d2ff 60px,#00f7ff 63px,#00fffb 91px,#00ffb4 152px,#00ff53 192px,#00ff01 200px,#c5ff00 222px,#f3ff00 231px,#fff800 241px,#ffae00 247px,#ff0c00 253px,#ff1414 254px,#ff5151 257px)}.g2e3{background:linear-gradient(#340034,#340034 39px,#000000 40px,#000000 42px,#fe00fe 47px,#0003ff 51px,#006dff 52px,#009eff 53px,#0060ff 54px,#00beff 56px,#00edff 59px,#00ffff 62px,#00ff89 139px,#01ff00 191px,#acff00 212px,#eeff00 225px,#ffef00 241px,#ffad00 246px,#ff0d00 252px,#ff1212 253px,#ff6c6c 257px)}.g2e4{background:linear-gradient(#820082,#c300c3 8px,#fd00ff 21px,#bb00ff 38px,#be00ff 46px,#9b00ff 47px,#2400ff 49px,#0033ff 50px,#0096ff 51px,#00deff 52px,#00fffc 55px,#00ffbe 59px,#00ff5b 63px,#02ff00 87px,#36ff00 100px,#d7ff00 182px,#f7ff00 207px,#fffe00 235px,#fff300 241px,#ffba00 246px,#ff0000 253px,#ff5c5c 257px)}.g2e5{background:linear-gradient(#1b001b,#1b001b 39px,#000000 40px,#000000 42px,#f500ff 47px,#3900ff 50px,#0013ff 51px,#007bff 52px,#00abff 53px,#007cff 54px,#00d1ff 56px,#00ffff 61px,#00ff6c 140px,#01ff00 181px,#23ff00 192px,#a0ff00 208px,#d8ff00 218px,#f9ff00 228px,#fffd00 237px,#ffef00 241px,#ffbd00 245px,#ff7f00 248px,#ff0d00 252px,#ff1212 253px,#ff6c6c 257px)}.g2e6{background:linear-gradient(#020002,#000000 42px,#140014 43px,#e400e4 47px,#de00ff 48px,#1800ff 51px,#0047ff 52px,#007dff 53px,#0024ff 54px,#0090ff 56px,#00e0ff 60px,#00fcff 63px,#00fffb 84px,#00ffae 145px,#00ff39 192px,#00ff04 197px,#c9ff00 219px,#f8ff00 229px,#fff500 239px,#ffea00 241px,#ffa200 246px,#ff0101 252px,#ff7979 257px)}.g2e7{background:linear-gradient(#fe00fe,#a400ff 13px,#3e00ff 39px,#0011ff 40px,#0011ff 46px,#5000ff 47px,#1400ff 48px,#003dff 49px,#009eff 50px,#00e3ff 51px,#00ffff 52px,#00ffe5 54px,#00ff9b 56px,#00ff10 61px,#2cff00 63px,#74ff00 82px,#aeff00 100px,#cbff00 119px,#fdff00 173px,#fff700 235px,#ffe900 241px,#ffc600 244px,#ff9000 247px,#ff0400 252px,#ff7474 257px)}.g2e8{background:linear-gradient(#490049,#900090 9px,#de00de 26px,#fe00ff 35px,#fb00fb 45px,#e400ff 46px,#3100ff 49px,#0020ff 50px,#00d4ff 52px,#00ffff 55px,#00ffda 59px,#00ff86 63px,#02ff00 99px,#e8ff00 205px,#fffb00 239px,#ffef00 242px,#ffc000 246px,#ff0a00 253px,#ff1515 254px,#ff5252 257px)}.g2e9{background:linear-gradient(#140014,#140014 39px,#000000 40px,#000000 43px,#150015 44px,#ef00ef 48px,#d400ff 49px,#0300ff 52px,#0035ff 53px,#7100ff 54px,#2700ff 56px,#0100ff 58px,#008dff 63px,#00e4ff 96px,#00fffe 156px,#00ffe1 191px,#00ffad 198px,#00ff0c 211px,#caff00 229px,#f7ff00 236px,#fffd00 241px,#ffbe00 247px,#ff7b00 250px,#ff0400 254px,#ff3a3a 257px)}.g2ea{background:linear-gradient(#7500ff,#3f00ff 6px,#0200ff 18px,#0074ff 39px,#00fbff 40px,#00fbff 46px,#0400ff 47px,#00e7ff 50px,#00ffff 51px,#00ffb1 54px,#00ff4e 56px,#0bff00 59px,#7eff00 63px,#e3ff00 100px,#fffe00 163px,#ffe700 192px,#fff700 236px,#ffef00 241px,#ffc400 245px,#ff0707 253px,#ff6262 257px)}.g2eb{background:linear-gradient(#0011ff,#0062ff 6px,#00adff 17px,#00e6ff 32px,#00f9ff 46px,#8a00ff 47px,#1300ff 49px,#00acff 51px,#00eaff 52px,#00fffd 54px,#00ff9a 59px,#00ff2c 63px,#03ff00 75px,#64ff00 100px,#ceff00 159px,#f9ff00 195px,#fffb00 235px,#ffec00 241px,#ffca00 244px,#ff9500 247px,#ff0b00 252px,#ff1414 253px,#ff6e6e 257px)}.g2ec{background:linear-gradient(#160016,#160016 39px,#000000 40px,#000000 42px,#f700f7 47px,#9000ff 49px,#0500ff 51px,#0062ff 52px,#0095ff 53px,#0058ff 54px,#00b9ff 56px,#00eaff 59px,#00ffff 62px,#00ffec 84px,#00ff92 138px,#00ff04 192px,#ccff00 217px,#f6ff00 227px,#fff500 239px,#ffea00 241px,#ffa300 246px,#ff0000 252px,#ff7878 257px)}.g2ed{background:linear-gradient(#6d006d,#ae00ae 8px,#fd00ff 26px,#d000ff 39px,#b500ff 40px,#b500ff 46px,#0700ff 49px,#00b9ff 51px,#00f1ff 52px,#00fff6 54px,#00ff07 63px,#01ff00 65px,#86ff00 100px,#b0ff00 124px,#faff00 184px,#fff500 235px,#ffe300 241px,#ffcb00 243px,#ff9b00 246px,#ff1500 251px,#ff0a0a 252px,#ff8080 257px)}.g2ee{background:linear-gradient(#e500ff,#bd00ff 4px,#8000ff 15px,#2400ff 39px,#0086ff 40px,#0086ff 46px,#1b00ff 47px,#0032ff 48px,#00d6ff 50px,#00fcff 51px,#00fff5 52px,#00ffd2 54px,#00ff7c 56px,#00ff09 60px,#15ff00 61px,#50ff00 63px,#c9ff00 101px,#fdff00 159px,#fffc00 235px,#fff500 241px,#ffcf00 245px,#ff7e00 249px,#ff0a00 253px,#ff1515 254px,#ff5252 257px)}.g2ef{background:linear-gradient(#0f000f,#5b005b 10px,#d000d0 38px,#d000d0 39px,#9c009c 40px,#9c009c 44px,#f600f6 46px,#cd00ff 47px,#1000ff 50px,#00afff 52px,#00d4ff 53px,#00a4ff 54px,#00e9ff 56px,#00ffff 59px,#00ff8c 100px,#00ff01 163px,#53ff00 192px,#d7ff00 220px,#fffe00 241px,#ffcb00 247px,#ff0707 255px,#ff2626 257px)}.g2f0{background:linear-gradient(#180018,#180018 39px,#000000 40px,#000000 43px,#d000d0 47px,#f300ff 48px,#2c00ff 51px,#0027ff 52px,#0060ff 53px,#2600ff 54px,#0100ff 55px,#0038ff 56px,#0071ff 58px,#00ddff 63px,#00feff 90px,#00ffec 140px,#00ffb3 178px,#00ff91 192px,#00ff0a 204px,#c6ff00 224px,#f4ff00 232px,#fffa00 240px,#ffbc00 246px,#ff0300 253px,#ff5959 257px)}.g2f1{background:linear-gradient(#0f000f,#630063 15px,#bc00bc 37px,#bf00bf 39px,#9b009b 40px,#9b009b 43px,#a200a2 44px,#f800ff 46px,#0000ff 50px,#00c0ff 52px,#00e1ff 53px,#00ffff 56px,#00fff2 59px,#00ffb3 63px,#00ff30 101px,#00ff00 123px,#eaff00 214px,#fffe00 237px,#fff500 241px,#ffbd00 246px,#ff6000 250px,#ff0500 253px,#ff5757 257px)}.g2f2{background:linear-gradient(#8600ff,#4b00ff 7px,#0200ff 22px,#005bff 39px,#00e4ff 40px,#00e4ff 46px,#2100ff 47px,#002aff 48px,#00d1ff 50px,#00fbff 51px,#00fff8 52px,#00ffd3 54px,#00ff7e 56px,#00ff0b 60px,#13ff00 61px,#4eff00 63px,#ccff00 104px,#fdff00 160px,#fffb00 235px,#fff300 241px,#ffcb00 245px,#ff9200 248px,#ff0400 253px,#ff5757 257px)}.g2f3{background:linear-gradient(#200020,#200020 39px,#000000 40px,#000000 41px,#110011 42px,#540054 43px,#e800e8 46px,#da00ff 47px,#1e00ff 50px,#003eff 51px,#009fff 52px,#00c8ff 53px,#00bfff 54px,#00f6ff 56px,#00ffff 58px,#00ffd8 63px,#00ff6b 100px,#02ff00 150px,#75ff00 192px,#bdff00 205px,#ecff00 218px,#fffd00 236px,#ffed00 241px,#ffba00 245px,#ff7b00 248px,#ff0900 252px,#ff1616 253px,#ff7070 257px)}.g2f4{background:linear-gradient(#070007,#030003 42px,#460046 43px,#da00da 46px,#e800ff 47px,#2c00ff 50px,#0028ff 51px,#008dff 52px,#00baff 53px,#0071ff 54px,#00caff 56px,#00f3ff 59px,#00ffff 62px,#00ff75 141px,#01ff00 185px,#17ff00 192px,#78ff00 205px,#ceff00 220px,#fffe00 240px,#ffd000 246px,#ff7b00 250px,#ff0400 254px,#ff3a3a 257px)}.g2f5{background:linear-gradient(#c500c5,#fe00ff 7px,#7800ff 39px,#3900ff 40px,#3900ff 46px,#5a00ff 47px,#1f00ff 48px,#002dff 49px,#0091ff 50px,#00dbff 51px,#00fdff 52px,#00fffd 53px,#00ffde 55px,#00ff00 63px,#8bff00 100px,#b9ff00 127px,#faff00 182px,#fffd00 235px,#fff300 241px,#ffca00 245px,#ff7800 249px,#ff0200 253px,#ff5959 257px)}.g2f6{background:linear-gradient(#0011ff,#0062ff 6px,#00a2ff 15px,#00fffd 40px,#00fffd 46px,#5300ff 47px,#1800ff 48px,#0038ff 49px,#009aff 50px,#00e0ff 51px,#00feff 52px,#00fffc 53px,#00ffee 54px,#00ff0a 62px,#14ff00 63px,#9cff00 100px,#bdff00 120px,#fbff00 177px,#fffb00 235px,#fff000 241px,#ffc400 245px,#ff0808 253px,#ff6363 257px)}.g2f7{background:linear-gradient(#150015,#150015 39px,#000000 40px,#000000 42px,#060006 43px,#d600d6 47px,#ec00ff 48px,#2600ff 51px,#0031ff 52px,#0068ff 53px,#2400ff 54px,#0001ff 55px,#003bff 56px,#0058ff 57px,#00dfff 63px,#00ffff 92px,#00ffee 136px,#00ffb3 177px,#00ff8e 192px,#00ff00 205px,#c8ff00 225px,#f4ff00 233px,#fffa00 241px,#ffb200 247px,#ff1200 253px,#ff0e0e 254px,#ff4b4b 257px)}.g2f8{background:linear-gradient(#750075,#bc00bc 9px,#fd00ff 24px,#bf00ff 40px,#bf00ff 46px,#1a00ff 49px,#0043ff 50px,#00a3ff 51px,#00e6ff 52px,#00ffff 55px,#00ffd3 59px,#00ff7a 63px,#01ff00 95px,#d4ff00 191px,#fffe00 241px,#ffc900 247px,#ff8a00 250px,#ff1500 254px,#ff0a0a 255px,#ff2929 257px)}.g2f9{background:linear-gradient(#0f000f,#0f000f 3px,#570057 16px,#af00af 38px,#af00af 39px,#950095 40px,#950095 43px,#ac00ac 44px,#de00de 45px,#ef00ff 46px,#000fff 50px,#00caff 52px,#00e8ff 53px,#00fffe 56px,#00ffe8 59px,#00ff9f 63px,#00ff18 100px,#01ff00 111px,#deff00 205px,#fffe00 237px,#fff500 241px,#ffbf00 246px,#ff6200 250px,#ff0700 253px,#ff5555 257px)}.g2fa{background:linear-gradient(#df00df,#fe00ff 3px,#ac00ff 18px,#5e00ff 39px,#1b00ff 40px,#1b00ff 46px,#5600ff 47px,#1b00ff 48px,#0033ff 49px,#0096ff 50px,#00deff 51px,#00feff 52px,#00fffc 53px,#00ffdf 55px,#00ff03 63px,#01ff00 64px,#89ff00 100px,#b3ff00 124px,#f8ff00 180px,#fffe00 235px,#fff500 241px,#ffcf00 245px,#ff7f00 249px,#ff0b00 253px,#ff1414 254px,#ff5151 257px)}.g2fb{background:linear-gradient(#e400ff,#8d00ff 12px,#2200ff 39px,#0042ff 40px,#0042ff 46px,#4c00ff 47px,#1000ff 48px,#00e6ff 51px,#00ffff 52px,#00fff0 54px,#00ff11 62px,#0eff00 63px,#97ff00 100px,#baff00 121px,#fbff00 179px,#fffd00 235px,#fff500 241px,#ffce00 245px,#ff7d00 249px,#ff0900 253px,#ff5353 257px)}.g2fc{background:linear-gradient(#7600ff,#4700ff 5px,#0300ff 18px,#0073ff 39px,#00eeff 40px,#00eeff 46px,#2200ff 47px,#0029ff 48px,#00d0ff 50px,#00faff 51px,#00fff8 52px,#00ffd4 54px,#00ff7f 56px,#00ff0d 60px,#11ff00 61px,#4cff00 63px,#cbff00 104px,#fcff00 158px,#fffb00 235px,#fff300 241px,#ffcc00 245px,#ff7a00 249px,#ff0500 253px,#ff5757 257px)}.g2fd{background:linear-gradient(#840084,#b900b9 6px,#ff00ff 20px,#b900ff 38px,#c900ff 46px,#a900ff 47px,#3200ff 49px,#001fff 50px,#00d3ff 52px,#00eeff 53px,#00ffff 55px,#00ffcd 59px,#00ff71 63px,#03ff00 93px,#3eff00 114px,#e3ff00 196px,#fffd00 235px,#ffee00 241px,#ffcd00 244px,#ff9800 247px,#ff0f00 252px,#ff1010 253px,#ff6a6a 257px)}.g2fe{background:linear-gradient(#0f000f,#530053 9px,#b800b8 32px,#cd00cd 39px,#b400b4 40px,#b400b4 44px,#de00de 45px,#ee00ff 46px,#000fff 50px,#00caff 52px,#00e8ff 53px,#00ffff 56px,#00ffea 59px,#00ffa2 63px,#00ff1c 100px,#01ff00 113px,#deff00 206px,#fffd00 238px,#fff000 242px,#ffc200 246px,#ff8100 249px,#ff0d00 253px,#ff1212 254px,#ff4f4f 257px)}.g2ff{background:linear-gradient(#110011,#110011 39px,#000000 40px,#030003 42px,#460046 43px,#db00db 46px,#e700ff 47px,#2b00ff 50px,#0029ff 51px,#008eff 52px,#00baff 53px,#0095ff 54px,#00e1ff 56px,#00ffff 60px,#01ff00 171px,#40ff00 192px,#a7ff00 207px,#e0ff00 219px,#fffe00 237px,#fff300 241px,#ffb600 246px,#ff0606 253px,#ff6161 257px)}.g300{background:linear-gradient(#0011ff,#0062ff 6px,#00adff 17px,#00ffff 40px,#00ffff 46px,#5e00ff 47px,#2300ff 48px,#0027ff 49px,#008cff 50px,#00d8ff 51px,#00fdff 52px,#00fffe 53px,#03ff00 62px,#21ff00 63px,#86ff00 90px,#c4ff00 119px,#f9ff00 169px,#fff500 235px,#ffe500 241px,#ffc000 244px,#ff8800 247px,#ff0505 252px,#ff7c7c 257px)}.g301{background:linear-gradient(#280028,#280028 39px,#000000 40px,#000000 42px,#0e000e 43px,#de00de 47px,#e400ff 48px,#1e00ff 51px,#003eff 52px,#0074ff 53px,#0005ff 54px,#0075ff 56px,#00cfff 60px,#00f6ff 63px,#00ffff 76px,#00ffd4 133px,#00ff9f 164px,#00ff57 192px,#00ff00 200px,#92ff00 214px,#ebff00 227px,#ffef00 241px,#ffab00 246px,#ff0b00 252px,#ff1414 253px,#ff6e6e 257px)}.g302{background:linear-gradient(#1a001a,#1a001a 39px,#000000 40px,#000000 42px,#d200d2 46px,#f100ff 47px,#3400ff 50px,#001bff 51px,#0082ff 52px,#00b0ff 53px,#0074ff 54px,#00ccff 56px,#00ffff 61px,#00ff74 140px,#01ff00 184px,#1aff00 192px,#88ff00 206px,#cfff00 218px,#f4ff00 228px,#fffc00 239px,#ffbd00 246px,#ff6100 250px,#ff0600 253px,#ff5656 257px)}.g303{background:linear-gradient(#6d006d,#a800a8 7px,#fd00ff 26px,#d000ff 39px,#b500ff 40px,#b500ff 46px,#0600ff 49px,#00baff 51px,#00f1ff 52px,#00fffd 54px,#00ff99 59px,#00ff2b 63px,#01ff00 74px,#65ff00 100px,#d2ff00 161px,#f8ff00 193px,#fffd00 235px,#fff100 241px,#ffd400 244px,#ff8b00 248px,#ff0404 253px,#ff5f5f 257px)}.g304{background:linear-gradient(#4d004d,#990099 10px,#f500f5 31px,#f000ff 39px,#e700e7 40px,#e700e7 45px,#fb00ff 46px,#0300ff 50px,#00bdff 52px,#00f7ff 54px,#00ffff 55px,#00ffd8 59px,#00ff82 63px,#03ff00 98px,#f1ff00 205px,#fff600 234px,#ffca00 242px,#ff8600 246px,#ff0404 251px,#ff9696 257px)}.g305{background:linear-gradient(#0f000f,#6b006b 15px,#c400c4 37px,#c700c7 39px,#ae00ae 40px,#ae00ae 44px,#df00df 45px,#ee00ff 46px,#0010ff 50px,#00cbff 52px,#00ffff 55px,#00ffd7 59px,#00ff81 63px,#00ff00 97px,#eaff00 203px,#fffd00 234px,#ffea00 241px,#ffd400 243px,#ff9000 247px,#ff0500 252px,#ff7474 257px)}.g306{background:linear-gradient(#ca00ca,#fe00ff 6px,#7200ff 39px,#1b00ff 40px,#1b00ff 46px,#4200ff 47px,#0700ff 48px,#00aeff 50px,#00ecff 51px,#00ffff 52px,#00ffe2 55px,#00ff08 63px,#00ff00 65px,#85ff00 100px,#dbff00 154px,#fdff00 190px,#fffc00 241px,#ffc400 247px,#ff8300 250px,#ff0d00 254px,#ff1212 255px,#ff3131 257px)}.g307{background:linear-gradient(#830083,#b200b2 5px,#ff00ff 20px,#b900ff 39px,#8900ff 40px,#8900ff 46px,#6900ff 47px,#2d00ff 48px,#0017ff 49px,#00ceff 51px,#00faff 52px,#00ffff 53px,#00ffe4 55px,#00ff0c 63px,#00ff00 66px,#7eff00 99px,#a9ff00 122px,#f8ff00 183px,#fffc00 235px,#fff100 241px,#ffd300 244px,#ffa100 247px,#ff0606 253px,#ff6161 257px)}.g308{background:linear-gradient(#130013,#130013 39px,#000000 40px,#000000 42px,#200020 43px,#f000f0 47px,#d300ff 48px,#0c00ff 51px,#0058ff 52px,#008cff 53px,#0022ff 54px,#008eff 56px,#00ceff 59px,#00f6ff 62px,#00feff 66px,#00fffa 86px,#00ffb9 140px,#00ff3c 192px,#00ff00 198px,#c2ff00 220px,#f0ff00 229px,#fffd00 239px,#ffbd00 246px,#ff0400 253px,#ff5757 257px)}.g309{background:linear-gradient(#e600e6,#ff00ff 2px,#a500ff 18px,#5700ff 39px,#3300ff 40px,#3300ff 46px,#7500ff 47px,#0003ff 49px,#00c2ff 51px,#00f5ff 52px,#00fffc 54px,#00ff90 59px,#00ff20 63px,#00ff00 71px,#6fff00 100px,#cfff00 155px,#f9ff00 191px,#fffd00 235px,#fff200 241px,#ffc700 245px,#ff7300 249px,#ff0303 253px,#ff5e5e 257px)}.g30a{background:linear-gradient(#cc00cc,#fd00ff 6px,#7100ff 39px,#3600ff 40px,#3600ff 46px,#5e00ff 47px,#2300ff 48px,#0026ff 49px,#008bff 50px,#00d7ff 51px,#00fdff 52px,#00fffe 53px,#00ffe3 55px,#00ff0b 63px,#01ff00 66px,#82ff00 100px,#b0ff00 126px,#f9ff00 184px,#fffd00 236px,#fff500 241px,#ffbf00 246px,#ff6200 250px,#ff0700 253px,#ff5454 257px)}.g30b{background:linear-gradient(#e700e7,#ff00ff 2px,#b200ff 15px,#5600ff 39px,#3300ff 40px,#3300ff 46px,#7600ff 47px,#0002ff 49px,#00c2ff 51px,#00f5ff 52px,#00fffd 54px,#00ff97 59px,#00ff29 63px,#00ff01 73px,#67ff00 100px,#cdff00 157px,#f8ff00 192px,#fffe00 235px,#fff400 241px,#ffcb00 245px,#ff9200 248px,#ff0500 253px,#ff5757 257px)}.g30c{background:linear-gradient(#0b000b,#000000 42px,#fe00ff 47px,#0006ff 51px,#006fff 52px,#00a0ff 53px,#0063ff 54px,#00c1ff 56px,#00eeff 59px,#00ffff 62px,#00ff88 138px,#01ff00 190px,#cbff00 217px,#f9ff00 229px,#fffb00 238px,#fff000 241px,#ffae00 246px,#ff0f00 252px,#ff1010 253px,#ff6a6a 257px)}.g30d{background:linear-gradient(#090009,#000000 42px,#fc00ff 47px,#000aff 51px,#0073ff 52px,#00a3ff 53px,#0065ff 54px,#00c2ff 56px,#00efff 59px,#00ffff 62px,#00ff7e 142px,#00ff00 189px,#caff00 217px,#f6ff00 228px,#fffc00 238px,#fff100 241px,#ffb200 246px,#ff1400 252px,#ff0b0b 253px,#ff6565 257px)}.g30e{background:linear-gradient(#630063,#9f009f 7px,#fe00ff 28px,#d900ff 38px,#d900ff 46px,#2600ff 49px,#0031ff 50px,#0094ff 51px,#00ddff 52px,#00ffff 54px,#00ffc1 58px,#00ff43 63px,#00ff00 80px,#4eff00 100px,#d0ff00 169px,#faff00 203px,#fffa00 235px,#ffe800 241px,#ffc400 244px,#ff7400 248px,#ff0100 252px,#ff7777 257px)}.g30f{background:linear-gradient(#8d008d,#bc00bc 5px,#fe00ff 18px,#b000ff 39px,#7a00ff 40px,#7a00ff 46px,#6400ff 47px,#2800ff 48px,#001eff 49px,#0085ff 50px,#00d3ff 51px,#00fbff 52px,#00ffff 53px,#00ffd9 55px,#09ff00 63px,#90ff00 99px,#b7ff00 121px,#faff00 179px,#fffa00 234px,#ffec00 241px,#ffca00 244px,#ff9500 247px,#ff0b00 252px,#ff1414 253px,#ff6e6e 257px)}.g310{background:linear-gradient(#9b009b,#ca00ca 5px,#fe00ff 15px,#a200ff 39px,#7d00ff 40px,#7d00ff 46px,#7400ff 47px,#3800ff 48px,#0005ff 49px,#00c4ff 51px,#00f6ff 52px,#00ffff 53px,#00ffe8 55px,#00ff17 63px,#01ff00 69px,#78ff00 100px,#d0ff00 152px,#faff00 189px,#fffc00 234px,#ffdc00 243px,#ffb200 246px,#ff1400 252px,#ff0b0b 253px,#ff6666 257px)}.g311{background:linear-gradient(#e200e2,#fb00ff 3px,#a900ff 18px,#5b00ff 39px,#2800ff 40px,#2800ff 46px,#6700ff 47px,#2b00ff 48px,#001aff 49px,#00d0ff 51px,#00fbff 52px,#00ffff 53px,#00ffe0 55px,#00ff04 63px,#00ff00 64px,#88ff00 100px,#b6ff00 127px,#f7ff00 179px,#fffb00 235px,#ffef00 241px,#ffd000 244px,#ff9d00 247px,#ff1500 252px,#ff0b0b 253px,#ff6565 257px)}.g312{background:linear-gradient(#920092,#ce00ce 7px,#fe00ff 17px,#a200ff 40px,#a200ff 46px,#9100ff 47px,#1a00ff 49px,#0043ff 50px,#00a3ff 51px,#00e6ff 52px,#00fffc 55px,#00ffbe 59px,#00ff5b 63px,#02ff00 87px,#36ff00 100px,#d7ff00 182px,#f7ff00 209px,#fffd00 238px,#fff200 242px,#ffc600 246px,#ff6c00 250px,#ff1200 253px,#ff0d0d 254px,#ff4a4a 257px)}.g313{background:linear-gradient(#280028,#5e005e 6px,#a000a0 19px,#ea00ea 38px,#dd00dd 44px,#eb00eb 45px,#e100ff 46px,#2e00ff 49px,#0024ff 50px,#00d6ff 52px,#00f0ff 53px,#00fffe 55px,#00ffca 59px,#00ff6d 63px,#03ff00 92px,#25ff00 101px,#d3ff00 186px,#f8ff00 211px,#fffe00 234px,#fff000 241px,#ffd000 244px,#ff9d00 247px,#ff1500 252px,#ff0b0b 253px,#ff6565 257px)}.g314{background:linear-gradient(#e300ff,#b400ff 5px,#7e00ff 15px,#2200ff 39px,#0053ff 40px,#0053ff 46px,#4200ff 47px,#0600ff 48px,#00afff 50px,#00ecff 51px,#00ffff 52px,#00ffeb 54px,#00ff02 62px,#1dff00 63px,#a2ff00 100px,#c4ff00 121px,#fcff00 176px,#fffd00 235px,#fff500 241px,#ffce00 245px,#ff7d00 249px,#ff0900 253px,#ff5353 257px)}.g315{background:linear-gradient(#290029,#580058 5px,#a900a9 21px,#ea00ea 38px,#d700d7 40px,#d700d7 44px,#e800ff 46px,#3500ff 49px,#001aff 50px,#00d0ff 52px,#00ecff 53px,#00fffc 56px,#00ffde 59px,#00ff8c 63px,#01ff00 101px,#e8ff00 206px,#fffc00 238px,#fff500 241px,#ffbd00 246px,#ff6000 250px,#ff0500 253px,#ff5656 257px)}.g316{background:linear-gradient(#270027,#270027 39px,#000000 40px,#000000 41px,#140014 42px,#560056 43px,#eb00eb 46px,#d700ff 47px,#1b00ff 50px,#0042ff 51px,#00a2ff 52px,#00cbff 53px,#00bbff 54px,#00f4ff 56px,#00ffff 58px,#00ffdb 63px,#00ff71 100px,#01ff00 152px,#70ff00 192px,#e8ff00 218px,#fffd00 237px,#fff200 241px,#ffb400 246px,#ff0808 253px,#ff6363 257px)}.g317{background:linear-gradient(#b000b0,#fd00ff 11px,#8d00ff 39px,#6a00ff 40px,#7600ff 47px,#0001ff 49px,#00c1ff 51px,#00f5ff 52px,#00ffff 53px,#00ffed 55px,#00ff23 63px,#01ff00 72px,#6dff00 100px,#cfff00 156px,#f9ff00 192px,#fffd00 235px,#fff200 241px,#ffd500 244px,#ff8d00 248px,#ff0202 253px,#ff5d5d 257px)}.g318{background:linear-gradient(#900090,#bf00bf 5px,#fe00fe 17px,#ad00ff 39px,#9a00ff 40px,#9a00ff 46px,#8600ff 47px,#0f00ff 49px,#00b0ff 51px,#00edff 52px,#00fff5 54px,#00ff01 63px,#03ff00 64px,#87ff00 99px,#b1ff00 122px,#f7ff00 178px,#fff100 235px,#ffcf00 242px,#ff8d00 246px,#ff0400 251px,#ff8f8f 257px)}.g319{background:linear-gradient(#000000,#000000 42px,#230023 43px,#f300f3 47px,#cf00ff 48px,#0900ff 51px,#005dff 52px,#0091ff 53px,#0039ff 54px,#00a1ff 56px,#00dcff 59px,#00ffff 63px,#00fff4 86px,#00ffa9 139px,#00ff4f 178px,#00ff24 192px,#00ff07 195px,#7eff00 209px,#d3ff00 221px,#f5ff00 229px,#fffd00 238px,#fff200 241px,#ffb300 246px,#ff0909 253px,#ff6464 257px)}.g31a{background:linear-gradient(#670067,#a800a8 8px,#ff00ff 27px,#d600ff 38px,#eb00ff 40px,#ea00ff 46px,#3700ff 49px,#0016ff 50px,#00ceff 52px,#00ebff 53px,#00fffd 56px,#00ffe4 59px,#00ff96 63px,#00ff00 106px,#e7ff00 208px,#fffd00 238px,#ffef00 242px,#ffc100 246px,#ff6600 250px,#ff0b00 253px,#ff1414 254px,#ff5151 257px)}.g31b{background:linear-gradient(#ce00ff,#9f00ff 5px,#6900ff 15px,#0d00ff 39px,#009cff 40px,#009cff 46px,#2100ff 47px,#0029ff 48px,#00d0ff 50px,#00fbff 51px,#00fff8 52px,#00ffc5 54px,#00ff6a 56px,#0bff00 60px,#63ff00 63px,#d5ff00 101px,#feff00 155px,#fff600 235px,#ffeb00 241px,#ffcb00 244px,#ff9600 247px,#ff0c00 252px,#ff1313 253px,#ff6d6d 257px)}.g31c{background:linear-gradient(#a400a4,#d300d3 5px,#fe00ff 13px,#9800ff 39px,#7800ff 40px,#7900ff 47px,#0200ff 49px,#00beff 51px,#00f4ff 52px,#00fffc 54px,#00ff93 59px,#00ff24 63px,#00ff00 72px,#6cff00 100px,#cdff00 155px,#f9ff00 192px,#fffd00 235px,#fff100 241px,#ffd300 244px,#ffa100 247px,#ff0505 253px,#ff6060 257px)}.g31d{background:linear-gradient(#370037,#660066 5px,#b300b3 20px,#f900f9 38px,#f900f9 39px,#d500d5 40px,#d500d5 45px,#f900ff 46px,#0100ff 50px,#00c0ff 52px,#00e1ff 53px,#00ffff 56px,#00ffe2 60px,#00ffaa 63px,#00ff26 100px,#02ff00 118px,#e2ff00 208px,#fffc00 237px,#fff100 241px,#ffc400 245px,#ff0808 253px,#ff6363 257px)}.g31e{background:linear-gradient(#f800ff,#a100ff 12px,#3600ff 39px,#0010ff 40px,#0010ff 46px,#5900ff 47px,#1d00ff 48px,#002fff 49px,#0093ff 50px,#00dcff 51px,#00feff 52px,#00fffd 53px,#00ffd5 55px,#00ff0e 62px,#11ff00 63px,#96ff00 99px,#bcff00 121px,#fcff00 180px,#fffb00 234px,#ffdc00 243px,#ffb100 246px,#ff1300 252px,#ff0c0c 253px,#ff6666 257px)}.g31f{background:linear-gradient(#4a00ff,#0003ff 10px,#0071ff 26px,#00abff 39px,#00fff1 40px,#00fff1 46px,#0039ff 47px,#00d1ff 49px,#00fbff 50px,#00fff8 51px,#00ff9f 53px,#00ff99 54px,#00ff2f 56px,#0dff00 58px,#99ff00 63px,#f0ff00 100px,#fffc00 157px,#ffd800 192px,#fff600 241px,#ffc500 246px,#ff6c00 250px,#ff1200 253px,#ff0e0e 254px,#ff4b4b 257px)}.g320{background:linear-gradient(#0f000f,#ba00ba 38px,#ba00ba 39px,#8d008d 40px,#8d008d 43px,#9a009a 44px,#fd00fd 46px,#0900ff 50px,#00b7ff 52px,#00daff 53px,#00ffff 56px,#00fff2 59px,#00ffb3 63px,#00ff30 101px,#00ff00 123px,#a6ff00 192px,#eaff00 212px,#fffe00 235px,#ffed00 241px,#ffca00 244px,#ff9400 247px,#ff0a00 252px,#ff1515 253px,#ff6f6f 257px)}.g321{background:linear-gradient(#cf00cf,#fa00ff 6px,#6e00ff 39px,#4300ff 40px,#4300ff 46px,#6e00ff 47px,#3300ff 48px,#000eff 49px,#00c9ff 51px,#00f8ff 52px,#00ffff 53px,#00ffe5 55px,#00ff0f 63px,#01ff00 67px,#7fff00 100px,#a7ff00 122px,#f5ff00 180px,#fffc00 234px,#ffef00 241px,#ffd000 244px,#ffb200 246px,#ff1400 252px,#ff0b0b 253px,#ff6666 257px)}.g322{background:linear-gradient(#c500ff,#9d00ff 4px,#6500ff 14px,#0400ff 39px,#00deff 40px,#00deff 46px,#0024ff 47px,#00c4ff 49px,#00f6ff 50px,#00fffc 51px,#00ff97 54px,#00ff2d 56px,#0fff00 58px,#9aff00 63px,#efff00 99px,#fffd00 154px,#ffd700 192px,#fff600 237px,#ffea00 242px,#ffb800 246px,#ff0303 253px,#ff5e5e 257px)}.g323{background:linear-gradient(#5e005e,#9f009f 8px,#fe00fe 29px,#df00ff 38px,#ef00ff 45px,#e400ff 46px,#3100ff 49px,#001fff 50px,#00d4ff 52px,#00ffff 55px,#00ffd9 59px,#00ff84 63px,#01ff00 98px,#e4ff00 202px,#fffc00 238px,#fff500 241px,#ffbe00 246px,#ff6100 250px,#ff0600 253px,#ff5656 257px)}.g324{background:linear-gradient(#4b004b,#920092 9px,#f700f7 32px,#f200ff 39px,#e200e2 40px,#e200e2 45px,#ff00ff 46px,#0700ff 50px,#00b9ff 52px,#00dcff 53px,#00ffff 56px,#00fff2 59px,#00ffb2 63px,#00ff32 100px,#01ff00 123px,#a4ff00 191px,#e7ff00 211px,#fffd00 236px,#ffee00 241px,#ffbe00 245px,#ff8000 248px,#ff0f00 252px,#ff1010 253px,#ff6b6b 257px)}.g325{background:linear-gradient(#e400ff,#bc00ff 4px,#8400ff 14px,#2300ff 39px,#006cff 40px,#006cff 46px,#2f00ff 47px,#0013ff 48px,#00c3ff 50px,#00f6ff 51px,#00fffc 52px,#00ffec 53px,#00ff6a 56px,#00ff14 59px,#0aff00 60px,#63ff00 63px,#d7ff00 103px,#feff00 155px,#fff200 235px,#ffe400 241px,#ffcd00 243px,#ff9e00 246px,#ff0707 252px,#ff7e7e 257px)}.g326{background:linear-gradient(#c800ff,#9900ff 5px,#5e00ff 16px,#0700ff 39px,#00adff 40px,#00adff 46px,#1900ff 47px,#0035ff 48px,#00d7ff 50px,#00fdff 51px,#00fff4 52px,#00ffcc 54px,#00ff74 56px,#00ff00 60px,#59ff00 63px,#d1ff00 103px,#fdff00 156px,#fff800 238px,#ffed00 242px,#ffbc00 246px,#ff5f00 250px,#ff0400 253px,#ff5858 257px)}.g327{background:linear-gradient(#260026,#7d007d 12px,#e800e8 38px,#e800e8 39px,#b900b9 40px,#b900b9 44px,#c900c9 45px,#fa00fa 46px,#0c00ff 50px,#00b4ff 52px,#00d8ff 53px,#00ccff 54px,#00fbff 56px,#00ffff 58px,#00ffcc 63px,#00ff57 100px,#02ff00 142px,#87ff00 192px,#e2ff00 215px,#fffc00 239px,#ffef00 242px,#ffc000 246px,#ff0a00 253px,#ff1515 254px,#ff5252 257px)}.g328{background:linear-gradient(#350035,#6b006b 6px,#a400a4 17px,#f700f7 38px,#f400ff 44px,#f300ff 45px,#0f00ff 49px,#00b1ff 51px,#00edff 52px,#00fffc 55px,#00ffbd 59px,#00ff5a 63px,#00ff00 86px,#37ff00 100px,#d6ff00 181px,#f3ff00 205px,#fffb00 241px,#ffbd00 247px,#ff7900 250px,#ff0200 254px,#ff3c3c 257px)}.g329{background:linear-gradient(#d300d3,#fd00ff 5px,#a700ff 22px,#6a00ff 39px,#2400ff 40px,#2400ff 46px,#5300ff 47px,#1800ff 48px,#0038ff 49px,#009aff 50px,#00e1ff 51px,#00feff 52px,#00fffc 53px,#00ffe1 55px,#00ff06 63px,#02ff00 65px,#86ff00 100px,#b9ff00 130px,#faff00 184px,#fffe00 236px,#fff800 241px,#ffc600 246px,#ff8600 249px,#ff1200 253px,#ff0d0d 254px,#ff4a4a 257px)}.g32a{background:linear-gradient(#050005,#000000 42px,#fc00ff 47px,#0008ff 51px,#0071ff 52px,#00a2ff 53px,#0032ff 54px,#009cff 56px,#00c6ff 58px,#00f2ff 61px,#00ffff 65px,#00fff5 87px,#00ffaf 139px,#00ff2c 192px,#01ff00 197px,#c5ff00 222px,#ebff00 230px,#fffd00 241px,#ffc100 247px,#ff7f00 250px,#ff0900 254px,#ff3535 257px)}.g32b{background:linear-gradient(#8f008f,#be00be 5px,#fd00ff 18px,#a000ff 40px,#a000ff 46px,#8b00ff 47px,#1400ff 49px,#00aaff 51px,#00eaff 52px,#00fffd 54px,#00ff94 59px,#00ff25 63px,#02ff00 73px,#6aff00 100px,#d2ff00 159px,#f9ff00 193px,#fff900 235px,#ffe800 241px,#ffc400 244px,#ff7500 248px,#ff0200 252px,#ff7676 257px)}.g32c{background:linear-gradient(#ea00ea,#fb00ff 2px,#aa00ff 16px,#5300ff 38px,#5300ff 39px,#8100ff 40px,#8100ff 46px,#c700ff 47px,#0b00ff 50px,#005aff 51px,#00b5ff 52px,#00d9ff 53px,#a400ff 54px,#5a00ff 56px,#0009ff 61px,#0045ff 63px,#008aff 82px,#00c0ff 100px,#00fffd 136px,#00ffbb 150px,#00ff04 168px,#b1ff00 185px,#f6ff00 197px,#fff400 241px,#ffbd00 246px,#ff6000 250px,#ff0500 253px,#ff5757 257px)}.g32d{background:linear-gradient(#0f000f,#0f000f 45px,#f200ff 46px,#f200ff 50px,#0099ff 51px,#00e0ff 52px,#00ffff 54px,#00ffc8 58px,#00ff4e 63px,#00ff00 84px,#3cff00 100px,#d5ff00 180px,#f7ff00 207px,#fffe00 235px,#fff200 241px,#ffd400 244px,#ffa100 247px,#ff0707 253px,#ff6262 257px)}.g32e{background:linear-gradient(#0f000f,#0f000f 45px,#f200ff 46px,#f200ff 50px,#0099ff 51px,#00e0ff 52px,#00fffe 54px,#00ff9b 59px,#00ff2e 63px,#03ff00 76px,#5cff00 100px,#d3ff00 167px,#fbff00 202px,#fff900 235px,#ffe600 241px,#ffc000 244px,#ff8600 247px,#ff1600 251px,#ff0909 252px,#ff8080 257px)}.g32f{background:linear-gradient(#0f000f,#0f000f 45px,#f200ff 46px,#f200ff 50px,#0099ff 51px,#00e0ff 52px,#00ffff 55px,#00ffe1 131px,#00ff92 214px,#00ff90 215px,#00ff02 220px,#8eff00 225px,#ecff00 233px,#ffe900 244px,#ffb300 249px,#ff4200 257px)}.g330{background:linear-gradient(#0f000f,#0f000f 45px,#f200ff 46px,#f200ff 50px,#0099ff 51px,#00e0ff 52px,#00f6ff 53px,#00fffd 56px,#00ffe3 59px,#00ff96 63px,#00ff00 110px,#ceff00 202px,#fffe00 242px,#ffd600 247px,#ff9b00 250px,#ff0b00 255px,#ff1414 257px)}.g331{background:linear-gradient(#0f000f,#0f000f 45px,#f200ff 46px,#f200ff 50px,#0099ff 51px,#00e0ff 52px,#00ffff 54px,#00ffcb 58px,#00ff54 63px,#02ff00 86px,#37ff00 100px,#d7ff00 183px,#f7ff00 209px,#fffe00 236px,#fff400 241px,#ffc900 245px,#ff8e00 248px,#ff0202 253px,#ff5d5d 257px)}.g332{background:linear-gradient(#660066,#ad00ad 9px,#fb00fb 26px,#d600ff 38px,#d600ff 39px,#f500f5 40px,#f700f7 46px,#cc00ff 47px,#0f00ff 50px,#00b0ff 52px,#00d5ff 53px,#00d1ff 54px,#00edff 55px,#00ffff 57px,#00fff2 60px,#00ffc7 63px,#00ff50 100px,#01ff00 139px,#8dff00 192px,#eaff00 216px,#fffd00 237px,#fff100 241px,#ffc300 245px,#ff0909 253px,#ff6464 257px)}.g333{background:linear-gradient(#db00db,#fb00ff 4px,#ab00ff 19px,#6100ff 39px,#2400ff 40px,#2400ff 46px,#5c00ff 47px,#2100ff 48px,#002aff 49px,#008eff 50px,#00d9ff 51px,#00fdff 52px,#00fffe 53px,#00ff04 62px,#1aff00 63px,#a0ff00 100px,#c9ff00 127px,#f9ff00 172px,#fff800 235px,#ffe900 241px,#ffc700 244px,#ff7800 248px,#ff0500 252px,#ff7474 257px)}.g334{background:linear-gradient(#9500ff,#4e00ff 9px,#0100ff 26px,#0045ff 39px,#00e2ff 40px,#00e2ff 46px,#1400ff 47px,#003dff 48px,#00dbff 50px,#00feff 51px,#00fff2 52px,#00ffb8 54px,#00ff57 56px,#02ff00 59px,#76ff00 63px,#deff00 100px,#ffff00 152px,#ffec00 192px,#fff500 235px,#ffea00 241px,#ffca00 244px,#ff9400 247px,#ff0a00 252px,#ff1515 253px,#ff6f6f 257px)}.g335{background:linear-gradient(#8c008c,#c100c1 6px,#fe00fe 18px,#b100ff 38px,#b400ff 46px,#9c00ff 47px,#2500ff 49px,#0032ff 50px,#0095ff 51px,#00deff 52px,#00ffff 54px,#00ffc9 58px,#00ff4f 63px,#03ff00 84px,#48ff00 103px,#c4ff00 167px,#f5ff00 201px,#fffd00 234px,#ffee00 241px,#ffcd00 244px,#ff9900 247px,#ff1000 252px,#ff1010 253px,#ff6a6a 257px)}.g336{background:linear-gradient(#440044,#730073 5px,#c400c4 21px,#fe00fe 36px,#fc00fc 45px,#de00ff 46px,#2b00ff 49px,#0029ff 50px,#008eff 51px,#00d9ff 52px,#00f2ff 53px,#00ffff 55px,#00ffd2 59px,#00ff79 63px,#00ff00 95px,#dbff00 195px,#fffd00 238px,#fff000 242px,#ffc200 246px,#ff6700 250px,#ff0c00 253px,#ff1313 254px,#ff5050 257px)}.g337{background:linear-gradient(#c900c9,#fe00fe 6px,#7400ff 39px,#2c00ff 40px,#2c00ff 46px,#5100ff 47px,#1600ff 48px,#003bff 49px,#009cff 50px,#00e2ff 51px,#00ffff 52px,#00ffef 54px,#00ff0b 62px,#13ff00 63px,#9aff00 100px,#c2ff00 125px,#fbff00 178px,#fffc00 235px,#fff100 241px,#ffd400 244px,#ff8b00 248px,#ff0404 253px,#ff5f5f 257px)}.g338{background:linear-gradient(#480048,#840084 7px,#d500d5 24px,#ff00ff 35px,#fc00fc 45px,#e300ff 46px,#3000ff 49px,#0021ff 50px,#00d5ff 52px,#00ffff 55px,#00ffd0 59px,#00ff76 63px,#00ff00 94px,#e3ff00 198px,#fffe00 235px,#fff200 241px,#ffd300 244px,#ffa000 247px,#ff0606 253px,#ff6161 257px)}.g339{background:linear-gradient(#740074,#b500b5 8px,#fe00ff 24px,#c900ff 38px,#c600ff 46px,#1f00ff 49px,#003cff 50px,#009dff 51px,#00e2ff 52px,#00fffd 55px,#00ffc1 59px,#00ff5f 63px,#01ff00 88px,#37ff00 103px,#d5ff00 183px,#f5ff00 208px,#fffd00 238px,#fff100 242px,#ffc400 246px,#ff6a00 250px,#ff1000 253px,#ff0f0f 254px,#ff4c4c 257px)}.g33a{background:linear-gradient(#700070,#b100b1 8px,#fe00ff 25px,#c600ff 40px,#c600ff 46px,#1c00ff 49px,#0041ff 50px,#00a1ff 51px,#00e5ff 52px,#00fffd 54px,#00ff97 59px,#00ff29 63px,#03ff00 74px,#66ff00 100px,#cfff00 159px,#faff00 196px,#fff800 235px,#ffe600 241px,#ffc000 244px,#ff8800 247px,#ff0505 252px,#ff7c7c 257px)}.g33b{background:linear-gradient(#c100c1,#fc00ff 8px,#7c00ff 39px,#3700ff 40px,#3700ff 46px,#5400ff 47px,#1900ff 48px,#0036ff 49px,#0099ff 50px,#00e0ff 51px,#00feff 52px,#00fffc 53px,#00ffd5 55px,#00ff0c 62px,#12ff00 63px,#99ff00 100px,#beff00 123px,#faff00 177px,#fffc00 234px,#fff000 241px,#ffd200 244px,#ffa000 247px,#ff0707 253px,#ff6262 257px)}.g33c{background:linear-gradient(#170017,#170017 39px,#000000 41px,#0f000f 42px,#520052 43px,#e600e6 46px,#dc00ff 47px,#2000ff 50px,#003bff 51px,#009cff 52px,#00c6ff 53px,#00a5ff 54px,#00eaff 56px,#00ffff 59px,#00ff8c 100px,#00ff00 164px,#51ff00 192px,#a2ff00 205px,#e3ff00 220px,#fffe00 238px,#fff700 241px,#ffbf00 246px,#ff0800 253px,#ff5454 257px)}.g33d{background:linear-gradient(#610061,#ad00ad 10px,#fd00ff 29px,#ce00ff 46px,#1b00ff 49px,#0042ff 50px,#00a2ff 51px,#00e5ff 52px,#00ffff 54px,#00ffc6 58px,#00ff4c 63px,#02ff00 83px,#4bff00 103px,#cbff00 170px,#f7ff00 204px,#fffe00 235px,#fff300 241px,#ffc900 245px,#ff7600 249px,#ff0000 253px,#ff5b5b 257px)}.g33e{background:linear-gradient(#c900c9,#fe00fe 6px,#7400ff 38px,#7400ff 39px,#9900ff 40px,#9900ff 46px,#be00ff 47px,#0200ff 50px,#0067ff 51px,#00bfff 52px,#00e0ff 53px,#7c00ff 54px,#3200ff 56px,#000cff 59px,#007fff 63px,#0086ff 65px,#00e1ff 99px,#00fffc 131px,#00ffc0 144px,#00ff0b 162px,#b2ff00 180px,#f8ff00 192px,#fff400 234px,#ffe100 241px,#ff9800 246px,#ff1100 251px,#ff0e0e 252px,#ff8484 257px)}.g33f{background:linear-gradient(#d400d4,#fb00ff 5px,#ae00ff 20px,#6800ff 39px,#0b00ff 40px,#0b00ff 46px,#3c00ff 47px,#0100ff 48px,#00b5ff 50px,#00efff 51px,#00fffe 52px,#00ffe2 54px,#00ff96 56px,#00ff0a 61px,#14ff00 62px,#32ff00 63px,#86ff00 86px,#c9ff00 116px,#fbff00 167px,#fffb00 235px,#fff100 241px,#ffd400 244px,#ffa100 247px,#ff0505 253px,#ff6060 257px)}.g340{background:linear-gradient(#2b002b,#2b002b 39px,#000000 40px,#000000 42px,#d100d1 46px,#f200ff 47px,#3500ff 50px,#0019ff 51px,#0080ff 52px,#00afff 53px,#00aaff 54px,#00ecff 56px,#00ffff 59px,#00ffe6 63px,#00ff87 100px,#01ff00 162px,#57ff00 192px,#a7ff00 203px,#e7ff00 216px,#fffb00 235px,#ffdc00 241px,#ffbe00 243px,#ff8a00 246px,#ff0101 251px,#ff9393 257px)}.g341{background:linear-gradient(#0011ff,#0062ff 6px,#00a2ff 15px,#00fffe 40px,#00fffe 46px,#5500ff 47px,#1900ff 48px,#0035ff 49px,#0098ff 50px,#00dfff 51px,#00feff 52px,#00fffc 53px,#06ff00 62px,#24ff00 63px,#7dff00 87px,#a6ff00 100px,#c4ff00 119px,#f9ff00 169px,#fff800 235px,#ffea00 241px,#ffc700 244px,#ff9100 247px,#ff0600 252px,#ff7373 257px)}.g342{background:linear-gradient(#ee00ee,#fd00fd 1px,#a600ff 16px,#4f00ff 39px,#2500ff 40px,#2500ff 46px,#7000ff 47px,#3400ff 48px,#000bff 49px,#00c8ff 51px,#00f7ff 52px,#00ffff 53px,#00ffdf 55px,#00ff03 63px,#88ff00 100px,#b8ff00 129px,#f8ff00 181px,#fff900 235px,#ffea00 241px,#ffc700 244px,#ff9100 247px,#ff0600 252px,#ff7373 257px)}.g343{background:linear-gradient(#180018,#5f005f 9px,#c400c4 32px,#d900d9 39px,#ba00ba 40px,#ba00ba 44px,#f400ff 46px,#0006ff 50px,#00c4ff 52px,#00e4ff 53px,#00dcff 54px,#00f4ff 55px,#00ffff 57px,#00ffeb 60px,#00ffba 63px,#00ff3e 100px,#02ff00 130px,#e2ff00 214px,#fffe00 239px,#ffed00 243px,#ffcb00 246px,#ff8d00 249px,#ff0404 254px,#ff4242 257px)}.g344{background:linear-gradient(#b900b9,#ff00ff 9px,#8400ff 39px,#6100ff 40px,#6100ff 46px,#7600ff 47px,#0001ff 49px,#00c1ff 51px,#00f5ff 52px,#00ffff 53px,#00fffb 55px,#00ffcb 58px,#00ff53 63px,#02ff00 85px,#43ff00 103px,#daff00 182px,#fffd00 241px,#ffc600 247px,#ff8600 250px,#ff1000 254px,#ff0f0f 255px,#ff2e2e 257px)}.g345{background:linear-gradient(#bc00bc,#fc00ff 9px,#8100ff 39px,#2b00ff 40px,#2b00ff 46px,#4300ff 47px,#0700ff 48px,#00aeff 50px,#00ebff 51px,#00ffff 52px,#00ffee 55px,#00ff26 63px,#01ff00 73px,#68ff00 100px,#cdff00 157px,#f8ff00 192px,#fffe00 242px,#ffd600 247px,#ff9b00 250px,#ff0b00 255px,#ff1414 257px)}.g346{background:linear-gradient(#a500a5,#d400d4 5px,#fd00ff 13px,#8800ff 40px,#8a00ff 47px,#1300ff 49px,#00acff 51px,#00eaff 52px,#00ffff 55px,#00ffd4 59px,#00ff7c 63px,#01ff00 96px,#d1ff00 191px,#ffff00 241px,#ffe000 246px,#ff9400 250px,#ff0200 255px,#ff1e1e 257px)}.g347{background:linear-gradient(#1c001c,#1c001c 39px,#000000 40px,#000000 42px,#180018 43px,#e800e8 47px,#da00ff 48px,#1400ff 51px,#004dff 52px,#0082ff 53px,#0011ff 54px,#0080ff 56px,#00e5ff 61px,#00f9ff 63px,#00feff 71px,#00fff8 93px,#00ffba 147px,#00ff4f 192px,#00ff06 199px,#caff00 222px,#f2ff00 230px,#fffc00 239px,#fff500 241px,#ffb900 246px,#ff0202 253px,#ff5d5d 257px)}.g348{background:linear-gradient(#dc00ff,#ad00ff 5px,#7200ff 16px,#1a00ff 39px,#0039ff 40px,#0039ff 46px,#5a00ff 47px,#1f00ff 48px,#002dff 49px,#0091ff 50px,#00dbff 51px,#00fdff 52px,#00fffd 53px,#00ffdc 55px,#03ff00 63px,#8cff00 100px,#b3ff00 123px,#faff00 182px,#fffd00 235px,#fff300 241px,#ffc900 245px,#ff8e00 248px,#ff0101 253px,#ff5c5c 257px)}.g349{background:linear-gradient(#120012,#120012 39px,#000000 41px,#170017 42px,#5a005a 43px,#ef00ef 46px,#d300ff 47px,#1700ff 50px,#0048ff 51px,#00a7ff 52px,#00ceff 53px,#00ffff 57px,#00fff3 60px,#00ffc9 63px,#00ff55 100px,#00ff00 141px,#88ff00 192px,#e9ff00 215px,#fffa00 237px,#ffeb00 241px,#ffa600 246px,#ff0300 252px,#ff7575 257px)}.g34a{background:linear-gradient(#140014,#140014 39px,#000000 41px,#1d001d 42px,#600060 43px,#f500f5 46px,#ce00ff 47px,#1100ff 50px,#00adff 52px,#00d3ff 53px,#00ccff 54px,#00fbff 56px,#00ffff 58px,#00ffcc 63px,#00ff5a 100px,#01ff00 143px,#84ff00 192px,#e4ff00 215px,#fffd00 237px,#fff200 241px,#ffc500 245px,#ff0707 253px,#ff6262 257px)}.g34b{background:linear-gradient(#0f000f,#100010 4px,#a900a9 38px,#a900a9 39px,#800080 40px,#800080 43px,#9d009d 44px,#fe00ff 46px,#0600ff 50px,#00baff 52px,#00ddff 53px,#00ffff 56px,#00fff3 59px,#00ffb6 63px,#00ff38 100px,#01ff00 127px,#9eff00 191px,#e5ff00 212px,#fffd00 237px,#fff200 241px,#ffc500 245px,#ff0707 253px,#ff6262 257px)}.g34c{background:linear-gradient(#c700c7,#fc00ff 7px,#7500ff 38px,#7400ff 46px,#9800ff 47px,#2100ff 49px,#0039ff 50px,#009bff 51px,#00e1ff 52px,#00ffff 54px,#00ffb5 59px,#00ff4f 63px,#02ff00 84px,#47ff00 103px,#c3ff00 167px,#f3ff00 200px,#fffe00 235px,#fff200 241px,#ffd400 244px,#ffa200 247px,#ff0505 253px,#ff6060 257px)}.g34d{background:linear-gradient(#080008,#000000 41px,#1b001b 42px,#5e005e 43px,#f300f3 46px,#d000ff 47px,#1300ff 50px,#00abff 52px,#00d2ff 53px,#00ffff 57px,#00fff1 60px,#00ffc5 63px,#00ff4f 100px,#00ff00 138px,#8eff00 192px,#e7ff00 214px,#fffd00 236px,#ffed00 241px,#ffba00 245px,#ff7a00 248px,#ff0800 252px,#ff7171 257px)}.g34e{background:linear-gradient(#c500c5,#fe00ff 7px,#7700ff 39px,#4500ff 40px,#4500ff 46px,#6600ff 47px,#2b00ff 48px,#001aff 49px,#00d1ff 51px,#00fbff 52px,#00ffff 53px,#00ff01 62px,#1eff00 63px,#a1ff00 100px,#c6ff00 124px,#fcff00 177px,#fff400 235px,#ffe200 241px,#ffca00 243px,#ff9900 246px,#ff1200 251px,#ff0d0d 252px,#ff8383 257px)}.g34f{background:linear-gradient(#8900ff,#4800ff 8px,#0004ff 24px,#0056ff 39px,#00d0ff 40px,#00d0ff 46px,#3600ff 47px,#0008ff 48px,#00bcff 50px,#00f2ff 51px,#00fffd 52px,#00ffe8 54px,#00ffa1 56px,#06ff00 62px,#24ff00 63px,#87ff00 90px,#c5ff00 120px,#faff00 171px,#fffe00 235px,#fff200 242px,#ffc600 246px,#ff8500 249px,#ff1100 253px,#ff0e0e 254px,#ff4b4b 257px)}.g350{background:linear-gradient(#ba00ba,#fd00ff 9px,#7700ff 40px,#7700ff 46px,#8e00ff 47px,#1700ff 49px,#0048ff 50px,#00a7ff 51px,#00e8ff 52px,#00fff4 54px,#03ff00 63px,#8bff00 100px,#b8ff00 127px,#fbff00 184px,#ffed00 235px,#ffc700 242px,#ff8200 246px,#ff1500 250px,#ff0b0b 251px,#ff9b9b 257px)}.g351{background:linear-gradient(#8a008a,#b900b9 5px,#fd00ff 19px,#a300ff 40px,#a300ff 46px,#8900ff 47px,#1200ff 49px,#00adff 51px,#00ebff 52px,#00ffff 54px,#00ffcd 58px,#00ff56 63px,#03ff00 86px,#39ff00 100px,#d8ff00 182px,#fffe00 238px,#fff400 242px,#ffca00 246px,#ff0808 254px,#ff4545 257px)}.g352{background:linear-gradient(#580058,#aa00aa 11px,#fe00ff 31px,#e400ff 38px,#f200ff 45px,#e300ff 46px,#3000ff 49px,#0022ff 50px,#00d5ff 52px,#00fffe 55px,#00ffc9 59px,#00ff6c 63px,#02ff00 92px,#24ff00 101px,#e7ff00 198px,#fffd00 235px,#ffee00 241px,#ffcd00 244px,#ff9800 247px,#ff0e00 252px,#ff1111 253px,#ff6b6b 257px)}.g353{background:linear-gradient(#090009,#000000 41px,#090009 42px,#4c004c 43px,#e100e1 46px,#e100ff 47px,#2500ff 50px,#0033ff 51px,#0096ff 52px,#00c1ff 53px,#00faff 56px,#00ffff 58px,#00ffcd 63px,#00ff5b 100px,#02ff00 144px,#83ff00 192px,#eeff00 215px,#fff900 235px,#ffdb00 241px,#ffbd00 243px,#ff8900 246px,#ff0202 251px,#ff9494 257px)}.g354{background:linear-gradient(#1c001c,#1c001c 39px,#000000 40px,#000000 42px,#420042 43px,#d600d6 46px,#ec00ff 47px,#3000ff 50px,#0022ff 51px,#0088ff 52px,#00b5ff 53px,#0086ff 54px,#00d8ff 56px,#00ffff 61px,#00ff63 141px,#02ff00 179px,#2aff00 192px,#92ff00 206px,#d4ff00 218px,#f8ff00 229px,#fffb00 239px,#fff500 241px,#ffb900 246px,#ff0202 253px,#ff5d5d 257px)}.g355{background:linear-gradient(#260026,#6d006d 9px,#d200d2 32px,#e800e8 39px,#cc00cc 40px,#cc00cc 44px,#f000ff 46px,#000cff 50px,#00c8ff 52px,#00e7ff 53px,#00ffff 55px,#00ffd5 59px,#00ff7d 63px,#02ff00 97px,#eeff00 205px,#fffb00 235px,#ffe600 241px,#ffce00 243px,#ff9e00 246px,#ff0707 252px,#ff7e7e 257px)}.g356{background:linear-gradient(#b800ff,#8200ff 6px,#5700ff 14px,#0100ff 35px,#000fff 39px,#00c8ff 40px,#00c8ff 46px,#1100ff 47px,#00deff 50px,#00feff 51px,#00fff0 52px,#00ffca 54px,#00ff71 56px,#04ff00 60px,#5cff00 63px,#cfff00 101px,#fdff00 156px,#fffd00 235px,#fff600 241px,#ffd100 245px,#ff9900 248px,#ff0c00 253px,#ff1313 254px,#ff5050 257px)}.g357{background:linear-gradient(#a000ff,#5900ff 9px,#0000ff 29px,#0034ff 39px,#00baff 40px,#00baff 46px,#3600ff 47px,#0009ff 48px,#00bcff 50px,#00f2ff 51px,#00fffd 52px,#00ffd2 54px,#00ff7c 56px,#00ff0a 60px,#15ff00 61px,#4fff00 63px,#5bff00 66px,#b3ff00 93px,#d0ff00 108px,#fdff00 161px,#fff300 237px,#ffe900 241px,#ffc700 244px,#ff9000 247px,#ff0400 252px,#ff7474 257px)}.g358{background:linear-gradient(#1a001a,#1a001a 39px,#000000 40px,#000000 42px,#130013 43px,#e300e3 47px,#df00ff 48px,#1900ff 51px,#0045ff 52px,#007bff 53px,#0400ff 54px,#006bff 56px,#00c9ff 60px,#00f3ff 63px,#00ffff 80px,#00ffd5 140px,#00ff9b 172px,#00ff66 192px,#00ff07 201px,#c7ff00 223px,#f1ff00 231px,#fffb00 240px,#ffbf00 246px,#ff6200 250px,#ff0700 253px,#ff5555 257px)}.g359{background:linear-gradient(#1800ff,#0001ff 2px,#0040ff 8px,#0093ff 20px,#00dcff 39px,#00ffce 40px,#00ffce 46px,#0037ff 47px,#00d0ff 49px,#00faff 50px,#00fff8 51px,#00ffa0 53px,#00ff9c 54px,#00ff32 56px,#09ff00 58px,#96ff00 63px,#ecff00 99px,#fffc00 160px,#ffdd00 192px,#fff800 241px,#ffc700 246px,#ff6e00 250px,#ff1400 253px,#ff0b0b 254px,#ff4848 257px)}.g35a{background:linear-gradient(#9500ff,#5900ff 7px,#0000ff 26px,#0045ff 39px,#00d8ff 40px,#00d8ff 46px,#2200ff 47px,#0028ff 48px,#00d0ff 50px,#00faff 51px,#00fff8 52px,#00ffd5 54px,#00ff81 56px,#0fff00 61px,#4aff00 63px,#c6ff00 103px,#fdff00 163px,#fffc00 235px,#fff500 241px,#ffcd00 245px,#ff9400 248px,#ff0700 253px,#ff5555 257px)}.g35b{background:linear-gradient(#270027,#790079 11px,#e900e9 38px,#d700d7 44px,#e600ff 46px,#3400ff 49px,#001cff 50px,#00d2ff 52px,#00ffff 55px,#00ffdb 59px,#00ff87 63px,#02ff00 100px,#e8ff00 206px,#fffc00 238px,#fff500 241px,#ffbc00 246px,#ff0300 253px,#ff5959 257px)}.g35c{background:linear-gradient(#900090,#bf00bf 5px,#fe00fe 17px,#ac00ff 39px,#9500ff 40px,#9500ff 46px,#8200ff 47px,#0b00ff 49px,#00b5ff 51px,#00efff 52px,#00ffff 54px,#00ffc7 58px,#00ff4d 63px,#00ff00 83px,#44ff00 101px,#deff00 183px,#fffd00 239px,#fff400 242px,#ffca00 246px,#ff0707 254px,#ff4444 257px)}.g35d{background:linear-gradient(#0d00ff,#0050ff 8px,#009bff 19px,#00e4ff 39px,#00ffb7 40px,#00ffb7 46px,#0049ff 47px,#00daff 49px,#00fdff 50px,#00fff3 51px,#0bff00 56px,#c3ff00 63px,#f6ff00 91px,#fff500 149px,#ffb800 192px,#ffe800 224px,#ffe900 241px,#ffa800 246px,#ff0600 252px,#ff7272 257px)}.g35e{background:linear-gradient(#3d003d,#650065 4px,#9d009d 14px,#fe00fe 39px,#e100e1 40px,#e100e1 45px,#f200ff 46px,#000aff 50px,#00c7ff 52px,#00e6ff 53px,#00ffff 55px,#00ffda 59px,#00ff86 63px,#03ff00 100px,#eeff00 207px,#fffc00 235px,#ffe900 241px,#ffc300 244px,#ff8b00 247px,#ff0202 252px,#ff7979 257px)}.g35f{background:linear-gradient(#0e000e,#0e000e 39px,#000000 41px,#090009 42px,#4c004c 43px,#e100e1 46px,#e100ff 47px,#2500ff 50px,#0033ff 51px,#0096ff 52px,#00c1ff 53px,#0091ff 54px,#00dfff 56px,#00ffff 60px,#00ff5a 140px,#00ff01 174px,#36ff00 192px,#95ff00 206px,#ddff00 221px,#ffff00 238px,#fff200 242px,#ffc600 246px,#ff6b00 250px,#ff1100 253px,#ff0e0e 254px,#ff4b4b 257px)}.g360{background:linear-gradient(#ef00ef,#fe00fe 1px,#a100ff 17px,#4e00ff 39px,#0b00ff 40px,#0b00ff 46px,#5600ff 47px,#1b00ff 48px,#0033ff 49px,#0096ff 50px,#00deff 51px,#00feff 52px,#00fffc 53px,#00ffed 54px,#00ff06 62px,#18ff00 63px,#90ff00 96px,#bcff00 120px,#faff00 176px,#fffb00 234px,#ffee00 241px,#ffcd00 244px,#ff9900 247px,#ff0f00 252px,#ff1010 253px,#ff6a6a 257px)}.g361{background:linear-gradient(#100010,#100010 39px,#000000 40px,#010001 43px,#d100d1 47px,#f100ff 48px,#2b00ff 51px,#002aff 52px,#0062ff 53px,#c600c6 54px,#ec00ec 55px,#ed00ff 56px,#6700ff 63px,#0a00ff 101px,#0019ff 120px,#00cfff 140px,#00f9ff 149px,#00fffd 157px,#00ffc0 170px,#00ff06 188px,#9fff00 201px,#e9ff00 220px,#fffb00 239px,#ffed00 242px,#ffbc00 246px,#ff0200 253px,#ff5a5a 257px)}.g362{background:linear-gradient(#4a004a,#960096 10px,#f200f2 31px,#f300ff 39px,#e300e3 40px,#e300e3 45px,#fc00ff 46px,#0400ff 50px,#00bcff 52px,#00deff 53px,#00ffff 56px,#00ffea 59px,#00ffa2 63px,#00ff23 99px,#00ff00 115px,#e6ff00 208px,#fffd00 235px,#ffea00 241px,#ffc500 244px,#ff8e00 247px,#ff0100 252px,#ff7777 257px)}.g363{background:linear-gradient(#2d002d,#5c005c 5px,#970097 16px,#fa00fa 40px,#fb00ff 45px,#1700ff 49px,#0048ff 50px,#00a7ff 51px,#00e8ff 52px,#00ffff 54px,#00ffbb 58px,#00ff3b 63px,#03ff00 79px,#53ff00 100px,#cdff00 166px,#f6ff00 198px,#fffd00 235px,#fff000 241px,#ffd000 244px,#ffb300 246px,#ff1400 252px,#ff0b0b 253px,#ff6666 257px)}.g364{background:linear-gradient(#f400f4,#fb00ff 1px,#9300ff 19px,#4900ff 39px,#0008ff 40px,#0008ff 46px,#4b00ff 47px,#1000ff 48px,#00e6ff 51px,#00ffff 52px,#00ffe5 54px,#00ff9b 56px,#00ff11 61px,#2bff00 63px,#37ff00 66px,#abff00 100px,#bcff00 111px,#f9ff00 167px,#fff900 235px,#ffec00 241px,#ffcb00 244px,#ff9600 247px,#ff0b00 252px,#ff1414 253px,#ff6e6e 257px)}.g365{background:linear-gradient(#3f003f,#6e006e 5px,#a900a9 16px,#fe00ff 39px,#e700e7 40px,#e700e7 45px,#ee00ff 46px,#3b00ff 49px,#0010ff 50px,#00cbff 52px,#00e9ff 53px,#00ffff 55px,#00ffd4 59px,#00ff7d 63px,#02ff00 97px,#edff00 205px,#fffc00 235px,#ffe900 241px,#ffc400 244px,#ff8d00 247px,#ff0000 252px,#ff7878 257px)}.g366{background:linear-gradient(#0b000b,#000000 42px,#f700ff 47px,#3a00ff 50px,#0011ff 51px,#0079ff 52px,#00a9ff 53px,#006aff 54px,#00c5ff 56px,#00f1ff 59px,#00ffff 62px,#00ff87 138px,#00ff01 189px,#caff00 218px,#f5ff00 229px,#fffc00 239px,#ffba00 246px,#ff0101 253px,#ff5d5d 257px)}.g367{background:linear-gradient(#7f00ff,#4900ff 6px,#0300ff 20px,#0066ff 39px,#00f3ff 40px,#00f3ff 46px,#0f00ff 47px,#00e0ff 50px,#00feff 51px,#00ffef 52px,#00ffbf 54px,#00ff60 56px,#00ff08 59px,#16ff00 60px,#6dff00 63px,#d7ff00 100px,#feff00 153px,#fff800 237px,#ffeb00 242px,#ffb800 246px,#ff0303 253px,#ff5f5f 257px)}.g368{background:linear-gradient(#140014,#140014 39px,#000000 41px,#1d001d 42px,#600060 43px,#f500f5 46px,#cd00ff 47px,#1100ff 50px,#00aeff 52px,#00d4ff 53px,#00cdff 54px,#00fbff 56px,#00ffff 57px,#00fff4 60px,#00ffcb 63px,#00ff5a 100px,#00ff00 143px,#84ff00 192px,#e6ff00 216px,#fffd00 237px,#fff200 241px,#ffb500 246px,#ff0808 253px,#ff6363 257px)}.g369{background:linear-gradient(#7a007a,#af00af 6px,#fe00fe 22px,#c300ff 38px,#d200ff 46px,#3100ff 49px,#0020ff 50px,#00d4ff 52px,#00ffff 55px,#00ffdd 59px,#00ff8b 63px,#01ff00 102px,#e1ff00 204px,#fffc00 239px,#fff100 242px,#ffc400 246px,#ff8300 249px,#ff0f00 253px,#ff1010 254px,#ff4d4d 257px)}.g36a{background:linear-gradient(#0f000f,#0f000f 39px,#000000 41px,#170017 42px,#5a005a 43px,#ef00ef 46px,#d400ff 47px,#1700ff 50px,#0048ff 51px,#00a7ff 52px,#00ceff 53px,#00c1ff 54px,#00f7ff 56px,#00ffff 58px,#00ffd7 63px,#00ff6c 100px,#01ff00 151px,#72ff00 192px,#e9ff00 219px,#fffe00 237px,#fff300 241px,#ffb700 246px,#ff0606 253px,#ff6161 257px)}.g36b{background:linear-gradient(#ee00ff,#bf00ff 5px,#8400ff 16px,#2c00ff 39px,#002bff 40px,#002bff 46px,#5100ff 47px,#1500ff 48px,#003cff 49px,#009dff 50px,#00e2ff 51px,#00ffff 52px,#00ffed 54px,#00ff08 62px,#16ff00 63px,#91ff00 97px,#baff00 120px,#faff00 177px,#fffc00 235px,#fff100 241px,#ffd300 244px,#ffa100 247px,#ff0707 253px,#ff6262 257px)}.g36c{background:linear-gradient(#140014,#140014 39px,#000000 40px,#000000 42px,#fd00ff 47px,#0008ff 51px,#0071ff 52px,#00a2ff 53px,#0076ff 54px,#00ceff 56px,#00ffff 61px,#00ff78 140px,#00ff00 185px,#16ff00 192px,#8dff00 206px,#dcff00 219px,#fdff00 230px,#fff900 238px,#ffea00 241px,#ffa200 246px,#ff0303 252px,#ff7a7a 257px)}.g36d{background:linear-gradient(#170017,#530053 7px,#b800b8 29px,#d900d9 38px,#c500c5 40px,#c500c5 44px,#e400e4 45px,#e800ff 46px,#3600ff 49px,#0018ff 50px,#00cfff 52px,#00ecff 53px,#00fffc 56px,#00ffde 59px,#00ff8d 63px,#00ff00 103px,#e5ff00 206px,#fffc00 238px,#fff500 241px,#ffbd00 246px,#ff0400 253px,#ff5858 257px)}.g36e{background:linear-gradient(#ab00ab,#da00da 5px,#fd00ff 12px,#9100ff 39px,#7200ff 40px,#7a00ff 47px,#0300ff 49px,#00bdff 51px,#00f3ff 52px,#00fffe 54px,#00ffb3 58px,#00ff30 63px,#02ff00 76px,#5dff00 100px,#cdff00 162px,#f5ff00 193px,#fffe00 235px,#fff500 241px,#ffcd00 245px,#ff9300 248px,#ff0500 253px,#ff5656 257px)}.g36f{background:linear-gradient(#2c002c,#2c002c 39px,#000000 40px,#000000 42px,#120012 43px,#e200e2 47px,#e100ff 48px,#1a00ff 51px,#0043ff 52px,#0079ff 53px,#0900ff 54px,#0064ff 56px,#007fff 57px,#00c4ff 60px,#00f0ff 63px,#00ffff 82px,#00ffda 140px,#00ff9c 175px,#00ff6f 192px,#00ff05 202px,#c9ff00 224px,#f3ff00 232px,#fffc00 240px,#ffc100 246px,#ff0a00 253px,#ff1515 254px,#ff5252 257px)}.g370{background:linear-gradient(#0e000e,#0e000e 39px,#000000 42px,#1a001a 43px,#ea00ea 47px,#d800ff 48px,#1200ff 51px,#004fff 52px,#0084ff 53px,#0035ff 54px,#009eff 56px,#00c8ff 58px,#00faff 62px,#00ffff 65px,#00fff4 88px,#00ffb2 139px,#00ff30 192px,#00ff06 196px,#7cff00 209px,#d5ff00 221px,#f7ff00 229px,#fff600 239px,#ffeb00 241px,#ffa300 246px,#ff0101 252px,#ff7979 257px)}.g371{background:linear-gradient(#e800e8,#fd00ff 2px,#ac00ff 16px,#5400ff 39px,#2700ff 40px,#2700ff 46px,#6b00ff 47px,#3000ff 48px,#0012ff 49px,#00ccff 51px,#00f9ff 52px,#00ffff 53px,#00ffe1 55px,#00ff06 63px,#00ff02 64px,#82ff00 100px,#a5ff00 120px,#f7ff00 182px,#fffc00 234px,#ffee00 241px,#ffce00 244px,#ff9900 247px,#ff0f00 252px,#ff1010 253px,#ff6a6a 257px)}.g372{background:linear-gradient(#db00ff,#b300ff 4px,#7b00ff 14px,#1a00ff 39px,#004eff 40px,#004eff 46px,#4c00ff 47px,#1100ff 48px,#00e5ff 51px,#00ffff 52px,#00ffe4 54px,#00ff9b 56px,#0eff00 62px,#2cff00 63px,#7cff00 85px,#c0ff00 114px,#faff00 169px,#fff900 235px,#ffec00 241px,#ffca00 244px,#ff7c00 248px,#ff0900 252px,#ff1616 253px,#ff7070 257px)}.g373{background:linear-gradient(#030003,#000000 42px,#060006 43px,#d600d6 47px,#ec00ff 48px,#2600ff 51px,#0032ff 52px,#0069ff 53px,#1300ff 54px,#001dff 55px,#0056ff 56px,#0071ff 57px,#00ebff 63px,#00ffff 86px,#00ffee 126px,#00ffba 166px,#00ff7d 192px,#00ff03 203px,#a6ff00 219px,#efff00 230px,#fff400 241px,#ffb500 246px,#ff0808 253px,#ff6363 257px)}.g374{background:linear-gradient(#000000,#000000 42px,#150015 43px,#e500e5 47px,#de00ff 48px,#1700ff 51px,#0047ff 52px,#007dff 53px,#0600ff 54px,#0068ff 56px,#0083ff 57px,#00f2ff 63px,#00fff0 114px,#00ffbd 157px,#00ff6c 192px,#00ff04 202px,#c8ff00 224px,#f2ff00 232px,#fff900 241px,#ffc400 246px,#ff6900 250px,#ff0e00 253px,#ff1111 254px,#ff4e4e 257px)}.g375{background:linear-gradient(#610061,#b300b3 11px,#fd00ff 29px,#db00ff 39px,#c800ff 40px,#c200ff 46px,#0f00ff 49px,#00b0ff 51px,#00edff 52px,#00ffff 54px,#00ffa9 59px,#00ff40 63px,#01ff00 80px,#4dff00 100px,#ceff00 169px,#f6ff00 201px,#fffe00 236px,#fff500 241px,#ffbe00 246px,#ff0400 253px,#ff5757 257px)}.g376{background:linear-gradient(#440044,#8b008b 9px,#ec00ec 31px,#f900ff 39px,#e400e4 40px,#e400e4 45px,#f600ff 46px,#0003ff 50px,#00c2ff 52px,#00e3ff 53px,#00ffff 56px,#00ffe1 60px,#00ffa9 63px,#00ff2a 100px,#00ff00 120px,#e5ff00 211px,#fffc00 238px,#ffec00 242px,#ffb900 246px,#ff0202 253px,#ff5d5d 257px)}.g377{background:linear-gradient(#0d000d,#0d000d 39px,#000000 42px,#d000d0 46px,#f300ff 47px,#3600ff 50px,#0017ff 51px,#007fff 52px,#00aeff 53px,#0066ff 54px,#00c3ff 56px,#00f0ff 59px,#00ffff 62px,#00ff8d 137px,#00ff00 191px,#c3ff00 218px,#f4ff00 230px,#fffc00 240px,#ffc400 246px,#ff0e00 253px,#ff1111 254px,#ff4e4e 257px)}.g378{background:linear-gradient(#a400a4,#ff00ff 13px,#9c00ff 37px,#9300ff 47px,#1c00ff 49px,#0040ff 50px,#00a1ff 51px,#00e4ff 52px,#00fffe 54px,#00ffb9 58px,#00ff39 63px,#01ff00 78px,#54ff00 100px,#cfff00 167px,#f8ff00 200px,#fffc00 235px,#ffed00 241px,#ffcb00 244px,#ff7d00 248px,#ff0a00 252px,#ff1515 253px,#ff6f6f 257px)}.g379{background:linear-gradient(#8500ff,#5600ff 5px,#0100ff 22px,#005cff 39px,#00c1ff 40px,#00c1ff 46px,#4a00ff 47px,#0f00ff 48px,#00e7ff 51px,#00ffff 52px,#00ffea 54px,#02ff00 62px,#20ff00 63px,#82ff00 90px,#c0ff00 120px,#f9ff00 172px,#fffc00 235px,#fff100 241px,#ffd300 244px,#ffa000 247px,#ff0707 253px,#ff6262 257px)}.g37a{background:linear-gradient(#190019,#410041 4px,#7e007e 15px,#da00da 38px,#d000d0 44px,#ed00ed 45px,#df00ff 46px,#2d00ff 49px,#0027ff 50px,#008cff 51px,#00d8ff 52px,#00f1ff 53px,#00fffc 56px,#00ffe0 59px,#00ff90 63px,#00ff00 105px,#e1ff00 207px,#fffc00 241px,#ffbf00 247px,#ff7b00 250px,#ff0400 254px,#ff3a3a 257px)}.g37b{background:linear-gradient(#0011ff,#0062ff 6px,#00a2ff 15px,#00ffff 40px,#00ffff 46px,#6d00ff 47px,#0010ff 49px,#00caff 51px,#00f8ff 52px,#00ffff 53px,#00fff6 55px,#00ffbd 58px,#00ff3e 63px,#03ff00 80px,#4fff00 100px,#d2ff00 171px,#f0ff00 193px,#fffc00 241px,#ffc100 247px,#ff7e00 250px,#ff0700 254px,#ff3737 257px)}.g37c{background:linear-gradient(#4e004e,#950095 9px,#fd00ff 34px,#e200ff 40px,#e200ff 45px,#c800ff 46px,#1500ff 49px,#004bff 50px,#00a9ff 51px,#00e9ff 52px,#00ffff 54px,#00ffc2 58px,#00ff45 63px,#00ff00 81px,#48ff00 100px,#c9ff00 168px,#f4ff00 200px,#fffe00 235px,#fff400 241px,#ffca00 245px,#ff7700 249px,#ff0100 253px,#ff5a5a 257px)}.g37d{background:linear-gradient(#640064,#a000a0 7px,#fd00fd 27px,#d800ff 38px,#d800ff 39px,#f500ff 40px,#f500ff 45px,#f100ff 46px,#000bff 50px,#00c7ff 52px,#00e6ff 53px,#00ffff 56px,#00fff1 59px,#00ffb0 63px,#00ff33 100px,#00ff00 125px,#e0ff00 212px,#fffc00 240px,#ffc900 246px,#ff0909 254px,#ff4646 257px)}.g37e{background:linear-gradient(#040004,#000000 41px,#180018 42px,#5b005b 43px,#f000f0 46px,#d300ff 47px,#1600ff 50px,#0049ff 51px,#00a8ff 52px,#00cfff 53px,#00c4ff 54px,#00f8ff 56px,#00ffff 58px,#00ffd4 63px,#00ff69 100px,#01ff00 150px,#74ff00 192px,#eaff00 219px,#fffe00 237px,#fff300 241px,#ffc500 245px,#ff0808 253px,#ff6363 257px)}.g37f{background:linear-gradient(#0f000f,#100010 6px,#9c009c 38px,#870087 40px,#870087 43px,#e200e2 45px,#ea00ff 46px,#3800ff 49px,#0016ff 50px,#00ceff 52px,#00ebff 53px,#00ffff 55px,#00ffd7 59px,#00ff82 63px,#02ff00 99px,#e7ff00 204px,#fffe00 235px,#fff000 241px,#ffcf00 244px,#ff9a00 247px,#ff1000 252px,#ff0f0f 253px,#ff6969 257px)}.g380{background:linear-gradient(#7e007e,#bf00bf 8px,#fc00ff 22px,#bf00ff 39px,#7900ff 40px,#7900ff 46px,#1800ff 48px,#0038ff 49px,#009aff 50px,#00e0ff 51px,#00feff 52px,#00fffc 53px,#00ffe8 55px,#00ff16 63px,#01ff00 69px,#74ff00 100px,#d9ff00 161px,#faff00 192px,#fffd00 240px,#ffd000 246px,#ff7a00 250px,#ff0300 254px,#ff3b3b 257px)}.g381{background:linear-gradient(#0d000d,#0d000d 39px,#000000 41px,#150015 42px,#580058 43px,#ec00ec 46px,#d600ff 47px,#1a00ff 50px,#0044ff 51px,#00a4ff 52px,#00ccff 53px,#00cdff 54px,#00fbff 56px,#00ffff 58px,#00ffcc 63px,#00ff5c 100px,#02ff00 145px,#81ff00 192px,#eaff00 216px,#fffa00 237px,#ffea00 241px,#ffb400 245px,#ff0202 252px,#ff7979 257px)}.g382{background:linear-gradient(#0f000f,#490049 7px,#960096 23px,#cf00cf 38px,#c200c2 44px,#eb00eb 45px,#e100ff 46px,#2f00ff 49px,#0023ff 50px,#0089ff 51px,#00d6ff 52px,#00f0ff 53px,#00ffff 55px,#00ffdd 59px,#00ff8b 63px,#01ff00 103px,#dfff00 204px,#fffc00 240px,#ffc900 246px,#ff0909 254px,#ff4646 257px)}.g383{background:linear-gradient(#c400ff,#9500ff 5px,#5f00ff 15px,#0300ff 39px,#00bfff 40px,#00bfff 46px,#0d00ff 47px,#00e1ff 50px,#00ffff 51px,#00ffc4 54px,#00ff68 56px,#0dff00 60px,#65ff00 63px,#d4ff00 102px,#feff00 157px,#fffc00 235px,#fff500 241px,#ffcf00 245px,#ff7d00 249px,#ff0800 253px,#ff5454 257px)}.g384{background:linear-gradient(#0011ff,#0062ff 6px,#00b7ff 19px,#00ebff 34px,#00f3ff 46px,#9800ff 47px,#2100ff 49px,#0038ff 50px,#009aff 51px,#00e0ff 52px,#00ffff 54px,#00ffcc 58px,#00ff54 63px,#02ff00 86px,#3aff00 101px,#d3ff00 180px,#f6ff00 207px,#fffe00 236px,#fff400 241px,#ffca00 245px,#ff7600 249px,#ff0000 253px,#ff5b5b 257px)}.g385{background:linear-gradient(#0011ff,#0062ff 6px,#00adff 17px,#00e6ff 32px,#00f7ff 46px,#9000ff 47px,#1900ff 49px,#0045ff 50px,#00a5ff 51px,#00e7ff 52px,#00ffff 54px,#00ffad 59px,#00ff44 63px,#00ff00 81px,#48ff00 100px,#cfff00 172px,#f5ff00 201px,#fffe00 235px,#fff300 241px,#ffd500 244px,#ffa300 247px,#ff0404 253px,#ff5f5f 257px)}.g386{background:linear-gradient(#d400ff,#a500ff 5px,#6a00ff 16px,#1300ff 39px,#00a2ff 40px,#00a2ff 46px,#1700ff 47px,#0039ff 48px,#00d9ff 50px,#00fdff 51px,#00fff3 52px,#00ffd7 54px,#00ff85 56px,#0bff00 61px,#46ff00 63px,#c0ff00 102px,#fdff00 166px,#fffd00 238px,#fff500 242px,#ffcc00 246px,#ff0505 254px,#ff4343 257px)}.g387{background:linear-gradient(#e900e9,#fc00ff 2px,#ab00ff 16px,#5300ff 39px,#2200ff 40px,#2200ff 46px,#6700ff 47px,#2c00ff 48px,#0019ff 49px,#00d0ff 51px,#00faff 52px,#00ffff 53px,#00ffdf 55px,#00ff04 63px,#00ff00 64px,#84ff00 100px,#daff00 155px,#fdff00 192px,#fffc00 235px,#fff000 241px,#ffd000 244px,#ff9c00 247px,#ff1200 252px,#ff0d0d 253px,#ff6767 257px)}.g388{background:linear-gradient(#170017,#170017 39px,#000000 40px,#000000 42px,#0d000d 43px,#dd00dd 47px,#e600ff 48px,#1f00ff 51px,#003bff 52px,#0072ff 53px,#0006ff 54px,#0076ff 56px,#00d0ff 60px,#00f6ff 63px,#00feff 74px,#00ffea 115px,#00ffbb 153px,#00ff5f 192px,#00ff08 200px,#ccff00 222px,#f5ff00 230px,#fff900 239px,#ffef00 241px,#ffa900 246px,#ff0600 252px,#ff7272 257px)}.g389{background:linear-gradient(#b500b5,#fd00ff 10px,#8800ff 38px,#8500ff 46px,#9600ff 47px,#1f00ff 49px,#003cff 50px,#009dff 51px,#00e2ff 52px,#00fff7 54px,#00ff0a 63px,#02ff00 66px,#7eff00 100px,#ccff00 148px,#faff00 188px,#fff300 232px,#ffd600 241px,#ff8300 246px,#ff1500 250px,#ff0a0a 251px,#ff9b9b 257px)}.g38a{background:linear-gradient(#b400ff,#8500ff 5px,#4a00ff 16px,#0100ff 34px,#0016ff 39px,#00b2ff 40px,#00b2ff 46px,#2900ff 47px,#001cff 48px,#00c9ff 50px,#00f8ff 51px,#00fffa 52px,#00ffe5 54px,#00ff9b 56px,#0dff00 62px,#2bff00 63px,#74ff00 83px,#a9ff00 100px,#c1ff00 116px,#faff00 170px,#fffe00 237px,#fff500 242px,#ffcd00 246px,#ff7500 250px,#ff0303 254px,#ff4141 257px)}.g38b{background:linear-gradient(#330033,#330033 39px,#000000 40px,#000000 42px,#f600ff 47px,#3900ff 50px,#0013ff 51px,#007bff 52px,#00aaff 53px,#0091ff 54px,#00dfff 56px,#00ffff 60px,#00ff5d 140px,#01ff00 176px,#33ff00 192px,#99ff00 205px,#dcff00 217px,#fcff00 228px,#fffa00 237px,#ffe600 241px,#ffbd00 244px,#ff8200 247px,#ff1200 251px,#ff0d0d 252px,#ff8383 257px)}.g38c{background:linear-gradient(#3e003e,#660066 4px,#a300a3 15px,#ff00ff 39px,#e400e4 40px,#e400e4 45px,#f000ff 46px,#000dff 50px,#00c9ff 52px,#00ffff 55px,#00ffd5 59px,#00ff7e 63px,#02ff00 98px,#ecff00 205px,#fffc00 235px,#ffe800 241px,#ffc200 244px,#ff8900 247px,#ff0505 252px,#ff7c7c 257px)}.g38d{background:linear-gradient(#eb00ff,#bc00ff 5px,#8100ff 16px,#2900ff 39px,#0049ff 40px,#0049ff 46px,#4100ff 47px,#0500ff 48px,#00b0ff 50px,#00edff 51px,#00ffff 52px,#00ffe5 54px,#00ff9c 56px,#00ff12 61px,#2aff00 63px,#4cff00 72px,#a0ff00 97px,#bcff00 113px,#f9ff00 169px,#fffc00 235px,#fff200 241px,#ffd500 244px,#ffa300 247px,#ff0404 253px,#ff5f5f 257px)}.g38e{background:linear-gradient(#d900ff,#7d00ff 13px,#1700ff 39px,#0057ff 40px,#0057ff 46px,#4900ff 47px,#0e00ff 48px,#00e7ff 51px,#00ffff 52px,#00ffdd 55px,#01ff00 63px,#87ff00 100px,#b5ff00 128px,#f9ff00 183px,#ffff00 236px,#fff500 242px,#ffcb00 246px,#ff0707 254px,#ff4444 257px)}.g38f{background:linear-gradient(#a200a2,#d100d1 5px,#fc00ff 14px,#9200ff 40px,#9000ff 47px,#1900ff 49px,#0045ff 50px,#00a4ff 51px,#00e6ff 52px,#00ffff 54px,#00ffcd 58px,#00ff55 63px,#01ff00 86px,#36ff00 100px,#d7ff00 183px,#f6ff00 209px,#fffd00 238px,#fff100 242px,#ffc300 246px,#ff8100 249px,#ff0d00 253px,#ff1212 254px,#ff4f4f 257px)}.g390{background:linear-gradient(#be00ff,#9600ff 4px,#5900ff 15px,#0005ff 39px,#0082ff 40px,#0082ff 46px,#4500ff 47px,#0900ff 48px,#00abff 50px,#00eaff 51px,#00ffff 52px,#00ffe5 54px,#00ff9c 56px,#0dff00 62px,#2bff00 63px,#7aff00 85px,#bfff00 115px,#f9ff00 169px,#fffb00 235px,#fff000 241px,#ffd100 244px,#ff9e00 247px,#ff1400 252px,#ff0b0b 253px,#ff6565 257px)}.g391{background:linear-gradient(#bb00bb,#fd00ff 9px,#8200ff 39px,#5b00ff 40px,#5b00ff 46px,#7200ff 47px,#3700ff 48px,#0008ff 49px,#00c5ff 51px,#00f7ff 52px,#00ffff 53px,#00ffea 55px,#00ff1c 63px,#03ff00 71px,#6eff00 100px,#cfff00 157px,#f8ff00 191px,#fffe00 234px,#fff300 241px,#ffc800 245px,#ff8c00 248px,#ff0404 253px,#ff5f5f 257px)}.g392{background:linear-gradient(#0f000f,#440044 6px,#8a008a 20px,#d000d0 38px,#cb00cb 44px,#f300f3 45px,#d900ff 46px,#2700ff 49px,#0030ff 50px,#0093ff 51px,#00dcff 52px,#00ffff 54px,#00ffc7 58px,#00ff4e 63px,#01ff00 84px,#3eff00 100px,#d8ff00 181px,#faff00 209px,#fffd00 234px,#ffed00 241px,#ffcb00 244px,#ff9500 247px,#ff0900 252px,#ff1616 253px,#ff7070 257px)}.g393{background:linear-gradient(#8c008c,#bb00bb 5px,#ff00ff 18px,#a700ff 40px,#a700ff 46px,#9000ff 47px,#1900ff 49px,#0045ff 50px,#00a5ff 51px,#00e7ff 52px,#00ffff 55px,#00ffcd 59px,#00ff71 63px,#01ff00 94px,#d2ff00 190px,#fffd00 241px,#ffc500 247px,#ff8300 250px,#ff0d00 254px,#ff1212 255px,#ff3131 257px)}.g394{background:linear-gradient(#dc00ff,#7c00ff 14px,#1b00ff 39px,#0031ff 40px,#0031ff 46px,#5e00ff 47px,#2300ff 48px,#0026ff 49px,#008bff 50px,#00d7ff 51px,#00fdff 52px,#00fffe 53px,#00ffe2 55px,#00ff0a 63px,#01ff00 66px,#7dff00 100px,#d0ff00 151px,#fbff00 190px,#fffe00 235px,#fff600 241px,#ffce00 245px,#ff9400 248px,#ff0600 253px,#ff5656 257px)}.g395{background:linear-gradient(#e100e1,#fc00ff 3px,#ae00ff 17px,#5b00ff 39px,#1a00ff 40px,#1a00ff 46px,#5800ff 47px,#1d00ff 48px,#0030ff 49px,#0094ff 50px,#00ddff 51px,#00feff 52px,#00fffd 53px,#00ff1a 61px,#04ff00 62px,#22ff00 63px,#4fff00 75px,#a2ff00 100px,#b6ff00 113px,#faff00 174px,#fff700 236px,#ffea00 241px,#ffc700 244px,#ff8f00 247px,#ff0200 252px,#ff7676 257px)}.g396{background:linear-gradient(#110011,#630063 11px,#cc00cc 36px,#d300d3 39px,#b200b2 40px,#b200b2 44px,#f500ff 46px,#0004ff 50px,#00c3ff 52px,#00e3ff 53px,#00ffff 56px,#00fff1 59px,#00ffb0 63px,#00ff35 100px,#00ff00 126px,#e1ff00 212px,#fffe00 238px,#fff000 242px,#ffc200 246px,#ff6500 250px,#ff0a00 253px,#ff1515 254px,#ff5252 257px)}.g397{background:linear-gradient(#760076,#b700b7 8px,#fe00fe 23px,#c700ff 38px,#c700ff 46px,#2200ff 49px,#0037ff 50px,#0099ff 51px,#00e0ff 52px,#00fffc 55px,#00ffbd 59px,#00ff5a 63px,#03ff00 88px,#31ff00 100px,#d4ff00 183px,#f4ff00 207px,#ffff00 235px,#fff600 241px,#ffcd00 245px,#ff7a00 249px,#ff0400 253px,#ff5757 257px)}.g398{background:linear-gradient(#a100ff,#5a00ff 9px,#0100ff 29px,#0033ff 39px,#00c7ff 40px,#00c7ff 46px,#2800ff 47px,#001eff 48px,#00caff 50px,#00f8ff 51px,#00fffa 52px,#00ffd5 54px,#00ff81 56px,#00ff0f 60px,#10ff00 61px,#4bff00 63px,#c1ff00 101px,#fdff00 165px,#fffc00 235px,#fff200 241px,#ffd600 244px,#ffa400 247px,#ff0303 253px,#ff5e5e 257px)}.g399{background:linear-gradient(#050005,#000000 41px,#070007 42px,#4a004a 43px,#df00df 46px,#e400ff 47px,#2700ff 50px,#002fff 51px,#0093ff 52px,#00beff 53px,#008aff 54px,#00daff 56px,#00ffff 61px,#00ff67 140px,#00ff00 179px,#29ff00 192px,#d0ff00 219px,#ffff00 238px,#fffa00 241px,#ffc800 246px,#ff6d00 250px,#ff1300 253px,#ff0c0c 254px,#ff4949 257px)}.g39a{background:linear-gradient(#d000d0,#fe00fe 5px,#6d00ff 39px,#5700ff 40px,#5700ff 46px,#8300ff 47px,#0c00ff 49px,#00b4ff 51px,#00efff 52px,#00ffff 54px,#00ffc5 58px,#00ff49 63px,#02ff00 83px,#41ff00 100px,#ddff00 183px,#fffb00 240px,#ffc800 246px,#ff6d00 250px,#ff1300 253px,#ff0c0c 254px,#ff4949 257px)}.g39b{background:linear-gradient(#520052,#990099 9px,#fd00ff 33px,#eb00ff 39px,#a900a9 40px,#a900a9 45px,#bf00bf 46px,#fa00fa 47px,#8d00ff 49px,#0200ff 51px,#0067ff 52px,#0099ff 53px,#dd00ff 54px,#9200ff 56px,#0d00ff 63px,#0000ff 68px,#0074ff 100px,#0097ff 120px,#00e8ff 132px,#00ffff 143px,#00ffef 150px,#00ffc0 158px,#00ff0b 176px,#92ff00 190px,#e4ff00 200px,#fffe00 235px,#ffef00 241px,#ffae00 246px,#ff0c00 252px,#ff1313 253px,#ff6d6d 257px)}.g39c{background:linear-gradient(#710071,#b200b2 8px,#fd00ff 25px,#cc00ff 38px,#e100ff 40px,#e100ff 46px,#3700ff 49px,#0017ff 50px,#00cfff 52px,#00ebff 53px,#00fffe 56px,#00ffe7 59px,#00ff9d 63px,#00ff1d 100px,#00ff00 114px,#dcff00 207px,#fffc00 240px,#ffc800 246px,#ff8800 249px,#ff1400 253px,#ff0b0b 254px,#ff4848 257px)}.g39d{background:linear-gradient(#0e000e,#0e000e 39px,#000000 42px,#f800f8 47px,#8f00ff 49px,#0400ff 51px,#0064ff 52px,#0096ff 53px,#006cff 54px,#00c7ff 56px,#00f2ff 59px,#00ffff 62px,#00ff8b 137px,#00ff00 190px,#d1ff00 217px,#f8ff00 227px,#fffa00 237px,#ffe500 241px,#ffba00 244px,#ff9700 246px,#ff0d00 251px,#ff1212 252px,#ff8787 257px)}.g39e{background:linear-gradient(#5c005c,#a300a3 9px,#fe00ff 30px,#e100ff 38px,#e600ff 45px,#da00ff 46px,#2800ff 49px,#002fff 50px,#0092ff 51px,#00dcff 52px,#00ffff 54px,#00ffbd 58px,#00ff3d 63px,#03ff00 80px,#4dff00 100px,#caff00 167px,#faff00 204px,#fff900 235px,#ffe600 241px,#ffbf00 244px,#ff8500 247px,#ff1500 251px,#ff0a0a 252px,#ff8181 257px)}.g39f{background:linear-gradient(#000000,#000000 41px,#0a000a 42px,#4d004d 43px,#e100e1 46px,#e100ff 47px,#2500ff 50px,#0033ff 51px,#0096ff 52px,#00c1ff 53px,#00b8ff 54px,#00f3ff 56px,#00ffff 59px,#00ffde 63px,#00ff7b 100px,#02ff00 158px,#62ff00 192px,#adff00 204px,#e5ff00 217px,#fffb00 237px,#ffea00 241px,#ffb400 245px,#ff0303 252px,#ff7a7a 257px)}.g3a0{background:linear-gradient(#f700f7,#9400ff 18px,#4600ff 39px,#0e00ff 40px,#0e00ff 46px,#6100ff 47px,#2600ff 48px,#0022ff 49px,#0088ff 50px,#00d5ff 51px,#00fcff 52px,#00fffe 53px,#00ff16 61px,#26ff00 63px,#4bff00 73px,#a4ff00 100px,#b5ff00 111px,#faff00 173px,#fff500 235px,#ffe300 241px,#ffcb00 243px,#ff9a00 246px,#ff1100 251px,#ff0e0e 252px,#ff8484 257px)}.g3a1{background:linear-gradient(#720072,#b900b9 9px,#fe00fe 24px,#cb00ff 38px,#d500ff 46px,#2c00ff 49px,#0027ff 50px,#008cff 51px,#00d8ff 52px,#00fffd 55px,#00ffc1 59px,#00ff60 63px,#00ff00 89px,#2aff00 100px,#ceff00 182px,#f9ff00 212px,#fffe00 234px,#ffda00 243px,#ff9700 247px,#ff0b00 252px,#ff1414 253px,#ff6d6d 257px)}.g3a2{background:linear-gradient(#ef00ef,#fe00fe 1px,#a500ff 16px,#4d00ff 39px,#0003ff 40px,#0003ff 46px,#4a00ff 47px,#0e00ff 48px,#00e7ff 51px,#00ffff 52px,#00ffe6 55px,#00ff11 63px,#02ff00 68px,#76ff00 100px,#daff00 161px,#faff00 191px,#fffd00 241px,#ffc400 247px,#ff8200 250px,#ff0c00 254px,#ff3232 257px)}.g3a3{background:linear-gradient(#fb00fb,#a700ff 13px,#4100ff 39px,#2000ff 40px,#2000ff 46px,#7700ff 47px,#0000ff 49px,#00c0ff 51px,#00f4ff 52px,#00ffff 53px,#00ffe7 55px,#00ff15 63px,#00ff02 68px,#73ff00 100px,#cfff00 155px,#f9ff00 191px,#fffc00 235px,#ffee00 241px,#ffce00 244px,#ff8000 248px,#ff0d00 252px,#ff1212 253px,#ff6c6c 257px)}.g3a4{background:linear-gradient(#150015,#150015 39px,#000000 41px,#180018 42px,#5b005b 43px,#f000f0 46px,#d300ff 47px,#1600ff 50px,#0049ff 51px,#00a8ff 52px,#00cfff 53px,#00c3ff 54px,#00f8ff 56px,#00ffff 58px,#00ffd5 63px,#00ff6c 100px,#02ff00 152px,#70ff00 192px,#e8ff00 219px,#fffe00 237px,#fff300 241px,#ffc600 245px,#ff0808 253px,#ff6262 257px)}.g3a5{background:linear-gradient(#0f000f,#0f000f 46px,#b700ff 47px,#4000ff 49px,#0009ff 50px,#00c6ff 52px,#00f9ff 54px,#00ffff 55px,#00ffe6 59px,#00fffe 67px,#00ffd3 72px,#00fffa 77px,#00fff9 80px,#00ffd6 83px,#00ff32 84px,#00ff27 87px,#00ffd7 88px,#00fff3 91px,#00ffef 93px,#00ffd9 95px,#00ff05 96px,#00ff01 97px,#0eff00 102px,#00ffde 103px,#00ffe7 105px,#00ffda 107px,#1aff00 108px,#2bff00 116px,#00ffd6 117px,#00ffd9 118px,#00ffd6 119px,#33ff00 120px,#d8ff00 198px,#fffd00 241px,#ffc500 247px,#ff8200 250px,#ff0c00 254px,#ff3232 257px)}.g3a6{background:linear-gradient(#0f000f,#0f000f 46px,#00daff 47px,#00a1ff 52px,#00fcff 58px,#00f9ff 61px,#00c1ff 65px,#00dcff 68px,#00faff 69px,#00ffff 71px,#00feff 75px,#00dcff 78px,#00ffff 82px,#00fffe 95px,#00ffee 98px,#00fffe 107px,#00ffe0 112px,#00fff9 116px,#00fff9 120px,#00ffd5 124px,#0eff00 125px,#00ffd5 126px,#00fff6 131px,#00ffde 135px,#25ff00 136px,#2dff00 140px,#00ffd7 141px,#00ffed 144px,#00ffd3 148px,#44ff00 149px,#54ff00 155px,#00ffd9 156px,#00ffde 157px,#00ffd9 159px,#60ff00 160px,#cfff00 208px,#ffff00 242px,#fff400 245px,#ffcf00 248px,#ff9000 251px,#ff0303 257px)}.g3a7{background:linear-gradient(#0f000f,#0f000f 46px,#008aff 47px,#0039ff 52px,#0051ff 54px,#00adff 58px,#00afff 60px,#0064ff 65px,#00cfff 72px,#008dff 79px,#00f6ff 85px,#00f3ff 87px,#00b9ff 90px,#00afff 92px,#00d8ff 95px,#00f7ff 96px,#00feff 98px,#00f4ff 102px,#00d7ff 103px,#00cdff 105px,#00ddff 107px,#00f8ff 108px,#00ffff 110px,#00fff2 138px,#00ffff 146px,#00ffe8 151px,#00fff9 159px,#00ffd6 164px,#00ffef 170px,#00ffe0 174px,#00ffd6 175px,#5dff00 176px,#68ff00 180px,#00ffd6 181px,#00ffe3 184px,#00ffd2 187px,#7eff00 188px,#91ff00 195px,#00ffd3 196px,#00ffd5 197px,#00ffd4 198px,#9bff00 199px,#ffff00 244px,#fff200 247px,#ffc800 250px,#ff2b00 257px)}.g3a8{background:linear-gradient(#0f000f,#0f000f 46px,#001dff 47px,#0800ff 49px,#2600ff 52px,#0400ff 55px,#0048ff 58px,#004fff 59px,#0300ff 64px,#0600ff 66px,#0006ff 67px,#005bff 70px,#0078ff 72px,#0069ff 74px,#002aff 77px,#0021ff 79px,#009dff 85px,#0093ff 87px,#0059ff 90px,#004bff 92px,#00bdff 98px,#00b8ff 100px,#0074ff 105px,#00d7ff 111px,#00d5ff 113px,#009aff 118px,#00aeff 120px,#00f4ff 123px,#00faff 125px,#00f5ff 127px,#00daff 128px,#00bbff 131px,#00c9ff 133px,#00f6ff 135px,#00feff 137px,#00f6ff 142px,#00d7ff 144px,#00ffff 149px,#00ffff 171px,#00ffe9 178px,#00fff8 185px,#00ffdb 191px,#00fff0 197px,#00ffdf 201px,#00ffd7 202px,#7eff00 203px,#84ff00 205px,#00ffd3 206px,#00ffe5 210px,#00ffd4 214px,#9cff00 215px,#a9ff00 221px,#00ffd7 222px,#00ffd6 225px,#b4ff00 226px,#fff700 248px,#ffd200 251px,#ff5800 257px)}.g3a9{background:linear-gradient(#0f000f,#0f000f 46px,#3800ff 47px,#7000ff 52px,#1700ff 59px,#5300ff 65px,#4600ff 67px,#0100ff 71px,#0500ff 74px,#3600ff 78px,#2c00ff 80px,#0900ff 82px,#0034ff 85px,#0028ff 87px,#0300ff 89px,#1a00ff 92px,#0300ff 94px,#004fff 97px,#0060ff 99px,#0016ff 103px,#0004ff 105px,#0022ff 107px,#0074ff 110px,#0088ff 112px,#0030ff 118px,#0049ff 120px,#0097ff 123px,#00acff 125px,#005bff 131px,#00caff 138px,#00bfff 140px,#008dff 143px,#0086ff 145px,#00f4ff 151px,#00f3ff 153px,#00d8ff 154px,#00baff 157px,#00c7ff 159px,#00f5ff 161px,#00feff 163px,#00ffff 186px,#00ffd4 241px,#ddff00 242px,#fcff00 246px,#00ffd4 247px,#00ffd6 251px,#ffda00 252px,#ff8200 257px)}.g3aa{background:linear-gradient(#0f000f,#0f000f 46px,#8300ff 47px,#bb00ff 52px,#6100ff 59px,#9e00ff 65px,#9100ff 67px,#4500ff 72px,#8000ff 79px,#2900ff 85px,#6400ff 92px,#0e00ff 98px,#1200ff 100px,#4800ff 105px,#0004ff 110px,#001bff 112px,#0001ff 114px,#2c00ff 118px,#0900ff 121px,#0047ff 125px,#0032ff 127px,#0003ff 129px,#0f00ff 131px,#0100ff 133px,#0053ff 136px,#0070ff 138px,#0060ff 140px,#0021ff 143px,#0018ff 145px,#0098ff 151px,#0094ff 153px,#0063ff 156px,#005dff 158px,#00d5ff 164px,#00a8ff 171px,#00faff 176px,#00f3ff 183px,#00e0ff 184px,#00f4ff 185px,#00ffff 189px,#00fffa 223px,#00ffd5 254px,#ffbe00 255px,#ffa800 257px)}.g3ab{background:linear-gradient(#0f000f,#0f000f 46px,#cd00ff 47px,#f600ff 50px,#fd00fd 53px,#ac00ff 59px,#e300ff 64px,#e600ff 66px,#8f00ff 72px,#ca00ff 79px,#7400ff 85px,#ae00ff 92px,#5800ff 98px,#9200ff 105px,#3900ff 112px,#7600ff 118px,#1d00ff 125px,#5900ff 131px,#4c00ff 133px,#0000ff 138px,#3c00ff 144px,#3200ff 146px,#0f00ff 148px,#0031ff 152px,#0003ff 155px,#1000ff 157px,#0400ff 159px,#0081ff 164px,#0080ff 166px,#004dff 169px,#0042ff 171px,#00c3ff 177px,#00c6ff 179px,#0093ff 184px,#00adff 186px,#00f5ff 189px,#00f8ff 190px,#00f4ff 194px,#00dcff 195px,#00d2ff 197px,#00d6ff 198px,#00f3ff 199px,#00ffff 204px,#00fff6 237px,#00ffd8 257px)}.g3ac{background:linear-gradient(#0f000f,#0f000f 46px,#e700e7 47px,#af00af 52px,#fb00ff 58px,#ee00ee 62px,#ee00ee 68px,#fd00fd 69px,#da00ff 72px,#fc00fc 76px,#ee00ee 79px,#fc00ff 81px,#be00ff 85px,#f900ff 92px,#ac00ff 97px,#a100ff 99px,#dd00ff 105px,#8400ff 112px,#c000ff 118px,#6700ff 125px,#a400ff 131px,#4b00ff 138px,#8500ff 145px,#2d00ff 151px,#5a00ff 157px,#4e00ff 159px,#0000ff 163px,#0018ff 165px,#0001ff 167px,#2000ff 170px,#0800ff 173px,#0053ff 176px,#006eff 178px,#0027ff 184px,#0048ff 186px,#009eff 189px,#00b7ff 191px,#0080ff 196px,#0083ff 198px,#00f3ff 203px,#00f4ff 206px,#00dbff 207px,#00c1ff 210px,#00f7ff 214px,#00fcff 216px,#00fff3 250px,#00ffe2 257px)}.g3ad{background:linear-gradient(#0f000f,#0f000f 46px,#9c009c 47px,#680068 51px,#690069 53px,#ac00ac 57px,#ba00ba 60px,#ee00ee 63px,#ef00ef 95px,#eb00ff 99px,#fe00ff 101px,#ef00ef 103px,#fd00fd 108px,#ce00ff 112px,#fc00ff 116px,#fa00ff 120px,#b200ff 125px,#ee00ff 131px,#9500ff 138px,#d000ff 145px,#7700ff 151px,#a300ff 158px,#3f00ff 164px,#6a00ff 171px,#0700ff 177px,#0500ff 179px,#3100ff 184px,#0800ff 187px,#0055ff 191px,#000cff 197px,#0029ff 199px,#0098ff 203px,#00a3ff 205px,#0064ff 210px,#0079ff 212px,#00c3ff 215px,#00dcff 217px,#00d1ff 222px,#00f3ff 224px,#00ffff 228px,#00ffea 257px)}.g3ae{background:linear-gradient(#0f000f,#0f000f 46px,#520052 47px,#1a001a 52px,#2a002a 54px,#7e007e 59px,#ee00ee 63px,#f000f0 122px,#ff00ff 126px,#f000f0 128px,#f800f8 135px,#e000ff 138px,#f900ff 141px,#f100f1 143px,#fd00fd 147px,#bf00ff 152px,#ed00ff 158px,#8900ff 164px,#b500ff 171px,#5200ff 177px,#4f00ff 179px,#7c00ff 184px,#1300ff 191px,#4300ff 197px,#0700ff 201px,#003bff 204px,#0030ff 206px,#0500ff 209px,#0600ff 211px,#000aff 212px,#0066ff 215px,#008cff 217px,#0077ff 220px,#0085ff 223px,#00f5ff 227px,#00fff1 257px)}.g3af{background:linear-gradient(#0f000f,#0f000f 55px,#140014 56px,#ea00ea 64px,#f700f7 161px,#d000ff 165px,#ff00ff 171px,#9c00ff 177px,#9a00ff 179px,#c600ff 184px,#5e00ff 191px,#8d00ff 197px,#2500ff 204px,#5400ff 210px,#4400ff 212px,#0700ff 215px,#0022ff 218px,#0007ff 221px,#002eff 224px,#00f4ff 229px,#00fff7 257px)}.g3b0{background:linear-gradient(#0f000f,#0f000f 56px,#1a001a 57px,#e500e5 65px,#e900e9 174px,#f700f7 175px,#e100ff 178px,#fa00ff 181px,#ee00ee 184px,#fb00ff 186px,#bd00ff 189px,#a800ff 191px,#d700ff 197px,#6f00ff 204px,#9a00ff 209px,#9a00ff 211px,#3700ff 217px,#4400ff 222px,#1500ff 225px,#000fff 226px,#00a0ff 229px,#00cdff 231px,#00f9ff 239px,#00fffb 257px)}.g3b1{background:linear-gradient(#0f000f,#0f000f 57px,#d600d6 65px,#e100e1 66px,#e500e5 188px,#f900ff 190px,#e600e6 198px,#fc00ff 200px,#ba00ff 204px,#e800ff 210px,#d900ff 212px,#8100ff 217px,#9000ff 220px,#8600ff 223px,#6000ff 225px,#0007ff 228px,#005dff 230px,#0075ff 231px,#0090ff 236px,#00f5ff 240px,#00fffe 257px)}.g3b2{background:linear-gradient(#0f000f,#0f000f 58px,#d700d7 66px,#dc00dc 67px,#e100e1 201px,#fa00fa 204px,#e200e2 212px,#fc00ff 214px,#cb00ff 217px,#db00ff 220px,#d100ff 223px,#aa00ff 225px,#2600ff 229px,#0005ff 231px,#001aff 235px,#0039ff 237px,#00f4ff 242px,#00ffff 257px)}.g3b3{background:linear-gradient(#0f000f,#0f000f 59px,#d800d8 67px,#dd00dd 215px,#ea00ea 218px,#de00de 222px,#f400ff 225px,#5800ff 230px,#3e00ff 232px,#3300ff 236px,#1000ff 238px,#0016ff 239px,#00a6ff 242px,#00f3ff 246px,#00ffff 257px)}.g3b4{background:linear-gradient(#0f000f,#0f000f 59px,#140014 60px,#d300d3 68px,#d900d9 225px,#de00de 226px,#fe00ff 227px,#bb00ff 229px,#9200ff 231px,#7000ff 237px,#000dff 241px,#0067ff 243px,#0081ff 244px,#009bff 249px,#00aaff 250px,#00f4ff 252px,#00fdff 257px)}.g3b5{background:linear-gradient(#0f000f,#0f000f 60px,#180018 61px,#cf00cf 69px,#d500d5 227px,#d900d9 228px,#f800f8 229px,#d300ff 232px,#ba00ff 237px,#0700ff 243px,#0022ff 245px,#0032ff 249px,#0045ff 250px,#00f5ff 254px,#00faff 257px)}.g3b6{background:linear-gradient(#0f000f,#0f000f 61px,#ca00ca 70px,#d100d1 230px,#f900f9 237px,#ef00ff 238px,#6c00ff 242px,#3f00ff 244px,#2a00ff 249px,#0001ff 251px,#00b4ff 254px,#00f5ff 257px)}.g3b7{background:linear-gradient(#0f000f,#0f000f 62px,#c100c1 70px,#c600c6 71px,#cc00cc 237px,#cd00cd 238px,#fa00ff 240px,#8900ff 244px,#6900ff 250px,#2400ff 252px,#000cff 253px,#008fff 255px,#00bcff 257px)}.g3b8{background:linear-gradient(#0f000f,#0f000f 63px,#9e009e 71px,#a300a3 239px,#fd00fd 242px,#c900ff 245px,#b300ff 250px,#1500ff 254px,#005cff 257px)}.g3b9{background:linear-gradient(#0f000f,#0f000f 63px,#770077 72px,#7b007b 240px,#e000e0 244px,#fd00ff 250px,#0e00ff 257px)}.g3ba{background:linear-gradient(#0f000f,#0f000f 64px,#530053 73px,#550055 241px,#960096 244px,#b600b6 250px,#fb00fb 252px,#5900ff 257px)}.g3bb{background:linear-gradient(#0f000f,#0f000f 65px,#300030 74px,#310031 242px,#550055 245px,#6c006c 250px,#f400ff 254px,#a300ff 257px)}.g3bc{background:linear-gradient(#0f000f,#0f000f 247px,#220022 250px,#660066 252px,#eb00eb 255px,#ed00ff 257px)}.g3bd{background:linear-gradient(#0f000f,#0f000f 251px,#1c001c 252px,#c600c6 257px)}.g3be{background:linear-gradient(#0f000f,#0f000f 253px,#7c007c 257px)}.g3bf{background:linear-gradient(#0f000f,#0f000f 54px,#590059 58px,#950095 64px,#b400b4 116px,#fe00ff 153px,#f200ff 159px,#0300ff 193px,#0081ff 210px,#00e7ff 216px,#00ffff 221px,#00ffe8 226px,#00ffbd 230px,#06ff00 241px,#fcff00 253px,#ff5700 254px,#ff1300 257px)}.g3c0{background:linear-gradient(#0f000f,#0f000f 54px,#590059 58px,#950095 64px,#b400b4 116px,#ff00ff 156px,#f800ff 159px,#0002ff 195px,#0077ff 210px,#00e2ff 216px,#00ffff 221px,#00fff3 225px,#00ffc4 230px,#00ff04 241px,#99ff00 249px,#d8ff00 251px,#faff00 253px,#ff6100 254px,#ff1d00 257px)}.g3c1{background:linear-gradient(#0f000f,#0f000f 54px,#590059 58px,#950095 64px,#b400b4 116px,#ff00ff 154px,#f400ff 159px,#0000ff 194px,#007dff 210px,#00e5ff 216px,#00ffff 221px,#00fff1 225px,#00ffc0 230px,#02ff00 241px,#fbff00 253px,#ff5b00 254px,#ff1700 257px)}.g3c2{background:linear-gradient(#0f000f,#0f000f 54px,#590059 58px,#950095 64px,#b400b4 116px,#fe00ff 152px,#ef00ff 159px,#0000ff 193px,#0084ff 210px,#00e9ff 216px,#00ffff 221px,#00ffc7 229px,#00ff0b 240px,#fdff00 253px,#ff5400 254px,#ff0f00 257px)}.g3c3{background:linear-gradient(#0f000f,#0f000f 54px,#590059 58px,#950095 64px,#b400b4 116px,#fe00ff 152px,#ef00ff 159px,#0000ff 193px,#0084ff 210px,#00e9ff 216px,#00ffff 221px,#00ffc7 229px,#00ff0a 240px,#fdff00 253px,#ff5300 254px,#ff0f00 257px)}.g3c4{background:linear-gradient(#0f000f,#0f000f 54px,#590059 58px,#950095 64px,#b400b4 116px,#fe00ff 154px,#f300ff 159px,#0001ff 194px,#007eff 210px,#00e6ff 216px,#00ffff 221px,#00ffe9 226px,#00ffbf 230px,#04ff00 241px,#fcff00 253px,#ff5a00 254px,#ff1500 257px)}.g3c5{background:linear-gradient(#0f000f,#0f000f 54px,#590059 58px,#950095 64px,#b400b4 116px,#ff00ff 152px,#f000ff 159px,#0100ff 193px,#0083ff 210px,#00e8ff 216px,#00ffff 221px,#00ffc8 229px,#00ff0c 240px,#fcff00 253px,#ff5500 254px,#ff1000 257px)}.g3c6{background:linear-gradient(#0f000f,#0f000f 54px,#590059 58px,#950095 64px,#b400b4 116px,#ff00ff 153px,#f200ff 159px,#0003ff 194px,#0080ff 210px,#00e7ff 216px,#00ffff 221px,#00ffca 229px,#06ff00 241px,#fcff00 253px,#ff5800 254px,#ff1300 257px)}.g3c7{background:linear-gradient(#0f000f,#0f000f 54px,#590059 58px,#950095 64px,#b400b4 116px,#fe00fe 158px,#0001ff 196px,#0070ff 210px,#00eaff 217px,#00ffff 222px,#00ffc9 230px,#00ff6e 236px,#00ff0c 241px,#92ff00 249px,#d4ff00 251px,#f9ff00 253px,#ff6900 254px,#ff2500 257px)}.g3c8{background:linear-gradient(#0f000f,#0f000f 54px,#590059 58px,#950095 64px,#b400b4 116px,#fe00ff 160px,#0200ff 197px,#0064ff 210px,#00d8ff 216px,#00ffff 222px,#00ffed 227px,#00ffc5 231px,#00ff68 237px,#00ff04 242px,#88ff00 249px,#ccff00 251px,#f5ff00 253px,#ff7400 254px,#ff3200 257px)}.g3c9{background:linear-gradient(#0f000f,#0f000f 54px,#590059 58px,#950095 64px,#b400b4 116px,#f900f9 150px,#e400ff 159px,#0000ff 191px,#0092ff 210px,#00e5ff 215px,#00ffff 219px,#00fff5 223px,#00ffc9 228px,#06ff00 240px,#b1ff00 249px,#e7ff00 251px,#feff00 253px,#ff4400 254px,#ff0202 257px)}.g3ca{background:linear-gradient(#0f000f,#0f000f 54px,#590059 58px,#950095 64px,#b400b4 116px,#fe00ff 151px,#ed00ff 159px,#0002ff 193px,#0086ff 210px,#00deff 215px,#00ffff 220px,#00fff4 224px,#00ffc5 229px,#00ff08 240px,#fdff00 253px,#ff5100 254px,#ff0c00 257px)}.g3cb{background:linear-gradient(#0f000f,#0f000f 54px,#590059 58px,#950095 64px,#b400b4 116px,#ff00ff 153px,#f300ff 159px,#0002ff 194px,#007fff 210px,#00e6ff 216px,#00ffff 221px,#00ffcb 229px,#05ff00 241px,#fcff00 253px,#ff5900 254px,#ff1500 257px)}.g3cc{background:linear-gradient(#0f000f,#0f000f 54px,#590059 58px,#950095 64px,#b400b4 116px,#ff00ff 158px,#0003ff 196px,#0071ff 210px,#00eaff 217px,#00ffff 222px,#00ffc8 230px,#00ff0b 241px,#94ff00 249px,#d4ff00 251px,#f9ff00 253px,#ff6700 254px,#ff2400 257px)}.g3cd{background:linear-gradient(#0f000f,#0f000f 54px,#590059 58px,#950095 64px,#b400b4 116px,#fe00ff 157px,#0100ff 195px,#0075ff 210px,#00e1ff 216px,#00ffff 221px,#00fff4 225px,#00ffc5 230px,#00ff07 241px,#97ff00 249px,#d7ff00 251px,#faff00 253px,#ff6300 254px,#ff2000 257px)}.g3ce{background:linear-gradient(#0f000f,#0f000f 54px,#590059 58px,#950095 64px,#b400b4 116px,#fb00ff 151px,#ea00ff 159px,#0100ff 192px,#008aff 210px,#00e1ff 215px,#00ffff 220px,#00fff2 224px,#00ffc2 229px,#00ff03 240px,#aaff00 249px,#e3ff00 251px,#feff00 253px,#ff4c00 254px,#ff0700 257px)}.g3cf{background:linear-gradient(#0f000f,#0f000f 54px,#590059 58px,#950095 64px,#b400b4 116px,#f900f9 150px,#ea00ea 151px,#fb00ff 160px,#0001ff 197px,#0068ff 210px,#00daff 216px,#00ffff 222px,#00fff2 226px,#00ffc2 231px,#00ff00 242px,#8bff00 249px,#cfff00 251px,#f6ff00 253px,#ff7000 254px,#ff2e00 257px)}.g3d0{background:linear-gradient(#0f000f,#0f000f 54px,#590059 58px,#950095 64px,#b400b4 116px,#fe00ff 151px,#ed00ff 159px,#0003ff 193px,#0086ff 210px,#00deff 215px,#00ffff 220px,#00fff4 224px,#00ffc5 229px,#00ff08 240px,#fdff00 253px,#ff5100 254px,#ff0c00 257px)}.g3d1{background:linear-gradient(#0f000f,#0f000f 54px,#590059 58px,#950095 64px,#b400b4 116px,#fe00ff 153px,#f100ff 159px,#0300ff 193px,#0081ff 210px,#00e7ff 216px,#00ffff 221px,#00ffe8 226px,#00ffbd 230px,#07ff00 241px,#fcff00 253px,#ff5700 254px,#ff1300 257px)}.g3d2{background:linear-gradient(#0f000f,#0f000f 54px,#590059 58px,#950095 64px,#b400b4 116px,#ff00ff 151px,#ee00ff 159px,#0002ff 193px,#0086ff 210px,#00deff 215px,#00ffff 220px,#00fff4 224px,#00ffc6 229px,#00ff09 240px,#fdff00 253px,#ff5200 254px,#ff0d00 257px)}.g3d3{background:linear-gradient(#0f000f,#0f000f 54px,#590059 58px,#950095 64px,#b400b4 116px,#fe00ff 154px,#f300ff 159px,#0001ff 194px,#007eff 210px,#00e6ff 216px,#00ffff 221px,#00ffcb 229px,#04ff00 241px,#fcff00 253px,#ff5900 254px,#ff1500 257px)}.g3d4{background:linear-gradient(#0f000f,#0f000f 54px,#590059 58px,#950095 64px,#b400b4 116px,#f900f9 150px,#e400ff 159px,#0001ff 191px,#0092ff 210px,#00d9ff 214px,#00ffff 219px,#00fff5 223px,#00ffc9 228px,#07ff00 240px,#b1ff00 249px,#e7ff00 251px,#feff00 253px,#ff4300 254px,#ff0202 257px)}.g3d5{background:linear-gradient(#0f000f,#0f000f 54px,#590059 58px,#950095 64px,#b400b4 116px,#ff00ff 156px,#f800ff 159px,#0001ff 195px,#0077ff 210px,#00e2ff 216px,#00ffff 221px,#00fff3 225px,#00ffc4 230px,#00ff04 241px,#99ff00 249px,#d8ff00 251px,#faff00 253px,#ff6100 254px,#ff1e00 257px)}.g3d6{background:linear-gradient(#0f000f,#0f000f 54px,#590059 58px,#950095 64px,#b400b4 116px,#ff00ff 157px,#0100ff 195px,#0074ff 210px,#00e1ff 216px,#00ffff 221px,#00fff4 225px,#00ffc6 230px,#00ff07 241px,#96ff00 249px,#d6ff00 251px,#faff00 253px,#ff6400 254px,#ff2100 257px)}.g3d7{background:linear-gradient(#0f000f,#0f000f 54px,#590059 58px,#950095 64px,#b400b4 116px,#ff00ff 152px,#f100ff 159px,#0200ff 193px,#0082ff 210px,#00e8ff 216px,#00ffff 221px,#00ffc9 229px,#00ff0d 240px,#a2ff00 249px,#deff00 251px,#fcff00 253px,#ff5600 254px,#ff1100 257px)}.g3d8{background:linear-gradient(#0f000f,#0f000f 54px,#590059 58px,#950095 64px,#b400b4 116px,#fb00ff 151px,#ea00ff 159px,#0000ff 192px,#008bff 210px,#00e1ff 215px,#00ffff 220px,#00fff2 224px,#00ffc2 229px,#00ff02 240px,#abff00 249px,#e3ff00 251px,#feff00 253px,#ff4c00 254px,#ff0700 257px)}.g3d9{background:linear-gradient(#0f000f,#0f000f 54px,#590059 58px,#950095 64px,#b400b4 116px,#fd00ff 151px,#ec00ff 159px,#0200ff 192px,#0088ff 210px,#00dfff 215px,#00ffff 220px,#00fff3 224px,#00ffc4 229px,#00ff06 240px,#fdff00 253px,#ff4f00 254px,#ff0a00 257px)}.g3da{background:linear-gradient(#0f000f,#0f000f 54px,#590059 58px,#950095 64px,#b400b4 116px,#fe00ff 155px,#f500ff 159px,#0100ff 194px,#007bff 210px,#00d8ff 215px,#00ffff 221px,#00fff1 225px,#00ffc1 230px,#00ff00 241px,#fbff00 253px,#ff5d00 254px,#ff1900 257px)}.g3db{background:linear-gradient(#0f000f,#0f000f 54px,#590059 58px,#950095 64px,#b400b4 116px,#fe00ff 157px,#0000ff 195px,#0076ff 210px,#00e1ff 216px,#00ffff 221px,#00ffed 226px,#00ffc5 230px,#00ff06 241px,#98ff00 249px,#d7ff00 251px,#faff00 253px,#ff6300 254px,#ff1f00 257px)}.g3dc{background:linear-gradient(#0f000f,#0f000f 54px,#590059 58px,#950095 64px,#b400b4 116px,#fb00ff 151px,#ea00ff 159px,#0000ff 192px,#008bff 210px,#00e1ff 215px,#00ffff 220px,#00fff2 224px,#00ffc2 229px,#00ff03 240px,#aaff00 249px,#e3ff00 251px,#feff00 253px,#ff4c00 254px,#ff0700 257px)}.g3dd{background:linear-gradient(#0f000f,#0f000f 54px,#590059 58px,#950095 64px,#b400b4 116px,#fa00ff 151px,#e900ff 159px,#0001ff 192px,#008cff 210px,#00e2ff 215px,#00ffff 220px,#00fff1 224px,#00ffc1 229px,#00ff01 240px,#acff00 249px,#e4ff00 251px,#feff00 253px,#ff4a00 254px,#ff0500 257px)}.g3de{background:linear-gradient(#0f000f,#0f000f 54px,#590059 58px,#950095 64px,#b400b4 116px,#fa00ff 151px,#e900ff 159px,#0001ff 192px,#008cff 210px,#00e1ff 215px,#00ffff 220px,#00fff2 224px,#00ffc1 229px,#00ff01 240px,#abff00 249px,#e4ff00 251px,#feff00 253px,#ff4b00 254px,#ff0600 257px)}.g3df{background:linear-gradient(#0f000f,#0f000f 54px,#590059 58px,#950095 64px,#b400b4 116px,#ff00ff 154px,#f500ff 159px,#0100ff 194px,#007cff 210px,#00e5ff 216px,#00ffff 221px,#00ffcd 229px,#00ff73 235px,#01ff00 241px,#fbff00 253px,#ff5c00 254px,#ff1800 257px)}.g3e0{background:linear-gradient(#0f000f,#0f000f 54px,#590059 58px,#950095 64px,#b400b4 116px,#ff00ff 156px,#f900ff 159px,#0000ff 195px,#0076ff 210px,#00e2ff 216px,#00ffff 221px,#00ffed 226px,#00ffc5 230px,#00ff05 241px,#98ff00 249px,#d7ff00 251px,#faff00 253px,#ff6200 254px,#ff1f00 257px)}.g3e1{background:linear-gradient(#0f000f,#0f000f 54px,#590059 58px,#950095 64px,#b400b4 116px,#fe00fe 156px,#f900ff 159px,#0000ff 195px,#0076ff 210px,#00e2ff 216px,#00ffff 221px,#00ffed 226px,#00ffc5 230px,#00ff06 241px,#98ff00 249px,#d7ff00 251px,#faff00 253px,#ff6200 254px,#ff1f00 257px)}.g3e2{background:linear-gradient(#0f000f,#0f000f 54px,#590059 58px,#950095 64px,#b400b4 116px,#fe00ff 154px,#f400ff 159px,#0001ff 194px,#007eff 210px,#00e6ff 216px,#00ffff 221px,#00fff1 225px,#00ffbf 230px,#03ff00 241px,#fcff00 253px,#ff5a00 254px,#ff1600 257px)}.g3e3{background:linear-gradient(#0f000f,#0f000f 54px,#590059 58px,#950095 64px,#b400b4 116px,#fe00ff 152px,#ef00ff 159px,#0000ff 193px,#0084ff 210px,#00cfff 214px,#00f2ff 217px,#00ffff 221px,#00ffc7 229px,#00ff0b 240px,#fdff00 253px,#ff5400 254px,#ff0f00 257px)}.g3e4{background:linear-gradient(#0f000f,#0f000f 54px,#590059 58px,#950095 64px,#b400b4 116px,#ff00ff 157px,#0200ff 195px,#0074ff 210px,#00ebff 217px,#00ffff 222px,#00ffc6 230px,#00ff08 241px,#96ff00 249px,#d6ff00 251px,#f9ff00 253px,#ff6500 254px,#ff2100 257px)}.g3e5{background:linear-gradient(#0f000f,#0f000f 54px,#590059 58px,#950095 64px,#b400b4 116px,#fe00ff 153px,#f100ff 159px,#0200ff 193px,#0081ff 210px,#00e7ff 216px,#00ffff 221px,#00ffc9 229px,#07ff00 241px,#fcff00 253px,#ff5700 254px,#ff1200 257px)}.g3e6{background:linear-gradient(#0f000f,#0f000f 54px,#590059 58px,#950095 64px,#b400b4 116px,#ff00ff 153px,#f200ff 159px,#0003ff 194px,#0080ff 210px,#00e7ff 216px,#00ffff 221px,#00fff0 225px,#00ffbe 230px,#06ff00 241px,#fcff00 253px,#ff5800 254px,#ff1400 257px)}.g3e7{background:linear-gradient(#0f000f,#0f000f 54px,#590059 58px,#950095 64px,#b400b4 116px,#fe00ff 153px,#f200ff 159px,#0300ff 193px,#0080ff 210px,#00e7ff 216px,#00ffff 221px,#00ffca 229px,#06ff00 241px,#fcff00 253px,#ff5700 254px,#ff1300 257px)}.g3e8{background:linear-gradient(#0f000f,#0f000f 54px,#590059 58px,#950095 64px,#b400b4 116px,#ff00ff 153px,#f200ff 159px,#0002ff 194px,#007fff 210px,#00e6ff 216px,#00ffff 221px,#00ffe9 226px,#00ffbe 230px,#05ff00 241px,#fcff00 253px,#ff5800 254px,#ff1400 257px)}.g3e9{background:linear-gradient(#0f000f,#0f000f 54px,#590059 58px,#950095 64px,#b400b4 116px,#fe00ff 154px,#f300ff 159px,#0001ff 194px,#007eff 210px,#00e6ff 216px,#00ffff 221px,#00ffe9 226px,#00ffbf 230px,#03ff00 241px,#fcff00 253px,#ff5a00 254px,#ff1600 257px)}.g3ea{background:linear-gradient(#0f000f,#0f000f 54px,#590059 58px,#950095 64px,#b400b4 116px,#fe00ff 152px,#ef00ff 159px,#0000ff 193px,#0084ff 210px,#00e9ff 216px,#00ffff 221px,#00ffc7 229px,#00ff0a 240px,#fdff00 253px,#ff5300 254px,#ff0e00 257px)}.g3eb{background:linear-gradient(#0f000f,#0f000f 54px,#590059 58px,#950095 64px,#b400b4 116px,#fe00ff 153px,#f100ff 159px,#0200ff 193px,#0081ff 210px,#00e7ff 216px,#00ffff 221px,#00ffc9 229px,#07ff00 241px,#fcff00 253px,#ff5600 254px,#ff1200 257px)}.g3ec{background:linear-gradient(#0f000f,#0f000f 54px,#590059 58px,#950095 64px,#b400b4 116px,#ff00ff 155px,#f600ff 159px,#0200ff 194px,#007aff 210px,#00e4ff 216px,#00ffff 221px,#00fff2 225px,#00ffc2 230px,#00ff01 241px,#9bff00 249px,#daff00 251px,#fbff00 253px,#ff5e00 254px,#ff1a00 257px)}.g3ed{background:linear-gradient(#0f000f,#0f000f 54px,#590059 58px,#950095 64px,#b400b4 116px,#fe00ff 154px,#f300ff 159px,#0002ff 194px,#007fff 210px,#00e6ff 216px,#00ffff 221px,#00ffcb 229px,#04ff00 241px,#fcff00 253px,#ff5900 254px,#ff1500 257px)}.g3ee{background:linear-gradient(#0f000f,#0f000f 54px,#590059 58px,#950095 64px,#b400b4 116px,#ff00ff 159px,#0000ff 196px,#006eff 210px,#00ddff 216px,#00ffff 222px,#00fff0 226px,#00ffbe 231px,#07ff00 242px,#91ff00 249px,#d2ff00 251px,#f8ff00 253px,#ff6b00 254px,#ff2800 257px)}.g3ef{background:linear-gradient(#0f000f,#0f000f 54px,#590059 58px,#950095 64px,#b400b4 116px,#fe00ff 152px,#ef00ff 159px,#0100ff 193px,#0083ff 210px,#00ddff 215px,#00ffff 221px,#00ffe7 226px,#00ffbb 230px,#00ff0b 240px,#fdff00 253px,#ff5400 254px,#ff0f00 257px)}.g3f0{background:linear-gradient(#0f000f,#0f000f 54px,#590059 58px,#950095 64px,#b400b4 116px,#fe00ff 154px,#f400ff 159px,#0000ff 194px,#007dff 210px,#00e5ff 216px,#00ffff 221px,#00ffcc 229px,#00ff83 234px,#03ff00 241px,#fbff00 253px,#ff5b00 254px,#ff1600 257px)}.g3f1{background:linear-gradient(#0f000f,#0f000f 54px,#590059 58px,#950095 64px,#b400b4 116px,#fe00ff 151px,#ed00ff 159px,#0003ff 193px,#0087ff 210px,#00dfff 215px,#00ffff 220px,#00ffed 225px,#00ffc5 229px,#00ff07 240px,#fdff00 253px,#ff5000 254px,#ff0b00 257px)}.g3f2{background:linear-gradient(#0f000f,#0f000f 54px,#590059 58px,#950095 64px,#b400b4 116px,#fe00ff 154px,#f300ff 159px,#0001ff 194px,#007eff 210px,#00e6ff 216px,#00ffff 221px,#00ffe9 226px,#00ffbf 230px,#04ff00 241px,#fcff00 253px,#ff5a00 254px,#ff1600 257px)}</style><div class="sp" style="top:50px"><i class=g0></i><i class=g1></i><i class=g2></i><i class=g3></i><i class=g4></i><i class=g5></i><i class=g6></i><i class=g7></i><i class=g8></i><i class=g9></i><i class=ga></i><i class=gb></i><i class=gc></i><i class=gd></i><i class=ge></i><i class=gf></i><i class=g10></i><i class=g11></i><i class=g12></i><i class=g13></i><i class=g14></i><i class=g15></i><i class=g16></i><i class=g17></i><i class=g18></i><i class=g19></i><i class=g1a></i><i class=gc></i><i class=g1b></i><i class=g1c></i><i class=g1d></i><i class=g1e></i><i class=g1f></i><i class=g20></i><i class=g21></i><i class=g22></i><i class=g22></i><i class=g23></i><i class=g24></i><i class=g25></i><i class=g26></i><i class=g27></i><i class=g28></i><i class=g29></i><i class=g2a></i><i class=g2b></i><i class=g2c></i><i class=g0></i><i class=g2d></i><i class=g2e></i><i class=g6></i><i class=g15></i><i class=g2f></i><i class=g30></i><i class=g31></i><i class=g32></i><i class=g33></i><i class=g34></i><i class=g35></i><i class=g36></i><i class=g37></i><i class=g38></i><i class=g39></i><i class=g3a></i><i class=g3a></i><i class=g3b></i><i class=g3c></i><i class=g3d></i><i class=g3e></i><i class=g3f></i><i class=g40></i><i class=g41></i><i class=g42></i><i class=g43></i><i class=g44></i><i class=g45></i><i class=g3a></i><i class=g3a></i><i class=g3a></i><i class=g3a></i><i class=g3a></i><i class=g46></i><i class=g47></i><i class=g48></i><i class=g49></i><i class=g4a></i><i class=g4b></i><i class=g4c></i><i class=g4d></i><i class=g4e></i><i class=g4f></i><i class=g3a></i><i class=g3a></i><i class=g3a></i><i class=g50></i><i class=g51></i><i class=g52></i><i class=g53></i><i class=g54></i><i class=g55></i><i class=g56></i><i class=g57></i><i class=g58></i><i class=g59></i><i class=g5a></i><i class=g5b></i><i class=g5c></i><i class=g3a></i><i class=g3a></i><i class=g3a></i><i class=g3a></i><i class=g3a></i><i class=g3a></i><i class=g5d></i><i class=g5e></i><i class=g5f></i><i class=g60></i><i class=g61></i><i class=g62></i><i class=g63></i><i class=g64></i><i class=g65></i><i class=g66></i><i class=g67></i><i class=g68></i><i class=g69></i><i class=g6a></i><i class=g6b></i><i class=g6c></i><i class=g6d></i><i class=g6e></i><i class=g6f></i><i class=g70></i><i class=g70></i><i class=g70></i><i class=g70></i><i class=g70></i><i class=g70></i><i class=g70></i><i class=g70></i><i class=g71></i><i class=g72></i><i class=g73></i><i class=g74></i><i class=g75></i><i class=g76></i><i class=g77></i><i class=g78></i><i class=g79></i><i class=g7a></i><i class=g7b></i><i class=g7c></i><i class=g7d></i><i class=g7e></i><i class=g7f></i><i class=g80></i><i class=g81></i><i class=g82></i><i class=g83></i><i class=g84></i><i class=g70></i><i class=g70></i><i class=g70></i><i class=g70></i><i class=g70></i><i class=g70></i><i class=g70></i><i class=g85></i><i class=g86></i><i class=g87></i><i class=g88></i><i class=g89></i><i class=g8a></i><i class=g8b></i><i class=g8c></i><i class=g8d></i><i class=g8e></i><i class=g8f></i><i class=g90></i><i class=g91></i><i class=g92></i><i class=g93></i><i class=g94></i><i class=g95></i><i class=g96></i><i class=g97></i><i class=g98></i><i class=g99></i><i class=g9a></i><i class=g9b></i><i class=g9c></i><i class=g9d></i><i class=g9e></i><i class=g9f></i><i class=ga0></i><i class=ga1></i><i class=ga2></i><i class=ga3></i><i class=ga4></i><i class=ga5></i><i class=ga6></i><i class=ga7></i><i class=ga8></i><i class=ga9></i><i class=gaa></i><i class=gab></i><i class=gac></i><i class=gad></i><i class=gae></i><i class=gaf></i><i class=gb0></i><i class=gb1></i><i class=gb2></i><i class=gb3></i><i class=gb4></i><i class=gb5></i><i class=gb6></i><i class=gb7></i><i class=gb8></i><i class=gb9></i><i class=gba></i><i class=gbb></i><i class=gbc></i><i class=gbd></i><i class=gbe></i><i class=gbf></i><i class=gc0></i><i class=gc1></i><i class=gc2></i><i class=gc3></i><i class=gc4></i><i class=gc5></i><i class=gc6></i><i class=gc7></i><i class=gc8></i><i class=gc9></i><i class=gca></i><i class=gcb></i><i class=gcc></i><i class=gcd></i><i class=gce></i><i class=gcf></i><i class=gd0></i><i class=gd1></i><i class=gd2></i><i class=gd3></i><i class=gd4></i><i class=gd5></i><i class=gd6></i><i class=gd7></i><i class=gd8></i><i class=gd9></i><i class=gda></i><i class=gdb></i><i class=gdc></i><i class=gdd></i><i class=gde></i><i class=gdf></i><i class=ge0></i><i class=ge1></i><i class=ge2></i><i class=ge3></i><i class=ge4></i><i class=ge5></i><i class=ge6></i><i class=ge7></i><i class=ge8></i><i class=ge9></i><i class=gea></i><i class=geb></i><i class=gec></i><i class=ged></i><i class=gee></i><i class=gef></i><i class=gf0></i><i class=gf1></i><i class=gf2></i><i class=gf3></i><i class=gf4></i><i class=gf5></i><i class=gf6></i><i class=gf7></i><i class=gf8></i><i class=gf9></i><i class=gfa></i><i class=gfb></i><i class=gfc></i><i class=gfd></i><i class=gfe></i><i class=gff></i><i class=g100></i><i class=g101></i><i class=g102></i><i class=g103></i><i class=g104></i><i class=g105></i><i class=g106></i><i class=g107></i><i class=g108></i><i class=g109></i><i class=g10a></i><i class=g10b></i><i class=g10c></i><i class=g10d></i><i class=g10e></i><i class=g10f></i><i class=g110></i><i class=g111></i><i class=g112></i><i class=g113></i><i class=g114></i><i class=g115></i><i class=g116></i><i class=g117></i><i class=g118></i><i class=g119></i><i class=g11a></i><i class=g11b></i><i class=g11c></i><i class=g11d></i><i class=g11e></i><i class=g11f></i><i class=g120></i><i class=g121></i><i class=g122></i><i class=g123></i><i class=g124></i><i class=g125></i><i class=g126></i><i class=g127></i><i class=g128></i><i class=g129></i><i class=g12a></i><i class=g12b></i><i class=g12c></i><i class=g12d></i><i class=g12e></i><i class=g12f></i><i class=g130></i><i class=g131></i><i class=g132></i><i class=g133></i><i class=g134></i><i class=g135></i><i class=g136></i><i class=g137></i><i class=g138></i><i class=g139></i><i class=g13a></i><i class=g13b></i><i class=g13c></i><i class=g13d></i><i class=g13e></i><i class=g13f></i><i class=g140></i><i class=g141></i><i class=g142></i><i class=g143></i><i class=g144></i><i class=g145></i><i class=g146></i><i class=g147></i><i class=g148></i><i class=g149></i><i class=g14a></i><i class=g14b></i><i class=g14c></i><i class=g14d></i><i class=g14e></i><i class=g14f></i><i class=g150></i><i class=g151></i><i class=g152></i><i class=g153></i><i class=g154></i><i class=g155></i><i class=g156></i><i class=g157></i><i class=g158></i><i class=g159></i><i class=g15a></i><i class=g15b></i><i class=g15c></i><i class=g15d></i><i class=g15e></i><i class=g15f></i><i class=g160></i><i class=g161></i><i class=g162></i><i class=g163></i><i class=g164></i><i class=g165></i><i class=g166></i><i class=g167></i><i class=g168></i><i class=g169></i><i class=g16a></i><i class=g16b></i><i class=g16c></i><i class=g16d></i><i class=g16e></i><i class=g16f></i><i class=g170></i><i class=g171></i><i class=g172></i><i class=g173></i><i class=g174></i><i class=g175></i><i class=g176></i><i class=g177></i><i class=g178></i><i class=g179></i><i class=g17a></i><i class=g17b></i><i class=g17c></i><i class=g17d></i><i class=g17e></i><i class=g17f></i><i class=g180></i><i class=g181></i><i class=g182></i><i class=g183></i><i class=g184></i><i class=g185></i><i class=g186></i><i class=g187></i><i class=g188></i><i class=g189></i><i class=g18a></i><i class=g18b></i><i class=g18c></i><i class=g18d></i><i class=g18e></i><i class=g18f></i><i class=g190></i><i class=g191></i><i class=g192></i><i class=g193></i><i class=g194></i><i class=g195></i><i class=g196></i><i class=g197></i><i class=g198></i><i class=g199></i><i class=g19a></i><i class=g19b></i><i class=g19c></i><i class=g19d></i><i class=g19e></i><i class=g19f></i><i class=g1a0></i><i class=g1a1></i><i class=g1a2></i><i class=g1a3></i><i class=g1a4></i><i class=g1a5></i><i class=g1a6></i><i class=g1a7></i><i class=g1a8></i><i class=g1a9></i><i class=g1aa></i><i class=g1ab></i><i class=g1ac></i><i class=g1ad></i><i class=g1ae></i><i class=g1af></i><i class=g1b0></i><i class=g1b1></i><i class=g1b2></i><i class=g1b3></i><i class=g1b4></i><i class=g1b5></i><i class=g1b6></i><i class=g1b7></i><i class=g1b8></i><i class=g1b9></i><i class=g1ba></i><i class=g1bb></i><i class=g1bc></i><i class=g1bd></i><i class=g1be></i><i class=g1bf></i><i class=g1c0></i><i class=g1c1></i><i class=g1c2></i><i class=g1c3></i><i class=g1c4></i><i class=g1c5></i><i class=g1c6></i><i class=g1c7></i><i class=g1c8></i><i class=g1c9></i><i class=g1ca></i><i class=g1cb></i><i class=g1cc></i><i class=g1cd></i><i class=g1ce></i><i class=g1cf></i><i class=g1d0></i><i class=g1d1></i><i class=g1d2></i><i class=g1d3></i><i class=g1d4></i><i class=g1d5></i><i class=g1d6></i><i class=g1d7></i><i class=g1d8></i><i class=g1d9></i><i class=g1da></i><i class=g1db></i><i class=g1dc></i><i class=g1dd></i><i class=g1de></i><i class=g1df></i><i class=g1e0></i><i class=g1e1></i><i class=g1e2></i><i class=g1e3></i><i class=g1e4></i><i class=g1e5></i><i class=g1e6></i><i class=g1e7></i><i class=g1e8></i><i class=g1e9></i><i class=g1ea></i><i class=g1eb></i><i class=g1ec></i><i class=g1ed></i><i class=g1ee></i><i class=g1ef></i><i class=g1f0></i><i class=g1f1></i><i class=g1f2></i><i class=g1f3></i><i class=g1f4></i><i class=g1f5></i><i class=g1f6></i><i class=g1f7></i><i class=g1f8></i><i class=g1f9></i><i class=g1fa></i><i class=g1fb></i><i class=g1fc></i><i class=g1fd></i><i class=g1fe></i><i class=g1ff></i><i class=g200></i><i class=g201></i><i class=g202></i><i class=g203></i><i class=g204></i><i class=g205></i><i class=g206></i><i class=g207></i><i class=g208></i><i class=g209></i><i class=g20a></i><i class=g20b></i><i class=g20c></i><i class=g20d></i><i class=g20e></i><i class=g20f></i><i class=g210></i><i class=g211></i><i class=g212></i><i class=g213></i><i class=g214></i><i class=g215></i><i class=g216></i><i class=g217></i><i class=g218></i><i class=g219></i><i class=g21a></i><i class=g21b></i><i class=g21c></i><i class=g21d></i><i class=g21e></i><i class=g21f></i><i class=g220></i><i class=g221></i><i class=g222></i><i class=g223></i><i class=g224></i><i class=g225></i><i class=g226></i><i class=g227></i><i class=g228></i><i class=g229></i><i class=g22a></i><i class=g22b></i><i class=g22c></i><i class=g22d></i><i class=g22e></i><i class=g22f></i><i class=g230></i><i class=g231></i><i class=g232></i><i class=g233></i><i class=g234></i><i class=g235></i><i class=g236></i><i class=g237></i><i class=g238></i><i class=g239></i><i class=g23a></i><i class=g23b></i><i class=g23c></i><i class=g23d></i><i class=g23e></i><i class=g23f></i><i class=g240></i><i class=g241></i><i class=g242></i><i class=g243></i><i class=g244></i><i class=g245></i><i class=g246></i><i class=g247></i><i class=g248></i><i class=g249></i><i class=g24a></i><i class=g24b></i><i class=g24c></i><i class=g24d></i><i class=g24e></i><i class=g24f></i><i class=g250></i><i class=g251></i><i class=g252></i><i class=g253></i><i class=g254></i><i class=g255></i><i class=g256></i><i class=g257></i><i class=g258></i><i class=g259></i><i class=g25a></i><i class=g25b></i><i class=g25c></i><i class=g25d></i><i class=g25e></i><i class=g25f></i><i class=g260></i><i class=g261></i><i class=g262></i><i class=g263></i><i class=g264></i><i class=g265></i><i class=g266></i><i class=g267></i><i class=g268></i><i class=g269></i><i class=g26a></i><i class=g26b></i><i class=g26b></i><i class=g26b></i><i class=g26b></i><i class=g26c></i><i class=g26d></i><i class=g26e></i><i class=g26f></i><i class=g270></i><i class=g271></i><i class=g272></i><i class=g273></i><i class=g274></i><i class=g275></i><i class=g276></i><i class=g277></i><i class=g278></i><i class=g279></i><i class=g27a></i><i class=g27b></i><i class=g27c></i><i class=g27d></i><i class=g27e></i><i class=g27f></i><i class=g280></i><i class=g281></i><i class=g282></i><i class=g283></i><i class=g284></i><i class=g285></i><i class=g286></i><i class=g287></i><i class=g288></i><i class=g289></i><i class=g28a></i><i class=g28b></i><i class=g28c></i><i class=g28d></i><i class=g28e></i><i class=g28f></i><i class=g290></i><i class=g291></i><i class=g292></i><i class=g293></i><i class=g294></i><i class=g294></i><i class=g295></i><i class=g296></i><i class=g297></i><i class=g298></i><i class=g299></i><i class=g29a></i><i class=g29b></i><i class=g29c></i><i class=g29d></i><i class=g29e></i><i class=g29f></i><i class=g2a0></i><i class=g2a1></i><i class=g2a2></i><i class=g2a3></i><i class=g2a4></i><i class=g2a5></i><i class=g2a6></i><i class=g2a7></i><i class=g2a8></i><i class=g2a9></i><i class=g2aa></i><i class=g2ab></i><i class=g2ac></i><i class=g2ad></i><i class=g2ae></i><i class=g2af></i><i class=g2b0></i><i class=g2b1></i><i class=g2b2></i><i class=g2b3></i><i class=g2b4></i><i class=g2b5></i><i class=g2b6></i><i class=g2b7></i><i class=g2b8></i><i class=g2b9></i><i class=g2ba></i><i class=g2bb></i><i class=g2bc></i><i class=g2bd></i><i class=g2be></i><i class=g2bf></i><i class=g2c0></i><i class=g2c1></i><i class=g2c2></i><i class=g2c3></i><i class=g2c4></i><i class=g2c5></i><i class=g2c6></i><i class=g2c7></i><i class=g2c8></i><i class=g2c9></i><i class=g2ca></i><i class=g2cb></i><i class=g2cc></i><i class=g2cd></i><i class=g2ce></i><i class=g2cf></i><i class=g2d0></i><i class=g2d1></i><i class=g2d2></i><i class=g2d3></i><i class=g2d4></i><i class=g2d5></i><i class=g2d6></i><i class=g2d7></i><i class=g2d8></i><i class=g2d9></i><i class=g2da></i><i class=g2db></i><i class=g2dc></i><i class=g2dd></i><i class=g2de></i><i class=g2df></i><i class=g2e0></i><i class=g2e1></i><i class=g2e2></i><i class=g2e3></i><i class=g2e4></i><i class=g2e5></i><i class=g2e6></i><i class=g2e7></i><i class=g2e8></i><i class=g2e9></i><i class=g2ea></i><i class=g2eb></i><i class=g2ec></i><i class=g2ed></i><i class=g2ee></i><i class=g2ef></i><i class=g2f0></i><i class=g2f1></i><i class=g2f2></i><i class=g2f3></i><i class=g2f4></i><i class=g2f5></i><i class=g2f6></i><i class=g2f7></i><i class=g2f8></i><i class=g2f9></i><i class=g2fa></i><i class=g2fb></i><i class=g2fc></i><i class=g2fd></i><i class=g2fe></i><i class=g2ff></i><i class=g300></i><i class=g301></i><i class=g302></i><i class=g303></i><i class=g304></i><i class=g305></i><i class=g306></i><i class=g307></i><i class=g308></i><i class=g309></i><i class=g30a></i><i class=g30b></i><i class=g30c></i><i class=g30d></i><i class=g30e></i><i class=g30f></i><i class=g310></i><i class=g311></i><i class=g312></i><i class=g313></i><i class=g314></i><i class=g315></i><i class=g316></i><i class=g317></i><i class=g318></i><i class=g319></i><i class=g31a></i><i class=g31b></i><i class=g31c></i><i class=g31d></i><i class=g31e></i><i class=g31f></i><i class=g320></i><i class=g321></i><i class=g322></i><i class=g323></i><i class=g324></i><i class=g325></i><i class=g326></i><i class=g327></i><i class=g328></i><i class=g329></i><i class=g32a></i><i class=g32b></i><i class=g32c></i><i class=g32d></i><i class=g32e></i><i class=g32f></i><i class=g32f></i><i class=g32f></i><i class=g32f></i><i class=g330></i><i class=g331></i><i class=g332></i><i class=g333></i><i class=g334></i><i class=g335></i><i class=g336></i><i class=g337></i><i class=g338></i><i class=g339></i><i class=g33a></i><i class=g33b></i><i class=g33c></i><i class=g33d></i><i class=g33e></i><i class=g33f></i><i class=g340></i><i class=g341></i><i class=g342></i><i class=g343></i><i class=g344></i><i class=g345></i><i class=g346></i><i class=g347></i><i class=g348></i><i class=g349></i><i class=g34a></i><i class=g34b></i><i class=g34c></i><i class=g34d></i><i class=g34e></i><i class=g34f></i><i class=g350></i><i class=g351></i><i class=g352></i><i class=g353></i><i class=g354></i><i class=g355></i><i class=g356></i><i class=g357></i><i class=g358></i><i class=g359></i><i class=g35a></i><i class=g35b></i><i class=g35c></i><i class=g35d></i><i class=g35e></i><i class=g35f></i><i class=g360></i><i class=g361></i><i class=g362></i><i class=g363></i><i class=g364></i><i class=g365></i><i class=g366></i><i class=g367></i><i class=g368></i><i class=g369></i><i class=g36a></i><i class=g36b></i><i class=g36c></i><i class=g36d></i><i class=g36e></i><i class=g36f></i><i class=g370></i><i class=g371></i><i class=g372></i><i class=g373></i><i class=g374></i><i class=g375></i><i class=g376></i><i class=g377></i><i class=g378></i><i class=g379></i><i class=g37a></i><i class=g37b></i><i class=g37c></i><i class=g37d></i><i class=g37e></i><i class=g37f></i><i class=g380></i><i class=g381></i><i class=g382></i><i class=g383></i><i class=g384></i><i class=g385></i><i class=g386></i><i class=g387></i><i class=g388></i><i class=g389></i><i class=g38a></i><i class=g38b></i><i class=g38c></i><i class=g38d></i><i class=g38e></i><i class=g38f></i><i class=g390></i><i class=g391></i><i class=g392></i><i class=g393></i><i class=g394></i><i class=g395></i><i class=g396></i><i class=g397></i><i class=g398></i><i class=g399></i><i class=g39a></i><i class=g39b></i><i class=g39c></i><i class=g39d></i><i class=g39e></i><i class=g39f></i><i class=g3a0></i><i class=g3a1></i><i class=g3a2></i><i class=g3a3></i><i class=g3a4></i><i class=g3a5></i><i class=g3a6></i><i class=g3a7></i><i class=g3a8></i><i class=g3a9></i><i class=g3aa></i><i class=g3ab></i><i class=g3ac></i><i class=g3ad></i><i class=g3ae></i><i class=g3af></i><i class=g3b0></i><i class=g3b1></i><i class=g3b2></i><i class=g3b3></i><i class=g3b4></i><i class=g3b5></i><i class=g3b6></i><i class=g3b7></i><i class=g3b8></i><i class=g3b9></i><i class=g3ba></i><i class=g3bb></i><i class=g3bc></i><i class=g3bd></i><i class=g3be></i></div><div class="sp" style="top:308px"><i class=g3bf></i><i class=g3c0></i><i class=g3c1></i><i class=g3c2></i><i class=g3c3></i><i class=g3c4></i><i class=g3c5></i><i class=g3c6></i><i class=g3c7></i><i class=g3c8></i><i class=g3c9></i><i class=g3ca></i><i class=g3cb></i><i class=g3cc></i><i class=g3cd></i><i class=g3ce></i><i class=g3cf></i><i class=g3c1></i><i class=g3d0></i><i class=g3d1></i><i class=g3d2></i><i class=g3d3></i><i class=g3d4></i><i class=g3d5></i><i class=g3d6></i><i class=g3d7></i><i class=g3d8></i><i class=g3cb></i><i class=g3d9></i><i class=g3da></i><i class=g3db></i><i class=g3dc></i><i class=g3dd></i><i class=g3de></i><i class=g3df></i><i class=g3e0></i><i class=g3e1></i><i class=g3e2></i><i class=g3c3></i><i class=g3e3></i><i class=g3e4></i><i class=g3e5></i><i class=g3e6></i><i class=g3e7></i><i class=g3e8></i><i class=g3e9></i><i class=g3ea></i><i class=g3d1></i><i class=g3eb></i><i class=g3ec></i><i class=g3c5></i><i class=g3ed></i><i class=g3ee></i><i class=g3ef></i><i class=g3f0></i><i class=g3f1></i><i class=g3f2></i><i class=g34></i><i class=g35></i><i class=g36></i><i class=g37></i><i class=g38></i><i class=g39></i><i class=g3a></i><i class=g3a></i><i class=g3b></i><i class=g3c></i><i class=g3d></i><i class=g3e></i><i class=g3f></i><i class=g40></i><i class=g41></i><i class=g42></i><i class=g43></i><i class=g44></i><i class=g45></i><i class=g3a></i><i class=g3a></i><i class=g3a></i><i class=g3a></i><i class=g3a></i><i class=g46></i><i class=g47></i><i class=g48></i><i class=g49></i><i class=g4a></i><i class=g4b></i><i class=g4c></i><i class=g4d></i><i class=g4e></i><i class=g4f></i><i class=g3a></i><i class=g3a></i><i class=g3a></i><i class=g50></i><i class=g51></i><i class=g52></i><i class=g53></i><i class=g54></i><i class=g55></i><i class=g56></i><i class=g57></i><i class=g58></i><i class=g59></i><i class=g5a></i><i class=g5b></i><i class=g5c></i><i class=g3a></i><i class=g3a></i><i class=g3a></i><i class=g3a></i><i class=g3a></i><i class=g3a></i><i class=g5d></i><i class=g5e></i><i class=g5f></i><i class=g60></i><i class=g61></i><i class=g62></i><i class=g63></i><i class=g64></i><i class=g65></i><i class=g66></i><i class=g67></i><i class=g68></i><i class=g69></i><i class=g6a></i><i class=g6b></i><i class=g6c></i><i class=g6d></i><i class=g6e></i><i class=g6f></i><i class=g70></i><i class=g70></i><i class=g70></i><i class=g70></i><i class=g70></i><i class=g70></i><i class=g70></i><i class=g70></i><i class=g71></i><i class=g72></i><i class=g73></i><i class=g74></i><i class=g75></i><i class=g76></i><i class=g77></i><i class=g78></i><i class=g79></i><i class=g7a></i><i class=g7b></i><i class=g7c></i><i class=g7d></i><i class=g7e></i><i class=g7f></i><i class=g80></i><i class=g81></i><i class=g82></i><i class=g83></i><i class=g84></i><i class=g70></i><i class=g70></i><i class=g70></i><i class=g70></i><i class=g70></i><i class=g70></i><i class=g70></i><i class=g85></i><i class=g86></i><i class=g87></i><i class=g88></i><i class=g89></i><i class=g8a></i><i class=g8b></i><i class=g8c></i><i class=g8d></i><i class=g8e></i><i class=g8f></i><i class=g90></i><i class=g91></i><i class=g92></i><i class=g93></i><i class=g94></i><i class=g95></i><i class=g96></i><i class=g97></i><i class=g98></i><i class=g99></i><i class=g9a></i><i class=g9b></i><i class=g9c></i><i class=g9d></i><i class=g9e></i><i class=g9f></i><i class=ga0></i><i class=ga1></i><i class=ga2></i><i class=ga3></i><i class=ga4></i><i class=ga5></i><i class=ga6></i><i class=ga7></i><i class=ga8></i><i class=ga9></i><i class=gaa></i><i class=gab></i><i class=gac></i><i class=gad></i><i class=gae></i><i class=gaf></i><i class=gb0></i><i class=gb1></i><i class=gb2></i><i class=gb3></i><i class=gb4></i><i class=gb5></i><i class=gb6></i><i class=gb7></i><i class=gb8></i><i class=gb9></i><i class=gba></i><i class=gbb></i><i class=gbc></i><i class=gbd></i><i class=gbe></i><i class=gbf></i><i class=gc0></i><i class=gc1></i><i class=gc2></i><i class=gc3></i><i class=gc4></i><i class=gc5></i><i class=gc6></i><i class=gc7></i><i class=gc8></i><i class=gc9></i><i class=gca></i><i class=gcb></i><i class=gcc></i><i class=gcd></i><i class=gce></i><i class=gcf></i><i class=gd0></i><i class=gd1></i><i class=gd2></i><i class=gd3></i><i class=gd4></i><i class=gd5></i><i class=gd6></i><i class=gd7></i><i class=gd8></i><i class=gd9></i><i class=gda></i><i class=gdb></i><i class=gdc></i><i class=gdd></i><i class=gde></i><i class=gdf></i><i class=ge0></i><i class=ge1></i><i class=ge2></i><i class=ge3></i><i class=ge4></i><i class=ge5></i><i class=ge6></i><i class=ge7></i><i class=ge8></i><i class=ge9></i><i class=gea></i><i class=geb></i><i class=gec></i><i class=ged></i><i class=gee></i><i class=gef></i><i class=gf0></i><i class=gf1></i><i class=gf2></i><i class=gf3></i><i class=gf4></i><i class=gf5></i><i class=gf6></i><i class=gf7></i><i class=gf8></i><i class=gf9></i><i class=gfa></i><i class=gfb></i><i class=gfc></i><i class=gfd></i><i class=gfe></i><i class=gff></i><i class=g100></i><i class=g101></i><i class=g102></i><i class=g103></i><i class=g104></i><i class=g105></i><i class=g106></i><i class=g107></i><i class=g108></i><i class=g109></i><i class=g10a></i><i class=g10b></i><i class=g10c></i><i class=g10d></i><i class=g10e></i><i class=g10f></i><i class=g110></i><i class=g111></i><i class=g112></i><i class=g113></i><i class=g114></i><i class=g115></i><i class=g116></i><i class=g117></i><i class=g118></i><i class=g119></i><i class=g11a></i><i class=g11b></i><i class=g11c></i><i class=g11d></i><i class=g11e></i><i class=g11f></i><i class=g120></i><i class=g121></i><i class=g122></i><i class=g123></i><i class=g124></i><i class=g125></i><i class=g126></i><i class=g127></i><i class=g128></i><i class=g129></i><i class=g12a></i><i class=g12b></i><i class=g12c></i><i class=g12d></i><i class=g12e></i><i class=g12f></i><i class=g130></i><i class=g131></i><i class=g132></i><i class=g133></i><i class=g134></i><i class=g135></i><i class=g136></i><i class=g137></i><i class=g138></i><i class=g139></i><i class=g13a></i><i class=g13b></i><i class=g13c></i><i class=g13d></i><i class=g13e></i><i class=g13f></i><i class=g140></i><i class=g141></i><i class=g142></i><i class=g143></i><i class=g144></i><i class=g145></i><i class=g146></i><i class=g147></i><i class=g148></i><i class=g149></i><i class=g14a></i><i class=g14b></i><i class=g14c></i><i class=g14d></i><i class=g14e></i><i class=g14f></i><i class=g150></i><i class=g151></i><i class=g152></i><i class=g153></i><i class=g154></i><i class=g155></i><i class=g156></i><i class=g157></i><i class=g158></i><i class=g159></i><i class=g15a></i><i class=g15b></i><i class=g15c></i><i class=g15d></i><i class=g15e></i><i class=g15f></i><i class=g160></i><i class=g161></i><i class=g162></i><i class=g163></i><i class=g164></i><i class=g165></i><i class=g166></i><i class=g167></i><i class=g168></i><i class=g169></i><i class=g16a></i><i class=g16b></i><i class=g16c></i><i class=g16d></i><i class=g16e></i><i class=g16f></i><i class=g170></i><i class=g171></i><i class=g172></i><i class=g173></i><i class=g174></i><i class=g175></i><i class=g176></i><i class=g177></i><i class=g178></i><i class=g179></i><i class=g17a></i><i class=g17b></i><i class=g17c></i><i class=g17d></i><i class=g17e></i><i class=g17f></i><i class=g180></i><i class=g181></i><i class=g182></i><i class=g183></i><i class=g184></i><i class=g185></i><i class=g186></i><i class=g187></i><i class=g188></i><i class=g189></i><i class=g18a></i><i class=g18b></i><i class=g18c></i><i class=g18d></i><i class=g18e></i><i class=g18f></i><i class=g190></i><i class=g191></i><i class=g192></i><i class=g193></i><i class=g194></i><i class=g195></i><i class=g196></i><i class=g197></i><i class=g198></i><i class=g199></i><i class=g19a></i><i class=g19b></i><i class=g19c></i><i class=g19d></i><i class=g19e></i><i class=g19f></i><i class=g1a0></i><i class=g1a1></i><i class=g1a2></i><i class=g1a3></i><i class=g1a4></i><i class=g1a5></i><i class=g1a6></i><i class=g1a7></i><i class=g1a8></i><i class=g1a9></i><i class=g1aa></i><i class=g1ab></i><i class=g1ac></i><i class=g1ad></i><i class=g1ae></i><i class=g1af></i><i class=g1b0></i><i class=g1b1></i><i class=g1b2></i><i class=g1b3></i><i class=g1b4></i><i class=g1b5></i><i class=g1b6></i><i class=g1b7></i><i class=g1b8></i><i class=g1b9></i><i class=g1ba></i><i class=g1bb></i><i class=g1bc></i><i class=g1bd></i><i class=g1be></i><i class=g1bf></i><i class=g1c0></i><i class=g1c1></i><i class=g1c2></i><i class=g1c3></i><i class=g1c4></i><i class=g1c5></i><i class=g1c6></i><i class=g1c7></i><i class=g1c8></i><i class=g1c9></i><i class=g1ca></i><i class=g1cb></i><i class=g1cc></i><i class=g1cd></i><i class=g1ce></i><i class=g1cf></i><i class=g1d0></i><i class=g1d1></i><i class=g1d2></i><i class=g1d3></i><i class=g1d4></i><i class=g1d5></i><i class=g1d6></i><i class=g1d7></i><i class=g1d8></i><i class=g1d9></i><i class=g1da></i><i class=g1db></i><i class=g1dc></i><i class=g1dd></i><i class=g1de></i><i class=g1df></i><i class=g1e0></i><i class=g1e1></i><i class=g1e2></i><i class=g1e3></i><i class=g1e4></i><i class=g1e5></i><i class=g1e6></i><i class=g1e7></i><i class=g1e8></i><i class=g1e9></i><i class=g1ea></i><i class=g1eb></i><i class=g1ec></i><i class=g1ed></i><i class=g1ee></i><i class=g1ef></i><i class=g1f0></i><i class=g1f1></i><i class=g1f2></i><i class=g1f3></i><i class=g1f4></i><i class=g1f5></i><i class=g1f6></i><i class=g1f7></i><i class=g1f8></i><i class=g1f9></i><i class=g1fa></i><i class=g1fb></i><i class=g1fc></i><i class=g1fd></i><i class=g1fe></i><i class=g1ff></i><i class=g200></i><i class=g201></i><i class=g202></i><i class=g203></i><i class=g204></i><i class=g205></i><i class=g206></i><i class=g207></i><i class=g208></i><i class=g209></i><i class=g20a></i><i class=g20b></i><i class=g20c></i><i class=g20d></i><i class=g20e></i><i class=g20f></i><i class=g210></i><i class=g211></i><i class=g212></i><i class=g213></i><i class=g214></i><i class=g215></i><i class=g216></i><i class=g217></i><i class=g218></i><i class=g219></i><i class=g21a></i><i class=g21b></i><i class=g21c></i><i class=g21d></i><i class=g21e></i><i class=g21f></i><i class=g220></i><i class=g221></i><i class=g222></i><i class=g223></i><i class=g224></i><i class=g225></i><i class=g226></i><i class=g227></i><i class=g228></i><i class=g229></i><i class=g22a></i><i class=g22b></i><i class=g22c></i><i class=g22d></i><i class=g22e></i><i class=g22f></i><i class=g230></i><i class=g231></i><i class=g232></i><i class=g233></i><i class=g234></i><i class=g235></i><i class=g236></i><i class=g237></i><i class=g238></i><i class=g239></i><i class=g23a></i><i class=g23b></i><i class=g23c></i><i class=g23d></i><i class=g23e></i><i class=g23f></i><i class=g240></i><i class=g241></i><i class=g242></i><i class=g243></i><i class=g244></i><i class=g245></i><i class=g246></i><i class=g247></i><i class=g248></i><i class=g249></i><i class=g24a></i><i class=g24b></i><i class=g24c></i><i class=g24d></i><i class=g24e></i><i class=g24f></i><i class=g250></i><i class=g251></i><i class=g252></i><i class=g253></i><i class=g254></i><i class=g255></i><i class=g256></i><i class=g257></i><i class=g258></i><i class=g259></i><i class=g25a></i><i class=g25b></i><i class=g25c></i><i class=g25d></i><i class=g25e></i><i class=g25f></i><i class=g260></i><i class=g261></i><i class=g262></i><i class=g263></i><i class=g264></i><i class=g265></i><i class=g266></i><i class=g267></i><i class=g268></i><i class=g269></i><i class=g26a></i><i class=g26b></i><i class=g26b></i><i class=g26b></i><i class=g26b></i><i class=g26c></i><i class=g26d></i><i class=g26e></i><i class=g26f></i><i class=g270></i><i class=g271></i><i class=g272></i><i class=g273></i><i class=g274></i><i class=g275></i><i class=g276></i><i class=g277></i><i class=g278></i><i class=g279></i><i class=g27a></i><i class=g27b></i><i class=g27c></i><i class=g27d></i><i class=g27e></i><i class=g27f></i><i class=g280></i><i class=g281></i><i class=g282></i><i class=g283></i><i class=g284></i><i class=g285></i><i class=g286></i><i class=g287></i><i class=g288></i><i class=g289></i><i class=g28a></i><i class=g28b></i><i class=g28c></i><i class=g28d></i><i class=g28e></i><i class=g28f></i><i class=g290></i><i class=g291></i><i class=g292></i><i class=g293></i><i class=g294></i><i class=g294></i><i class=g295></i><i class=g296></i><i class=g297></i><i class=g298></i><i class=g299></i><i class=g29a></i><i class=g29b></i><i class=g29c></i><i class=g29d></i><i class=g29e></i><i class=g29f></i><i class=g2a0></i><i class=g2a1></i><i class=g2a2></i><i class=g2a3></i><i class=g2a4></i><i class=g2a5></i><i class=g2a6></i><i class=g2a7></i><i class=g2a8></i><i class=g2a9></i><i class=g2aa></i><i class=g2ab></i><i class=g2ac></i><i class=g2ad></i><i class=g2ae></i><i class=g2af></i><i class=g2b0></i><i class=g2b1></i><i class=g2b2></i><i class=g2b3></i><i class=g2b4></i><i class=g2b5></i><i class=g2b6></i><i class=g2b7></i><i class=g2b8></i><i class=g2b9></i><i class=g2ba></i><i class=g2bb></i><i class=g2bc></i><i class=g2bd></i><i class=g2be></i><i class=g2bf></i><i class=g2c0></i><i class=g2c1></i><i class=g2c2></i><i class=g2c3></i><i class=g2c4></i><i class=g2c5></i><i class=g2c6></i><i class=g2c7></i><i class=g2c8></i><i class=g2c9></i><i class=g2ca></i><i class=g2cb></i><i class=g2cc></i><i class=g2cd></i><i class=g2ce></i><i class=g2cf></i><i class=g2d0></i><i class=g2d1></i><i class=g2d2></i><i class=g2d3></i><i class=g2d4></i><i class=g2d5></i><i class=g2d6></i><i class=g2d7></i><i class=g2d8></i><i class=g2d9></i><i class=g2da></i><i class=g2db></i><i class=g2dc></i><i class=g2dd></i><i class=g2de></i><i class=g2df></i><i class=g2e0></i><i class=g2e1></i><i class=g2e2></i><i class=g2e3></i><i class=g2e4></i><i class=g2e5></i><i class=g2e6></i><i class=g2e7></i><i class=g2e8></i><i class=g2e9></i><i class=g2ea></i><i class=g2eb></i><i class=g2ec></i><i class=g2ed></i><i class=g2ee></i><i class=g2ef></i><i class=g2f0></i><i class=g2f1></i><i class=g2f2></i><i class=g2f3></i><i class=g2f4></i><i class=g2f5></i><i class=g2f6></i><i class=g2f7></i><i class=g2f8></i><i class=g2f9></i><i class=g2fa></i><i class=g2fb></i><i class=g2fc></i><i class=g2fd></i><i class=g2fe></i><i class=g2ff></i><i class=g300></i><i class=g301></i><i class=g302></i><i class=g303></i><i class=g304></i><i class=g305></i><i class=g306></i><i class=g307></i><i class=g308></i><i class=g309></i><i class=g30a></i><i class=g30b></i><i class=g30c></i><i class=g30d></i><i class=g30e></i><i class=g30f></i><i class=g310></i><i class=g311></i><i class=g312></i><i class=g313></i><i class=g314></i><i class=g315></i><i class=g316></i><i class=g317></i><i class=g318></i><i class=g319></i><i class=g31a></i><i class=g31b></i><i class=g31c></i><i class=g31d></i><i class=g31e></i><i class=g31f></i><i class=g320></i><i class=g321></i><i class=g322></i><i class=g323></i><i class=g324></i><i class=g325></i><i class=g326></i><i class=g327></i><i class=g328></i><i class=g329></i><i class=g32a></i><i class=g32b></i><i class=g32c></i><i class=g32d></i><i class=g32e></i><i class=g32f></i><i class=g32f></i><i class=g32f></i><i class=g32f></i><i class=g330></i><i class=g331></i><i class=g332></i><i class=g333></i><i class=g334></i><i class=g335></i><i class=g336></i><i class=g337></i><i class=g338></i><i class=g339></i><i class=g33a></i><i class=g33b></i><i class=g33c></i><i class=g33d></i><i class=g33e></i><i class=g33f></i><i class=g340></i><i class=g341></i><i class=g342></i><i class=g343></i><i class=g344></i><i class=g345></i><i class=g346></i><i class=g347></i><i class=g348></i><i class=g349></i><i class=g34a></i><i class=g34b></i><i class=g34c></i><i class=g34d></i><i class=g34e></i><i class=g34f></i><i class=g350></i><i class=g351></i><i class=g352></i><i class=g353></i><i class=g354></i><i class=g355></i><i class=g356></i><i class=g357></i><i class=g358></i><i class=g359></i><i class=g35a></i><i class=g35b></i><i class=g35c></i><i class=g35d></i><i class=g35e></i><i class=g35f></i><i class=g360></i><i class=g361></i><i class=g362></i><i class=g363></i><i class=g364></i><i class=g365></i><i class=g366></i><i class=g367></i><i class=g368></i><i class=g369></i><i class=g36a></i><i class=g36b></i><i class=g36c></i><i class=g36d></i><i class=g36e></i><i class=g36f></i><i class=g370></i><i class=g371></i><i class=g372></i><i class=g373></i><i class=g374></i><i class=g375></i><i class=g376></i><i class=g377></i><i class=g378></i><i class=g379></i><i class=g37a></i><i class=g37b></i><i class=g37c></i><i class=g37d></i><i class=g37e></i><i class=g37f></i><i class=g380></i><i class=g381></i><i class=g382></i><i class=g383></i><i class=g384></i><i class=g385></i><i class=g386></i><i class=g387></i><i class=g388></i><i class=g389></i><i class=g38a></i><i class=g38b></i><i class=g38c></i><i class=g38d></i><i class=g38e></i><i class=g38f></i><i class=g390></i><i class=g391></i><i class=g392></i><i class=g393></i><i class=g394></i><i class=g395></i><i class=g396></i><i class=g397></i><i class=g398></i><i class=g399></i><i class=g39a></i><i class=g39b></i><i class=g39c></i><i class=g39d></i><i class=g39e></i><i class=g39f></i><i class=g3a0></i><i class=g3a1></i><i class=g3a2></i><i class=g3a3></i><i class=g3a4></i><i class=g3a5></i><i class=g3a6></i><i class=g3a7></i><i class=g3a8></i><i class=g3a9></i><i class=g3aa></i><i class=g3ab></i><i class=g3ac></i><i class=g3ad></i><i class=g3ae></i><i class=g3af></i><i class=g3b0></i><i class=g3b1></i><i class=g3b2></i><i class=g3b3></i><i class=g3b4></i><i class=g3b5></i><i class=g3b6></i><i class=g3b7></i><i class=g3b8></i><i class=g3b9></i><i class=g3ba></i><i class=g3bb></i><i class=g3bc></i><i class=g3bd></i><i class=g3be></i></div>
<div style="position:absolute;left:1095px;top:108px;width:14px;height:400px;background:linear-gradient(#ffffff 0.00%,#ffe5e5 4.17%,#ff9b9b 8.33%,#ff3232 12.50%,#ff4200 16.67%,#ffa800 20.83%,#ffec00 25.00%,#feff00 29.17%,#ddff00 33.33%,#8eff00 37.50%,#21ff00 41.67%,#00ff52 45.83%,#00ffb4 50.00%,#00fff1 54.17%,#00fdff 58.33%,#00d4ff 62.50%,#007fff 66.67%,#0011ff 70.83%,#4000ff 75.00%,#8a00ff 79.17%,#d500ff 83.33%,#df00df 87.50%,#950095 91.67%,#4a004a 95.83%,#000000 100.00%)"></div>
<svg width="1144" height="613" style="position:absolute;left:0;top:0" shape-rendering="crispEdges"><defs><path id="f30" d="M2 0h1v1h-1zM1 1h1v1h-1zM3 1h1v1h-1zM0 2h1v1h-1zM4 2h1v1h-1zM0 3h1v1h-1zM4 3h1v1h-1zM0 4h1v1h-1zM4 4h1v1h-1zM0 5h1v1h-1zM4 5h1v1h-1zM0 6h1v1h-1zM4 6h1v1h-1zM1 7h1v1h-1zM3 7h1v1h-1zM2 8h1v1h-1z"/><path id="f31" d="M2 0h1v1h-1zM1 1h2v1h-2zM0 2h1v1h-1zM2 2h1v1h-1zM2 3h1v1h-1zM2 4h1v1h-1zM2 5h1v1h-1zM2 6h1v1h-1zM2 7h1v1h-1zM0 8h5v1h-5z"/><path id="f32" d="M1 0h3v1h-3zM0 1h1v1h-1zM4 1h1v1h-1zM0 2h1v1h-1zM4 2h1v1h-1zM4 3h1v1h-1zM3 4h1v1h-1zM2 5h1v1h-1zM1 6h1v1h-1zM0 7h1v1h-1zM0 8h5v1h-5z"/><path id="f33" d="M0 0h5v1h-5zM4 1h1v1h-1zM3 2h1v1h-1zM2 3h1v1h-1zM1 4h3v1h-3zM4 5h1v1h-1zM4 6h1v1h-1zM0 7h1v1h-1zM4 7h1v1h-1zM1 8h3v1h-3z"/><path id="f34" d="M3 0h1v1h-1zM2 1h2v1h-2zM1 2h1v1h-1zM3 2h1v1h-1zM1 3h1v1h-1zM3 3h1v1h-1zM0 4h1v1h-1zM3 4h1v1h-1zM0 5h5v1h-5zM3 6h1v1h-1zM3 7h1v1h-1zM3 8h1v1h-1z"/><path id="f35" d="M0 0h5v1h-5zM0 1h1v1h-1zM0 2h1v1h-1zM0 3h1v1h-1zM2 3h2v1h-2zM0 4h2v1h-2zM4 4h1v1h-1zM4 5h1v1h-1zM4 6h1v1h-1zM0 7h1v1h-1zM4 7h1v1h-1zM1 8h3v1h-3z"/><path id="f36" d="M1 0h3v1h-3zM0 1h1v1h-1zM4 1h1v1h-1zM0 2h1v1h-1zM0 3h1v1h-1zM0 4h4v1h-4zM0 5h1v1h-1zM4 5h1v1h-1zM0 6h1v1h-1zM4 6h1v1h-1zM0 7h1v1h-1zM4 7h1v1h-1zM1 8h3v1h-3z"/><path id="f37" d="M0 0h5v1h-5zM4 1h1v1h-1zM3 2h1v1h-1zM3 3h1v1h-1zM2 4h1v1h-1zM2 5h1v1h-1zM1 6h1v1h-1zM1 7h1v1h-1zM1 8h1v1h-1z"/><path id="f38" d="M1 0h3v1h-3zM0 1h1v1h-1zM4 1h1v1h-1zM0 2h1v1h-1zM4 2h1v1h-1zM0 3h1v1h-1zM4 3h1v1h-1zM1 4h3v1h-3zM0 5h1v1h-1zM4 5h1v1h-1zM0 6h1v1h-1zM4 6h1v1h-1zM0 7h1v1h-1zM4 7h1v1h-1zM1 8h3v1h-3z"/><path id="f39" d="M1 0h3v1h-3zM0 1h1v1h-1zM4 1h1v1h-1zM0 2h1v1h-1zM4 2h1v1h-1zM0 3h1v1h-1zM4 3h1v1h-1zM1 4h4v1h-4zM4 5h1v1h-1zM4 6h1v1h-1zM0 7h1v1h-1zM4 7h1v1h-1zM1 8h3v1h-3z"/><path id="f2b" d="M2 2h1v1h-1zM2 3h1v1h-1zM0 4h5v1h-5zM2 5h1v1h-1zM2 6h1v1h-1z"/><path id="f2d" d="M0 4h5v1h-5z"/><path id="f2e" d="M3 3h1v1h-1zM2 4h3v1h-3zM3 5h1v1h-1z"/><path id="f44" d="M0 0h4v1h-4zM1 1h1v1h-1zM4 1h1v1h-1zM1 2h1v1h-1zM4 2h1v1h-1zM1 3h1v1h-1zM4 3h1v1h-1zM1 4h1v1h-1zM4 4h1v1h-1zM1 5h1v1h-1zM4 5h1v1h-1zM1 6h1v1h-1zM4 6h1v1h-1zM1 7h1v1h-1zM4 7h1v1h-1zM0 8h4v1h-4z"/><path id="f43" d="M1 0h3v1h-3zM0 1h1v1h-1zM4 1h1v1h-1zM0 2h1v1h-1zM0 3h1v1h-1zM0 4h1v1h-1zM0 5h1v1h-1zM0 6h1v1h-1zM0 7h1v1h-1zM4 7h1v1h-1zM1 8h3v1h-3z"/><path id="f4e" d="M0 0h1v1h-1zM4 0h1v1h-1zM0 1h2v1h-2zM4 1h1v1h-1zM0 2h2v1h-2zM4 2h1v1h-1zM0 3h1v1h-1zM2 3h1v1h-1zM4 3h1v1h-1zM0 4h1v1h-1zM2 4h1v1h-1zM4 4h1v1h-1zM0 5h1v1h-1zM2 5h1v1h-1zM4 5h1v1h-1zM0 6h1v1h-1zM3 6h2v1h-2zM0 7h1v1h-1zM3 7h2v1h-2zM0 8h1v1h-1zM4 8h1v1h-1z"/><path id="f45" d="M0 0h5v1h-5zM0 1h1v1h-1zM0 2h1v1h-1zM0 3h1v1h-1zM0 4h4v1h-4zM0 5h1v1h-1zM0 6h1v1h-1zM0 7h1v1h-1zM0 8h5v1h-5z"/><path id="f42" d="M0 0h4v1h-4zM1 1h1v1h-1zM4 1h1v1h-1zM1 2h1v1h-1zM4 2h1v1h-1zM1 3h1v1h-1zM4 3h1v1h-1zM1 4h3v1h-3zM1 5h1v1h-1zM4 5h1v1h-1zM1 6h1v1h-1zM4 6h1v1h-1zM1 7h1v1h-1zM4 7h1v1h-1zM0 8h4v1h-4z"/><path id="f53" d="M1 0h3v1h-3zM0 1h1v1h-1zM4 1h1v1h-1zM0 2h1v1h-1zM0 3h1v1h-1zM1 4h3v1h-3zM4 5h1v1h-1zM4 6h1v1h-1zM0 7h1v1h-1zM4 7h1v1h-1zM1 8h3v1h-3z"/><path id="f54" d="M0 0h5v1h-5zM2 1h1v1h-1zM2 2h1v1h-1zM2 3h1v1h-1zM2 4h1v1h-1zM2 5h1v1h-1zM2 6h1v1h-1zM2 7h1v1h-1zM2 8h1v1h-1z"/><path id="f46" d="M0 0h5v1h-5zM0 1h1v1h-1zM0 2h1v1h-1zM0 3h1v1h-1zM0 4h4v1h-4zM0 5h1v1h-1zM0 6h1v1h-1zM0 7h1v1h-1zM0 8h1v1h-1z"/><path id="f48" d="M0 0h1v1h-1zM4 0h1v1h-1zM0 1h1v1h-1zM4 1h1v1h-1zM0 2h1v1h-1zM4 2h1v1h-1zM0 3h1v1h-1zM4 3h1v1h-1zM0 4h5v1h-5zM0 5h1v1h-1zM4 5h1v1h-1zM0 6h1v1h-1zM4 6h1v1h-1zM0 7h1v1h-1zM4 7h1v1h-1zM0 8h1v1h-1zM4 8h1v1h-1z"/><path id="f58" d="M0 0h1v1h-1zM4 0h1v1h-1zM0 1h1v1h-1zM4 1h1v1h-1zM1 2h1v1h-1zM3 2h1v1h-1zM1 3h1v1h-1zM3 3h1v1h-1zM2 4h1v1h-1zM1 5h1v1h-1zM3 5h1v1h-1zM1 6h1v1h-1zM3 6h1v1h-1zM0 7h1v1h-1zM4 7h1v1h-1zM0 8h1v1h-1zM4 8h1v1h-1z"/><path id="f26" d="M1 2h1v1h-1zM0 3h1v1h-1zM2 3h1v1h-1zM1 4h1v1h-1zM0 5h1v1h-1zM2 5h1v1h-1zM0 6h1v1h-1zM3 6h1v1h-1zM0 7h1v1h-1zM3 7h1v1h-1zM1 8h2v1h-2zM4 8h1v1h-1z"/><path id="f28" d="M3 -1h1v1h-1zM2 0h1v1h-1zM1 1h1v1h-1zM1 2h1v1h-1zM1 3h1v1h-1zM1 4h1v1h-1zM1 5h1v1h-1zM1 6h1v1h-1zM1 7h1v1h-1zM2 8h1v1h-1zM3 9h1v1h-1z"/><path id="f29" d="M1 -1h1v1h-1zM2 0h1v1h-1zM3 1h1v1h-1zM3 2h1v1h-1zM3 3h1v1h-1zM3 4h1v1h-1zM3 5h1v1h-1zM3 6h1v1h-1zM3 7h1v1h-1zM2 8h1v1h-1zM1 9h1v1h-1z"/><path id="f61" d="M1 3h3v1h-3zM4 4h1v1h-1zM1 5h4v1h-4zM0 6h1v1h-1zM4 6h1v1h-1zM0 7h1v1h-1zM4 7h1v1h-1zM1 8h4v1h-4z"/><path id="f62" d="M0 0h1v1h-1zM0 1h1v1h-1zM0 2h1v1h-1zM0 3h4v1h-4zM0 4h1v1h-1zM4 4h1v1h-1zM0 5h1v1h-1zM4 5h1v1h-1zM0 6h1v1h-1zM4 6h1v1h-1zM0 7h1v1h-1zM4 7h1v1h-1zM0 8h4v1h-4z"/><path id="f63" d="M1 3h3v1h-3zM0 4h1v1h-1zM4 4h1v1h-1zM0 5h1v1h-1zM0 6h1v1h-1zM0 7h1v1h-1zM4 7h1v1h-1zM1 8h3v1h-3z"/><path id="f64" d="M4 0h1v1h-1zM4 1h1v1h-1zM4 2h1v1h-1zM1 3h4v1h-4zM0 4h1v1h-1zM4 4h1v1h-1zM0 5h1v1h-1zM4 5h1v1h-1zM0 6h1v1h-1zM4 6h1v1h-1zM0 7h1v1h-1zM4 7h1v1h-1zM1 8h4v1h-4z"/><path id="f65" d="M1 3h3v1h-3zM0 4h1v1h-1zM4 4h1v1h-1zM0 5h5v1h-5zM0 6h1v1h-1zM0 7h1v1h-1zM4 7h1v1h-1zM1 8h3v1h-3z"/><path id="f66" d="M2 0h2v1h-2zM1 1h1v1h-1zM4 1h1v1h-1zM1 2h1v1h-1zM1 3h1v1h-1zM0 4h4v1h-4zM1 5h1v1h-1zM1 6h1v1h-1zM1 7h1v1h-1zM1 8h1v1h-1z"/><path id="f68" d="M0 0h1v1h-1zM0 1h1v1h-1zM0 2h1v1h-1zM0 3h4v1h-4zM0 4h1v1h-1zM4 4h1v1h-1zM0 5h1v1h-1zM4 5h1v1h-1zM0 6h1v1h-1zM4 6h1v1h-1zM0 7h1v1h-1zM4 7h1v1h-1zM0 8h1v1h-1zM4 8h1v1h-1z"/><path id="f69" d="M2 1h1v1h-1zM1 3h2v1h-2zM2 4h1v1h-1zM2 5h1v1h-1zM2 6h1v1h-1zM2 7h1v1h-1zM1 8h3v1h-3z"/><path id="f6b" d="M0 0h1v1h-1zM0 1h1v1h-1zM0 2h1v1h-1zM0 3h1v1h-1zM3 3h1v1h-1zM0 4h1v1h-1zM2 4h1v1h-1zM0 5h2v1h-2zM0 6h1v1h-1zM2 6h1v1h-1zM0 7h1v1h-1zM3 7h1v1h-1zM0 8h1v1h-1zM4 8h1v1h-1z"/><path id="f6c" d="M1 0h2v1h-2zM2 1h1v1h-1zM2 2h1v1h-1zM2 3h1v1h-1zM2 4h1v1h-1zM2 5h1v1h-1zM2 6h1v1h-1zM2 7h1v1h-1zM1 8h3v1h-3z"/><path id="f6d" d="M0 3h2v1h-2zM3 3h1v1h-1zM0 4h1v1h-1zM2 4h1v1h-1zM4 4h1v1h-1zM0 5h1v1h-1zM2 5h1v1h-1zM4 5h1v1h-1zM0 6h1v1h-1zM2 6h1v1h-1zM4 6h1v1h-1zM0 7h1v1h-1zM2 7h1v1h-1zM4 7h1v1h-1zM0 8h1v1h-1zM2 8h1v1h-1zM4 8h1v1h-1z"/><path id="f6e" d="M0 3h4v1h-4zM0 4h1v1h-1zM4 4h1v1h-1zM0 5h1v1h-1zM4 5h1v1h-1zM0 6h1v1h-1zM4 6h1v1h-1zM0 7h1v1h-1zM4 7h1v1h-1zM0 8h1v1h-1zM4 8h1v1h-1z"/><path id="f6f" d="M1 3h3v1h-3zM0 4h1v1h-1zM4 4h1v1h-1zM0 5h1v1h-1zM4 5h1v1h-1zM0 6h1v1h-1zM4 6h1v1h-1zM0 7h1v1h-1zM4 7h1v1h-1zM1 8h3v1h-3z"/><path id="f70" d="M0 3h4v1h-4zM0 4h1v1h-1zM4 4h1v1h-1zM0 5h1v1h-1zM4 5h1v1h-1zM0 6h1v1h-1zM4 6h1v1h-1zM0 7h4v1h-4zM0 8h1v1h-1zM0 9h1v1h-1zM0 10h1v1h-1z"/><path id="f71" d="M1 3h4v1h-4zM0 4h1v1h-1zM4 4h1v1h-1zM0 5h1v1h-1zM4 5h1v1h-1zM0 6h1v1h-1zM4 6h1v1h-1zM1 7h4v1h-4zM4 8h1v1h-1zM4 9h1v1h-1zM4 10h1v1h-1z"/><path id="f72" d="M0 3h1v1h-1zM2 3h2v1h-2zM0 4h2v1h-2zM4 4h1v1h-1zM0 5h1v1h-1zM0 6h1v1h-1zM0 7h1v1h-1zM0 8h1v1h-1z"/><path id="f73" d="M1 3h3v1h-3zM0 4h1v1h-1zM4 4h1v1h-1zM1 5h2v1h-2zM3 6h1v1h-1zM0 7h1v1h-1zM4 7h1v1h-1zM1 8h3v1h-3z"/><path id="f74" d="M1 1h1v1h-1zM1 2h1v1h-1zM0 3h4v1h-4zM1 4h1v1h-1zM1 5h1v1h-1zM1 6h1v1h-1zM1 7h1v1h-1zM4 7h1v1h-1zM2 8h2v1h-2z"/><path id="f75" d="M0 3h1v1h-1zM4 3h1v1h-1zM0 4h1v1h-1zM4 4h1v1h-1zM0 5h1v1h-1zM4 5h1v1h-1zM0 6h1v1h-1zM4 6h1v1h-1zM0 7h1v1h-1zM4 7h1v1h-1zM1 8h4v1h-4z"/><path id="f79" d="M0 3h1v1h-1zM4 3h1v1h-1zM0 4h1v1h-1zM4 4h1v1h-1zM0 5h1v1h-1zM4 5h1v1h-1zM0 6h1v1h-1zM4 6h1v1h-1zM1 7h4v1h-4zM4 8h1v1h-1zM0 9h1v1h-1zM4 9h1v1h-1zM1 10h3v1h-3z"/><path id="f7a" d="M0 3h5v1h-5zM3 4h1v1h-1zM2 5h1v1h-1zM1 6h1v1h-1zM0 7h1v1h-1zM0 8h5v1h-5z"/></defs><rect x="57" y="49" width="1002" height="1" fill="#8c8c8c"/><rect x="57" y="307" width="1002" height="1" fill="#8c8c8c"/><rect x="57" y="565" width="1002" height="1" fill="#8c8c8c"/><rect x="57" y="49" width="1" height="517" fill="#8c8c8c"/><rect x="1058" y="49" width="1" height="517" fill="#8c8c8c"/><rect x="57" y="47" width="1" height="2" fill="#8c8c8c"/><rect x="57" y="566" width="1" height="2" fill="#8c8c8c"/><rect x="103" y="47" width="1" height="2" fill="#8c8c8c"/><rect x="103" y="566" width="1" height="2" fill="#8c8c8c"/><rect x="149" y="47" width="1" height="2" fill="#8c8c8c"/><rect x="149" y="566" width="1" height="2" fill="#8c8c8c"/><rect x="195" y="47" width="1" height="2" fill="#8c8c8c"/><rect x="195" y="566" width="1" height="2" fill="#8c8c8c"/><rect x="242" y="47" width="1" height="2" fill="#8c8c8c"/><rect x="242" y="566" width="1" height="2" fill="#8c8c8c"/><rect x="288" y="47" width="1" height="2" fill="#8c8c8c"/><rect x="288" y="566" width="1" height="2" fill="#8c8c8c"/><rect x="334" y="47" width="1" height="2" fill="#8c8c8c"/><rect x="334" y="566" width="1" height="2" fill="#8c8c8c"/><rect x="380" y="47" width="1" height="2" fill="#8c8c8c"/><rect x="380" y="566" width="1" height="2" fill="#8c8c8c"/><rect x="427" y="47" width="1" height="2" fill="#8c8c8c"/><rect x="427" y="566" width="1" height="2" fill="#8c8c8c"/><rect x="473" y="47" width="1" height="2" fill="#8c8c8c"/><rect x="473" y="566" width="1" height="2" fill="#8c8c8c"/><rect x="519" y="47" width="1" height="2" fill="#8c8c8c"/><rect x="519" y="566" width="1" height="2" fill="#8c8c8c"/><rect x="566" y="47" width="1" height="2" fill="#8c8c8c"/><rect x="566" y="566" width="1" height="2" fill="#8c8c8c"/><rect x="612" y="47" width="1" height="2" fill="#8c8c8c"/><rect x="612" y="566" width="1" height="2" fill="#8c8c8c"/><rect x="658" y="47" width="1" height="2" fill="#8c8c8c"/><rect x="658" y="566" width="1" height="2" fill="#8c8c8c"/><rect x="704" y="47" width="1" height="2" fill="#8c8c8c"/><rect x="704" y="566" width="1" height="2" fill="#8c8c8c"/><rect x="751" y="47" width="1" height="2" fill="#8c8c8c"/><rect x="751" y="566" width="1" height="2" fill="#8c8c8c"/><rect x="797" y="47" width="1" height="2" fill="#8c8c8c"/><rect x="797" y="566" width="1" height="2" fill="#8c8c8c"/><rect x="843" y="47" width="1" height="2" fill="#8c8c8c"/><rect x="843" y="566" width="1" height="2" fill="#8c8c8c"/><rect x="890" y="47" width="1" height="2" fill="#8c8c8c"/><rect x="890" y="566" width="1" height="2" fill="#8c8c8c"/><rect x="936" y="47" width="1" height="2" fill="#8c8c8c"/><rect x="936" y="566" width="1" height="2" fill="#8c8c8c"/><rect x="982" y="47" width="1" height="2" fill="#8c8c8c"/><rect x="982" y="566" width="1" height="2" fill="#8c8c8c"/><rect x="1028" y="47" width="1" height="2" fill="#8c8c8c"/><rect x="1028" y="566" width="1" height="2" fill="#8c8c8c"/><rect x="55" y="283" width="2" height="1" fill="#8c8c8c"/><rect x="1059" y="283" width="2" height="1" fill="#8c8c8c"/><rect x="55" y="260" width="2" height="1" fill="#8c8c8c"/><rect x="1059" y="260" width="2" height="1" fill="#8c8c8c"/><rect x="55" y="236" width="2" height="1" fill="#8c8c8c"/><rect x="1059" y="236" width="2" height="1" fill="#8c8c8c"/><rect x="55" y="213" width="2" height="1" fill="#8c8c8c"/><rect x="1059" y="213" width="2" height="1" fill="#8c8c8c"/><rect x="55" y="190" width="2" height="1" fill="#8c8c8c"/><rect x="1059" y="190" width="2" height="1" fill="#8c8c8c"/><rect x="55" y="167" width="2" height="1" fill="#8c8c8c"/><rect x="1059" y="167" width="2" height="1" fill="#8c8c8c"/><rect x="55" y="143" width="2" height="1" fill="#8c8c8c"/><rect x="1059" y="143" width="2" height="1" fill="#8c8c8c"/><rect x="55" y="120" width="2" height="1" fill="#8c8c8c"/><rect x="1059" y="120" width="2" height="1" fill="#8c8c8c"/><rect x="55" y="97" width="2" height="1" fill="#8c8c8c"/><rect x="1059" y="97" width="2" height="1" fill="#8c8c8c"/><rect x="55" y="74" width="2" height="1" fill="#8c8c8c"/><rect x="1059" y="74" width="2" height="1" fill="#8c8c8c"/><rect x="55" y="51" width="2" height="1" fill="#8c8c8c"/><rect x="1059" y="51" width="2" height="1" fill="#8c8c8c"/><rect x="55" y="541" width="2" height="1" fill="#8c8c8c"/><rect x="1059" y="541" width="2" height="1" fill="#8c8c8c"/><rect x="55" y="518" width="2" height="1" fill="#8c8c8c"/><rect x="1059" y="518" width="2" height="1" fill="#8c8c8c"/><rect x="55" y="494" width="2" height="1" fill="#8c8c8c"/><rect x="1059" y="494" width="2" height="1" fill="#8c8c8c"/><rect x="55" y="471" width="2" height="1" fill="#8c8c8c"/><rect x="1059" y="471" width="2" height="1" fill="#8c8c8c"/><rect x="55" y="448" width="2" height="1" fill="#8c8c8c"/><rect x="1059" y="448" width="2" height="1" fill="#8c8c8c"/><rect x="55" y="425" width="2" height="1" fill="#8c8c8c"/><rect x="1059" y="425" width="2" height="1" fill="#8c8c8c"/><rect x="55" y="401" width="2" height="1" fill="#8c8c8c"/><rect x="1059" y="401" width="2" height="1" fill="#8c8c8c"/><rect x="55" y="378" width="2" height="1" fill="#8c8c8c"/><rect x="1059" y="378" width="2" height="1" fill="#8c8c8c"/><rect x="55" y="355" width="2" height="1" fill="#8c8c8c"/><rect x="1059" y="355" width="2" height="1" fill="#8c8c8c"/><rect x="55" y="332" width="2" height="1" fill="#8c8c8c"/><rect x="1059" y="332" width="2" height="1" fill="#8c8c8c"/><rect x="55" y="309" width="2" height="1" fill="#8c8c8c"/><rect x="1059" y="309" width="2" height="1" fill="#8c8c8c"/><rect x="55" y="564" width="2" height="1" fill="#8c8c8c"/><rect x="1059" y="564" width="2" height="1" fill="#8c8c8c"/><rect x="55" y="306" width="2" height="1" fill="#8c8c8c"/><rect x="1059" y="306" width="2" height="1" fill="#8c8c8c"/><g fill="#d8d8d8"><use href="#f30" x="55" y="36"/></g><g fill="#d8d8d8"><use href="#f30" x="55" y="571"/></g><g fill="#d8d8d8"><use href="#f31" x="98" y="36"/><use href="#f30" x="104" y="36"/></g><g fill="#d8d8d8"><use href="#f31" x="98" y="571"/><use href="#f30" x="104" y="571"/></g><g fill="#d8d8d8"><use href="#f32" x="144" y="36"/><use href="#f30" x="150" y="36"/></g><g fill="#d8d8d8"><use href="#f32" x="144" y="571"/><use href="#f30" x="150" y="571"/></g><g fill="#d8d8d8"><use href="#f33" x="190" y="36"/><use href="#f30" x="196" y="36"/></g><g fill="#d8d8d8"><use href="#f33" x="190" y="571"/><use href="#f30" x="196" y="571"/></g><g fill="#d8d8d8"><use href="#f34" x="237" y="36"/><use href="#f30" x="243" y="36"/></g><g fill="#d8d8d8"><use href="#f34" x="237" y="571"/><use href="#f30" x="243" y="571"/></g><g fill="#d8d8d8"><use href="#f35" x="283" y="36"/><use href="#f30" x="289" y="36"/></g><g fill="#d8d8d8"><use href="#f35" x="283" y="571"/><use href="#f30" x="289" y="571"/></g><g fill="#d8d8d8"><use href="#f36" x="329" y="36"/><use href="#f30" x="335" y="36"/></g><g fill="#d8d8d8"><use href="#f36" x="329" y="571"/><use href="#f30" x="335" y="571"/></g><g fill="#d8d8d8"><use href="#f37" x="375" y="36"/><use href="#f30" x="381" y="36"/></g><g fill="#d8d8d8"><use href="#f37" x="375" y="571"/><use href="#f30" x="381" y="571"/></g><g fill="#d8d8d8"><use href="#f38" x="422" y="36"/><use href="#f30" x="428" y="36"/></g><g fill="#d8d8d8"><use href="#f38" x="422" y="571"/><use href="#f30" x="428" y="571"/></g><g fill="#d8d8d8"><use href="#f39" x="468" y="36"/><use href="#f30" x="474" y="36"/></g><g fill="#d8d8d8"><use href="#f39" x="468" y="571"/><use href="#f30" x="474" y="571"/></g><g fill="#d8d8d8"><use href="#f31" x="511" y="36"/><use href="#f30" x="517" y="36"/><use href="#f30" x="523" y="36"/></g><g fill="#d8d8d8"><use href="#f31" x="511" y="571"/><use href="#f30" x="517" y="571"/><use href="#f30" x="523" y="571"/></g><g fill="#d8d8d8"><use href="#f31" x="558" y="36"/><use href="#f31" x="564" y="36"/><use href="#f30" x="570" y="36"/></g><g fill="#d8d8d8"><use href="#f31" x="558" y="571"/><use href="#f31" x="564" y="571"/><use href="#f30" x="570" y="571"/></g><g fill="#d8d8d8"><use href="#f31" x="604" y="36"/><use href="#f32" x="610" y="36"/><use href="#f30" x="616" y="36"/></g><g fill="#d8d8d8"><use href="#f31" x="604" y="571"/><use href="#f32" x="610" y="571"/><use href="#f30" x="616" y="571"/></g><g fill="#d8d8d8"><use href="#f31" x="650" y="36"/><use href="#f33" x="656" y="36"/><use href="#f30" x="662" y="36"/></g><g fill="#d8d8d8"><use href="#f31" x="650" y="571"/><use href="#f33" x="656" y="571"/><use href="#f30" x="662" y="571"/></g><g fill="#d8d8d8"><use href="#f31" x="696" y="36"/><use href="#f34" x="702" y="36"/><use href="#f30" x="708" y="36"/></g><g fill="#d8d8d8"><use href="#f31" x="696" y="571"/><use href="#f34" x="702" y="571"/><use href="#f30" x="708" y="571"/></g><g fill="#d8d8d8"><use href="#f31" x="743" y="36"/><use href="#f35" x="749" y="36"/><use href="#f30" x="755" y="36"/></g><g fill="#d8d8d8"><use href="#f31" x="743" y="571"/><use href="#f35" x="749" y="571"/><use href="#f30" x="755" y="571"/></g><g fill="#d8d8d8"><use href="#f31" x="789" y="36"/><use href="#f36" x="795" y="36"/><use href="#f30" x="801" y="36"/></g><g fill="#d8d8d8"><use href="#f31" x="789" y="571"/><use href="#f36" x="795" y="571"/><use href="#f30" x="801" y="571"/></g><g fill="#d8d8d8"><use href="#f31" x="835" y="36"/><use href="#f37" x="841" y="36"/><use href="#f30" x="847" y="36"/></g><g fill="#d8d8d8"><use href="#f31" x="835" y="571"/><use href="#f37" x="841" y="571"/><use href="#f30" x="847" y="571"/></g><g fill="#d8d8d8"><use href="#f31" x="882" y="36"/><use href="#f38" x="888" y="36"/><use href="#f30" x="894" y="36"/></g><g fill="#d8d8d8"><use href="#f31" x="882" y="571"/><use href="#f38" x="888" y="571"/><use href="#f30" x="894" y="571"/></g><g fill="#d8d8d8"><use href="#f31" x="928" y="36"/><use href="#f39" x="934" y="36"/><use href="#f30" x="940" y="36"/></g><g fill="#d8d8d8"><use href="#f31" x="928" y="571"/><use href="#f39" x="934" y="571"/><use href="#f30" x="940" y="571"/></g><g fill="#d8d8d8"><use href="#f32" x="974" y="36"/><use href="#f30" x="980" y="36"/><use href="#f30" x="986" y="36"/></g><g fill="#d8d8d8"><use href="#f32" x="974" y="571"/><use href="#f30" x="980" y="571"/><use href="#f30" x="986" y="571"/></g><g fill="#d8d8d8"><use href="#f32" x="1020" y="36"/><use href="#f31" x="1026" y="36"/><use href="#f30" x="1032" y="36"/></g><g fill="#d8d8d8"><use href="#f32" x="1020" y="571"/><use href="#f31" x="1026" y="571"/><use href="#f30" x="1032" y="571"/></g><g fill="#d8d8d8"><use href="#f32" x="48" y="279"/></g><g fill="#d8d8d8"><use href="#f32" x="1064" y="279"/></g><g fill="#d8d8d8"><use href="#f34" x="48" y="256"/></g><g fill="#d8d8d8"><use href="#f34" x="1064" y="256"/></g><g fill="#d8d8d8"><use href="#f36" x="48" y="232"/></g><g fill="#d8d8d8"><use href="#f36" x="1064" y="232"/></g><g fill="#d8d8d8"><use href="#f38" x="48" y="209"/></g><g fill="#d8d8d8"><use href="#f38" x="1064" y="209"/></g><g fill="#d8d8d8"><use href="#f31" x="42" y="186"/><use href="#f30" x="48" y="186"/></g><g fill="#d8d8d8"><use href="#f31" x="1064" y="186"/><use href="#f30" x="1070" y="186"/></g><g fill="#d8d8d8"><use href="#f31" x="42" y="163"/><use href="#f32" x="48" y="163"/></g><g fill="#d8d8d8"><use href="#f31" x="1064" y="163"/><use href="#f32" x="1070" y="163"/></g><g fill="#d8d8d8"><use href="#f31" x="42" y="139"/><use href="#f34" x="48" y="139"/></g><g fill="#d8d8d8"><use href="#f31" x="1064" y="139"/><use href="#f34" x="1070" y="139"/></g><g fill="#d8d8d8"><use href="#f31" x="42" y="116"/><use href="#f36" x="48" y="116"/></g><g fill="#d8d8d8"><use href="#f31" x="1064" y="116"/><use href="#f36" x="1070" y="116"/></g><g fill="#d8d8d8"><use href="#f31" x="42" y="93"/><use href="#f38" x="48" y="93"/></g><g fill="#d8d8d8"><use href="#f31" x="1064" y="93"/><use href="#f38" x="1070" y="93"/></g><g fill="#d8d8d8"><use href="#f32" x="42" y="70"/><use href="#f30" x="48" y="70"/></g><g fill="#d8d8d8"><use href="#f32" x="1064" y="70"/><use href="#f30" x="1070" y="70"/></g><g fill="#d8d8d8"><use href="#f32" x="42" y="47"/><use href="#f32" x="48" y="47"/></g><g fill="#d8d8d8"><use href="#f32" x="1064" y="47"/><use href="#f32" x="1070" y="47"/></g><g fill="#d8d8d8"><use href="#f32" x="48" y="537"/></g><g fill="#d8d8d8"><use href="#f32" x="1064" y="537"/></g><g fill="#d8d8d8"><use href="#f34" x="48" y="514"/></g><g fill="#d8d8d8"><use href="#f34" x="1064" y="514"/></g><g fill="#d8d8d8"><use href="#f36" x="48" y="490"/></g><g fill="#d8d8d8"><use href="#f36" x="1064" y="490"/></g><g fill="#d8d8d8"><use href="#f38" x="48" y="467"/></g><g fill="#d8d8d8"><use href="#f38" x="1064" y="467"/></g><g fill="#d8d8d8"><use href="#f31" x="42" y="444"/><use href="#f30" x="48" y="444"/></g><g fill="#d8d8d8"><use href="#f31" x="1064" y="444"/><use href="#f30" x="1070" y="444"/></g><g fill="#d8d8d8"><use href="#f31" x="42" y="421"/><use href="#f32" x="48" y="421"/></g><g fill="#d8d8d8"><use href="#f31" x="1064" y="421"/><use href="#f32" x="1070" y="421"/></g><g fill="#d8d8d8"><use href="#f31" x="42" y="397"/><use href="#f34" x="48" y="397"/></g><g fill="#d8d8d8"><use href="#f31" x="1064" y="397"/><use href="#f34" x="1070" y="397"/></g><g fill="#d8d8d8"><use href="#f31" x="42" y="374"/><use href="#f36" x="48" y="374"/></g><g fill="#d8d8d8"><use href="#f31" x="1064" y="374"/><use href="#f36" x="1070" y="374"/></g><g fill="#d8d8d8"><use href="#f31" x="42" y="351"/><use href="#f38" x="48" y="351"/></g><g fill="#d8d8d8"><use href="#f31" x="1064" y="351"/><use href="#f38" x="1070" y="351"/></g><g fill="#d8d8d8"><use href="#f32" x="42" y="328"/><use href="#f30" x="48" y="328"/></g><g fill="#d8d8d8"><use href="#f32" x="1064" y="328"/><use href="#f30" x="1070" y="328"/></g><g fill="#d8d8d8"><use href="#f32" x="42" y="305"/><use href="#f32" x="48" y="305"/></g><g fill="#d8d8d8"><use href="#f32" x="1064" y="305"/><use href="#f32" x="1070" y="305"/></g><g fill="#d8d8d8"><use href="#f44" x="42" y="560"/><use href="#f43" x="48" y="560"/></g><g fill="#d8d8d8"><use href="#f44" x="1064" y="560"/><use href="#f43" x="1070" y="560"/></g><g fill="#d8d8d8"><use href="#f2b" x="1110" y="104"/><use href="#f30" x="1116" y="104"/></g><g fill="#d8d8d8"><use href="#f2d" x="1110" y="137"/><use href="#f31" x="1116" y="137"/><use href="#f30" x="1122" y="137"/></g><g fill="#d8d8d8"><use href="#f2d" x="1110" y="170"/><use href="#f32" x="1116" y="170"/><use href="#f30" x="1122" y="170"/></g><g fill="#d8d8d8"><use href="#f2d" x="1110" y="204"/><use href="#f33" x="1116" y="204"/><use href="#f30" x="1122" y="204"/></g><g fill="#d8d8d8"><use href="#f2d" x="1110" y="237"/><use href="#f34" x="1116" y="237"/><use href="#f30" x="1122" y="237"/></g><g fill="#d8d8d8"><use href="#f2d" x="1110" y="270"/><use href="#f35" x="1116" y="270"/><use href="#f30" x="1122" y="270"/></g><g fill="#d8d8d8"><use href="#f2d" x="1110" y="303"/><use href="#f36" x="1116" y="303"/><use href="#f30" x="1122" y="303"/></g><g fill="#d8d8d8"><use href="#f2d" x="1110" y="337"/><use href="#f37" x="1116" y="337"/><use href="#f30" x="1122" y="337"/></g><g fill="#d8d8d8"><use href="#f2d" x="1110" y="370"/><use href="#f38" x="1116" y="370"/><use href="#f30" x="1122" y="370"/></g><g fill="#d8d8d8"><use href="#f2d" x="1110" y="403"/><use href="#f39" x="1116" y="403"/><use href="#f30" x="1122" y="403"/></g><g fill="#d8d8d8"><use href="#f2d" x="1110" y="436"/><use href="#f31" x="1116" y="436"/><use href="#f30" x="1122" y="436"/><use href="#f30" x="1128" y="436"/></g><g fill="#d8d8d8"><use href="#f2d" x="1110" y="470"/><use href="#f31" x="1116" y="470"/><use href="#f31" x="1122" y="470"/><use href="#f30" x="1128" y="470"/></g><g fill="#d8d8d8"><use href="#f2d" x="1110" y="503"/><use href="#f31" x="1116" y="503"/><use href="#f32" x="1122" y="503"/><use href="#f30" x="1128" y="503"/></g><g fill="#ffffff"><use href="#f64" x="1101" y="521"/><use href="#f42" x="1107" y="521"/><use href="#f46" x="1113" y="521"/><use href="#f53" x="1119" y="521"/></g><g fill="#ffffff"><use href="#f31" x="413" y="12"/><use href="#f33" x="419" y="12"/><use href="#f2e" x="425" y="12"/><use href="#f4e" x="437" y="12"/><use href="#f65" x="443" y="12"/><use href="#f6f" x="449" y="12"/><use href="#f6e" x="455" y="12"/><use href="#f43" x="467" y="12"/><use href="#f61" x="473" y="12"/><use href="#f70" x="479" y="12"/><use href="#f69" x="485" y="12"/><use href="#f74" x="491" y="12"/><use href="#f61" x="497" y="12"/><use href="#f6c" x="503" y="12"/><use href="#f26" x="515" y="12"/><use href="#f43" x="527" y="12"/><use href="#f6c" x="533" y="12"/><use href="#f61" x="539" y="12"/><use href="#f72" x="545" y="12"/><use href="#f61" x="551" y="12"/><use href="#f53" x="563" y="12"/><use href="#f6f" x="569" y="12"/><use href="#f66" x="575" y="12"/><use href="#f69" x="581" y="12"/><use href="#f65" x="587" y="12"/><use href="#f2d" x="599" y="12"/><use href="#f45" x="611" y="12"/><use href="#f61" x="617" y="12"/><use href="#f73" x="623" y="12"/><use href="#f79" x="629" y="12"/><use href="#f74" x="641" y="12"/><use href="#f6f" x="647" y="12"/><use href="#f42" x="659" y="12"/><use href="#f72" x="665" y="12"/><use href="#f65" x="671" y="12"/><use href="#f61" x="677" y="12"/><use href="#f74" x="683" y="12"/><use href="#f68" x="689" y="12"/><use href="#f65" x="695" y="12"/><use href="#f2e" x="701" y="12"/><use href="#f66" x="707" y="12"/><use href="#f6c" x="713" y="12"/><use href="#f61" x="719" y="12"/><use href="#f63" x="725" y="12"/></g><g fill="#ffffff"><use href="#f54" x="534" y="589"/><use href="#f69" x="540" y="589"/><use href="#f6d" x="546" y="589"/><use href="#f65" x="552" y="589"/><use href="#f28" x="564" y="589"/><use href="#f73" x="570" y="589"/><use href="#f29" x="576" y="589"/></g><g fill="#ffffff"><use href="#f43" x="1" y="601"/><use href="#f72" x="7" y="601"/><use href="#f65" x="13" y="601"/><use href="#f61" x="19" y="601"/><use href="#f74" x="25" y="601"/><use href="#f65" x="31" y="601"/><use href="#f64" x="37" y="601"/><use href="#f62" x="49" y="601"/><use href="#f79" x="55" y="601"/><use href="#f53" x="67" y="601"/><use href="#f6f" x="73" y="601"/><use href="#f58" x="79" y="601"/></g><g fill="#ffffff" transform="translate(11,353) rotate(-90)"><use href="#f46" x="0" y="0"/><use href="#f72" x="6" y="0"/><use href="#f65" x="12" y="0"/><use href="#f71" x="18" y="0"/><use href="#f75" x="24" y="0"/><use href="#f65" x="30" y="0"/><use href="#f6e" x="36" y="0"/><use href="#f63" x="42" y="0"/><use href="#f79" x="48" y="0"/><use href="#f28" x="60" y="0"/><use href="#f6b" x="66" y="0"/><use href="#f48" x="72" y="0"/><use href="#f7a" x="78" y="0"/><use href="#f29" x="84" y="0"/></g></svg>
</body></html>
